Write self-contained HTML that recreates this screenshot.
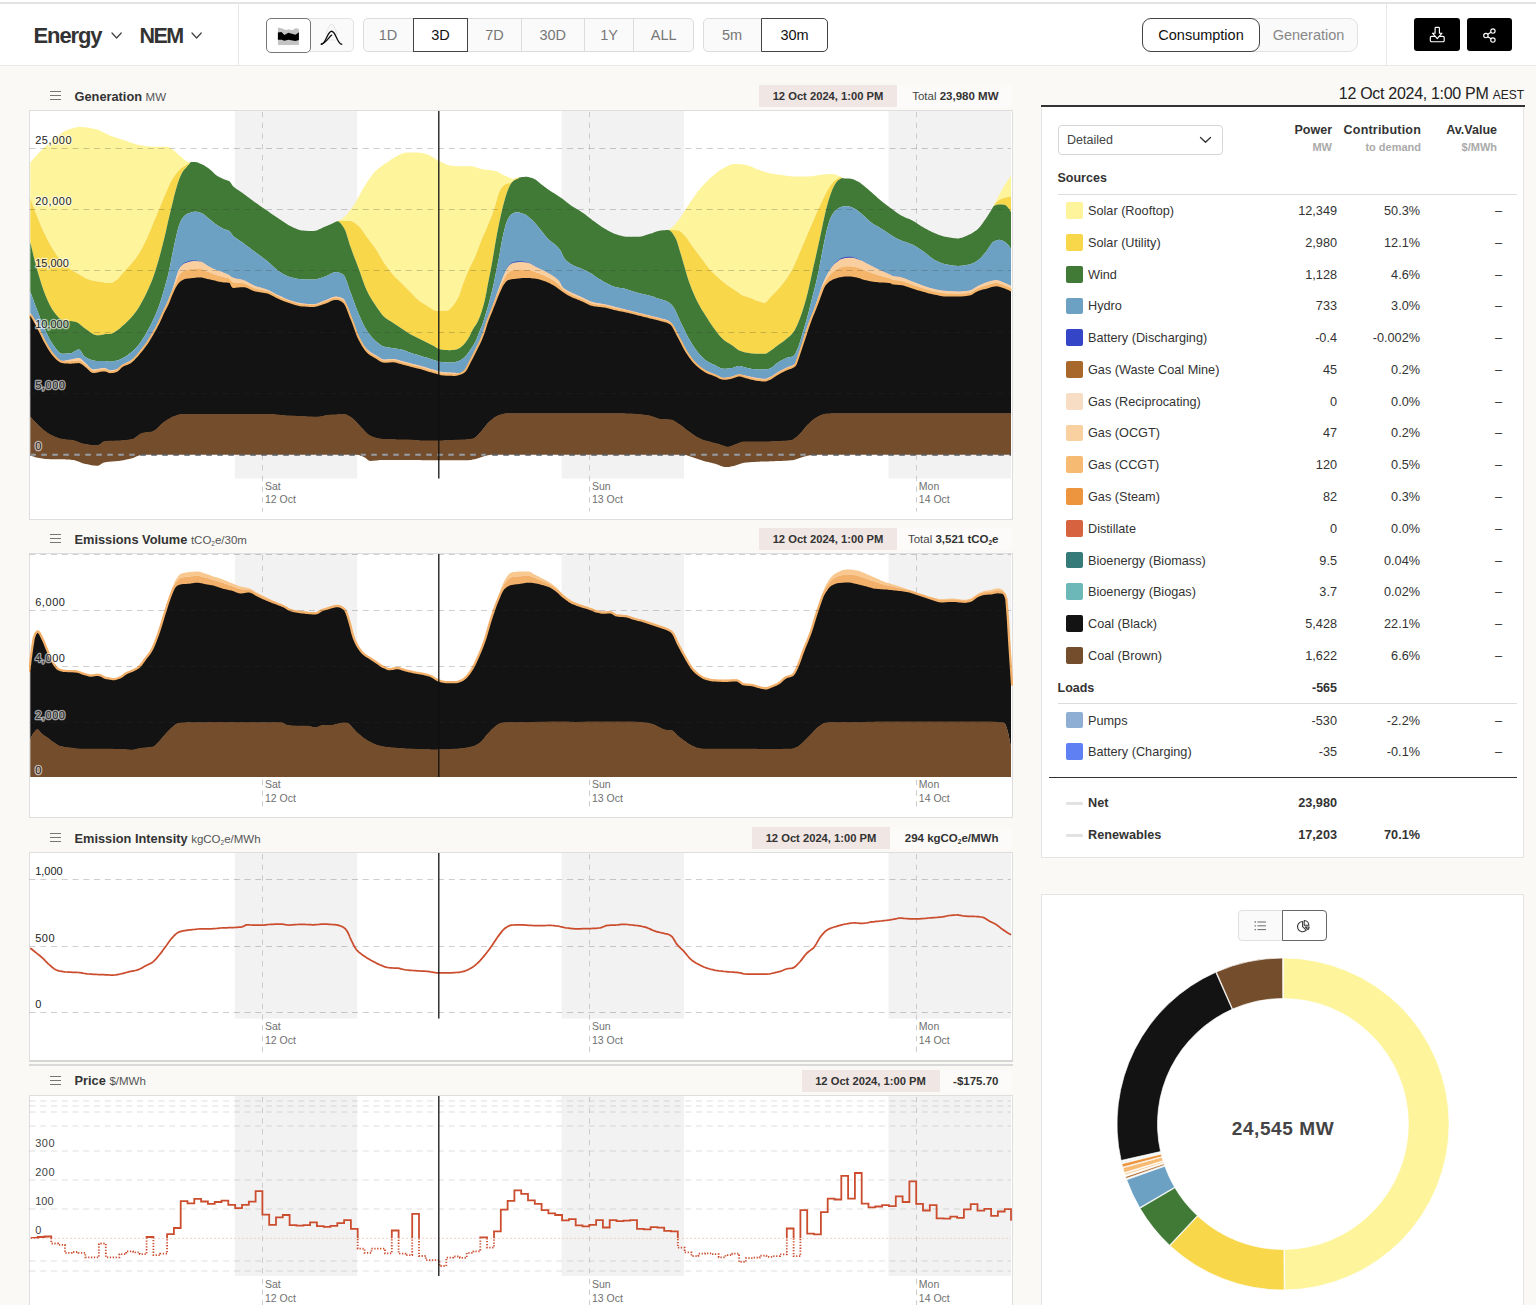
<!DOCTYPE html><html lang="en"><head><meta charset="utf-8"><title>Open Electricity: NEM</title><style>
*{box-sizing:border-box;margin:0;padding:0}
html,body{width:1536px;height:1305px;overflow:hidden;background:#faf9f6;font-family:"Liberation Sans",sans-serif;color:#333}
.abs{position:absolute}
#hdr{position:absolute;left:0;top:0;width:1536px;height:66px;background:#fff;border-bottom:1px solid #e8e8e8}
#hdr:before{content:'';position:absolute;left:0;top:1.5px;width:100%;height:2px;background:#e3e3e3}
.vdiv{position:absolute;top:3px;width:1px;height:62px;background:#e8e8e8}
.ttl{position:absolute;font-weight:bold;font-size:22px;color:#333;line-height:24px;letter-spacing:-0.9px;white-space:nowrap}
.grp{position:absolute;top:18px;height:34px;border:1px solid #dcdcdc;border-radius:5px;background:#fafafa}
.btn{position:absolute;top:18px;height:34px;font-size:14.5px;line-height:34px;text-align:center;color:#777;white-space:nowrap}
.btn.sel{background:#fff;border:1px solid #444;color:#111;line-height:32px}
.sep{position:absolute;top:19px;width:1px;height:32px;background:#dcdcdc}
.ct{position:absolute;font-size:12.8px;font-weight:bold;color:#333;white-space:nowrap;line-height:14px}
.ct span{font-weight:normal;font-size:11.5px;color:#555}
.ham{position:absolute;width:11px;height:1.1px;background:#777}
.tag{position:absolute;height:22px;background:#f0e6e3;font-size:11.2px;font-weight:bold;color:#333;text-align:center;line-height:22px;white-space:nowrap}
.tot{position:absolute;height:22px;background:#fcfbf9;font-size:11.5px;color:#444;line-height:22px;white-space:nowrap;text-align:right;padding-right:13px}
.tot b{color:#333}
.cbox{position:absolute;left:29px;width:984px;background:#fff;border:1px solid #dedede}
.row{position:absolute;left:1041px;width:483px;height:20px;font-size:12.7px;line-height:20px;color:#333;white-space:nowrap}
.row .sw{position:absolute;left:25.4px;top:1.3px;width:16.6px;height:16.6px;border-radius:2px}
.row .lb{position:absolute;left:47px;top:0}
.row .pw{position:absolute;right:187px;top:0;text-align:right}
.row .cn{position:absolute;right:104px;top:0;text-align:right}
.row .av{position:absolute;right:22px;top:0;text-align:right}
.hd{position:absolute;font-size:12.5px;font-weight:bold;color:#333;text-align:right;white-space:nowrap;line-height:14px}
.hd2{position:absolute;font-size:11px;font-weight:bold;color:#aaa;text-align:right;white-space:nowrap;line-height:14px}
sub.s{font-size:6.5px;vertical-align:baseline;position:relative;top:2px}
</style></head><body>
<div id="hdr"></div>
<div class="vdiv" style="left:238px"></div><div class="vdiv" style="left:1386px"></div>
<div class="ttl" style="left:33.5px;top:24px;letter-spacing:-1.1px">Energy</div>
<svg class="abs" style="left:110.6px;top:31.8px" width="11.2" height="7.0" viewBox="-1 -1 11.2 7.0"><path d="M0 0 L4.6 5.0 L9.2 0" fill="none" stroke="#444" stroke-width="1.3" stroke-linecap="round" stroke-linejoin="round"/></svg>
<div class="ttl" style="left:139.5px;top:24px;font-size:21.5px;letter-spacing:-1.6px">NEM</div>
<svg class="abs" style="left:191.3px;top:31.8px" width="11.2" height="7.0" viewBox="-1 -1 11.2 7.0"><path d="M0 0 L4.6 5.0 L9.2 0" fill="none" stroke="#444" stroke-width="1.3" stroke-linecap="round" stroke-linejoin="round"/></svg>
<div class="grp" style="left:266px;width:88px;top:17.7px;height:34.6px;border-color:#e2e2e2"></div>
<div class="btn sel" style="left:266px;width:44.5px;border-radius:5px;border-color:#777;top:17.5px;height:35px"></div>
<svg class="abs" style="left:277px;top:26px" width="23" height="20" viewBox="0 0 23 20"><path d="M0.9 1.5 L4.5 2.3 L9 3.9 L11.6 3.3 L15.5 4.2 L18.8 2 L21.9 3.1 L21.9 18.9 L0.9 18.9 Z" fill="#c4c4c4"/><path d="M0.9 6.5 L4.5 6 L7.4 8.9 L11.3 6.7 L18.5 8.8 L21.9 6.2 L21.9 14 L18.5 15 L11.3 13.7 L7.4 14.7 L4.5 13.7 L0.9 13.7 Z" fill="#000"/></svg>
<svg class="abs" style="left:320px;top:24px" width="24" height="22" viewBox="0 0 24 22"><path d="M5.8 10.5 C8 4.5 9.5 0.5 11.6 0.5 C13.7 0.5 15 4.5 17.2 10.5" fill="none" stroke="#dcdcdc" stroke-width="0.8"/><path d="M8.5 16.5 C10.5 15.6 12.8 15.6 14.8 16.5" fill="none" stroke="#e2e2e2" stroke-width="0.8"/><path d="M1.2 20.2 C6 20.2 7.2 7.2 11.6 7.2 C16 7.2 17.2 20.2 21.7 20.2" fill="none" stroke="#111" stroke-width="1.35" stroke-linecap="round"/><path d="M1.6 20 C5.8 19 8.5 13.8 11.6 11.1" fill="none" stroke="#111" stroke-width="1.35" stroke-linecap="round"/></svg>
<div class="grp" style="left:363px;width:331px"></div>
<div class="btn" style="left:363px;width:50px">1D</div>
<div class="btn sel" style="left:413px;width:55px">3D</div>
<div class="btn" style="left:468px;width:53px">7D</div>
<div class="btn" style="left:521px;width:63.5px">30D</div>
<div class="sep" style="left:520.5px"></div>
<div class="btn" style="left:584.5px;width:49.0px">1Y</div>
<div class="sep" style="left:584.0px"></div>
<div class="btn" style="left:633.5px;width:60.5px">ALL</div>
<div class="sep" style="left:633.0px"></div>
<div class="grp" style="left:703px;width:125px"></div>
<div class="btn" style="left:703px;width:58px">5m</div>
<div class="btn sel" style="left:761px;width:67px;border-radius:0 5px 5px 0">30m</div>
<div class="grp" style="left:1142px;width:216px;border-radius:9px;border-color:#e2e2e2"></div>
<div class="btn sel" style="left:1142px;width:118px;border-radius:9px;font-size:14.5px">Consumption</div>
<div class="btn" style="left:1260px;width:97px;font-size:14.5px;color:#888">Generation</div>
<div class="abs" style="left:1414.4px;top:18.4px;width:45.7px;height:33px;background:#000;border-radius:3px"></div>
<div class="abs" style="left:1466.8px;top:18.4px;width:45.6px;height:33px;background:#000;border-radius:3px"></div>
<svg class="abs" style="left:1429px;top:26px" width="17" height="17" viewBox="0 0 17 17" fill="none" stroke="#fff" stroke-width="1.15" stroke-linejoin="round" stroke-linecap="round"><rect x="1.3" y="10.3" width="13.9" height="5.4" rx="1.3"/><path d="M6.1 2.2 Q6.1 1.3 7 1.3 H9.5 Q10.4 1.3 10.4 2.2 V7.2 H13 L8.25 12.6 L3.5 7.2 H6.1 Z" fill="#000"/></svg>
<svg class="abs" style="left:1482px;top:27.6px" width="15" height="15" viewBox="0 0 15 15" fill="none" stroke="#fff" stroke-width="1.15"><circle cx="10.9" cy="3" r="2.2"/><circle cx="3.9" cy="7.5" r="2.2"/><circle cx="10.9" cy="12" r="2.2"/><path d="M5.8 6.3 L9 4.2 M5.8 8.7 L9 10.8"/></svg>
<div class="ham" style="left:50px;top:91.3px"></div>
<div class="ham" style="left:50px;top:95.3px"></div>
<div class="ham" style="left:50px;top:99.3px"></div>
<div class="ct" style="left:74.5px;top:89.5px">Generation <span>MW</span></div>
<div class="tag" style="left:759px;top:85px;width:138px">12 Oct 2024, 1:00 PM</div>
<div class="tot" style="left:897px;top:85px;width:114.5px">Total <b>23,980 MW</b></div>
<div class="cbox" style="top:110px;height:410px;"></div>
<svg class="abs" style="left:29px;top:110px" width="984" height="410" viewBox="0 0 984 410" font-family="Liberation Sans, sans-serif"><rect x="205.8" y="1" width="122.4" height="367.5" fill="#f2f2f2"/><rect x="532.6" y="1" width="122.5" height="367.5" fill="#f2f2f2"/><rect x="859.5" y="1" width="122.5" height="367.5" fill="#f2f2f2"/><path d="M233.5 2 V401.5" stroke="#cbcbcb" stroke-width="1" stroke-dasharray="5.3 5.4" fill="none"/><path d="M560.5 2 V401.5" stroke="#cbcbcb" stroke-width="1" stroke-dasharray="5.3 5.4" fill="none"/><path d="M887.5 2 V401.5" stroke="#cbcbcb" stroke-width="1" stroke-dasharray="5.3 5.4" fill="none"/><path d="M1.3 52.4 L2.8 50.7 L4.3 49.0 L5.8 47.3 L7.3 45.7 L8.8 44.1 L10.3 42.6 L11.8 41.0 L13.3 39.6 L14.8 38.1 L16.3 36.6 L17.8 35.2 L19.3 33.8 L20.8 32.4 L22.3 31.0 L23.8 29.7 L25.3 28.5 L26.8 27.3 L28.3 26.2 L29.8 25.1 L31.3 24.0 L32.8 23.0 L34.3 22.0 L35.8 21.1 L37.3 20.4 L38.8 19.8 L40.3 19.3 L41.8 18.8 L43.3 18.4 L44.8 18.0 L46.3 17.6 L47.8 17.3 L49.3 17.1 L50.8 17.0 L52.3 17.0 L53.8 17.1 L55.3 17.2 L56.8 17.4 L58.3 17.6 L59.8 17.8 L61.3 18.1 L62.8 18.4 L64.3 18.7 L65.8 19.0 L67.3 19.3 L68.8 19.8 L70.3 20.3 L71.8 21.0 L73.3 21.7 L74.8 22.5 L76.3 23.2 L77.8 24.0 L79.3 24.7 L80.8 25.4 L82.3 25.9 L83.8 26.5 L85.3 27.0 L86.8 27.5 L88.3 28.0 L89.8 28.5 L91.3 29.0 L92.8 29.5 L94.3 30.0 L95.8 30.4 L97.3 30.9 L98.8 31.4 L100.3 31.9 L101.8 32.4 L103.3 32.9 L104.8 33.4 L106.3 33.9 L107.8 34.4 L109.3 34.8 L110.8 35.1 L112.3 35.4 L113.8 35.6 L115.3 35.9 L116.8 36.1 L118.3 36.3 L119.8 36.4 L121.3 36.6 L122.8 36.7 L124.3 36.8 L125.8 36.8 L127.3 36.8 L128.8 36.8 L130.3 36.8 L131.8 36.8 L133.3 36.8 L134.8 36.8 L136.3 36.8 L137.8 36.8 L139.3 37.1 L140.8 37.8 L142.3 38.7 L143.8 39.7 L145.3 40.8 L146.8 42.0 L148.3 43.5 L149.8 44.9 L151.3 46.2 L152.8 47.5 L154.3 48.8 L155.8 50.1 L157.3 51.2 L158.8 51.8 L160.3 51.9 L161.8 51.9 L163.3 51.9 L164.8 51.9 L166.3 51.9 L167.8 52.3 L169.3 52.8 L170.8 53.4 L172.3 54.1 L173.8 54.8 L175.3 55.6 L176.8 56.5 L178.3 57.5 L179.8 58.6 L181.3 59.7 L182.8 61.0 L184.3 62.5 L185.8 63.9 L187.3 65.2 L188.8 66.2 L190.3 67.0 L191.8 67.8 L193.3 68.5 L194.8 69.2 L196.3 69.8 L197.8 70.3 L199.3 70.8 L200.8 71.5 L202.3 73.8 L203.8 75.9 L205.3 77.3 L206.8 78.5 L208.3 79.6 L209.8 80.6 L211.3 81.5 L212.8 82.5 L214.3 83.5 L215.8 84.7 L217.3 85.8 L218.8 86.9 L220.3 88.1 L221.8 89.2 L223.3 90.3 L224.8 91.4 L226.3 92.5 L227.8 93.6 L229.3 94.6 L230.8 95.7 L232.3 96.7 L233.8 97.7 L235.3 98.7 L236.8 99.8 L238.3 100.8 L239.8 101.8 L241.3 102.9 L242.8 104.0 L244.3 105.0 L245.8 106.1 L247.3 107.1 L248.8 108.1 L250.3 109.1 L251.8 110.1 L253.3 111.1 L254.8 112.1 L256.3 113.1 L257.8 114.1 L259.3 115.0 L260.8 115.8 L262.3 116.5 L263.8 117.2 L265.3 118.0 L266.8 118.6 L268.3 119.3 L269.8 119.8 L271.3 120.2 L272.8 120.4 L274.3 120.6 L275.8 120.7 L277.3 120.8 L278.8 120.9 L280.3 120.9 L281.8 121.0 L283.3 121.0 L284.8 121.0 L286.3 120.8 L287.8 120.4 L289.3 119.8 L290.8 119.1 L292.3 118.4 L293.8 117.6 L295.3 116.9 L296.8 116.3 L298.3 115.7 L299.8 115.0 L301.3 114.4 L302.8 113.7 L304.3 113.0 L305.8 112.3 L307.3 111.6 L308.8 111.0 L310.3 110.3 L311.8 109.6 L313.3 108.7 L314.8 107.5 L316.3 106.1 L317.8 104.5 L319.3 102.7 L320.8 100.7 L322.3 98.7 L323.8 96.7 L325.3 94.5 L326.8 92.0 L328.3 89.3 L329.8 86.5 L331.3 83.7 L332.8 80.9 L334.3 78.3 L335.8 75.9 L337.3 73.6 L338.8 71.2 L340.3 69.0 L341.8 66.9 L343.3 64.8 L344.8 63.0 L346.3 61.3 L347.8 59.9 L349.3 58.6 L350.8 57.4 L352.3 56.3 L353.8 55.3 L355.3 54.3 L356.8 53.3 L358.3 52.3 L359.8 51.2 L361.3 50.2 L362.8 49.1 L364.3 48.2 L365.8 47.2 L367.3 46.4 L368.8 45.6 L370.3 44.9 L371.8 44.3 L373.3 43.6 L374.8 43.1 L376.3 42.7 L377.8 42.5 L379.3 42.5 L380.8 42.5 L382.3 42.5 L383.8 42.5 L385.3 42.5 L386.8 42.5 L388.3 42.5 L389.8 42.5 L391.3 42.7 L392.8 42.9 L394.3 43.3 L395.8 43.7 L397.3 44.2 L398.8 44.7 L400.3 45.3 L401.8 45.9 L403.3 46.7 L404.8 47.7 L406.3 48.7 L407.8 49.7 L409.3 50.6 L410.8 51.4 L412.3 52.1 L413.8 52.9 L415.3 53.6 L416.8 54.2 L418.3 54.8 L419.8 55.2 L421.3 55.4 L422.8 55.7 L424.3 55.9 L425.8 56.0 L427.3 56.2 L428.8 56.3 L430.3 56.3 L431.8 56.3 L433.3 56.3 L434.8 56.3 L436.3 56.3 L437.8 56.3 L439.3 56.3 L440.8 56.3 L442.3 56.3 L443.8 56.5 L445.3 56.8 L446.8 57.3 L448.3 57.8 L449.8 58.3 L451.3 58.7 L452.8 59.1 L454.3 59.4 L455.8 59.6 L457.3 59.8 L458.8 59.9 L460.3 60.1 L461.8 60.3 L463.3 60.5 L464.8 60.7 L466.3 61.0 L467.8 61.5 L469.3 62.1 L470.8 62.9 L472.3 63.8 L473.8 64.7 L475.3 65.5 L476.8 66.1 L478.3 66.8 L479.8 67.5 L481.3 68.1 L482.8 68.5 L484.3 68.7 L485.8 68.6 L487.3 68.3 L488.8 67.8 L490.3 67.4 L491.8 67.2 L493.3 67.0 L494.8 66.9 L496.3 66.8 L497.8 66.8 L499.3 67.0 L500.8 67.4 L502.3 67.8 L503.8 68.3 L505.3 68.9 L506.8 69.8 L508.3 70.9 L509.8 72.2 L511.3 73.5 L512.8 74.7 L514.3 75.8 L515.8 77.0 L517.3 78.1 L518.8 79.2 L520.3 80.3 L521.8 81.3 L523.3 82.2 L524.8 83.1 L526.3 84.0 L527.8 84.9 L529.3 85.9 L530.8 86.9 L532.3 87.9 L533.8 89.1 L535.3 90.3 L536.8 91.5 L538.3 92.7 L539.8 93.8 L541.3 94.9 L542.8 95.9 L544.3 96.9 L545.8 97.8 L547.3 98.7 L548.8 99.6 L550.3 100.5 L551.8 101.4 L553.3 102.5 L554.8 103.5 L556.3 104.6 L557.8 105.8 L559.3 107.0 L560.8 108.1 L562.3 109.3 L563.8 110.4 L565.3 111.5 L566.8 112.6 L568.3 113.7 L569.8 114.8 L571.3 115.8 L572.8 116.9 L574.3 117.8 L575.8 118.7 L577.3 119.6 L578.8 120.5 L580.3 121.3 L581.8 122.1 L583.3 122.8 L584.8 123.5 L586.3 124.0 L587.8 124.5 L589.3 125.0 L590.8 125.4 L592.3 125.8 L593.8 126.2 L595.3 126.5 L596.8 126.7 L598.3 126.7 L599.8 126.7 L601.3 126.7 L602.8 126.7 L604.3 126.7 L605.8 126.7 L607.3 126.7 L608.8 126.7 L610.3 126.7 L611.8 126.5 L613.3 126.2 L614.8 125.7 L616.3 125.3 L617.8 124.8 L619.3 124.3 L620.8 123.8 L622.3 123.4 L623.8 122.9 L625.3 122.3 L626.8 121.8 L628.3 121.3 L629.8 120.9 L631.3 120.6 L632.8 120.4 L634.3 120.3 L635.8 120.2 L637.3 120.1 L638.8 119.9 L640.3 119.6 L641.8 118.6 L643.3 117.3 L644.8 115.7 L646.3 113.9 L647.8 112.1 L649.3 110.3 L650.8 108.4 L652.3 106.2 L653.8 103.9 L655.3 101.5 L656.8 99.1 L658.3 96.7 L659.8 94.4 L661.3 92.2 L662.8 90.1 L664.3 87.9 L665.8 85.7 L667.3 83.6 L668.8 81.6 L670.3 79.7 L671.8 77.9 L673.3 76.2 L674.8 74.5 L676.3 73.0 L677.8 71.5 L679.3 70.0 L680.8 68.6 L682.3 67.3 L683.8 66.0 L685.3 64.7 L686.8 63.4 L688.3 62.2 L689.8 61.0 L691.3 60.0 L692.8 59.0 L694.3 58.2 L695.8 57.4 L697.3 56.6 L698.8 55.9 L700.3 55.2 L701.8 54.6 L703.3 54.2 L704.8 53.9 L706.3 53.9 L707.8 53.9 L709.3 54.0 L710.8 54.2 L712.3 54.3 L713.8 54.6 L715.3 54.8 L716.8 55.1 L718.3 55.3 L719.8 55.7 L721.3 56.2 L722.8 56.8 L724.3 57.5 L725.8 58.2 L727.3 58.9 L728.8 59.5 L730.3 60.1 L731.8 60.6 L733.3 61.1 L734.8 61.6 L736.3 62.1 L737.8 62.6 L739.3 63.0 L740.8 63.3 L742.3 63.6 L743.8 63.8 L745.3 64.0 L746.8 64.2 L748.3 64.4 L749.8 64.6 L751.3 64.8 L752.8 64.9 L754.3 65.2 L755.8 65.4 L757.3 65.7 L758.8 66.0 L760.3 66.2 L761.8 66.3 L763.3 66.4 L764.8 66.4 L766.3 66.4 L767.8 66.4 L769.3 66.4 L770.8 66.4 L772.3 66.4 L773.8 66.4 L775.3 66.4 L776.8 66.4 L778.3 66.4 L779.8 66.4 L781.3 66.3 L782.8 66.2 L784.3 65.9 L785.8 65.7 L787.3 65.4 L788.8 65.2 L790.3 65.0 L791.8 64.8 L793.3 64.6 L794.8 64.5 L796.3 64.3 L797.8 64.2 L799.3 64.0 L800.8 64.0 L802.3 63.9 L803.8 64.1 L805.3 64.3 L806.8 64.7 L808.3 65.3 L809.8 65.8 L811.3 66.7 L812.8 67.8 L814.3 68.2 L815.8 68.4 L817.3 68.5 L818.8 68.5 L820.3 68.6 L821.8 68.8 L823.3 69.1 L824.8 69.6 L826.3 70.2 L827.8 71.0 L829.3 71.7 L830.8 72.6 L832.3 73.7 L833.8 74.9 L835.3 76.1 L836.8 77.4 L838.3 78.6 L839.8 79.9 L841.3 81.3 L842.8 82.6 L844.3 83.9 L845.8 85.3 L847.3 86.6 L848.8 87.9 L850.3 89.2 L851.8 90.5 L853.3 91.7 L854.8 92.9 L856.3 94.0 L857.8 95.2 L859.3 96.3 L860.8 97.4 L862.3 98.5 L863.8 99.7 L865.3 100.8 L866.8 101.9 L868.3 103.0 L869.8 104.1 L871.3 105.0 L872.8 105.8 L874.3 106.6 L875.8 107.2 L877.3 107.9 L878.8 108.5 L880.3 109.1 L881.8 109.8 L883.3 110.5 L884.8 111.3 L886.3 112.2 L887.8 113.2 L889.3 114.2 L890.8 115.2 L892.3 116.2 L893.8 117.1 L895.3 117.9 L896.8 118.8 L898.3 119.6 L899.8 120.4 L901.3 121.1 L902.8 121.9 L904.3 122.6 L905.8 123.2 L907.3 123.8 L908.8 124.4 L910.3 124.9 L911.8 125.5 L913.3 126.0 L914.8 126.4 L916.3 126.8 L917.8 127.1 L919.3 127.3 L920.8 127.6 L922.3 127.8 L923.8 128.0 L925.3 128.2 L926.8 128.3 L928.3 128.4 L929.8 128.4 L931.3 128.1 L932.8 127.7 L934.3 127.2 L935.8 126.6 L937.3 126.0 L938.8 125.3 L940.3 124.6 L941.8 123.9 L943.3 123.1 L944.8 122.1 L946.3 121.1 L947.8 119.9 L949.3 118.5 L950.8 116.9 L952.3 115.0 L953.8 112.9 L955.3 110.8 L956.8 108.7 L958.3 106.5 L959.8 104.1 L961.3 101.7 L962.8 99.2 L964.3 96.5 L965.8 93.7 L967.3 90.6 L968.8 87.5 L970.3 84.6 L971.8 81.8 L973.3 79.2 L974.8 76.6 L976.3 74.2 L977.8 71.8 L979.3 69.5 L982.0 65.8 L982.0 86.5 L979.3 86.9 L977.8 87.3 L976.3 87.7 L974.8 88.1 L973.3 88.6 L971.8 89.3 L970.3 90.0 L968.8 91.0 L967.3 92.4 L965.8 94.0 L964.3 96.5 L962.8 99.2 L961.3 101.7 L959.8 104.1 L958.3 106.5 L956.8 108.7 L955.3 110.8 L953.8 112.9 L952.3 115.0 L950.8 116.9 L949.3 118.5 L947.8 119.9 L946.3 121.1 L944.8 122.1 L943.3 123.1 L941.8 123.9 L940.3 124.6 L938.8 125.3 L937.3 126.0 L935.8 126.6 L934.3 127.2 L932.8 127.7 L931.3 128.1 L929.8 128.4 L928.3 128.4 L926.8 128.3 L925.3 128.2 L923.8 128.0 L922.3 127.8 L920.8 127.6 L919.3 127.3 L917.8 127.1 L916.3 126.8 L914.8 126.4 L913.3 126.0 L911.8 125.5 L910.3 124.9 L908.8 124.4 L907.3 123.8 L905.8 123.2 L904.3 122.6 L902.8 121.9 L901.3 121.1 L899.8 120.4 L898.3 119.6 L896.8 118.8 L895.3 117.9 L893.8 117.1 L892.3 116.2 L890.8 115.2 L889.3 114.2 L887.8 113.2 L886.3 112.2 L884.8 111.3 L883.3 110.5 L881.8 109.8 L880.3 109.1 L878.8 108.5 L877.3 107.9 L875.8 107.2 L874.3 106.6 L872.8 105.8 L871.3 105.0 L869.8 104.1 L868.3 103.0 L866.8 101.9 L865.3 100.8 L863.8 99.7 L862.3 98.5 L860.8 97.4 L859.3 96.3 L857.8 95.2 L856.3 94.0 L854.8 92.9 L853.3 91.7 L851.8 90.5 L850.3 89.2 L848.8 87.9 L847.3 86.6 L845.8 85.3 L844.3 83.9 L842.8 82.6 L841.3 81.3 L839.8 79.9 L838.3 78.6 L836.8 77.4 L835.3 76.1 L833.8 74.9 L832.3 73.7 L830.8 72.6 L829.3 71.7 L827.8 71.0 L826.3 70.2 L824.8 69.6 L823.3 69.1 L821.8 68.8 L820.3 68.6 L818.8 68.5 L817.3 68.5 L815.8 68.4 L814.3 68.2 L812.8 67.8 L811.3 66.7 L809.8 67.9 L808.3 68.7 L806.8 69.8 L805.3 71.1 L803.8 72.6 L802.3 74.5 L800.8 76.6 L799.3 78.9 L797.8 81.5 L796.3 84.4 L794.8 87.6 L793.3 90.8 L791.8 93.9 L790.3 97.2 L788.8 100.5 L787.3 103.8 L785.8 107.3 L784.3 110.8 L782.8 114.3 L781.3 117.8 L779.8 121.3 L778.3 124.8 L776.8 128.3 L775.3 131.8 L773.8 135.3 L772.3 138.8 L770.8 142.3 L769.3 145.9 L767.8 149.6 L766.3 153.1 L764.8 156.4 L763.3 159.3 L761.8 162.0 L760.3 164.5 L758.8 166.8 L757.3 169.0 L755.8 171.1 L754.3 173.1 L752.8 175.0 L751.3 176.8 L749.8 178.6 L748.3 180.2 L746.8 181.8 L745.3 183.3 L743.8 184.8 L742.3 186.2 L740.8 187.7 L739.3 189.7 L737.8 191.6 L736.3 192.7 L734.8 192.7 L733.3 192.4 L731.8 192.0 L730.3 191.5 L728.8 190.9 L727.3 190.4 L725.8 189.9 L724.3 189.2 L722.8 188.6 L721.3 188.0 L719.8 187.4 L718.3 186.9 L716.8 186.4 L715.3 186.0 L713.8 185.5 L712.3 184.7 L710.8 183.7 L709.3 182.6 L707.8 181.5 L706.3 180.4 L704.8 179.4 L703.3 178.4 L701.8 177.4 L700.3 176.4 L698.8 175.4 L697.3 174.4 L695.8 173.2 L694.3 172.0 L692.8 170.8 L691.3 169.5 L689.8 168.2 L688.3 166.8 L686.8 165.4 L685.3 164.0 L683.8 162.5 L682.3 161.0 L680.8 159.4 L679.3 157.6 L677.8 155.7 L676.3 153.7 L674.8 151.6 L673.3 149.5 L671.8 147.5 L670.3 145.5 L668.8 143.5 L667.3 141.5 L665.8 139.5 L664.3 137.5 L662.8 135.4 L661.3 133.2 L659.8 130.9 L658.3 128.8 L656.8 126.8 L655.3 125.2 L653.8 123.7 L652.3 122.2 L650.8 121.1 L649.3 120.5 L647.8 120.3 L646.3 120.2 L644.8 120.1 L643.3 120.0 L641.8 119.9 L640.3 119.9 L638.8 119.9 L637.3 120.1 L635.8 120.2 L634.3 120.3 L632.8 120.4 L631.3 120.6 L629.8 120.9 L628.3 121.3 L626.8 121.8 L625.3 122.3 L623.8 122.9 L622.3 123.4 L620.8 123.8 L619.3 124.3 L617.8 124.8 L616.3 125.3 L614.8 125.7 L613.3 126.2 L611.8 126.5 L610.3 126.7 L608.8 126.7 L607.3 126.7 L605.8 126.7 L604.3 126.7 L602.8 126.7 L601.3 126.7 L599.8 126.7 L598.3 126.7 L596.8 126.7 L595.3 126.5 L593.8 126.2 L592.3 125.8 L590.8 125.4 L589.3 125.0 L587.8 124.5 L586.3 124.0 L584.8 123.5 L583.3 122.8 L581.8 122.1 L580.3 121.3 L578.8 120.5 L577.3 119.6 L575.8 118.7 L574.3 117.8 L572.8 116.9 L571.3 115.8 L569.8 114.8 L568.3 113.7 L566.8 112.6 L565.3 111.5 L563.8 110.4 L562.3 109.3 L560.8 108.1 L559.3 107.0 L557.8 105.8 L556.3 104.6 L554.8 103.5 L553.3 102.5 L551.8 101.4 L550.3 100.5 L548.8 99.6 L547.3 98.7 L545.8 97.8 L544.3 96.9 L542.8 95.9 L541.3 94.9 L539.8 93.8 L538.3 92.7 L536.8 91.5 L535.3 90.3 L533.8 89.1 L532.3 87.9 L530.8 86.9 L529.3 85.9 L527.8 84.9 L526.3 84.0 L524.8 83.1 L523.3 82.2 L521.8 81.3 L520.3 80.3 L518.8 79.2 L517.3 78.1 L515.8 77.0 L514.3 75.8 L512.8 74.7 L511.3 73.5 L509.8 72.2 L508.3 70.9 L506.8 69.8 L505.3 68.9 L503.8 68.3 L502.3 67.8 L500.8 67.4 L499.3 67.0 L497.8 66.8 L496.3 66.8 L494.8 66.9 L493.3 67.0 L491.8 67.2 L490.3 67.4 L488.8 67.8 L487.3 68.3 L485.8 69.4 L484.3 70.8 L482.8 72.0 L481.3 72.8 L479.8 73.3 L478.3 73.7 L476.8 74.1 L475.3 74.9 L473.8 76.3 L472.3 78.3 L470.8 80.7 L469.3 84.4 L467.8 89.7 L466.3 95.3 L464.8 100.2 L463.3 104.3 L461.8 108.1 L460.3 111.8 L458.8 115.5 L457.3 119.0 L455.8 122.4 L454.3 125.8 L452.8 129.3 L451.3 133.0 L449.8 137.0 L448.3 141.0 L446.8 144.9 L445.3 148.5 L443.8 151.6 L442.3 154.6 L440.8 157.6 L439.3 160.8 L437.8 164.3 L436.3 168.0 L434.8 171.9 L433.3 176.0 L431.8 180.7 L430.3 184.9 L428.8 188.3 L427.3 191.0 L425.8 193.2 L424.3 195.2 L422.8 196.9 L421.3 198.7 L419.8 200.1 L418.3 200.6 L416.8 200.7 L415.3 200.7 L413.8 200.8 L412.3 200.8 L410.8 200.9 L409.3 201.2 L407.8 201.1 L406.3 200.7 L404.8 200.0 L403.3 199.2 L401.8 198.2 L400.3 197.2 L398.8 196.2 L397.3 195.3 L395.8 194.4 L394.3 193.5 L392.8 192.5 L391.3 191.5 L389.8 190.4 L388.3 189.1 L386.8 187.7 L385.3 186.2 L383.8 184.6 L382.3 183.0 L380.8 181.5 L379.3 180.0 L377.8 178.5 L376.3 177.0 L374.8 175.5 L373.3 174.0 L371.8 172.5 L370.3 171.0 L368.8 169.6 L367.3 168.2 L365.8 166.7 L364.3 165.1 L362.8 163.3 L361.3 161.5 L359.8 159.5 L358.3 157.5 L356.8 155.4 L355.3 153.2 L353.8 150.9 L352.3 148.3 L350.8 145.7 L349.3 143.1 L347.8 140.6 L346.3 138.3 L344.8 136.2 L343.3 134.2 L341.8 132.2 L340.3 130.3 L338.8 128.3 L337.3 126.3 L335.8 124.1 L334.3 121.9 L332.8 119.7 L331.3 117.8 L329.8 116.3 L328.3 115.0 L326.8 113.8 L325.3 112.7 L323.8 111.8 L322.3 111.2 L320.8 111.1 L319.3 111.1 L317.8 111.1 L316.3 111.1 L314.8 111.1 L313.3 111.1 L311.8 111.1 L310.3 111.1 L308.8 111.1 L307.3 111.6 L305.8 112.3 L304.3 113.0 L302.8 113.7 L301.3 114.4 L299.8 115.0 L298.3 115.7 L296.8 116.3 L295.3 116.9 L293.8 117.6 L292.3 118.4 L290.8 119.1 L289.3 119.8 L287.8 120.4 L286.3 120.8 L284.8 121.0 L283.3 121.0 L281.8 121.0 L280.3 120.9 L278.8 120.9 L277.3 120.8 L275.8 120.7 L274.3 120.6 L272.8 120.4 L271.3 120.2 L269.8 119.8 L268.3 119.3 L266.8 118.6 L265.3 118.0 L263.8 117.2 L262.3 116.5 L260.8 115.8 L259.3 115.0 L257.8 114.1 L256.3 113.1 L254.8 112.1 L253.3 111.1 L251.8 110.1 L250.3 109.1 L248.8 108.1 L247.3 107.1 L245.8 106.1 L244.3 105.0 L242.8 104.0 L241.3 102.9 L239.8 101.8 L238.3 100.8 L236.8 99.8 L235.3 98.7 L233.8 97.7 L232.3 96.7 L230.8 95.7 L229.3 94.6 L227.8 93.6 L226.3 92.5 L224.8 91.4 L223.3 90.3 L221.8 89.2 L220.3 88.1 L218.8 86.9 L217.3 85.8 L215.8 84.7 L214.3 83.5 L212.8 82.5 L211.3 81.5 L209.8 80.6 L208.3 79.6 L206.8 78.5 L205.3 77.3 L203.8 75.9 L202.3 73.8 L200.8 71.5 L199.3 70.8 L197.8 70.3 L196.3 69.8 L194.8 69.2 L193.3 68.5 L191.8 67.8 L190.3 67.0 L188.8 66.2 L187.3 65.2 L185.8 63.9 L184.3 62.5 L182.8 61.0 L181.3 59.7 L179.8 58.6 L178.3 57.5 L176.8 56.5 L175.3 55.6 L173.8 54.8 L172.3 54.1 L170.8 53.4 L169.3 52.8 L167.8 52.3 L166.3 51.9 L164.8 51.9 L163.3 51.9 L161.8 52.0 L160.3 53.1 L158.8 54.1 L157.3 54.9 L155.8 55.7 L154.3 56.7 L152.8 57.8 L151.3 59.1 L149.8 60.6 L148.3 62.3 L146.8 64.1 L145.3 66.2 L143.8 68.5 L142.3 71.0 L140.8 73.9 L139.3 77.2 L137.8 80.7 L136.3 84.2 L134.8 87.8 L133.3 91.4 L131.8 95.1 L130.3 98.7 L128.8 102.3 L127.3 105.9 L125.8 109.5 L124.3 113.1 L122.8 116.7 L121.3 120.3 L119.8 124.0 L118.3 127.5 L116.8 130.7 L115.3 133.8 L113.8 136.7 L112.3 139.4 L110.8 142.0 L109.3 144.5 L107.8 146.8 L106.3 148.9 L104.8 150.8 L103.3 152.6 L101.8 154.4 L100.3 156.1 L98.8 157.7 L97.3 159.3 L95.8 160.9 L94.3 162.5 L92.8 164.3 L91.3 166.1 L89.8 167.9 L88.3 169.4 L86.8 170.5 L85.3 171.5 L83.8 172.4 L82.3 173.0 L80.8 173.1 L79.3 173.1 L77.8 172.9 L76.3 172.7 L74.8 172.4 L73.3 172.1 L71.8 171.9 L70.3 171.7 L68.8 171.5 L67.3 171.3 L65.8 171.0 L64.3 170.7 L62.8 170.4 L61.3 170.1 L59.8 169.6 L58.3 169.0 L56.8 168.2 L55.3 167.4 L53.8 166.6 L52.3 165.7 L50.8 164.8 L49.3 164.0 L47.8 163.2 L46.3 162.3 L44.8 161.5 L43.3 160.6 L41.8 159.6 L40.3 158.5 L38.8 157.4 L37.3 156.1 L35.8 154.7 L34.3 153.2 L32.8 151.5 L31.3 149.7 L29.8 147.8 L28.3 145.9 L26.8 143.8 L25.3 141.6 L23.8 139.2 L22.3 136.6 L20.8 134.0 L19.3 131.2 L17.8 128.3 L16.3 125.3 L14.8 122.2 L13.3 118.9 L11.8 115.4 L10.3 111.8 L8.8 108.1 L7.3 104.4 L5.8 100.5 L4.3 96.4 L2.8 92.3 L1.3 88.0 Z" fill="#fdf49b"/><path d="M1.3 88.0 L2.8 92.3 L4.3 96.4 L5.8 100.5 L7.3 104.4 L8.8 108.1 L10.3 111.8 L11.8 115.4 L13.3 118.9 L14.8 122.2 L16.3 125.3 L17.8 128.3 L19.3 131.2 L20.8 134.0 L22.3 136.6 L23.8 139.2 L25.3 141.6 L26.8 143.8 L28.3 145.9 L29.8 147.8 L31.3 149.7 L32.8 151.5 L34.3 153.2 L35.8 154.7 L37.3 156.1 L38.8 157.4 L40.3 158.5 L41.8 159.6 L43.3 160.6 L44.8 161.5 L46.3 162.3 L47.8 163.2 L49.3 164.0 L50.8 164.8 L52.3 165.7 L53.8 166.6 L55.3 167.4 L56.8 168.2 L58.3 169.0 L59.8 169.6 L61.3 170.1 L62.8 170.4 L64.3 170.7 L65.8 171.0 L67.3 171.3 L68.8 171.5 L70.3 171.7 L71.8 171.9 L73.3 172.1 L74.8 172.4 L76.3 172.7 L77.8 172.9 L79.3 173.1 L80.8 173.1 L82.3 173.0 L83.8 172.4 L85.3 171.5 L86.8 170.5 L88.3 169.4 L89.8 167.9 L91.3 166.1 L92.8 164.3 L94.3 162.5 L95.8 160.9 L97.3 159.3 L98.8 157.7 L100.3 156.1 L101.8 154.4 L103.3 152.6 L104.8 150.8 L106.3 148.9 L107.8 146.8 L109.3 144.5 L110.8 142.0 L112.3 139.4 L113.8 136.7 L115.3 133.8 L116.8 130.7 L118.3 127.5 L119.8 124.0 L121.3 120.3 L122.8 116.7 L124.3 113.1 L125.8 109.5 L127.3 105.9 L128.8 102.3 L130.3 98.7 L131.8 95.1 L133.3 91.4 L134.8 87.8 L136.3 84.2 L137.8 80.7 L139.3 77.2 L140.8 73.9 L142.3 71.0 L143.8 68.5 L145.3 66.2 L146.8 64.1 L148.3 62.3 L149.8 60.6 L151.3 59.1 L152.8 57.8 L154.3 56.7 L155.8 55.7 L157.3 54.9 L158.8 54.1 L160.3 53.1 L161.8 52.0 L163.3 51.9 L164.8 51.9 L166.3 51.9 L167.8 52.3 L169.3 52.8 L170.8 53.4 L172.3 54.1 L173.8 54.8 L175.3 55.6 L176.8 56.5 L178.3 57.5 L179.8 58.6 L181.3 59.7 L182.8 61.0 L184.3 62.5 L185.8 63.9 L187.3 65.2 L188.8 66.2 L190.3 67.0 L191.8 67.8 L193.3 68.5 L194.8 69.2 L196.3 69.8 L197.8 70.3 L199.3 70.8 L200.8 71.5 L202.3 73.8 L203.8 75.9 L205.3 77.3 L206.8 78.5 L208.3 79.6 L209.8 80.6 L211.3 81.5 L212.8 82.5 L214.3 83.5 L215.8 84.7 L217.3 85.8 L218.8 86.9 L220.3 88.1 L221.8 89.2 L223.3 90.3 L224.8 91.4 L226.3 92.5 L227.8 93.6 L229.3 94.6 L230.8 95.7 L232.3 96.7 L233.8 97.7 L235.3 98.7 L236.8 99.8 L238.3 100.8 L239.8 101.8 L241.3 102.9 L242.8 104.0 L244.3 105.0 L245.8 106.1 L247.3 107.1 L248.8 108.1 L250.3 109.1 L251.8 110.1 L253.3 111.1 L254.8 112.1 L256.3 113.1 L257.8 114.1 L259.3 115.0 L260.8 115.8 L262.3 116.5 L263.8 117.2 L265.3 118.0 L266.8 118.6 L268.3 119.3 L269.8 119.8 L271.3 120.2 L272.8 120.4 L274.3 120.6 L275.8 120.7 L277.3 120.8 L278.8 120.9 L280.3 120.9 L281.8 121.0 L283.3 121.0 L284.8 121.0 L286.3 120.8 L287.8 120.4 L289.3 119.8 L290.8 119.1 L292.3 118.4 L293.8 117.6 L295.3 116.9 L296.8 116.3 L298.3 115.7 L299.8 115.0 L301.3 114.4 L302.8 113.7 L304.3 113.0 L305.8 112.3 L307.3 111.6 L308.8 111.1 L310.3 111.1 L311.8 111.1 L313.3 111.1 L314.8 111.1 L316.3 111.1 L317.8 111.1 L319.3 111.1 L320.8 111.1 L322.3 111.2 L323.8 111.8 L325.3 112.7 L326.8 113.8 L328.3 115.0 L329.8 116.3 L331.3 117.8 L332.8 119.7 L334.3 121.9 L335.8 124.1 L337.3 126.3 L338.8 128.3 L340.3 130.3 L341.8 132.2 L343.3 134.2 L344.8 136.2 L346.3 138.3 L347.8 140.6 L349.3 143.1 L350.8 145.7 L352.3 148.3 L353.8 150.9 L355.3 153.2 L356.8 155.4 L358.3 157.5 L359.8 159.5 L361.3 161.5 L362.8 163.3 L364.3 165.1 L365.8 166.7 L367.3 168.2 L368.8 169.6 L370.3 171.0 L371.8 172.5 L373.3 174.0 L374.8 175.5 L376.3 177.0 L377.8 178.5 L379.3 180.0 L380.8 181.5 L382.3 183.0 L383.8 184.6 L385.3 186.2 L386.8 187.7 L388.3 189.1 L389.8 190.4 L391.3 191.5 L392.8 192.5 L394.3 193.5 L395.8 194.4 L397.3 195.3 L398.8 196.2 L400.3 197.2 L401.8 198.2 L403.3 199.2 L404.8 200.0 L406.3 200.7 L407.8 201.1 L409.3 201.2 L410.8 200.9 L412.3 200.8 L413.8 200.8 L415.3 200.7 L416.8 200.7 L418.3 200.6 L419.8 200.1 L421.3 198.7 L422.8 196.9 L424.3 195.2 L425.8 193.2 L427.3 191.0 L428.8 188.3 L430.3 184.9 L431.8 180.7 L433.3 176.0 L434.8 171.9 L436.3 168.0 L437.8 164.3 L439.3 160.8 L440.8 157.6 L442.3 154.6 L443.8 151.6 L445.3 148.5 L446.8 144.9 L448.3 141.0 L449.8 137.0 L451.3 133.0 L452.8 129.3 L454.3 125.8 L455.8 122.4 L457.3 119.0 L458.8 115.5 L460.3 111.8 L461.8 108.1 L463.3 104.3 L464.8 100.2 L466.3 95.3 L467.8 89.7 L469.3 84.4 L470.8 80.7 L472.3 78.3 L473.8 76.3 L475.3 74.9 L476.8 74.1 L478.3 73.7 L479.8 73.3 L481.3 72.8 L482.8 72.0 L484.3 70.8 L485.8 69.4 L487.3 68.3 L488.8 67.8 L490.3 67.4 L491.8 67.2 L493.3 67.0 L494.8 66.9 L496.3 66.8 L497.8 66.8 L499.3 67.0 L500.8 67.4 L502.3 67.8 L503.8 68.3 L505.3 68.9 L506.8 69.8 L508.3 70.9 L509.8 72.2 L511.3 73.5 L512.8 74.7 L514.3 75.8 L515.8 77.0 L517.3 78.1 L518.8 79.2 L520.3 80.3 L521.8 81.3 L523.3 82.2 L524.8 83.1 L526.3 84.0 L527.8 84.9 L529.3 85.9 L530.8 86.9 L532.3 87.9 L533.8 89.1 L535.3 90.3 L536.8 91.5 L538.3 92.7 L539.8 93.8 L541.3 94.9 L542.8 95.9 L544.3 96.9 L545.8 97.8 L547.3 98.7 L548.8 99.6 L550.3 100.5 L551.8 101.4 L553.3 102.5 L554.8 103.5 L556.3 104.6 L557.8 105.8 L559.3 107.0 L560.8 108.1 L562.3 109.3 L563.8 110.4 L565.3 111.5 L566.8 112.6 L568.3 113.7 L569.8 114.8 L571.3 115.8 L572.8 116.9 L574.3 117.8 L575.8 118.7 L577.3 119.6 L578.8 120.5 L580.3 121.3 L581.8 122.1 L583.3 122.8 L584.8 123.5 L586.3 124.0 L587.8 124.5 L589.3 125.0 L590.8 125.4 L592.3 125.8 L593.8 126.2 L595.3 126.5 L596.8 126.7 L598.3 126.7 L599.8 126.7 L601.3 126.7 L602.8 126.7 L604.3 126.7 L605.8 126.7 L607.3 126.7 L608.8 126.7 L610.3 126.7 L611.8 126.5 L613.3 126.2 L614.8 125.7 L616.3 125.3 L617.8 124.8 L619.3 124.3 L620.8 123.8 L622.3 123.4 L623.8 122.9 L625.3 122.3 L626.8 121.8 L628.3 121.3 L629.8 120.9 L631.3 120.6 L632.8 120.4 L634.3 120.3 L635.8 120.2 L637.3 120.1 L638.8 119.9 L640.3 119.9 L641.8 119.9 L643.3 120.0 L644.8 120.1 L646.3 120.2 L647.8 120.3 L649.3 120.5 L650.8 121.1 L652.3 122.2 L653.8 123.7 L655.3 125.2 L656.8 126.8 L658.3 128.8 L659.8 130.9 L661.3 133.2 L662.8 135.4 L664.3 137.5 L665.8 139.5 L667.3 141.5 L668.8 143.5 L670.3 145.5 L671.8 147.5 L673.3 149.5 L674.8 151.6 L676.3 153.7 L677.8 155.7 L679.3 157.6 L680.8 159.4 L682.3 161.0 L683.8 162.5 L685.3 164.0 L686.8 165.4 L688.3 166.8 L689.8 168.2 L691.3 169.5 L692.8 170.8 L694.3 172.0 L695.8 173.2 L697.3 174.4 L698.8 175.4 L700.3 176.4 L701.8 177.4 L703.3 178.4 L704.8 179.4 L706.3 180.4 L707.8 181.5 L709.3 182.6 L710.8 183.7 L712.3 184.7 L713.8 185.5 L715.3 186.0 L716.8 186.4 L718.3 186.9 L719.8 187.4 L721.3 188.0 L722.8 188.6 L724.3 189.2 L725.8 189.9 L727.3 190.4 L728.8 190.9 L730.3 191.5 L731.8 192.0 L733.3 192.4 L734.8 192.7 L736.3 192.7 L737.8 191.6 L739.3 189.7 L740.8 187.7 L742.3 186.2 L743.8 184.8 L745.3 183.3 L746.8 181.8 L748.3 180.2 L749.8 178.6 L751.3 176.8 L752.8 175.0 L754.3 173.1 L755.8 171.1 L757.3 169.0 L758.8 166.8 L760.3 164.5 L761.8 162.0 L763.3 159.3 L764.8 156.4 L766.3 153.1 L767.8 149.6 L769.3 145.9 L770.8 142.3 L772.3 138.8 L773.8 135.3 L775.3 131.8 L776.8 128.3 L778.3 124.8 L779.8 121.3 L781.3 117.8 L782.8 114.3 L784.3 110.8 L785.8 107.3 L787.3 103.8 L788.8 100.5 L790.3 97.2 L791.8 93.9 L793.3 90.8 L794.8 87.6 L796.3 84.4 L797.8 81.5 L799.3 78.9 L800.8 76.6 L802.3 74.5 L803.8 72.6 L805.3 71.1 L806.8 69.8 L808.3 68.7 L809.8 67.9 L811.3 66.7 L812.8 67.8 L814.3 68.2 L815.8 68.4 L817.3 68.5 L818.8 68.5 L820.3 68.6 L821.8 68.8 L823.3 69.1 L824.8 69.6 L826.3 70.2 L827.8 71.0 L829.3 71.7 L830.8 72.6 L832.3 73.7 L833.8 74.9 L835.3 76.1 L836.8 77.4 L838.3 78.6 L839.8 79.9 L841.3 81.3 L842.8 82.6 L844.3 83.9 L845.8 85.3 L847.3 86.6 L848.8 87.9 L850.3 89.2 L851.8 90.5 L853.3 91.7 L854.8 92.9 L856.3 94.0 L857.8 95.2 L859.3 96.3 L860.8 97.4 L862.3 98.5 L863.8 99.7 L865.3 100.8 L866.8 101.9 L868.3 103.0 L869.8 104.1 L871.3 105.0 L872.8 105.8 L874.3 106.6 L875.8 107.2 L877.3 107.9 L878.8 108.5 L880.3 109.1 L881.8 109.8 L883.3 110.5 L884.8 111.3 L886.3 112.2 L887.8 113.2 L889.3 114.2 L890.8 115.2 L892.3 116.2 L893.8 117.1 L895.3 117.9 L896.8 118.8 L898.3 119.6 L899.8 120.4 L901.3 121.1 L902.8 121.9 L904.3 122.6 L905.8 123.2 L907.3 123.8 L908.8 124.4 L910.3 124.9 L911.8 125.5 L913.3 126.0 L914.8 126.4 L916.3 126.8 L917.8 127.1 L919.3 127.3 L920.8 127.6 L922.3 127.8 L923.8 128.0 L925.3 128.2 L926.8 128.3 L928.3 128.4 L929.8 128.4 L931.3 128.1 L932.8 127.7 L934.3 127.2 L935.8 126.6 L937.3 126.0 L938.8 125.3 L940.3 124.6 L941.8 123.9 L943.3 123.1 L944.8 122.1 L946.3 121.1 L947.8 119.9 L949.3 118.5 L950.8 116.9 L952.3 115.0 L953.8 112.9 L955.3 110.8 L956.8 108.7 L958.3 106.5 L959.8 104.1 L961.3 101.7 L962.8 99.2 L964.3 96.5 L965.8 94.0 L967.3 92.4 L968.8 91.0 L970.3 90.0 L971.8 89.3 L973.3 88.6 L974.8 88.1 L976.3 87.7 L977.8 87.3 L979.3 86.9 L982.0 86.5 L982.0 102.0 L979.3 97.9 L977.8 96.2 L976.3 95.1 L974.8 94.8 L973.3 94.6 L971.8 94.4 L970.3 94.4 L968.8 94.5 L967.3 94.9 L965.8 95.6 L964.3 96.5 L962.8 99.2 L961.3 101.7 L959.8 104.1 L958.3 106.5 L956.8 108.7 L955.3 110.8 L953.8 112.9 L952.3 115.0 L950.8 116.9 L949.3 118.5 L947.8 119.9 L946.3 121.1 L944.8 122.1 L943.3 123.1 L941.8 123.9 L940.3 124.6 L938.8 125.3 L937.3 126.0 L935.8 126.6 L934.3 127.2 L932.8 127.7 L931.3 128.1 L929.8 128.4 L928.3 128.4 L926.8 128.3 L925.3 128.2 L923.8 128.0 L922.3 127.8 L920.8 127.6 L919.3 127.3 L917.8 127.1 L916.3 126.8 L914.8 126.4 L913.3 126.0 L911.8 125.5 L910.3 124.9 L908.8 124.4 L907.3 123.8 L905.8 123.2 L904.3 122.6 L902.8 121.9 L901.3 121.1 L899.8 120.4 L898.3 119.6 L896.8 118.8 L895.3 117.9 L893.8 117.1 L892.3 116.2 L890.8 115.2 L889.3 114.2 L887.8 113.2 L886.3 112.2 L884.8 111.3 L883.3 110.5 L881.8 109.8 L880.3 109.1 L878.8 108.5 L877.3 107.9 L875.8 107.2 L874.3 106.6 L872.8 105.8 L871.3 105.0 L869.8 104.1 L868.3 103.0 L866.8 101.9 L865.3 100.8 L863.8 99.7 L862.3 98.5 L860.8 97.4 L859.3 96.3 L857.8 95.2 L856.3 94.0 L854.8 92.9 L853.3 91.7 L851.8 90.5 L850.3 89.2 L848.8 87.9 L847.3 86.6 L845.8 85.3 L844.3 83.9 L842.8 82.6 L841.3 81.3 L839.8 79.9 L838.3 78.6 L836.8 77.4 L835.3 76.1 L833.8 74.9 L832.3 73.7 L830.8 72.6 L829.3 71.7 L827.8 71.0 L826.3 70.2 L824.8 69.6 L823.3 69.1 L821.8 68.8 L820.3 68.6 L818.8 68.5 L817.3 68.5 L815.8 68.4 L814.3 68.2 L812.8 68.1 L811.3 68.9 L809.8 69.8 L808.3 71.0 L806.8 73.0 L805.3 75.5 L803.8 78.4 L802.3 82.2 L800.8 86.5 L799.3 91.3 L797.8 96.8 L796.3 102.8 L794.8 109.6 L793.3 116.5 L791.8 123.6 L790.3 130.7 L788.8 137.5 L787.3 144.2 L785.8 150.9 L784.3 157.6 L782.8 164.4 L781.3 171.3 L779.8 178.1 L778.3 184.3 L776.8 190.0 L775.3 195.3 L773.8 200.1 L772.3 204.6 L770.8 208.8 L769.3 212.6 L767.8 216.0 L766.3 219.1 L764.8 221.7 L763.3 223.6 L761.8 225.2 L760.3 226.5 L758.8 227.8 L757.3 229.1 L755.8 230.3 L754.3 231.4 L752.8 232.5 L751.3 233.5 L749.8 234.6 L748.3 235.7 L746.8 236.8 L745.3 238.0 L743.8 239.2 L742.3 240.3 L740.8 241.3 L739.3 242.3 L737.8 243.2 L736.3 243.7 L734.8 243.8 L733.3 243.8 L731.8 243.8 L730.3 243.8 L728.8 243.8 L727.3 243.8 L725.8 243.7 L724.3 243.6 L722.8 243.4 L721.3 243.2 L719.8 243.0 L718.3 242.8 L716.8 242.5 L715.3 242.2 L713.8 241.7 L712.3 241.2 L710.8 240.7 L709.3 239.9 L707.8 238.9 L706.3 237.7 L704.8 236.6 L703.3 235.5 L701.8 234.5 L700.3 233.6 L698.8 232.7 L697.3 231.7 L695.8 230.7 L694.3 229.5 L692.8 228.1 L691.3 226.5 L689.8 224.7 L688.3 222.8 L686.8 220.8 L685.3 218.8 L683.8 216.8 L682.3 214.5 L680.8 212.2 L679.3 209.9 L677.8 207.5 L676.3 205.2 L674.8 202.8 L673.3 200.4 L671.8 198.0 L670.3 195.3 L668.8 192.5 L667.3 189.5 L665.8 186.3 L664.3 182.8 L662.8 179.2 L661.3 175.3 L659.8 171.2 L658.3 166.5 L656.8 161.4 L655.3 156.1 L653.8 150.9 L652.3 145.8 L650.8 140.9 L649.3 135.7 L647.8 131.1 L646.3 127.7 L644.8 125.3 L643.3 123.1 L641.8 121.3 L640.3 120.2 L638.8 119.9 L637.3 120.1 L635.8 120.2 L634.3 120.3 L632.8 120.4 L631.3 120.6 L629.8 120.9 L628.3 121.3 L626.8 121.8 L625.3 122.3 L623.8 122.9 L622.3 123.4 L620.8 123.8 L619.3 124.3 L617.8 124.8 L616.3 125.3 L614.8 125.7 L613.3 126.2 L611.8 126.5 L610.3 126.7 L608.8 126.7 L607.3 126.7 L605.8 126.7 L604.3 126.7 L602.8 126.7 L601.3 126.7 L599.8 126.7 L598.3 126.7 L596.8 126.7 L595.3 126.5 L593.8 126.2 L592.3 125.8 L590.8 125.4 L589.3 125.0 L587.8 124.5 L586.3 124.0 L584.8 123.5 L583.3 122.8 L581.8 122.1 L580.3 121.3 L578.8 120.5 L577.3 119.6 L575.8 118.7 L574.3 117.8 L572.8 116.9 L571.3 115.8 L569.8 114.8 L568.3 113.7 L566.8 112.6 L565.3 111.5 L563.8 110.4 L562.3 109.3 L560.8 108.1 L559.3 107.0 L557.8 105.8 L556.3 104.6 L554.8 103.5 L553.3 102.5 L551.8 101.4 L550.3 100.5 L548.8 99.6 L547.3 98.7 L545.8 97.8 L544.3 96.9 L542.8 95.9 L541.3 94.9 L539.8 93.8 L538.3 92.7 L536.8 91.5 L535.3 90.3 L533.8 89.1 L532.3 87.9 L530.8 86.9 L529.3 85.9 L527.8 84.9 L526.3 84.0 L524.8 83.1 L523.3 82.2 L521.8 81.3 L520.3 80.3 L518.8 79.2 L517.3 78.1 L515.8 77.0 L514.3 75.8 L512.8 74.7 L511.3 73.5 L509.8 72.2 L508.3 70.9 L506.8 69.8 L505.3 68.9 L503.8 68.3 L502.3 67.8 L500.8 67.4 L499.3 67.0 L497.8 66.8 L496.3 66.8 L494.8 66.9 L493.3 67.0 L491.8 67.2 L490.3 67.4 L488.8 68.9 L487.3 69.2 L485.8 70.0 L484.3 71.0 L482.8 72.6 L481.3 74.8 L479.8 77.7 L478.3 81.5 L476.8 86.0 L475.3 91.3 L473.8 97.0 L472.3 103.2 L470.8 110.0 L469.3 117.3 L467.8 125.1 L466.3 133.4 L464.8 142.5 L463.3 151.3 L461.8 159.4 L460.3 167.1 L458.8 174.6 L457.3 183.0 L455.8 190.3 L454.3 196.1 L452.8 201.0 L451.3 205.4 L449.8 209.3 L448.3 212.5 L446.8 214.9 L445.3 216.9 L443.8 219.5 L442.3 222.6 L440.8 225.8 L439.3 228.4 L437.8 230.7 L436.3 232.8 L434.8 234.6 L433.3 236.0 L431.8 237.3 L430.3 238.3 L428.8 239.1 L427.3 239.4 L425.8 239.7 L424.3 239.9 L422.8 240.1 L421.3 240.2 L419.8 240.2 L418.3 240.1 L416.8 240.0 L415.3 239.9 L413.8 239.7 L412.3 239.4 L410.8 239.2 L409.3 238.7 L407.8 237.9 L406.3 237.0 L404.8 236.1 L403.3 235.2 L401.8 234.4 L400.3 233.7 L398.8 232.9 L397.3 232.2 L395.8 231.5 L394.3 230.7 L392.8 230.0 L391.3 229.2 L389.8 228.5 L388.3 227.8 L386.8 227.1 L385.3 226.3 L383.8 225.6 L382.3 224.8 L380.8 224.0 L379.3 223.1 L377.8 222.1 L376.3 221.1 L374.8 220.0 L373.3 219.0 L371.8 218.0 L370.3 217.0 L368.8 216.0 L367.3 215.0 L365.8 214.0 L364.3 213.0 L362.8 212.0 L361.3 211.1 L359.8 210.2 L358.3 209.3 L356.8 208.2 L355.3 207.0 L353.8 205.5 L352.3 203.7 L350.8 201.6 L349.3 199.5 L347.8 197.2 L346.3 195.0 L344.8 192.7 L343.3 190.4 L341.8 188.0 L340.3 185.4 L338.8 182.6 L337.3 179.4 L335.8 175.8 L334.3 171.7 L332.8 167.4 L331.3 163.1 L329.8 159.0 L328.3 155.0 L326.8 151.1 L325.3 147.2 L323.8 143.2 L322.3 139.1 L320.8 134.9 L319.3 129.9 L317.8 124.9 L316.3 120.6 L314.8 117.8 L313.3 115.5 L311.8 113.4 L310.3 111.9 L308.8 111.2 L307.3 111.6 L305.8 112.3 L304.3 113.0 L302.8 113.7 L301.3 114.4 L299.8 115.0 L298.3 115.7 L296.8 116.3 L295.3 116.9 L293.8 117.6 L292.3 118.4 L290.8 119.1 L289.3 119.8 L287.8 120.4 L286.3 120.8 L284.8 121.0 L283.3 121.0 L281.8 121.0 L280.3 120.9 L278.8 120.9 L277.3 120.8 L275.8 120.7 L274.3 120.6 L272.8 120.4 L271.3 120.2 L269.8 119.8 L268.3 119.3 L266.8 118.6 L265.3 118.0 L263.8 117.2 L262.3 116.5 L260.8 115.8 L259.3 115.0 L257.8 114.1 L256.3 113.1 L254.8 112.1 L253.3 111.1 L251.8 110.1 L250.3 109.1 L248.8 108.1 L247.3 107.1 L245.8 106.1 L244.3 105.0 L242.8 104.0 L241.3 102.9 L239.8 101.8 L238.3 100.8 L236.8 99.8 L235.3 98.7 L233.8 97.7 L232.3 96.7 L230.8 95.7 L229.3 94.6 L227.8 93.6 L226.3 92.5 L224.8 91.4 L223.3 90.3 L221.8 89.2 L220.3 88.1 L218.8 86.9 L217.3 85.8 L215.8 84.7 L214.3 83.5 L212.8 82.5 L211.3 81.5 L209.8 80.6 L208.3 79.6 L206.8 78.5 L205.3 77.3 L203.8 75.9 L202.3 73.8 L200.8 71.5 L199.3 70.8 L197.8 70.3 L196.3 69.8 L194.8 69.2 L193.3 68.5 L191.8 67.8 L190.3 67.0 L188.8 66.2 L187.3 65.2 L185.8 63.9 L184.3 62.5 L182.8 61.0 L181.3 59.7 L179.8 58.6 L178.3 57.5 L176.8 56.5 L175.3 55.6 L173.8 54.8 L172.3 54.1 L170.8 53.4 L169.3 52.8 L167.8 52.3 L166.3 51.9 L164.8 51.9 L163.3 51.9 L161.8 52.1 L160.3 53.9 L158.8 55.6 L157.3 57.4 L155.8 59.0 L154.3 60.8 L152.8 63.2 L151.3 66.4 L149.8 70.2 L148.3 74.7 L146.8 79.9 L145.3 85.6 L143.8 91.9 L142.3 98.1 L140.8 104.2 L139.3 110.6 L137.8 117.3 L136.3 124.0 L134.8 130.2 L133.3 136.1 L131.8 141.9 L130.3 147.5 L128.8 152.8 L127.3 157.8 L125.8 162.5 L124.3 166.9 L122.8 170.9 L121.3 174.6 L119.8 178.0 L118.3 181.3 L116.8 184.5 L115.3 187.5 L113.8 190.3 L112.3 193.0 L110.8 195.7 L109.3 198.2 L107.8 200.5 L106.3 202.6 L104.8 204.5 L103.3 206.3 L101.8 208.0 L100.3 209.6 L98.8 211.1 L97.3 212.6 L95.8 213.9 L94.3 215.2 L92.8 216.6 L91.3 217.9 L89.8 219.2 L88.3 220.3 L86.8 221.3 L85.3 222.2 L83.8 223.1 L82.3 223.7 L80.8 223.9 L79.3 223.9 L77.8 223.9 L76.3 224.1 L74.8 224.4 L73.3 224.7 L71.8 225.0 L70.3 225.2 L68.8 225.3 L67.3 225.2 L65.8 224.8 L64.3 224.2 L62.8 223.3 L61.3 222.3 L59.8 221.2 L58.3 220.1 L56.8 219.0 L55.3 218.0 L53.8 216.8 L52.3 215.5 L50.8 214.2 L49.3 213.1 L47.8 212.2 L46.3 211.8 L44.8 211.5 L43.3 211.3 L41.8 211.1 L40.3 210.9 L38.8 210.8 L37.3 210.6 L35.8 210.4 L34.3 210.1 L32.8 209.7 L31.3 208.9 L29.8 207.7 L28.3 206.1 L26.8 204.3 L25.3 202.3 L23.8 200.2 L22.3 197.8 L20.8 195.0 L19.3 191.9 L17.8 188.5 L16.3 185.0 L14.8 181.1 L13.3 176.8 L11.8 172.1 L10.3 167.1 L8.8 161.9 L7.3 156.6 L5.8 150.9 L4.3 144.9 L2.8 138.6 L1.3 131.9 Z" fill="#f8d74b"/><path d="M1.3 131.9 L2.8 138.6 L4.3 144.9 L5.8 150.9 L7.3 156.6 L8.8 161.9 L10.3 167.1 L11.8 172.1 L13.3 176.8 L14.8 181.1 L16.3 185.0 L17.8 188.5 L19.3 191.9 L20.8 195.0 L22.3 197.8 L23.8 200.2 L25.3 202.3 L26.8 204.3 L28.3 206.1 L29.8 207.7 L31.3 208.9 L32.8 209.7 L34.3 210.1 L35.8 210.4 L37.3 210.6 L38.8 210.8 L40.3 210.9 L41.8 211.1 L43.3 211.3 L44.8 211.5 L46.3 211.8 L47.8 212.2 L49.3 213.1 L50.8 214.2 L52.3 215.5 L53.8 216.8 L55.3 218.0 L56.8 219.0 L58.3 220.1 L59.8 221.2 L61.3 222.3 L62.8 223.3 L64.3 224.2 L65.8 224.8 L67.3 225.2 L68.8 225.3 L70.3 225.2 L71.8 225.0 L73.3 224.7 L74.8 224.4 L76.3 224.1 L77.8 223.9 L79.3 223.9 L80.8 223.9 L82.3 223.7 L83.8 223.1 L85.3 222.2 L86.8 221.3 L88.3 220.3 L89.8 219.2 L91.3 217.9 L92.8 216.6 L94.3 215.2 L95.8 213.9 L97.3 212.6 L98.8 211.1 L100.3 209.6 L101.8 208.0 L103.3 206.3 L104.8 204.5 L106.3 202.6 L107.8 200.5 L109.3 198.2 L110.8 195.7 L112.3 193.0 L113.8 190.3 L115.3 187.5 L116.8 184.5 L118.3 181.3 L119.8 178.0 L121.3 174.6 L122.8 170.9 L124.3 166.9 L125.8 162.5 L127.3 157.8 L128.8 152.8 L130.3 147.5 L131.8 141.9 L133.3 136.1 L134.8 130.2 L136.3 124.0 L137.8 117.3 L139.3 110.6 L140.8 104.2 L142.3 98.1 L143.8 91.9 L145.3 85.6 L146.8 79.9 L148.3 74.7 L149.8 70.2 L151.3 66.4 L152.8 63.2 L154.3 60.8 L155.8 59.0 L157.3 57.4 L158.8 55.6 L160.3 53.9 L161.8 52.1 L163.3 51.9 L164.8 51.9 L166.3 51.9 L167.8 52.3 L169.3 52.8 L170.8 53.4 L172.3 54.1 L173.8 54.8 L175.3 55.6 L176.8 56.5 L178.3 57.5 L179.8 58.6 L181.3 59.7 L182.8 61.0 L184.3 62.5 L185.8 63.9 L187.3 65.2 L188.8 66.2 L190.3 67.0 L191.8 67.8 L193.3 68.5 L194.8 69.2 L196.3 69.8 L197.8 70.3 L199.3 70.8 L200.8 71.5 L202.3 73.8 L203.8 75.9 L205.3 77.3 L206.8 78.5 L208.3 79.6 L209.8 80.6 L211.3 81.5 L212.8 82.5 L214.3 83.5 L215.8 84.7 L217.3 85.8 L218.8 86.9 L220.3 88.1 L221.8 89.2 L223.3 90.3 L224.8 91.4 L226.3 92.5 L227.8 93.6 L229.3 94.6 L230.8 95.7 L232.3 96.7 L233.8 97.7 L235.3 98.7 L236.8 99.8 L238.3 100.8 L239.8 101.8 L241.3 102.9 L242.8 104.0 L244.3 105.0 L245.8 106.1 L247.3 107.1 L248.8 108.1 L250.3 109.1 L251.8 110.1 L253.3 111.1 L254.8 112.1 L256.3 113.1 L257.8 114.1 L259.3 115.0 L260.8 115.8 L262.3 116.5 L263.8 117.2 L265.3 118.0 L266.8 118.6 L268.3 119.3 L269.8 119.8 L271.3 120.2 L272.8 120.4 L274.3 120.6 L275.8 120.7 L277.3 120.8 L278.8 120.9 L280.3 120.9 L281.8 121.0 L283.3 121.0 L284.8 121.0 L286.3 120.8 L287.8 120.4 L289.3 119.8 L290.8 119.1 L292.3 118.4 L293.8 117.6 L295.3 116.9 L296.8 116.3 L298.3 115.7 L299.8 115.0 L301.3 114.4 L302.8 113.7 L304.3 113.0 L305.8 112.3 L307.3 111.6 L308.8 111.2 L310.3 111.9 L311.8 113.4 L313.3 115.5 L314.8 117.8 L316.3 120.6 L317.8 124.9 L319.3 129.9 L320.8 134.9 L322.3 139.1 L323.8 143.2 L325.3 147.2 L326.8 151.1 L328.3 155.0 L329.8 159.0 L331.3 163.1 L332.8 167.4 L334.3 171.7 L335.8 175.8 L337.3 179.4 L338.8 182.6 L340.3 185.4 L341.8 188.0 L343.3 190.4 L344.8 192.7 L346.3 195.0 L347.8 197.2 L349.3 199.5 L350.8 201.6 L352.3 203.7 L353.8 205.5 L355.3 207.0 L356.8 208.2 L358.3 209.3 L359.8 210.2 L361.3 211.1 L362.8 212.0 L364.3 213.0 L365.8 214.0 L367.3 215.0 L368.8 216.0 L370.3 217.0 L371.8 218.0 L373.3 219.0 L374.8 220.0 L376.3 221.1 L377.8 222.1 L379.3 223.1 L380.8 224.0 L382.3 224.8 L383.8 225.6 L385.3 226.3 L386.8 227.1 L388.3 227.8 L389.8 228.5 L391.3 229.2 L392.8 230.0 L394.3 230.7 L395.8 231.5 L397.3 232.2 L398.8 232.9 L400.3 233.7 L401.8 234.4 L403.3 235.2 L404.8 236.1 L406.3 237.0 L407.8 237.9 L409.3 238.7 L410.8 239.2 L412.3 239.4 L413.8 239.7 L415.3 239.9 L416.8 240.0 L418.3 240.1 L419.8 240.2 L421.3 240.2 L422.8 240.1 L424.3 239.9 L425.8 239.7 L427.3 239.4 L428.8 239.1 L430.3 238.3 L431.8 237.3 L433.3 236.0 L434.8 234.6 L436.3 232.8 L437.8 230.7 L439.3 228.4 L440.8 225.8 L442.3 222.6 L443.8 219.5 L445.3 216.9 L446.8 214.9 L448.3 212.5 L449.8 209.3 L451.3 205.4 L452.8 201.0 L454.3 196.1 L455.8 190.3 L457.3 183.0 L458.8 174.6 L460.3 167.1 L461.8 159.4 L463.3 151.3 L464.8 142.5 L466.3 133.4 L467.8 125.1 L469.3 117.3 L470.8 110.0 L472.3 103.2 L473.8 97.0 L475.3 91.3 L476.8 86.0 L478.3 81.5 L479.8 77.7 L481.3 74.8 L482.8 72.6 L484.3 71.0 L485.8 70.0 L487.3 69.2 L488.8 68.9 L490.3 67.4 L491.8 67.2 L493.3 67.0 L494.8 66.9 L496.3 66.8 L497.8 66.8 L499.3 67.0 L500.8 67.4 L502.3 67.8 L503.8 68.3 L505.3 68.9 L506.8 69.8 L508.3 70.9 L509.8 72.2 L511.3 73.5 L512.8 74.7 L514.3 75.8 L515.8 77.0 L517.3 78.1 L518.8 79.2 L520.3 80.3 L521.8 81.3 L523.3 82.2 L524.8 83.1 L526.3 84.0 L527.8 84.9 L529.3 85.9 L530.8 86.9 L532.3 87.9 L533.8 89.1 L535.3 90.3 L536.8 91.5 L538.3 92.7 L539.8 93.8 L541.3 94.9 L542.8 95.9 L544.3 96.9 L545.8 97.8 L547.3 98.7 L548.8 99.6 L550.3 100.5 L551.8 101.4 L553.3 102.5 L554.8 103.5 L556.3 104.6 L557.8 105.8 L559.3 107.0 L560.8 108.1 L562.3 109.3 L563.8 110.4 L565.3 111.5 L566.8 112.6 L568.3 113.7 L569.8 114.8 L571.3 115.8 L572.8 116.9 L574.3 117.8 L575.8 118.7 L577.3 119.6 L578.8 120.5 L580.3 121.3 L581.8 122.1 L583.3 122.8 L584.8 123.5 L586.3 124.0 L587.8 124.5 L589.3 125.0 L590.8 125.4 L592.3 125.8 L593.8 126.2 L595.3 126.5 L596.8 126.7 L598.3 126.7 L599.8 126.7 L601.3 126.7 L602.8 126.7 L604.3 126.7 L605.8 126.7 L607.3 126.7 L608.8 126.7 L610.3 126.7 L611.8 126.5 L613.3 126.2 L614.8 125.7 L616.3 125.3 L617.8 124.8 L619.3 124.3 L620.8 123.8 L622.3 123.4 L623.8 122.9 L625.3 122.3 L626.8 121.8 L628.3 121.3 L629.8 120.9 L631.3 120.6 L632.8 120.4 L634.3 120.3 L635.8 120.2 L637.3 120.1 L638.8 119.9 L640.3 120.2 L641.8 121.3 L643.3 123.1 L644.8 125.3 L646.3 127.7 L647.8 131.1 L649.3 135.7 L650.8 140.9 L652.3 145.8 L653.8 150.9 L655.3 156.1 L656.8 161.4 L658.3 166.5 L659.8 171.2 L661.3 175.3 L662.8 179.2 L664.3 182.8 L665.8 186.3 L667.3 189.5 L668.8 192.5 L670.3 195.3 L671.8 198.0 L673.3 200.4 L674.8 202.8 L676.3 205.2 L677.8 207.5 L679.3 209.9 L680.8 212.2 L682.3 214.5 L683.8 216.8 L685.3 218.8 L686.8 220.8 L688.3 222.8 L689.8 224.7 L691.3 226.5 L692.8 228.1 L694.3 229.5 L695.8 230.7 L697.3 231.7 L698.8 232.7 L700.3 233.6 L701.8 234.5 L703.3 235.5 L704.8 236.6 L706.3 237.7 L707.8 238.9 L709.3 239.9 L710.8 240.7 L712.3 241.2 L713.8 241.7 L715.3 242.2 L716.8 242.5 L718.3 242.8 L719.8 243.0 L721.3 243.2 L722.8 243.4 L724.3 243.6 L725.8 243.7 L727.3 243.8 L728.8 243.8 L730.3 243.8 L731.8 243.8 L733.3 243.8 L734.8 243.8 L736.3 243.7 L737.8 243.2 L739.3 242.3 L740.8 241.3 L742.3 240.3 L743.8 239.2 L745.3 238.0 L746.8 236.8 L748.3 235.7 L749.8 234.6 L751.3 233.5 L752.8 232.5 L754.3 231.4 L755.8 230.3 L757.3 229.1 L758.8 227.8 L760.3 226.5 L761.8 225.2 L763.3 223.6 L764.8 221.7 L766.3 219.1 L767.8 216.0 L769.3 212.6 L770.8 208.8 L772.3 204.6 L773.8 200.1 L775.3 195.3 L776.8 190.0 L778.3 184.3 L779.8 178.1 L781.3 171.3 L782.8 164.4 L784.3 157.6 L785.8 150.9 L787.3 144.2 L788.8 137.5 L790.3 130.7 L791.8 123.6 L793.3 116.5 L794.8 109.6 L796.3 102.8 L797.8 96.8 L799.3 91.3 L800.8 86.5 L802.3 82.2 L803.8 78.4 L805.3 75.5 L806.8 73.0 L808.3 71.0 L809.8 69.8 L811.3 68.9 L812.8 68.1 L814.3 68.2 L815.8 68.4 L817.3 68.5 L818.8 68.5 L820.3 68.6 L821.8 68.8 L823.3 69.1 L824.8 69.6 L826.3 70.2 L827.8 71.0 L829.3 71.7 L830.8 72.6 L832.3 73.7 L833.8 74.9 L835.3 76.1 L836.8 77.4 L838.3 78.6 L839.8 79.9 L841.3 81.3 L842.8 82.6 L844.3 83.9 L845.8 85.3 L847.3 86.6 L848.8 87.9 L850.3 89.2 L851.8 90.5 L853.3 91.7 L854.8 92.9 L856.3 94.0 L857.8 95.2 L859.3 96.3 L860.8 97.4 L862.3 98.5 L863.8 99.7 L865.3 100.8 L866.8 101.9 L868.3 103.0 L869.8 104.1 L871.3 105.0 L872.8 105.8 L874.3 106.6 L875.8 107.2 L877.3 107.9 L878.8 108.5 L880.3 109.1 L881.8 109.8 L883.3 110.5 L884.8 111.3 L886.3 112.2 L887.8 113.2 L889.3 114.2 L890.8 115.2 L892.3 116.2 L893.8 117.1 L895.3 117.9 L896.8 118.8 L898.3 119.6 L899.8 120.4 L901.3 121.1 L902.8 121.9 L904.3 122.6 L905.8 123.2 L907.3 123.8 L908.8 124.4 L910.3 124.9 L911.8 125.5 L913.3 126.0 L914.8 126.4 L916.3 126.8 L917.8 127.1 L919.3 127.3 L920.8 127.6 L922.3 127.8 L923.8 128.0 L925.3 128.2 L926.8 128.3 L928.3 128.4 L929.8 128.4 L931.3 128.1 L932.8 127.7 L934.3 127.2 L935.8 126.6 L937.3 126.0 L938.8 125.3 L940.3 124.6 L941.8 123.9 L943.3 123.1 L944.8 122.1 L946.3 121.1 L947.8 119.9 L949.3 118.5 L950.8 116.9 L952.3 115.0 L953.8 112.9 L955.3 110.8 L956.8 108.7 L958.3 106.5 L959.8 104.1 L961.3 101.7 L962.8 99.2 L964.3 96.5 L965.8 95.6 L967.3 94.9 L968.8 94.5 L970.3 94.4 L971.8 94.4 L973.3 94.6 L974.8 94.8 L976.3 95.1 L977.8 96.2 L979.3 97.9 L982.0 102.0 L982.0 138.9 L979.3 135.1 L977.8 133.4 L976.3 132.2 L974.8 131.3 L973.3 130.6 L971.8 130.1 L970.3 129.8 L968.8 129.9 L967.3 130.4 L965.8 131.1 L964.3 131.8 L962.8 133.2 L961.3 135.2 L959.8 137.5 L958.3 139.9 L956.8 142.1 L955.3 143.8 L953.8 145.5 L952.3 147.2 L950.8 148.7 L949.3 150.0 L947.8 151.0 L946.3 151.9 L944.8 152.7 L943.3 153.4 L941.8 154.0 L940.3 154.4 L938.8 154.7 L937.3 155.0 L935.8 155.3 L934.3 155.5 L932.8 155.7 L931.3 155.8 L929.8 155.9 L928.3 155.9 L926.8 155.8 L925.3 155.7 L923.8 155.5 L922.3 155.3 L920.8 155.1 L919.3 154.8 L917.8 154.6 L916.3 154.2 L914.8 153.8 L913.3 153.4 L911.8 152.8 L910.3 152.2 L908.8 151.5 L907.3 150.8 L905.8 150.1 L904.3 149.2 L902.8 148.1 L901.3 147.0 L899.8 145.7 L898.3 144.5 L896.8 143.3 L895.3 142.1 L893.8 141.1 L892.3 140.1 L890.8 139.0 L889.3 138.0 L887.8 137.1 L886.3 136.2 L884.8 135.3 L883.3 134.6 L881.8 133.9 L880.3 133.4 L878.8 132.8 L877.3 132.3 L875.8 131.8 L874.3 131.3 L872.8 130.7 L871.3 130.1 L869.8 129.4 L868.3 128.7 L866.8 127.9 L865.3 127.1 L863.8 126.3 L862.3 125.3 L860.8 124.2 L859.3 123.2 L857.8 122.2 L856.3 121.2 L854.8 120.2 L853.3 119.3 L851.8 118.4 L850.3 117.5 L848.8 116.6 L847.3 115.8 L845.8 114.9 L844.3 114.0 L842.8 113.0 L841.3 111.8 L839.8 110.5 L838.3 109.1 L836.8 107.7 L835.3 106.3 L833.8 104.9 L832.3 103.6 L830.8 102.4 L829.3 101.1 L827.8 99.9 L826.3 98.9 L824.8 98.2 L823.3 97.5 L821.8 96.9 L820.3 96.4 L818.8 96.2 L817.3 96.2 L815.8 96.3 L814.3 96.5 L812.8 96.8 L811.3 97.2 L809.8 97.9 L808.3 99.0 L806.8 100.3 L805.3 101.8 L803.8 103.8 L802.3 106.3 L800.8 109.7 L799.3 114.4 L797.8 120.0 L796.3 126.8 L794.8 133.9 L793.3 141.5 L791.8 149.5 L790.3 157.5 L788.8 164.7 L787.3 171.4 L785.8 177.4 L784.3 183.3 L782.8 189.3 L781.3 195.3 L779.8 201.4 L778.3 207.1 L776.8 212.4 L775.3 217.6 L773.8 222.6 L772.3 227.5 L770.8 232.4 L769.3 237.0 L767.8 240.6 L766.3 243.8 L764.8 245.8 L763.3 246.5 L761.8 246.9 L760.3 247.2 L758.8 247.5 L757.3 248.0 L755.8 248.7 L754.3 249.4 L752.8 250.2 L751.3 251.0 L749.8 251.9 L748.3 252.9 L746.8 254.1 L745.3 255.4 L743.8 256.7 L742.3 257.8 L740.8 258.4 L739.3 258.9 L737.8 259.2 L736.3 259.3 L734.8 259.4 L733.3 259.4 L731.8 259.4 L730.3 259.4 L728.8 259.4 L727.3 259.4 L725.8 259.3 L724.3 259.1 L722.8 258.9 L721.3 258.6 L719.8 258.3 L718.3 258.0 L716.8 257.6 L715.3 257.2 L713.8 256.7 L712.3 256.3 L710.8 256.0 L709.3 256.0 L707.8 256.3 L706.3 256.9 L704.8 257.4 L703.3 257.9 L701.8 258.1 L700.3 258.3 L698.8 258.5 L697.3 258.7 L695.8 258.8 L694.3 258.8 L692.8 258.6 L691.3 258.0 L689.8 257.2 L688.3 256.4 L686.8 255.5 L685.3 254.8 L683.8 254.2 L682.3 253.5 L680.8 252.8 L679.3 252.0 L677.8 251.1 L676.3 250.0 L674.8 248.8 L673.3 247.3 L671.8 245.7 L670.3 244.0 L668.8 242.2 L667.3 240.3 L665.8 238.2 L664.3 236.0 L662.8 233.6 L661.3 231.1 L659.8 228.5 L658.3 225.7 L656.8 222.7 L655.3 219.6 L653.8 216.5 L652.3 213.4 L650.8 210.3 L649.3 206.9 L647.8 203.4 L646.3 200.2 L644.8 197.5 L643.3 195.5 L641.8 194.0 L640.3 192.8 L638.8 191.9 L637.3 191.1 L635.8 190.5 L634.3 190.0 L632.8 189.6 L631.3 189.1 L629.8 188.7 L628.3 188.2 L626.8 187.7 L625.3 187.1 L623.8 186.6 L622.3 186.1 L620.8 185.7 L619.3 185.3 L617.8 184.9 L616.3 184.6 L614.8 184.3 L613.3 183.9 L611.8 183.6 L610.3 183.2 L608.8 182.8 L607.3 182.4 L605.8 182.0 L604.3 181.6 L602.8 181.1 L601.3 180.6 L599.8 180.0 L598.3 179.5 L596.8 179.0 L595.3 178.6 L593.8 178.3 L592.3 178.1 L590.8 177.9 L589.3 177.6 L587.8 177.4 L586.3 177.0 L584.8 176.6 L583.3 176.0 L581.8 175.3 L580.3 174.5 L578.8 173.8 L577.3 173.0 L575.8 172.2 L574.3 171.4 L572.8 170.5 L571.3 169.6 L569.8 168.7 L568.3 167.7 L566.8 166.7 L565.3 165.7 L563.8 164.6 L562.3 163.6 L560.8 162.8 L559.3 161.9 L557.8 161.1 L556.3 160.4 L554.8 159.7 L553.3 159.0 L551.8 158.4 L550.3 157.8 L548.8 157.2 L547.3 156.7 L545.8 156.1 L544.3 155.4 L542.8 154.6 L541.3 153.7 L539.8 152.6 L538.3 151.4 L536.8 150.0 L535.3 148.3 L533.8 145.4 L532.3 142.1 L530.8 139.5 L529.3 137.7 L527.8 136.2 L526.3 134.8 L524.8 133.6 L523.3 132.5 L521.8 131.3 L520.3 130.1 L518.8 128.7 L517.3 127.0 L515.8 125.2 L514.3 123.3 L512.8 121.3 L511.3 119.4 L509.8 117.6 L508.3 115.8 L506.8 114.0 L505.3 112.3 L503.8 110.7 L502.3 109.3 L500.8 108.0 L499.3 106.7 L497.8 105.5 L496.3 104.6 L494.8 104.0 L493.3 103.4 L491.8 103.0 L490.3 102.6 L488.8 102.3 L487.3 102.3 L485.8 102.6 L484.3 103.2 L482.8 104.1 L481.3 105.3 L479.8 107.4 L478.3 110.3 L476.8 114.4 L475.3 120.0 L473.8 126.4 L472.3 134.0 L470.8 143.0 L469.3 150.9 L467.8 158.3 L466.3 165.8 L464.8 173.4 L463.3 179.8 L461.8 185.8 L460.3 191.6 L458.8 196.9 L457.3 201.8 L455.8 206.9 L454.3 211.8 L452.8 215.9 L451.3 219.5 L449.8 223.2 L448.3 227.2 L446.8 230.8 L445.3 233.7 L443.8 236.1 L442.3 238.3 L440.8 240.5 L439.3 242.7 L437.8 244.8 L436.3 246.5 L434.8 247.8 L433.3 249.0 L431.8 250.0 L430.3 250.7 L428.8 251.2 L427.3 251.7 L425.8 252.2 L424.3 252.5 L422.8 252.6 L421.3 252.6 L419.8 252.6 L418.3 252.5 L416.8 252.4 L415.3 252.2 L413.8 252.0 L412.3 251.9 L410.8 251.7 L409.3 251.3 L407.8 250.9 L406.3 250.4 L404.8 249.9 L403.3 249.4 L401.8 249.0 L400.3 248.5 L398.8 248.1 L397.3 247.6 L395.8 247.2 L394.3 246.7 L392.8 246.3 L391.3 245.8 L389.8 245.3 L388.3 244.8 L386.8 244.3 L385.3 243.9 L383.8 243.4 L382.3 242.9 L380.8 242.4 L379.3 241.9 L377.8 241.3 L376.3 240.8 L374.8 240.2 L373.3 239.8 L371.8 239.4 L370.3 239.1 L368.8 238.9 L367.3 238.6 L365.8 238.4 L364.3 238.2 L362.8 238.0 L361.3 237.7 L359.8 237.5 L358.3 237.3 L356.8 237.0 L355.3 236.7 L353.8 236.2 L352.3 235.4 L350.8 234.3 L349.3 233.2 L347.8 231.9 L346.3 230.7 L344.8 229.2 L343.3 227.7 L341.8 225.9 L340.3 224.0 L338.8 222.0 L337.3 219.7 L335.8 217.1 L334.3 214.2 L332.8 211.0 L331.3 207.7 L329.8 204.3 L328.3 200.7 L326.8 196.7 L325.3 192.6 L323.8 188.4 L322.3 184.3 L320.8 180.4 L319.3 176.0 L317.8 171.6 L316.3 167.7 L314.8 165.0 L313.3 164.0 L311.8 163.2 L310.3 162.7 L308.8 162.3 L307.3 162.1 L305.8 162.2 L304.3 162.6 L302.8 163.2 L301.3 164.0 L299.8 164.8 L298.3 165.6 L296.8 166.3 L295.3 166.8 L293.8 167.3 L292.3 167.8 L290.8 168.3 L289.3 168.7 L287.8 169.1 L286.3 169.4 L284.8 169.5 L283.3 169.5 L281.8 169.5 L280.3 169.5 L278.8 169.4 L277.3 169.4 L275.8 169.3 L274.3 169.3 L272.8 169.2 L271.3 169.1 L269.8 168.9 L268.3 168.7 L266.8 168.4 L265.3 168.1 L263.8 167.8 L262.3 167.4 L260.8 167.0 L259.3 166.5 L257.8 165.8 L256.3 165.1 L254.8 164.3 L253.3 163.4 L251.8 162.5 L250.3 161.5 L248.8 160.5 L247.3 159.3 L245.8 158.0 L244.3 156.6 L242.8 155.2 L241.3 153.8 L239.8 152.4 L238.3 151.1 L236.8 149.9 L235.3 148.8 L233.8 147.7 L232.3 146.5 L230.8 145.4 L229.3 144.3 L227.8 143.2 L226.3 142.1 L224.8 141.0 L223.3 139.9 L221.8 138.8 L220.3 137.6 L218.8 136.5 L217.3 135.4 L215.8 134.3 L214.3 133.1 L212.8 132.1 L211.3 131.1 L209.8 130.1 L208.3 129.1 L206.8 128.1 L205.3 126.9 L203.8 125.5 L202.3 123.5 L200.8 121.3 L199.3 120.5 L197.8 119.9 L196.3 119.4 L194.8 118.9 L193.3 118.2 L191.8 117.3 L190.3 116.4 L188.8 115.4 L187.3 114.4 L185.8 113.4 L184.3 112.2 L182.8 111.0 L181.3 109.8 L179.8 108.6 L178.3 107.4 L176.8 106.1 L175.3 104.8 L173.8 103.7 L172.3 103.0 L170.8 102.5 L169.3 102.1 L167.8 101.8 L166.3 101.7 L164.8 101.8 L163.3 102.0 L161.8 102.4 L160.3 102.9 L158.8 103.4 L157.3 104.2 L155.8 105.4 L154.3 107.0 L152.8 109.0 L151.3 112.1 L149.8 116.1 L148.3 121.5 L146.8 128.0 L145.3 134.7 L143.8 141.9 L142.3 149.5 L140.8 157.2 L139.3 164.2 L137.8 169.8 L136.3 175.2 L134.8 180.6 L133.3 185.8 L131.8 190.5 L130.3 194.9 L128.8 199.0 L127.3 202.7 L125.8 206.2 L124.3 209.5 L122.8 212.7 L121.3 215.7 L119.8 218.6 L118.3 221.3 L116.8 223.9 L115.3 226.4 L113.8 228.8 L112.3 231.0 L110.8 233.2 L109.3 235.2 L107.8 237.0 L106.3 238.6 L104.8 240.1 L103.3 241.4 L101.8 242.7 L100.3 243.8 L98.8 245.0 L97.3 246.0 L95.8 247.0 L94.3 247.8 L92.8 248.6 L91.3 249.3 L89.8 249.9 L88.3 250.4 L86.8 250.8 L85.3 251.1 L83.8 251.4 L82.3 251.6 L80.8 251.7 L79.3 251.5 L77.8 251.2 L76.3 250.9 L74.8 250.9 L73.3 250.9 L71.8 250.9 L70.3 250.9 L68.8 250.9 L67.3 250.9 L65.8 250.8 L64.3 250.5 L62.8 250.1 L61.3 249.6 L59.8 248.9 L58.3 248.1 L56.8 247.3 L55.3 246.3 L53.8 244.2 L52.3 241.7 L50.8 239.8 L49.3 239.6 L47.8 240.1 L46.3 240.9 L44.8 241.8 L43.3 242.7 L41.8 243.2 L40.3 243.3 L38.8 243.5 L37.3 243.6 L35.8 243.7 L34.3 243.7 L32.8 243.8 L31.3 243.2 L29.8 242.0 L28.3 240.3 L26.8 238.4 L25.3 236.3 L23.8 234.3 L22.3 232.0 L20.8 229.4 L19.3 226.5 L17.8 223.4 L16.3 220.3 L14.8 217.0 L13.3 213.5 L11.8 209.7 L10.3 205.8 L8.8 201.8 L7.3 197.9 L5.8 193.9 L4.3 189.8 L2.8 185.7 L1.3 181.5 Z" fill="#417a36"/><path d="M1.3 181.5 L2.8 185.7 L4.3 189.8 L5.8 193.9 L7.3 197.9 L8.8 201.8 L10.3 205.8 L11.8 209.7 L13.3 213.5 L14.8 217.0 L16.3 220.3 L17.8 223.4 L19.3 226.5 L20.8 229.4 L22.3 232.0 L23.8 234.3 L25.3 236.3 L26.8 238.4 L28.3 240.3 L29.8 242.0 L31.3 243.2 L32.8 243.8 L34.3 243.7 L35.8 243.7 L37.3 243.6 L38.8 243.5 L40.3 243.3 L41.8 243.2 L43.3 242.7 L44.8 241.8 L46.3 240.9 L47.8 240.1 L49.3 239.6 L50.8 239.8 L52.3 241.7 L53.8 244.2 L55.3 246.3 L56.8 247.3 L58.3 248.1 L59.8 248.9 L61.3 249.6 L62.8 250.1 L64.3 250.5 L65.8 250.8 L67.3 250.9 L68.8 250.9 L70.3 250.9 L71.8 250.9 L73.3 250.9 L74.8 250.9 L76.3 250.9 L77.8 251.2 L79.3 251.5 L80.8 251.7 L82.3 251.6 L83.8 251.4 L85.3 251.1 L86.8 250.8 L88.3 250.4 L89.8 249.9 L91.3 249.3 L92.8 248.6 L94.3 247.8 L95.8 247.0 L97.3 246.0 L98.8 245.0 L100.3 243.8 L101.8 242.7 L103.3 241.4 L104.8 240.1 L106.3 238.6 L107.8 237.0 L109.3 235.2 L110.8 233.2 L112.3 231.0 L113.8 228.8 L115.3 226.4 L116.8 223.9 L118.3 221.3 L119.8 218.6 L121.3 215.7 L122.8 212.7 L124.3 209.5 L125.8 206.2 L127.3 202.7 L128.8 199.0 L130.3 194.9 L131.8 190.5 L133.3 185.8 L134.8 180.6 L136.3 175.2 L137.8 169.8 L139.3 164.2 L140.8 157.2 L142.3 149.5 L143.8 141.9 L145.3 134.7 L146.8 128.0 L148.3 121.5 L149.8 116.1 L151.3 112.1 L152.8 109.0 L154.3 107.0 L155.8 105.4 L157.3 104.2 L158.8 103.4 L160.3 102.9 L161.8 102.4 L163.3 102.0 L164.8 101.8 L166.3 101.7 L167.8 101.8 L169.3 102.1 L170.8 102.5 L172.3 103.0 L173.8 103.7 L175.3 104.8 L176.8 106.1 L178.3 107.4 L179.8 108.6 L181.3 109.8 L182.8 111.0 L184.3 112.2 L185.8 113.4 L187.3 114.4 L188.8 115.4 L190.3 116.4 L191.8 117.3 L193.3 118.2 L194.8 118.9 L196.3 119.4 L197.8 119.9 L199.3 120.5 L200.8 121.3 L202.3 123.5 L203.8 125.5 L205.3 126.9 L206.8 128.1 L208.3 129.1 L209.8 130.1 L211.3 131.1 L212.8 132.1 L214.3 133.1 L215.8 134.3 L217.3 135.4 L218.8 136.5 L220.3 137.6 L221.8 138.8 L223.3 139.9 L224.8 141.0 L226.3 142.1 L227.8 143.2 L229.3 144.3 L230.8 145.4 L232.3 146.5 L233.8 147.7 L235.3 148.8 L236.8 149.9 L238.3 151.1 L239.8 152.4 L241.3 153.8 L242.8 155.2 L244.3 156.6 L245.8 158.0 L247.3 159.3 L248.8 160.5 L250.3 161.5 L251.8 162.5 L253.3 163.4 L254.8 164.3 L256.3 165.1 L257.8 165.8 L259.3 166.5 L260.8 167.0 L262.3 167.4 L263.8 167.8 L265.3 168.1 L266.8 168.4 L268.3 168.7 L269.8 168.9 L271.3 169.1 L272.8 169.2 L274.3 169.3 L275.8 169.3 L277.3 169.4 L278.8 169.4 L280.3 169.5 L281.8 169.5 L283.3 169.5 L284.8 169.5 L286.3 169.4 L287.8 169.1 L289.3 168.7 L290.8 168.3 L292.3 167.8 L293.8 167.3 L295.3 166.8 L296.8 166.3 L298.3 165.6 L299.8 164.8 L301.3 164.0 L302.8 163.2 L304.3 162.6 L305.8 162.2 L307.3 162.1 L308.8 162.3 L310.3 162.7 L311.8 163.2 L313.3 164.0 L314.8 165.0 L316.3 167.7 L317.8 171.6 L319.3 176.0 L320.8 180.4 L322.3 184.3 L323.8 188.4 L325.3 192.6 L326.8 196.7 L328.3 200.7 L329.8 204.3 L331.3 207.7 L332.8 211.0 L334.3 214.2 L335.8 217.1 L337.3 219.7 L338.8 222.0 L340.3 224.0 L341.8 225.9 L343.3 227.7 L344.8 229.2 L346.3 230.7 L347.8 231.9 L349.3 233.2 L350.8 234.3 L352.3 235.4 L353.8 236.2 L355.3 236.7 L356.8 237.0 L358.3 237.3 L359.8 237.5 L361.3 237.7 L362.8 238.0 L364.3 238.2 L365.8 238.4 L367.3 238.6 L368.8 238.9 L370.3 239.1 L371.8 239.4 L373.3 239.8 L374.8 240.2 L376.3 240.8 L377.8 241.3 L379.3 241.9 L380.8 242.4 L382.3 242.9 L383.8 243.4 L385.3 243.9 L386.8 244.3 L388.3 244.8 L389.8 245.3 L391.3 245.8 L392.8 246.3 L394.3 246.7 L395.8 247.2 L397.3 247.6 L398.8 248.1 L400.3 248.5 L401.8 249.0 L403.3 249.4 L404.8 249.9 L406.3 250.4 L407.8 250.9 L409.3 251.3 L410.8 251.7 L412.3 251.9 L413.8 252.0 L415.3 252.2 L416.8 252.4 L418.3 252.5 L419.8 252.6 L421.3 252.6 L422.8 252.6 L424.3 252.5 L425.8 252.2 L427.3 251.7 L428.8 251.2 L430.3 250.7 L431.8 250.0 L433.3 249.0 L434.8 247.8 L436.3 246.5 L437.8 244.8 L439.3 242.7 L440.8 240.5 L442.3 238.3 L443.8 236.1 L445.3 233.7 L446.8 230.8 L448.3 227.2 L449.8 223.2 L451.3 219.5 L452.8 215.9 L454.3 211.8 L455.8 206.9 L457.3 201.8 L458.8 196.9 L460.3 191.6 L461.8 185.8 L463.3 179.8 L464.8 173.4 L466.3 165.8 L467.8 158.3 L469.3 150.9 L470.8 143.0 L472.3 134.0 L473.8 126.4 L475.3 120.0 L476.8 114.4 L478.3 110.3 L479.8 107.4 L481.3 105.3 L482.8 104.1 L484.3 103.2 L485.8 102.6 L487.3 102.3 L488.8 102.3 L490.3 102.6 L491.8 103.0 L493.3 103.4 L494.8 104.0 L496.3 104.6 L497.8 105.5 L499.3 106.7 L500.8 108.0 L502.3 109.3 L503.8 110.7 L505.3 112.3 L506.8 114.0 L508.3 115.8 L509.8 117.6 L511.3 119.4 L512.8 121.3 L514.3 123.3 L515.8 125.2 L517.3 127.0 L518.8 128.7 L520.3 130.1 L521.8 131.3 L523.3 132.5 L524.8 133.6 L526.3 134.8 L527.8 136.2 L529.3 137.7 L530.8 139.5 L532.3 142.1 L533.8 145.4 L535.3 148.3 L536.8 150.0 L538.3 151.4 L539.8 152.6 L541.3 153.7 L542.8 154.6 L544.3 155.4 L545.8 156.1 L547.3 156.7 L548.8 157.2 L550.3 157.8 L551.8 158.4 L553.3 159.0 L554.8 159.7 L556.3 160.4 L557.8 161.1 L559.3 161.9 L560.8 162.8 L562.3 163.6 L563.8 164.6 L565.3 165.7 L566.8 166.7 L568.3 167.7 L569.8 168.7 L571.3 169.6 L572.8 170.5 L574.3 171.4 L575.8 172.2 L577.3 173.0 L578.8 173.8 L580.3 174.5 L581.8 175.3 L583.3 176.0 L584.8 176.6 L586.3 177.0 L587.8 177.4 L589.3 177.6 L590.8 177.9 L592.3 178.1 L593.8 178.3 L595.3 178.6 L596.8 179.0 L598.3 179.5 L599.8 180.0 L601.3 180.6 L602.8 181.1 L604.3 181.6 L605.8 182.0 L607.3 182.4 L608.8 182.8 L610.3 183.2 L611.8 183.6 L613.3 183.9 L614.8 184.3 L616.3 184.6 L617.8 184.9 L619.3 185.3 L620.8 185.7 L622.3 186.1 L623.8 186.6 L625.3 187.1 L626.8 187.7 L628.3 188.2 L629.8 188.7 L631.3 189.1 L632.8 189.6 L634.3 190.0 L635.8 190.5 L637.3 191.1 L638.8 191.9 L640.3 192.8 L641.8 194.0 L643.3 195.5 L644.8 197.5 L646.3 200.2 L647.8 203.4 L649.3 206.9 L650.8 210.3 L652.3 213.4 L653.8 216.5 L655.3 219.6 L656.8 222.7 L658.3 225.7 L659.8 228.5 L661.3 231.1 L662.8 233.6 L664.3 236.0 L665.8 238.2 L667.3 240.3 L668.8 242.2 L670.3 244.0 L671.8 245.7 L673.3 247.3 L674.8 248.8 L676.3 250.0 L677.8 251.1 L679.3 252.0 L680.8 252.8 L682.3 253.5 L683.8 254.2 L685.3 254.8 L686.8 255.5 L688.3 256.4 L689.8 257.2 L691.3 258.0 L692.8 258.6 L694.3 258.8 L695.8 258.8 L697.3 258.7 L698.8 258.5 L700.3 258.3 L701.8 258.1 L703.3 257.9 L704.8 257.4 L706.3 256.9 L707.8 256.3 L709.3 256.0 L710.8 256.0 L712.3 256.3 L713.8 256.7 L715.3 257.2 L716.8 257.6 L718.3 258.0 L719.8 258.3 L721.3 258.6 L722.8 258.9 L724.3 259.1 L725.8 259.3 L727.3 259.4 L728.8 259.4 L730.3 259.4 L731.8 259.4 L733.3 259.4 L734.8 259.4 L736.3 259.3 L737.8 259.2 L739.3 258.9 L740.8 258.4 L742.3 257.8 L743.8 256.7 L745.3 255.4 L746.8 254.1 L748.3 252.9 L749.8 251.9 L751.3 251.0 L752.8 250.2 L754.3 249.4 L755.8 248.7 L757.3 248.0 L758.8 247.5 L760.3 247.2 L761.8 246.9 L763.3 246.5 L764.8 245.8 L766.3 243.8 L767.8 240.6 L769.3 237.0 L770.8 232.4 L772.3 227.5 L773.8 222.6 L775.3 217.6 L776.8 212.4 L778.3 207.1 L779.8 201.4 L781.3 195.3 L782.8 189.3 L784.3 183.3 L785.8 177.4 L787.3 171.4 L788.8 164.7 L790.3 157.5 L791.8 149.5 L793.3 141.5 L794.8 133.9 L796.3 126.8 L797.8 120.0 L799.3 114.4 L800.8 109.7 L802.3 106.3 L803.8 103.8 L805.3 101.8 L806.8 100.3 L808.3 99.0 L809.8 97.9 L811.3 97.2 L812.8 96.8 L814.3 96.5 L815.8 96.3 L817.3 96.2 L818.8 96.2 L820.3 96.4 L821.8 96.9 L823.3 97.5 L824.8 98.2 L826.3 98.9 L827.8 99.9 L829.3 101.1 L830.8 102.4 L832.3 103.6 L833.8 104.9 L835.3 106.3 L836.8 107.7 L838.3 109.1 L839.8 110.5 L841.3 111.8 L842.8 113.0 L844.3 114.0 L845.8 114.9 L847.3 115.8 L848.8 116.6 L850.3 117.5 L851.8 118.4 L853.3 119.3 L854.8 120.2 L856.3 121.2 L857.8 122.2 L859.3 123.2 L860.8 124.2 L862.3 125.3 L863.8 126.3 L865.3 127.1 L866.8 127.9 L868.3 128.7 L869.8 129.4 L871.3 130.1 L872.8 130.7 L874.3 131.3 L875.8 131.8 L877.3 132.3 L878.8 132.8 L880.3 133.4 L881.8 133.9 L883.3 134.6 L884.8 135.3 L886.3 136.2 L887.8 137.1 L889.3 138.0 L890.8 139.0 L892.3 140.1 L893.8 141.1 L895.3 142.1 L896.8 143.3 L898.3 144.5 L899.8 145.7 L901.3 147.0 L902.8 148.1 L904.3 149.2 L905.8 150.1 L907.3 150.8 L908.8 151.5 L910.3 152.2 L911.8 152.8 L913.3 153.4 L914.8 153.8 L916.3 154.2 L917.8 154.6 L919.3 154.8 L920.8 155.1 L922.3 155.3 L923.8 155.5 L925.3 155.7 L926.8 155.8 L928.3 155.9 L929.8 155.9 L931.3 155.8 L932.8 155.7 L934.3 155.5 L935.8 155.3 L937.3 155.0 L938.8 154.7 L940.3 154.4 L941.8 154.0 L943.3 153.4 L944.8 152.7 L946.3 151.9 L947.8 151.0 L949.3 150.0 L950.8 148.7 L952.3 147.2 L953.8 145.5 L955.3 143.8 L956.8 142.1 L958.3 139.9 L959.8 137.5 L961.3 135.2 L962.8 133.2 L964.3 131.8 L965.8 131.1 L967.3 130.4 L968.8 129.9 L970.3 129.8 L971.8 130.1 L973.3 130.6 L974.8 131.3 L976.3 132.2 L977.8 133.4 L979.3 135.1 L982.0 138.9 L982.0 175.7 L979.3 174.4 L977.8 173.8 L976.3 173.1 L974.8 172.5 L973.3 171.9 L971.8 171.2 L970.3 170.6 L968.8 170.2 L967.3 170.1 L965.8 170.1 L964.3 170.4 L962.8 170.7 L961.3 171.1 L959.8 171.6 L958.3 172.1 L956.8 172.5 L955.3 173.1 L953.8 173.7 L952.3 174.4 L950.8 175.1 L949.3 175.8 L947.8 176.6 L946.3 177.5 L944.8 178.5 L943.3 179.4 L941.8 180.1 L940.3 180.5 L938.8 180.7 L937.3 180.9 L935.8 181.1 L934.3 181.2 L932.8 181.3 L931.3 181.4 L929.8 181.4 L928.3 181.4 L926.8 181.4 L925.3 181.3 L923.8 181.3 L922.3 181.2 L920.8 181.1 L919.3 181.0 L917.8 180.9 L916.3 180.7 L914.8 180.6 L913.3 180.4 L911.8 180.2 L910.3 179.9 L908.8 179.7 L907.3 179.4 L905.8 179.1 L904.3 178.7 L902.8 178.3 L901.3 177.9 L899.8 177.4 L898.3 176.9 L896.8 176.4 L895.3 175.9 L893.8 175.4 L892.3 174.9 L890.8 174.3 L889.3 173.8 L887.8 173.2 L886.3 172.6 L884.8 172.0 L883.3 171.4 L881.8 170.9 L880.3 170.2 L878.8 169.6 L877.3 169.0 L875.8 168.4 L874.3 167.9 L872.8 167.4 L871.3 167.1 L869.8 166.8 L868.3 166.6 L866.8 166.4 L865.3 166.2 L863.8 165.9 L862.3 165.3 L860.8 164.5 L859.3 163.8 L857.8 163.1 L856.3 162.4 L854.8 161.8 L853.3 161.1 L851.8 160.5 L850.3 159.8 L848.8 159.1 L847.3 158.3 L845.8 157.6 L844.3 156.8 L842.8 156.0 L841.3 155.3 L839.8 154.5 L838.3 153.7 L836.8 152.9 L835.3 152.1 L833.8 151.3 L832.3 150.6 L830.8 150.1 L829.3 149.5 L827.8 149.0 L826.3 148.5 L824.8 148.1 L823.3 147.8 L821.8 147.7 L820.3 147.7 L818.8 147.8 L817.3 148.0 L815.8 148.3 L814.3 148.6 L812.8 148.9 L811.3 149.6 L809.8 150.6 L808.3 151.7 L806.8 153.0 L805.3 154.3 L803.8 156.0 L802.3 157.9 L800.8 160.0 L799.3 162.4 L797.8 165.2 L796.3 168.1 L794.8 171.4 L793.3 175.1 L791.8 179.5 L790.3 184.1 L788.8 188.5 L787.3 192.9 L785.8 197.2 L784.3 201.3 L782.8 205.2 L781.3 208.9 L779.8 212.7 L778.3 216.7 L776.8 220.9 L775.3 225.9 L773.8 231.4 L772.3 236.3 L770.8 240.9 L769.3 245.2 L767.8 249.9 L766.3 253.4 L764.8 254.6 L763.3 255.4 L761.8 256.0 L760.3 256.4 L758.8 257.0 L757.3 257.7 L755.8 258.4 L754.3 259.2 L752.8 259.9 L751.3 260.8 L749.8 261.6 L748.3 262.4 L746.8 263.4 L745.3 264.4 L743.8 265.4 L742.3 266.4 L740.8 267.1 L739.3 267.8 L737.8 268.4 L736.3 268.7 L734.8 268.7 L733.3 268.6 L731.8 268.4 L730.3 268.2 L728.8 268.0 L727.3 267.8 L725.8 267.6 L724.3 267.3 L722.8 266.9 L721.3 266.6 L719.8 266.2 L718.3 265.9 L716.8 265.6 L715.3 265.3 L713.8 264.9 L712.3 264.6 L710.8 264.5 L709.3 264.5 L707.8 264.8 L706.3 265.3 L704.8 265.9 L703.3 266.4 L701.8 266.7 L700.3 267.0 L698.8 267.3 L697.3 267.6 L695.8 267.8 L694.3 267.9 L692.8 267.6 L691.3 267.0 L689.8 266.3 L688.3 265.4 L686.8 264.6 L685.3 263.9 L683.8 263.4 L682.3 262.8 L680.8 262.3 L679.3 261.7 L677.8 261.0 L676.3 260.2 L674.8 259.3 L673.3 258.3 L671.8 257.2 L670.3 256.0 L668.8 254.8 L667.3 253.4 L665.8 252.0 L664.3 250.4 L662.8 248.5 L661.3 246.5 L659.8 244.3 L658.3 242.0 L656.8 239.7 L655.3 237.1 L653.8 234.3 L652.3 231.4 L650.8 228.5 L649.3 225.7 L647.8 223.0 L646.3 220.0 L644.8 217.0 L643.3 214.3 L641.8 212.2 L640.3 211.0 L638.8 210.3 L637.3 209.8 L635.8 209.3 L634.3 208.9 L632.8 208.5 L631.3 208.1 L629.8 207.7 L628.3 207.3 L626.8 207.0 L625.3 206.6 L623.8 206.2 L622.3 205.9 L620.8 205.5 L619.3 205.1 L617.8 204.8 L616.3 204.4 L614.8 204.0 L613.3 203.6 L611.8 203.3 L610.3 202.9 L608.8 202.5 L607.3 202.1 L605.8 201.8 L604.3 201.4 L602.8 201.0 L601.3 200.6 L599.8 200.3 L598.3 199.9 L596.8 199.5 L595.3 199.1 L593.8 198.8 L592.3 198.4 L590.8 198.0 L589.3 197.6 L587.8 197.3 L586.3 196.9 L584.8 196.5 L583.3 196.1 L581.8 195.7 L580.3 195.3 L578.8 194.9 L577.3 194.6 L575.8 194.3 L574.3 194.0 L572.8 193.7 L571.3 193.5 L569.8 193.2 L568.3 193.0 L566.8 192.8 L565.3 192.5 L563.8 192.1 L562.3 191.6 L560.8 191.0 L559.3 190.4 L557.8 189.6 L556.3 188.9 L554.8 188.1 L553.3 187.4 L551.8 186.7 L550.3 186.0 L548.8 185.4 L547.3 184.8 L545.8 184.1 L544.3 183.4 L542.8 182.7 L541.3 181.9 L539.8 181.2 L538.3 180.4 L536.8 179.6 L535.3 178.6 L533.8 177.3 L532.3 175.3 L530.8 172.0 L529.3 170.3 L527.8 168.8 L526.3 167.6 L524.8 166.5 L523.3 165.5 L521.8 164.6 L520.3 163.8 L518.8 162.9 L517.3 162.0 L515.8 161.2 L514.3 160.4 L512.8 159.7 L511.3 159.0 L509.8 158.3 L508.3 157.6 L506.8 156.9 L505.3 156.0 L503.8 155.2 L502.3 154.3 L500.8 153.6 L499.3 153.1 L497.8 152.8 L496.3 152.5 L494.8 152.3 L493.3 152.1 L491.8 152.1 L490.3 152.1 L488.8 152.2 L487.3 152.4 L485.8 152.6 L484.3 152.9 L482.8 153.4 L481.3 154.5 L479.8 156.0 L478.3 157.9 L476.8 160.8 L475.3 164.2 L473.8 167.8 L472.3 171.6 L470.8 175.6 L469.3 179.7 L467.8 184.0 L466.3 188.4 L464.8 192.8 L463.3 197.0 L461.8 201.2 L460.3 205.2 L458.8 209.0 L457.3 213.2 L455.8 218.3 L454.3 223.1 L452.8 227.0 L451.3 230.6 L449.8 233.8 L448.3 236.7 L446.8 239.5 L445.3 242.5 L443.8 245.5 L442.3 248.5 L440.8 251.5 L439.3 254.7 L437.8 257.8 L436.3 259.9 L434.8 261.2 L433.3 262.2 L431.8 262.9 L430.3 263.2 L428.8 263.1 L427.3 262.9 L425.8 262.7 L424.3 262.6 L422.8 262.6 L421.3 262.5 L419.8 262.5 L418.3 262.4 L416.8 262.3 L415.3 262.2 L413.8 262.1 L412.3 261.8 L410.8 261.5 L409.3 261.1 L407.8 260.7 L406.3 260.2 L404.8 259.8 L403.3 259.3 L401.8 258.9 L400.3 258.5 L398.8 258.0 L397.3 257.5 L395.8 257.1 L394.3 256.6 L392.8 256.2 L391.3 255.7 L389.8 255.4 L388.3 255.0 L386.8 254.6 L385.3 254.3 L383.8 253.9 L382.3 253.5 L380.8 253.1 L379.3 252.7 L377.8 252.3 L376.3 251.9 L374.8 251.5 L373.3 251.1 L371.8 250.7 L370.3 250.3 L368.8 249.8 L367.3 249.4 L365.8 249.1 L364.3 248.9 L362.8 248.9 L361.3 249.0 L359.8 249.1 L358.3 249.3 L356.8 249.4 L355.3 249.4 L353.8 249.2 L352.3 248.7 L350.8 247.8 L349.3 246.8 L347.8 245.8 L346.3 244.9 L344.8 244.1 L343.3 243.2 L341.8 242.3 L340.3 241.3 L338.8 240.0 L337.3 238.6 L335.8 236.8 L334.3 234.7 L332.8 232.3 L331.3 229.7 L329.8 226.9 L328.3 223.7 L326.8 219.8 L325.3 215.5 L323.8 211.1 L322.3 206.9 L320.8 203.1 L319.3 199.1 L317.8 195.0 L316.3 191.4 L314.8 189.0 L313.3 188.1 L311.8 187.5 L310.3 187.0 L308.8 186.7 L307.3 186.5 L305.8 186.6 L304.3 186.9 L302.8 187.4 L301.3 188.0 L299.8 188.7 L298.3 189.4 L296.8 190.1 L295.3 190.6 L293.8 191.2 L292.3 191.8 L290.8 192.5 L289.3 193.1 L287.8 193.6 L286.3 194.0 L284.8 194.1 L283.3 194.2 L281.8 194.1 L280.3 194.0 L278.8 193.9 L277.3 193.8 L275.8 193.6 L274.3 193.5 L272.8 193.3 L271.3 193.1 L269.8 192.8 L268.3 192.4 L266.8 192.0 L265.3 191.6 L263.8 191.1 L262.3 190.7 L260.8 190.2 L259.3 189.6 L257.8 189.0 L256.3 188.4 L254.8 187.7 L253.3 187.0 L251.8 186.3 L250.3 185.6 L248.8 184.9 L247.3 184.2 L245.8 183.4 L244.3 182.6 L242.8 181.8 L241.3 181.0 L239.8 180.3 L238.3 179.7 L236.8 179.1 L235.3 178.6 L233.8 178.2 L232.3 177.8 L230.8 177.3 L229.3 176.9 L227.8 176.5 L226.3 175.9 L224.8 175.3 L223.3 174.6 L221.8 173.8 L220.3 173.0 L218.8 172.1 L217.3 171.3 L215.8 170.6 L214.3 170.0 L212.8 169.6 L211.3 169.3 L209.8 169.0 L208.3 168.7 L206.8 168.4 L205.3 168.0 L203.8 167.5 L202.3 166.7 L200.8 165.4 L199.3 164.6 L197.8 163.9 L196.3 163.3 L194.8 162.7 L193.3 162.1 L191.8 161.5 L190.3 161.0 L188.8 160.4 L187.3 159.9 L185.8 159.3 L184.3 158.7 L182.8 158.0 L181.3 157.1 L179.8 156.3 L178.3 155.4 L176.8 154.5 L175.3 153.5 L173.8 152.5 L172.3 151.8 L170.8 151.4 L169.3 151.3 L167.8 151.2 L166.3 151.1 L164.8 151.1 L163.3 151.2 L161.8 151.4 L160.3 151.8 L158.8 152.2 L157.3 152.7 L155.8 153.3 L154.3 154.2 L152.8 155.5 L151.3 157.2 L149.8 159.9 L148.3 163.6 L146.8 168.8 L145.3 173.7 L143.8 178.2 L142.3 182.4 L140.8 186.3 L139.3 190.0 L137.8 193.4 L136.3 196.6 L134.8 199.8 L133.3 203.2 L131.8 206.7 L130.3 210.1 L128.8 213.2 L127.3 216.2 L125.8 219.1 L124.3 221.8 L122.8 224.4 L121.3 227.0 L119.8 229.4 L118.3 231.6 L116.8 233.7 L115.3 235.6 L113.8 237.6 L112.3 239.5 L110.8 241.4 L109.3 243.3 L107.8 245.0 L106.3 246.6 L104.8 248.0 L103.3 249.3 L101.8 250.4 L100.3 251.3 L98.8 252.0 L97.3 252.7 L95.8 253.4 L94.3 254.1 L92.8 255.2 L91.3 256.5 L89.8 257.8 L88.3 258.9 L86.8 259.4 L85.3 259.8 L83.8 260.1 L82.3 260.3 L80.8 260.3 L79.3 259.8 L77.8 258.8 L76.3 258.1 L74.8 258.0 L73.3 258.1 L71.8 258.3 L70.3 258.6 L68.8 258.8 L67.3 259.1 L65.8 259.3 L64.3 259.4 L62.8 259.0 L61.3 258.0 L59.8 256.5 L58.3 254.8 L56.8 253.3 L55.3 251.9 L53.8 250.5 L52.3 249.1 L50.8 248.2 L49.3 248.0 L47.8 248.2 L46.3 248.4 L44.8 248.8 L43.3 249.1 L41.8 249.4 L40.3 249.7 L38.8 250.0 L37.3 250.3 L35.8 250.6 L34.3 250.8 L32.8 250.8 L31.3 250.4 L29.8 249.4 L28.3 248.0 L26.8 246.3 L25.3 244.6 L23.8 243.0 L22.3 241.1 L20.8 238.9 L19.3 236.5 L17.8 234.1 L16.3 231.5 L14.8 228.8 L13.3 225.9 L11.8 222.8 L10.3 219.6 L8.8 216.6 L7.3 213.6 L5.8 210.8 L4.3 208.1 L2.8 205.4 L1.3 202.7 Z" fill="#6ca1c3"/><path d="M1.3 202.7 L2.8 205.4 L4.3 208.1 L5.8 210.8 L7.3 213.6 L8.8 216.6 L10.3 219.6 L11.8 222.8 L13.3 225.9 L14.8 228.8 L16.3 231.5 L17.8 234.1 L19.3 236.5 L20.8 238.9 L22.3 241.1 L23.8 243.0 L25.3 244.6 L26.8 246.3 L28.3 248.0 L29.8 249.4 L31.3 250.4 L32.8 250.8 L34.3 250.8 L35.8 250.6 L37.3 250.3 L38.8 250.0 L40.3 249.7 L41.8 249.4 L43.3 249.1 L44.8 248.8 L46.3 248.4 L47.8 248.2 L49.3 248.0 L50.8 248.2 L52.3 249.1 L53.8 250.5 L55.3 251.9 L56.8 253.3 L58.3 254.8 L59.8 256.5 L61.3 258.0 L62.8 259.0 L64.3 259.4 L65.8 259.3 L67.3 259.1 L68.8 258.8 L70.3 258.6 L71.8 258.3 L73.3 258.1 L74.8 258.0 L76.3 258.1 L77.8 258.8 L79.3 259.8 L80.8 260.3 L82.3 260.3 L83.8 260.1 L85.3 259.8 L86.8 259.4 L88.3 258.9 L89.8 257.8 L91.3 256.5 L92.8 255.2 L94.3 254.1 L95.8 253.4 L97.3 252.7 L98.8 252.0 L100.3 251.3 L101.8 250.4 L103.3 249.3 L104.8 248.0 L106.3 246.6 L107.8 245.0 L109.3 243.3 L110.8 241.4 L112.3 239.5 L113.8 237.6 L115.3 235.6 L116.8 233.7 L118.3 231.6 L119.8 229.4 L121.3 227.0 L122.8 224.4 L124.3 221.8 L125.8 219.1 L127.3 216.2 L128.8 213.2 L130.3 210.1 L131.8 206.7 L133.3 203.2 L134.8 199.8 L136.3 196.6 L137.8 193.4 L139.3 190.0 L140.8 186.3 L142.3 182.4 L143.8 178.2 L145.3 173.7 L146.8 168.8 L148.3 163.6 L149.8 159.9 L151.3 156.9 L152.8 155.1 L154.3 153.7 L155.8 152.6 L157.3 152.0 L158.8 151.4 L160.3 151.0 L161.8 150.6 L163.3 150.4 L164.8 150.4 L166.3 150.5 L167.8 150.7 L169.3 150.9 L170.8 151.1 L172.3 151.8 L173.8 152.5 L175.3 153.5 L176.8 154.5 L178.3 155.4 L179.8 156.3 L181.3 157.1 L182.8 158.0 L184.3 158.7 L185.8 159.3 L187.3 159.9 L188.8 160.4 L190.3 161.0 L191.8 161.5 L193.3 162.1 L194.8 162.7 L196.3 163.3 L197.8 163.9 L199.3 164.6 L200.8 165.4 L202.3 166.7 L203.8 167.5 L205.3 168.0 L206.8 168.4 L208.3 168.7 L209.8 169.0 L211.3 169.3 L212.8 169.6 L214.3 170.0 L215.8 170.6 L217.3 171.3 L218.8 172.1 L220.3 173.0 L221.8 173.8 L223.3 174.6 L224.8 175.3 L226.3 175.9 L227.8 176.5 L229.3 176.9 L230.8 177.3 L232.3 177.8 L233.8 178.2 L235.3 178.6 L236.8 179.1 L238.3 179.7 L239.8 180.3 L241.3 181.0 L242.8 181.8 L244.3 182.6 L245.8 183.4 L247.3 184.2 L248.8 184.9 L250.3 185.6 L251.8 186.3 L253.3 187.0 L254.8 187.7 L256.3 188.4 L257.8 189.0 L259.3 189.6 L260.8 190.2 L262.3 190.7 L263.8 191.1 L265.3 191.6 L266.8 192.0 L268.3 192.4 L269.8 192.8 L271.3 193.1 L272.8 193.3 L274.3 193.5 L275.8 193.6 L277.3 193.8 L278.8 193.9 L280.3 194.0 L281.8 194.1 L283.3 194.2 L284.8 194.1 L286.3 194.0 L287.8 193.6 L289.3 193.1 L290.8 192.5 L292.3 191.8 L293.8 191.2 L295.3 190.6 L296.8 190.1 L298.3 189.4 L299.8 188.7 L301.3 188.0 L302.8 187.4 L304.3 186.9 L305.8 186.6 L307.3 186.5 L308.8 186.7 L310.3 187.0 L311.8 187.5 L313.3 188.1 L314.8 189.0 L316.3 191.4 L317.8 195.0 L319.3 199.1 L320.8 203.1 L322.3 206.9 L323.8 211.1 L325.3 215.5 L326.8 219.8 L328.3 223.7 L329.8 226.9 L331.3 229.7 L332.8 232.3 L334.3 234.7 L335.8 236.8 L337.3 238.6 L338.8 240.0 L340.3 241.3 L341.8 242.3 L343.3 243.2 L344.8 244.1 L346.3 244.9 L347.8 245.8 L349.3 246.8 L350.8 247.8 L352.3 248.7 L353.8 249.2 L355.3 249.4 L356.8 249.4 L358.3 249.3 L359.8 249.1 L361.3 249.0 L362.8 248.9 L364.3 248.9 L365.8 249.1 L367.3 249.4 L368.8 249.8 L370.3 250.3 L371.8 250.7 L373.3 251.1 L374.8 251.5 L376.3 251.9 L377.8 252.3 L379.3 252.7 L380.8 253.1 L382.3 253.5 L383.8 253.9 L385.3 254.3 L386.8 254.6 L388.3 255.0 L389.8 255.4 L391.3 255.7 L392.8 256.2 L394.3 256.6 L395.8 257.1 L397.3 257.5 L398.8 258.0 L400.3 258.5 L401.8 258.9 L403.3 259.3 L404.8 259.8 L406.3 260.2 L407.8 260.7 L409.3 261.1 L410.8 261.5 L412.3 261.8 L413.8 262.1 L415.3 262.2 L416.8 262.3 L418.3 262.4 L419.8 262.5 L421.3 262.5 L422.8 262.6 L424.3 262.6 L425.8 262.7 L427.3 262.9 L428.8 263.1 L430.3 263.2 L431.8 262.9 L433.3 262.2 L434.8 261.2 L436.3 259.9 L437.8 257.8 L439.3 254.7 L440.8 251.5 L442.3 248.5 L443.8 245.5 L445.3 242.5 L446.8 239.5 L448.3 236.7 L449.8 233.8 L451.3 230.6 L452.8 227.0 L454.3 223.1 L455.8 218.3 L457.3 213.2 L458.8 209.0 L460.3 205.2 L461.8 201.2 L463.3 197.0 L464.8 192.8 L466.3 188.4 L467.8 184.0 L469.3 179.7 L470.8 175.6 L472.3 171.6 L473.8 167.8 L475.3 164.2 L476.8 160.8 L478.3 157.6 L479.8 155.6 L481.3 154.0 L482.8 152.8 L484.3 152.2 L485.8 151.8 L487.3 151.5 L488.8 151.3 L490.3 151.2 L491.8 151.2 L493.3 151.4 L494.8 151.6 L496.3 152.0 L497.8 152.4 L499.3 152.8 L500.8 153.6 L502.3 154.3 L503.8 155.2 L505.3 156.0 L506.8 156.9 L508.3 157.6 L509.8 158.3 L511.3 159.0 L512.8 159.7 L514.3 160.4 L515.8 161.2 L517.3 162.0 L518.8 162.9 L520.3 163.8 L521.8 164.6 L523.3 165.5 L524.8 166.5 L526.3 167.6 L527.8 168.8 L529.3 170.3 L530.8 172.0 L532.3 175.3 L533.8 177.3 L535.3 178.6 L536.8 179.6 L538.3 180.4 L539.8 181.2 L541.3 181.9 L542.8 182.7 L544.3 183.4 L545.8 184.1 L547.3 184.8 L548.8 185.4 L550.3 186.0 L551.8 186.7 L553.3 187.4 L554.8 188.1 L556.3 188.9 L557.8 189.6 L559.3 190.4 L560.8 191.0 L562.3 191.6 L563.8 192.1 L565.3 192.5 L566.8 192.8 L568.3 193.0 L569.8 193.2 L571.3 193.5 L572.8 193.7 L574.3 194.0 L575.8 194.3 L577.3 194.6 L578.8 194.9 L580.3 195.3 L581.8 195.7 L583.3 196.1 L584.8 196.5 L586.3 196.9 L587.8 197.3 L589.3 197.6 L590.8 198.0 L592.3 198.4 L593.8 198.8 L595.3 199.1 L596.8 199.5 L598.3 199.9 L599.8 200.3 L601.3 200.6 L602.8 201.0 L604.3 201.4 L605.8 201.8 L607.3 202.1 L608.8 202.5 L610.3 202.9 L611.8 203.3 L613.3 203.6 L614.8 204.0 L616.3 204.4 L617.8 204.8 L619.3 205.1 L620.8 205.5 L622.3 205.9 L623.8 206.2 L625.3 206.6 L626.8 207.0 L628.3 207.3 L629.8 207.7 L631.3 208.1 L632.8 208.5 L634.3 208.9 L635.8 209.3 L637.3 209.8 L638.8 210.3 L640.3 211.0 L641.8 212.2 L643.3 214.3 L644.8 217.0 L646.3 220.0 L647.8 223.0 L649.3 225.7 L650.8 228.5 L652.3 231.4 L653.8 234.3 L655.3 237.1 L656.8 239.7 L658.3 242.0 L659.8 244.3 L661.3 246.5 L662.8 248.5 L664.3 250.4 L665.8 252.0 L667.3 253.4 L668.8 254.8 L670.3 256.0 L671.8 257.2 L673.3 258.3 L674.8 259.3 L676.3 260.2 L677.8 261.0 L679.3 261.7 L680.8 262.3 L682.3 262.8 L683.8 263.4 L685.3 263.9 L686.8 264.6 L688.3 265.4 L689.8 266.3 L691.3 267.0 L692.8 267.6 L694.3 267.9 L695.8 267.8 L697.3 267.6 L698.8 267.3 L700.3 267.0 L701.8 266.7 L703.3 266.4 L704.8 265.9 L706.3 265.3 L707.8 264.8 L709.3 264.5 L710.8 264.5 L712.3 264.6 L713.8 264.9 L715.3 265.3 L716.8 265.6 L718.3 265.9 L719.8 266.2 L721.3 266.6 L722.8 266.9 L724.3 267.3 L725.8 267.6 L727.3 267.8 L728.8 268.0 L730.3 268.2 L731.8 268.4 L733.3 268.6 L734.8 268.7 L736.3 268.7 L737.8 268.4 L739.3 267.8 L740.8 267.1 L742.3 266.4 L743.8 265.4 L745.3 264.4 L746.8 263.4 L748.3 262.4 L749.8 261.6 L751.3 260.8 L752.8 259.9 L754.3 259.2 L755.8 258.4 L757.3 257.7 L758.8 257.0 L760.3 256.4 L761.8 256.0 L763.3 255.4 L764.8 254.6 L766.3 253.4 L767.8 249.9 L769.3 245.2 L770.8 240.9 L772.3 236.3 L773.8 231.4 L775.3 225.9 L776.8 220.9 L778.3 216.7 L779.8 212.7 L781.3 208.9 L782.8 205.2 L784.3 201.3 L785.8 197.2 L787.3 192.9 L788.8 188.5 L790.3 184.1 L791.8 179.5 L793.3 175.1 L794.8 171.4 L796.3 168.1 L797.8 165.2 L799.3 162.4 L800.8 160.0 L802.3 157.9 L803.8 155.7 L805.3 154.0 L806.8 152.5 L808.3 151.1 L809.8 149.9 L811.3 148.8 L812.8 148.1 L814.3 147.6 L815.8 147.3 L817.3 147.0 L818.8 146.8 L820.3 146.8 L821.8 146.8 L823.3 147.0 L824.8 147.4 L826.3 148.0 L827.8 148.6 L829.3 149.2 L830.8 149.8 L832.3 150.6 L833.8 151.3 L835.3 152.1 L836.8 152.9 L838.3 153.7 L839.8 154.5 L841.3 155.3 L842.8 156.0 L844.3 156.8 L845.8 157.6 L847.3 158.3 L848.8 159.1 L850.3 159.8 L851.8 160.5 L853.3 161.1 L854.8 161.8 L856.3 162.4 L857.8 163.1 L859.3 163.8 L860.8 164.5 L862.3 165.3 L863.8 165.9 L865.3 166.2 L866.8 166.4 L868.3 166.6 L869.8 166.8 L871.3 167.1 L872.8 167.4 L874.3 167.9 L875.8 168.4 L877.3 169.0 L878.8 169.6 L880.3 170.2 L881.8 170.9 L883.3 171.4 L884.8 172.0 L886.3 172.6 L887.8 173.2 L889.3 173.8 L890.8 174.3 L892.3 174.9 L893.8 175.4 L895.3 175.9 L896.8 176.4 L898.3 176.9 L899.8 177.4 L901.3 177.9 L902.8 178.3 L904.3 178.7 L905.8 179.1 L907.3 179.4 L908.8 179.7 L910.3 179.9 L911.8 180.2 L913.3 180.4 L914.8 180.6 L916.3 180.7 L917.8 180.9 L919.3 181.0 L920.8 181.1 L922.3 181.2 L923.8 181.3 L925.3 181.3 L926.8 181.4 L928.3 181.4 L929.8 181.4 L931.3 181.4 L932.8 181.3 L934.3 181.2 L935.8 181.1 L937.3 180.9 L938.8 180.7 L940.3 180.5 L941.8 180.1 L943.3 179.4 L944.8 178.5 L946.3 177.5 L947.8 176.6 L949.3 175.8 L950.8 175.1 L952.3 174.4 L953.8 173.7 L955.3 173.1 L956.8 172.5 L958.3 172.1 L959.8 171.6 L961.3 171.1 L962.8 170.7 L964.3 170.4 L965.8 170.1 L967.3 170.1 L968.8 170.2 L970.3 170.6 L971.8 171.2 L973.3 171.9 L974.8 172.5 L976.3 173.1 L977.8 173.8 L979.3 174.4 L982.0 175.7 L982.0 176.0 L979.3 174.7 L977.8 174.1 L976.3 173.4 L974.8 172.8 L973.3 172.2 L971.8 171.5 L970.3 170.9 L968.8 170.5 L967.3 170.4 L965.8 170.4 L964.3 170.7 L962.8 171.0 L961.3 171.4 L959.8 171.9 L958.3 172.4 L956.8 172.8 L955.3 173.4 L953.8 174.0 L952.3 174.7 L950.8 175.4 L949.3 176.1 L947.8 176.9 L946.3 177.8 L944.8 178.8 L943.3 179.7 L941.8 180.4 L940.3 180.8 L938.8 181.0 L937.3 181.2 L935.8 181.4 L934.3 181.5 L932.8 181.6 L931.3 181.7 L929.8 181.7 L928.3 181.7 L926.8 181.7 L925.3 181.6 L923.8 181.6 L922.3 181.5 L920.8 181.4 L919.3 181.3 L917.8 181.2 L916.3 181.0 L914.8 180.9 L913.3 180.7 L911.8 180.5 L910.3 180.2 L908.8 180.0 L907.3 179.7 L905.8 179.4 L904.3 179.0 L902.8 178.6 L901.3 178.2 L899.8 177.7 L898.3 177.2 L896.8 176.7 L895.3 176.2 L893.8 175.7 L892.3 175.2 L890.8 174.6 L889.3 174.1 L887.8 173.5 L886.3 172.9 L884.8 172.3 L883.3 171.7 L881.8 171.2 L880.3 170.5 L878.8 169.9 L877.3 169.3 L875.8 168.7 L874.3 168.2 L872.8 167.7 L871.3 167.4 L869.8 167.1 L868.3 166.9 L866.8 166.7 L865.3 166.5 L863.8 166.2 L862.3 165.6 L860.8 164.8 L859.3 164.1 L857.8 163.4 L856.3 162.7 L854.8 162.1 L853.3 161.4 L851.8 160.8 L850.3 160.1 L848.8 159.4 L847.3 158.6 L845.8 157.9 L844.3 157.1 L842.8 156.3 L841.3 155.6 L839.8 154.8 L838.3 154.0 L836.8 153.2 L835.3 152.4 L833.8 151.6 L832.3 150.9 L830.8 150.4 L829.3 149.8 L827.8 149.3 L826.3 148.8 L824.8 148.4 L823.3 148.1 L821.8 148.0 L820.3 148.0 L818.8 148.1 L817.3 148.3 L815.8 148.6 L814.3 148.9 L812.8 149.2 L811.3 149.9 L809.8 150.9 L808.3 152.0 L806.8 153.3 L805.3 154.6 L803.8 156.3 L802.3 158.2 L800.8 160.3 L799.3 162.7 L797.8 165.5 L796.3 168.4 L794.8 171.7 L793.3 175.4 L791.8 179.8 L790.3 184.4 L788.8 188.8 L787.3 193.2 L785.8 197.5 L784.3 201.6 L782.8 205.5 L781.3 209.2 L779.8 213.0 L778.3 217.0 L776.8 221.2 L775.3 226.2 L773.8 231.7 L772.3 236.6 L770.8 241.2 L769.3 245.5 L767.8 250.2 L766.3 253.7 L764.8 254.9 L763.3 255.7 L761.8 256.3 L760.3 256.7 L758.8 257.3 L757.3 258.0 L755.8 258.7 L754.3 259.5 L752.8 260.2 L751.3 261.1 L749.8 261.9 L748.3 262.7 L746.8 263.7 L745.3 264.7 L743.8 265.7 L742.3 266.7 L740.8 267.4 L739.3 268.1 L737.8 268.7 L736.3 269.0 L734.8 269.0 L733.3 268.9 L731.8 268.7 L730.3 268.5 L728.8 268.3 L727.3 268.1 L725.8 267.9 L724.3 267.6 L722.8 267.2 L721.3 266.9 L719.8 266.5 L718.3 266.2 L716.8 265.9 L715.3 265.6 L713.8 265.2 L712.3 264.9 L710.8 264.8 L709.3 264.8 L707.8 265.1 L706.3 265.6 L704.8 266.2 L703.3 266.7 L701.8 267.0 L700.3 267.3 L698.8 267.6 L697.3 267.9 L695.8 268.1 L694.3 268.2 L692.8 267.9 L691.3 267.3 L689.8 266.6 L688.3 265.7 L686.8 264.9 L685.3 264.2 L683.8 263.7 L682.3 263.1 L680.8 262.6 L679.3 262.0 L677.8 261.3 L676.3 260.5 L674.8 259.6 L673.3 258.6 L671.8 257.5 L670.3 256.3 L668.8 255.1 L667.3 253.7 L665.8 252.3 L664.3 250.7 L662.8 248.8 L661.3 246.8 L659.8 244.6 L658.3 242.3 L656.8 240.0 L655.3 237.4 L653.8 234.6 L652.3 231.7 L650.8 228.8 L649.3 226.0 L647.8 223.3 L646.3 220.3 L644.8 217.3 L643.3 214.6 L641.8 212.5 L640.3 211.3 L638.8 210.6 L637.3 210.1 L635.8 209.6 L634.3 209.2 L632.8 208.8 L631.3 208.4 L629.8 208.0 L628.3 207.6 L626.8 207.3 L625.3 206.9 L623.8 206.5 L622.3 206.2 L620.8 205.8 L619.3 205.4 L617.8 205.1 L616.3 204.7 L614.8 204.3 L613.3 203.9 L611.8 203.6 L610.3 203.2 L608.8 202.8 L607.3 202.4 L605.8 202.1 L604.3 201.7 L602.8 201.3 L601.3 200.9 L599.8 200.6 L598.3 200.2 L596.8 199.8 L595.3 199.4 L593.8 199.1 L592.3 198.7 L590.8 198.3 L589.3 197.9 L587.8 197.6 L586.3 197.2 L584.8 196.8 L583.3 196.4 L581.8 196.0 L580.3 195.6 L578.8 195.2 L577.3 194.9 L575.8 194.6 L574.3 194.3 L572.8 194.0 L571.3 193.8 L569.8 193.5 L568.3 193.3 L566.8 193.1 L565.3 192.8 L563.8 192.4 L562.3 191.9 L560.8 191.3 L559.3 190.7 L557.8 189.9 L556.3 189.2 L554.8 188.4 L553.3 187.7 L551.8 187.0 L550.3 186.3 L548.8 185.7 L547.3 185.1 L545.8 184.4 L544.3 183.7 L542.8 183.0 L541.3 182.2 L539.8 181.5 L538.3 180.7 L536.8 179.9 L535.3 178.9 L533.8 177.6 L532.3 175.6 L530.8 172.3 L529.3 170.6 L527.8 169.1 L526.3 167.9 L524.8 166.8 L523.3 165.8 L521.8 164.9 L520.3 164.1 L518.8 163.2 L517.3 162.3 L515.8 161.5 L514.3 160.7 L512.8 160.0 L511.3 159.3 L509.8 158.6 L508.3 157.9 L506.8 157.2 L505.3 156.3 L503.8 155.5 L502.3 154.6 L500.8 153.9 L499.3 153.4 L497.8 153.1 L496.3 152.8 L494.8 152.6 L493.3 152.4 L491.8 152.4 L490.3 152.4 L488.8 152.5 L487.3 152.7 L485.8 152.9 L484.3 153.2 L482.8 153.7 L481.3 154.8 L479.8 156.3 L478.3 158.2 L476.8 161.1 L475.3 164.5 L473.8 168.1 L472.3 171.9 L470.8 175.9 L469.3 180.0 L467.8 184.3 L466.3 188.7 L464.8 193.1 L463.3 197.3 L461.8 201.5 L460.3 205.5 L458.8 209.3 L457.3 213.5 L455.8 218.6 L454.3 223.4 L452.8 227.3 L451.3 230.9 L449.8 234.1 L448.3 237.0 L446.8 239.8 L445.3 242.8 L443.8 245.8 L442.3 248.8 L440.8 251.8 L439.3 255.0 L437.8 258.1 L436.3 260.2 L434.8 261.5 L433.3 262.5 L431.8 263.2 L430.3 263.5 L428.8 263.4 L427.3 263.2 L425.8 263.0 L424.3 262.9 L422.8 262.9 L421.3 262.8 L419.8 262.8 L418.3 262.7 L416.8 262.6 L415.3 262.5 L413.8 262.4 L412.3 262.1 L410.8 261.8 L409.3 261.4 L407.8 261.0 L406.3 260.5 L404.8 260.1 L403.3 259.6 L401.8 259.2 L400.3 258.8 L398.8 258.3 L397.3 257.8 L395.8 257.4 L394.3 256.9 L392.8 256.5 L391.3 256.0 L389.8 255.7 L388.3 255.3 L386.8 254.9 L385.3 254.6 L383.8 254.2 L382.3 253.8 L380.8 253.4 L379.3 253.0 L377.8 252.6 L376.3 252.2 L374.8 251.8 L373.3 251.4 L371.8 251.0 L370.3 250.6 L368.8 250.1 L367.3 249.7 L365.8 249.4 L364.3 249.2 L362.8 249.2 L361.3 249.3 L359.8 249.4 L358.3 249.6 L356.8 249.7 L355.3 249.7 L353.8 249.5 L352.3 249.0 L350.8 248.1 L349.3 247.1 L347.8 246.1 L346.3 245.2 L344.8 244.4 L343.3 243.5 L341.8 242.6 L340.3 241.6 L338.8 240.3 L337.3 238.9 L335.8 237.1 L334.3 235.0 L332.8 232.6 L331.3 230.0 L329.8 227.2 L328.3 224.0 L326.8 220.1 L325.3 215.8 L323.8 211.4 L322.3 207.2 L320.8 203.4 L319.3 199.4 L317.8 195.3 L316.3 191.7 L314.8 189.3 L313.3 188.4 L311.8 187.8 L310.3 187.3 L308.8 187.0 L307.3 186.8 L305.8 186.9 L304.3 187.2 L302.8 187.7 L301.3 188.3 L299.8 189.0 L298.3 189.7 L296.8 190.4 L295.3 190.9 L293.8 191.5 L292.3 192.1 L290.8 192.8 L289.3 193.4 L287.8 193.9 L286.3 194.3 L284.8 194.4 L283.3 194.5 L281.8 194.4 L280.3 194.3 L278.8 194.2 L277.3 194.1 L275.8 193.9 L274.3 193.8 L272.8 193.6 L271.3 193.4 L269.8 193.1 L268.3 192.7 L266.8 192.3 L265.3 191.9 L263.8 191.4 L262.3 191.0 L260.8 190.5 L259.3 189.9 L257.8 189.3 L256.3 188.7 L254.8 188.0 L253.3 187.3 L251.8 186.6 L250.3 185.9 L248.8 185.2 L247.3 184.5 L245.8 183.7 L244.3 182.9 L242.8 182.1 L241.3 181.3 L239.8 180.6 L238.3 180.0 L236.8 179.4 L235.3 178.9 L233.8 178.5 L232.3 178.1 L230.8 177.6 L229.3 177.2 L227.8 176.8 L226.3 176.2 L224.8 175.6 L223.3 174.9 L221.8 174.1 L220.3 173.3 L218.8 172.4 L217.3 171.6 L215.8 170.9 L214.3 170.3 L212.8 169.9 L211.3 169.6 L209.8 169.3 L208.3 169.0 L206.8 168.7 L205.3 168.3 L203.8 167.8 L202.3 167.0 L200.8 165.7 L199.3 164.9 L197.8 164.2 L196.3 163.6 L194.8 163.0 L193.3 162.4 L191.8 161.8 L190.3 161.3 L188.8 160.7 L187.3 160.2 L185.8 159.6 L184.3 159.0 L182.8 158.3 L181.3 157.4 L179.8 156.6 L178.3 155.7 L176.8 154.8 L175.3 153.8 L173.8 152.8 L172.3 152.1 L170.8 151.7 L169.3 151.6 L167.8 151.5 L166.3 151.4 L164.8 151.4 L163.3 151.5 L161.8 151.7 L160.3 152.1 L158.8 152.5 L157.3 153.0 L155.8 153.6 L154.3 154.5 L152.8 155.8 L151.3 157.5 L149.8 160.2 L148.3 163.9 L146.8 169.1 L145.3 174.0 L143.8 178.5 L142.3 182.7 L140.8 186.6 L139.3 190.3 L137.8 193.7 L136.3 196.9 L134.8 200.1 L133.3 203.5 L131.8 207.0 L130.3 210.4 L128.8 213.5 L127.3 216.5 L125.8 219.4 L124.3 222.1 L122.8 224.7 L121.3 227.3 L119.8 229.7 L118.3 231.9 L116.8 234.0 L115.3 235.9 L113.8 237.9 L112.3 239.8 L110.8 241.7 L109.3 243.6 L107.8 245.3 L106.3 246.9 L104.8 248.3 L103.3 249.6 L101.8 250.7 L100.3 251.6 L98.8 252.3 L97.3 253.0 L95.8 253.7 L94.3 254.4 L92.8 255.5 L91.3 256.8 L89.8 258.1 L88.3 259.2 L86.8 259.7 L85.3 260.1 L83.8 260.4 L82.3 260.6 L80.8 260.6 L79.3 260.1 L77.8 259.1 L76.3 258.4 L74.8 258.3 L73.3 258.4 L71.8 258.6 L70.3 258.9 L68.8 259.1 L67.3 259.4 L65.8 259.6 L64.3 259.7 L62.8 259.3 L61.3 258.3 L59.8 256.8 L58.3 255.1 L56.8 253.6 L55.3 252.2 L53.8 250.8 L52.3 249.4 L50.8 248.5 L49.3 248.3 L47.8 248.5 L46.3 248.7 L44.8 249.1 L43.3 249.4 L41.8 249.7 L40.3 250.0 L38.8 250.3 L37.3 250.6 L35.8 250.9 L34.3 251.1 L32.8 251.1 L31.3 250.7 L29.8 249.7 L28.3 248.3 L26.8 246.6 L25.3 244.9 L23.8 243.3 L22.3 241.4 L20.8 239.2 L19.3 236.8 L17.8 234.4 L16.3 231.8 L14.8 229.1 L13.3 226.2 L11.8 223.1 L10.3 219.9 L8.8 216.9 L7.3 213.9 L5.8 211.1 L4.3 208.4 L2.8 205.7 L1.3 203.0 Z" fill="#3445c8"/><path d="M1.3 202.7 L2.8 205.4 L4.3 208.1 L5.8 210.8 L7.3 213.6 L8.8 216.6 L10.3 219.6 L11.8 222.8 L13.3 225.9 L14.8 228.8 L16.3 231.5 L17.8 234.1 L19.3 236.5 L20.8 238.9 L22.3 241.1 L23.8 243.0 L25.3 244.6 L26.8 246.3 L28.3 248.0 L29.8 249.4 L31.3 250.4 L32.8 250.8 L34.3 250.8 L35.8 250.6 L37.3 250.3 L38.8 250.0 L40.3 249.7 L41.8 249.4 L43.3 249.1 L44.8 248.8 L46.3 248.4 L47.8 248.2 L49.3 248.0 L50.8 248.2 L52.3 249.1 L53.8 250.5 L55.3 251.9 L56.8 253.3 L58.3 254.8 L59.8 256.5 L61.3 258.0 L62.8 259.0 L64.3 259.4 L65.8 259.3 L67.3 259.1 L68.8 258.8 L70.3 258.6 L71.8 258.3 L73.3 258.1 L74.8 258.0 L76.3 258.1 L77.8 258.8 L79.3 259.8 L80.8 260.3 L82.3 260.3 L83.8 260.1 L85.3 259.8 L86.8 259.4 L88.3 258.9 L89.8 257.8 L91.3 256.5 L92.8 255.2 L94.3 254.1 L95.8 253.4 L97.3 252.7 L98.8 252.0 L100.3 251.3 L101.8 250.4 L103.3 249.3 L104.8 248.0 L106.3 246.6 L107.8 245.0 L109.3 243.3 L110.8 241.4 L112.3 239.5 L113.8 237.6 L115.3 235.6 L116.8 233.7 L118.3 231.6 L119.8 229.4 L121.3 227.0 L122.8 224.4 L124.3 221.8 L125.8 219.1 L127.3 216.2 L128.8 213.2 L130.3 210.1 L131.8 206.7 L133.3 203.2 L134.8 199.8 L136.3 196.6 L137.8 193.4 L139.3 190.0 L140.8 186.3 L142.3 182.4 L143.8 178.2 L145.3 173.7 L146.8 168.8 L148.3 163.6 L149.8 159.9 L151.3 157.2 L152.8 155.5 L154.3 154.2 L155.8 153.3 L157.3 152.7 L158.8 152.2 L160.3 151.8 L161.8 151.4 L163.3 151.2 L164.8 151.1 L166.3 151.1 L167.8 151.2 L169.3 151.3 L170.8 151.4 L172.3 151.8 L173.8 152.5 L175.3 153.5 L176.8 154.5 L178.3 155.4 L179.8 156.3 L181.3 157.1 L182.8 158.0 L184.3 158.7 L185.8 159.3 L187.3 159.9 L188.8 160.4 L190.3 161.0 L191.8 161.5 L193.3 162.1 L194.8 162.7 L196.3 163.3 L197.8 163.9 L199.3 164.6 L200.8 165.4 L202.3 166.7 L203.8 167.5 L205.3 168.0 L206.8 168.4 L208.3 168.7 L209.8 169.0 L211.3 169.3 L212.8 169.6 L214.3 170.0 L215.8 170.6 L217.3 171.3 L218.8 172.1 L220.3 173.0 L221.8 173.8 L223.3 174.6 L224.8 175.3 L226.3 175.9 L227.8 176.5 L229.3 176.9 L230.8 177.3 L232.3 177.8 L233.8 178.2 L235.3 178.6 L236.8 179.1 L238.3 179.7 L239.8 180.3 L241.3 181.0 L242.8 181.8 L244.3 182.6 L245.8 183.4 L247.3 184.2 L248.8 184.9 L250.3 185.6 L251.8 186.3 L253.3 187.0 L254.8 187.7 L256.3 188.4 L257.8 189.0 L259.3 189.6 L260.8 190.2 L262.3 190.7 L263.8 191.1 L265.3 191.6 L266.8 192.0 L268.3 192.4 L269.8 192.8 L271.3 193.1 L272.8 193.3 L274.3 193.5 L275.8 193.6 L277.3 193.8 L278.8 193.9 L280.3 194.0 L281.8 194.1 L283.3 194.2 L284.8 194.1 L286.3 194.0 L287.8 193.6 L289.3 193.1 L290.8 192.5 L292.3 191.8 L293.8 191.2 L295.3 190.6 L296.8 190.1 L298.3 189.4 L299.8 188.7 L301.3 188.0 L302.8 187.4 L304.3 186.9 L305.8 186.6 L307.3 186.5 L308.8 186.7 L310.3 187.0 L311.8 187.5 L313.3 188.1 L314.8 189.0 L316.3 191.4 L317.8 195.0 L319.3 199.1 L320.8 203.1 L322.3 206.9 L323.8 211.1 L325.3 215.5 L326.8 219.8 L328.3 223.7 L329.8 226.9 L331.3 229.7 L332.8 232.3 L334.3 234.7 L335.8 236.8 L337.3 238.6 L338.8 240.0 L340.3 241.3 L341.8 242.3 L343.3 243.2 L344.8 244.1 L346.3 244.9 L347.8 245.8 L349.3 246.8 L350.8 247.8 L352.3 248.7 L353.8 249.2 L355.3 249.4 L356.8 249.4 L358.3 249.3 L359.8 249.1 L361.3 249.0 L362.8 248.9 L364.3 248.9 L365.8 249.1 L367.3 249.4 L368.8 249.8 L370.3 250.3 L371.8 250.7 L373.3 251.1 L374.8 251.5 L376.3 251.9 L377.8 252.3 L379.3 252.7 L380.8 253.1 L382.3 253.5 L383.8 253.9 L385.3 254.3 L386.8 254.6 L388.3 255.0 L389.8 255.4 L391.3 255.7 L392.8 256.2 L394.3 256.6 L395.8 257.1 L397.3 257.5 L398.8 258.0 L400.3 258.5 L401.8 258.9 L403.3 259.3 L404.8 259.8 L406.3 260.2 L407.8 260.7 L409.3 261.1 L410.8 261.5 L412.3 261.8 L413.8 262.1 L415.3 262.2 L416.8 262.3 L418.3 262.4 L419.8 262.5 L421.3 262.5 L422.8 262.6 L424.3 262.6 L425.8 262.7 L427.3 262.9 L428.8 263.1 L430.3 263.2 L431.8 262.9 L433.3 262.2 L434.8 261.2 L436.3 259.9 L437.8 257.8 L439.3 254.7 L440.8 251.5 L442.3 248.5 L443.8 245.5 L445.3 242.5 L446.8 239.5 L448.3 236.7 L449.8 233.8 L451.3 230.6 L452.8 227.0 L454.3 223.1 L455.8 218.3 L457.3 213.2 L458.8 209.0 L460.3 205.2 L461.8 201.2 L463.3 197.0 L464.8 192.8 L466.3 188.4 L467.8 184.0 L469.3 179.7 L470.8 175.6 L472.3 171.6 L473.8 167.8 L475.3 164.2 L476.8 160.8 L478.3 157.9 L479.8 156.0 L481.3 154.5 L482.8 153.4 L484.3 152.9 L485.8 152.6 L487.3 152.4 L488.8 152.2 L490.3 152.1 L491.8 152.1 L493.3 152.1 L494.8 152.3 L496.3 152.5 L497.8 152.8 L499.3 153.1 L500.8 153.6 L502.3 154.3 L503.8 155.2 L505.3 156.0 L506.8 156.9 L508.3 157.6 L509.8 158.3 L511.3 159.0 L512.8 159.7 L514.3 160.4 L515.8 161.2 L517.3 162.0 L518.8 162.9 L520.3 163.8 L521.8 164.6 L523.3 165.5 L524.8 166.5 L526.3 167.6 L527.8 168.8 L529.3 170.3 L530.8 172.0 L532.3 175.3 L533.8 177.3 L535.3 178.6 L536.8 179.6 L538.3 180.4 L539.8 181.2 L541.3 181.9 L542.8 182.7 L544.3 183.4 L545.8 184.1 L547.3 184.8 L548.8 185.4 L550.3 186.0 L551.8 186.7 L553.3 187.4 L554.8 188.1 L556.3 188.9 L557.8 189.6 L559.3 190.4 L560.8 191.0 L562.3 191.6 L563.8 192.1 L565.3 192.5 L566.8 192.8 L568.3 193.0 L569.8 193.2 L571.3 193.5 L572.8 193.7 L574.3 194.0 L575.8 194.3 L577.3 194.6 L578.8 194.9 L580.3 195.3 L581.8 195.7 L583.3 196.1 L584.8 196.5 L586.3 196.9 L587.8 197.3 L589.3 197.6 L590.8 198.0 L592.3 198.4 L593.8 198.8 L595.3 199.1 L596.8 199.5 L598.3 199.9 L599.8 200.3 L601.3 200.6 L602.8 201.0 L604.3 201.4 L605.8 201.8 L607.3 202.1 L608.8 202.5 L610.3 202.9 L611.8 203.3 L613.3 203.6 L614.8 204.0 L616.3 204.4 L617.8 204.8 L619.3 205.1 L620.8 205.5 L622.3 205.9 L623.8 206.2 L625.3 206.6 L626.8 207.0 L628.3 207.3 L629.8 207.7 L631.3 208.1 L632.8 208.5 L634.3 208.9 L635.8 209.3 L637.3 209.8 L638.8 210.3 L640.3 211.0 L641.8 212.2 L643.3 214.3 L644.8 217.0 L646.3 220.0 L647.8 223.0 L649.3 225.7 L650.8 228.5 L652.3 231.4 L653.8 234.3 L655.3 237.1 L656.8 239.7 L658.3 242.0 L659.8 244.3 L661.3 246.5 L662.8 248.5 L664.3 250.4 L665.8 252.0 L667.3 253.4 L668.8 254.8 L670.3 256.0 L671.8 257.2 L673.3 258.3 L674.8 259.3 L676.3 260.2 L677.8 261.0 L679.3 261.7 L680.8 262.3 L682.3 262.8 L683.8 263.4 L685.3 263.9 L686.8 264.6 L688.3 265.4 L689.8 266.3 L691.3 267.0 L692.8 267.6 L694.3 267.9 L695.8 267.8 L697.3 267.6 L698.8 267.3 L700.3 267.0 L701.8 266.7 L703.3 266.4 L704.8 265.9 L706.3 265.3 L707.8 264.8 L709.3 264.5 L710.8 264.5 L712.3 264.6 L713.8 264.9 L715.3 265.3 L716.8 265.6 L718.3 265.9 L719.8 266.2 L721.3 266.6 L722.8 266.9 L724.3 267.3 L725.8 267.6 L727.3 267.8 L728.8 268.0 L730.3 268.2 L731.8 268.4 L733.3 268.6 L734.8 268.7 L736.3 268.7 L737.8 268.4 L739.3 267.8 L740.8 267.1 L742.3 266.4 L743.8 265.4 L745.3 264.4 L746.8 263.4 L748.3 262.4 L749.8 261.6 L751.3 260.8 L752.8 259.9 L754.3 259.2 L755.8 258.4 L757.3 257.7 L758.8 257.0 L760.3 256.4 L761.8 256.0 L763.3 255.4 L764.8 254.6 L766.3 253.4 L767.8 249.9 L769.3 245.2 L770.8 240.9 L772.3 236.3 L773.8 231.4 L775.3 225.9 L776.8 220.9 L778.3 216.7 L779.8 212.7 L781.3 208.9 L782.8 205.2 L784.3 201.3 L785.8 197.2 L787.3 192.9 L788.8 188.5 L790.3 184.1 L791.8 179.5 L793.3 175.1 L794.8 171.4 L796.3 168.1 L797.8 165.2 L799.3 162.4 L800.8 160.0 L802.3 157.9 L803.8 156.0 L805.3 154.3 L806.8 153.0 L808.3 151.7 L809.8 150.6 L811.3 149.6 L812.8 148.9 L814.3 148.6 L815.8 148.3 L817.3 148.0 L818.8 147.8 L820.3 147.7 L821.8 147.7 L823.3 147.8 L824.8 148.1 L826.3 148.5 L827.8 149.0 L829.3 149.5 L830.8 150.1 L832.3 150.6 L833.8 151.3 L835.3 152.1 L836.8 152.9 L838.3 153.7 L839.8 154.5 L841.3 155.3 L842.8 156.0 L844.3 156.8 L845.8 157.6 L847.3 158.3 L848.8 159.1 L850.3 159.8 L851.8 160.5 L853.3 161.1 L854.8 161.8 L856.3 162.4 L857.8 163.1 L859.3 163.8 L860.8 164.5 L862.3 165.3 L863.8 165.9 L865.3 166.2 L866.8 166.4 L868.3 166.6 L869.8 166.8 L871.3 167.1 L872.8 167.4 L874.3 167.9 L875.8 168.4 L877.3 169.0 L878.8 169.6 L880.3 170.2 L881.8 170.9 L883.3 171.4 L884.8 172.0 L886.3 172.6 L887.8 173.2 L889.3 173.8 L890.8 174.3 L892.3 174.9 L893.8 175.4 L895.3 175.9 L896.8 176.4 L898.3 176.9 L899.8 177.4 L901.3 177.9 L902.8 178.3 L904.3 178.7 L905.8 179.1 L907.3 179.4 L908.8 179.7 L910.3 179.9 L911.8 180.2 L913.3 180.4 L914.8 180.6 L916.3 180.7 L917.8 180.9 L919.3 181.0 L920.8 181.1 L922.3 181.2 L923.8 181.3 L925.3 181.3 L926.8 181.4 L928.3 181.4 L929.8 181.4 L931.3 181.4 L932.8 181.3 L934.3 181.2 L935.8 181.1 L937.3 180.9 L938.8 180.7 L940.3 180.5 L941.8 180.1 L943.3 179.4 L944.8 178.5 L946.3 177.5 L947.8 176.6 L949.3 175.8 L950.8 175.1 L952.3 174.4 L953.8 173.7 L955.3 173.1 L956.8 172.5 L958.3 172.1 L959.8 171.6 L961.3 171.1 L962.8 170.7 L964.3 170.4 L965.8 170.1 L967.3 170.1 L968.8 170.2 L970.3 170.6 L971.8 171.2 L973.3 171.9 L974.8 172.5 L976.3 173.1 L977.8 173.8 L979.3 174.4 L982.0 175.7 L982.0 178.3 L979.3 177.0 L977.8 176.3 L976.3 175.7 L974.8 175.1 L973.3 174.5 L971.8 173.9 L970.3 173.4 L968.8 173.0 L967.3 172.9 L965.8 173.0 L964.3 173.2 L962.8 173.6 L961.3 174.0 L959.8 174.5 L958.3 174.9 L956.8 175.4 L955.3 175.9 L953.8 176.4 L952.3 176.9 L950.8 177.5 L949.3 178.1 L947.8 178.9 L946.3 179.8 L944.8 180.8 L943.3 181.7 L941.8 182.4 L940.3 182.8 L938.8 183.0 L937.3 183.2 L935.8 183.3 L934.3 183.5 L932.8 183.6 L931.3 183.7 L929.8 183.7 L928.3 183.7 L926.8 183.7 L925.3 183.7 L923.8 183.6 L922.3 183.6 L920.8 183.5 L919.3 183.5 L917.8 183.4 L916.3 183.3 L914.8 183.2 L913.3 183.0 L911.8 182.8 L910.3 182.5 L908.8 182.2 L907.3 181.9 L905.8 181.6 L904.3 181.3 L902.8 180.9 L901.3 180.5 L899.8 180.1 L898.3 179.6 L896.8 179.2 L895.3 178.7 L893.8 178.3 L892.3 177.8 L890.8 177.3 L889.3 176.7 L887.8 176.2 L886.3 175.7 L884.8 175.2 L883.3 174.6 L881.8 174.1 L880.3 173.5 L878.8 172.9 L877.3 172.4 L875.8 171.8 L874.3 171.4 L872.8 171.0 L871.3 170.7 L869.8 170.5 L868.3 170.3 L866.8 170.2 L865.3 170.0 L863.8 169.7 L862.3 169.1 L860.8 168.4 L859.3 167.9 L857.8 167.5 L856.3 167.1 L854.8 166.7 L853.3 166.3 L851.8 165.9 L850.3 165.4 L848.8 165.0 L847.3 164.5 L845.8 164.0 L844.3 163.5 L842.8 163.0 L841.3 162.4 L839.8 161.9 L838.3 161.3 L836.8 160.7 L835.3 160.1 L833.8 159.5 L832.3 158.8 L830.8 158.3 L829.3 157.8 L827.8 157.3 L826.3 156.9 L824.8 156.6 L823.3 156.4 L821.8 156.2 L820.3 156.2 L818.8 156.2 L817.3 156.3 L815.8 156.5 L814.3 156.8 L812.8 157.1 L811.3 157.6 L809.8 158.2 L808.3 159.0 L806.8 159.9 L805.3 160.9 L803.8 162.1 L802.3 163.5 L800.8 165.1 L799.3 166.9 L797.8 169.1 L796.3 171.6 L794.8 174.7 L793.3 178.5 L791.8 182.8 L790.3 187.2 L788.8 191.4 L787.3 195.5 L785.8 199.5 L784.3 203.5 L782.8 207.3 L781.3 211.1 L779.8 215.2 L778.3 219.5 L776.8 223.9 L775.3 228.6 L773.8 233.7 L772.3 238.5 L770.8 243.0 L769.3 247.3 L767.8 251.8 L766.3 254.8 L764.8 255.9 L763.3 256.7 L761.8 257.3 L760.3 257.8 L758.8 258.3 L757.3 258.9 L755.8 259.7 L754.3 260.5 L752.8 261.2 L751.3 262.0 L749.8 262.9 L748.3 263.7 L746.8 264.7 L745.3 265.7 L743.8 266.7 L742.3 267.7 L740.8 268.4 L739.3 269.1 L737.8 269.7 L736.3 270.0 L734.8 270.0 L733.3 269.9 L731.8 269.7 L730.3 269.5 L728.8 269.3 L727.3 269.1 L725.8 268.9 L724.3 268.6 L722.8 268.2 L721.3 267.8 L719.8 267.5 L718.3 267.1 L716.8 266.8 L715.3 266.4 L713.8 265.9 L712.3 265.6 L710.8 265.4 L709.3 265.4 L707.8 265.7 L706.3 266.3 L704.8 266.9 L703.3 267.4 L701.8 267.7 L700.3 268.0 L698.8 268.3 L697.3 268.5 L695.8 268.7 L694.3 268.7 L692.8 268.5 L691.3 268.0 L689.8 267.2 L688.3 266.4 L686.8 265.6 L685.3 264.9 L683.8 264.4 L682.3 263.8 L680.8 263.3 L679.3 262.7 L677.8 262.0 L676.3 261.2 L674.8 260.3 L673.3 259.3 L671.8 258.2 L670.3 257.0 L668.8 255.8 L667.3 254.4 L665.8 253.0 L664.3 251.4 L662.8 249.6 L661.3 247.6 L659.8 245.5 L658.3 243.3 L656.8 241.0 L655.3 238.4 L653.8 235.6 L652.3 232.7 L650.8 229.8 L649.3 227.0 L647.8 224.3 L646.3 221.2 L644.8 218.2 L643.3 215.6 L641.8 213.5 L640.3 212.3 L638.8 211.6 L637.3 211.0 L635.8 210.6 L634.3 210.2 L632.8 209.8 L631.3 209.4 L629.8 209.0 L628.3 208.6 L626.8 208.2 L625.3 207.9 L623.8 207.5 L622.3 207.2 L620.8 206.8 L619.3 206.4 L617.8 206.0 L616.3 205.7 L614.8 205.3 L613.3 204.9 L611.8 204.5 L610.3 204.2 L608.8 203.8 L607.3 203.4 L605.8 203.0 L604.3 202.7 L602.8 202.3 L601.3 201.9 L599.8 201.5 L598.3 201.2 L596.8 200.8 L595.3 200.5 L593.8 200.1 L592.3 199.8 L590.8 199.5 L589.3 199.1 L587.8 198.8 L586.3 198.4 L584.8 198.0 L583.3 197.7 L581.8 197.2 L580.3 196.8 L578.8 196.5 L577.3 196.1 L575.8 195.8 L574.3 195.5 L572.8 195.3 L571.3 195.1 L569.8 194.9 L568.3 194.7 L566.8 194.5 L565.3 194.2 L563.8 193.9 L562.3 193.5 L560.8 192.9 L559.3 192.2 L557.8 191.5 L556.3 190.7 L554.8 190.0 L553.3 189.3 L551.8 188.6 L550.3 188.0 L548.8 187.4 L547.3 186.7 L545.8 186.1 L544.3 185.4 L542.8 184.7 L541.3 184.0 L539.8 183.2 L538.3 182.4 L536.8 181.6 L535.3 180.6 L533.8 179.4 L532.3 177.9 L530.8 175.5 L529.3 174.1 L527.8 172.8 L526.3 171.6 L524.8 170.6 L523.3 169.7 L521.8 168.8 L520.3 168.0 L518.8 167.2 L517.3 166.4 L515.8 165.7 L514.3 165.0 L512.8 164.4 L511.3 163.8 L509.8 163.3 L508.3 162.7 L506.8 162.2 L505.3 161.7 L503.8 161.1 L502.3 160.6 L500.8 160.1 L499.3 159.8 L497.8 159.6 L496.3 159.5 L494.8 159.4 L493.3 159.3 L491.8 159.4 L490.3 159.4 L488.8 159.6 L487.3 159.8 L485.8 160.0 L484.3 160.2 L482.8 160.6 L481.3 161.3 L479.8 162.3 L478.3 163.6 L476.8 165.9 L475.3 168.6 L473.8 171.6 L472.3 175.1 L470.8 178.8 L469.3 182.6 L467.8 186.7 L466.3 190.9 L464.8 195.0 L463.3 199.0 L461.8 202.9 L460.3 206.7 L458.8 210.6 L457.3 215.2 L455.8 220.3 L454.3 224.7 L452.8 228.4 L451.3 231.9 L449.8 235.0 L448.3 237.9 L446.8 240.8 L445.3 243.8 L443.8 246.8 L442.3 249.8 L440.8 252.8 L439.3 255.9 L437.8 258.7 L436.3 260.8 L434.8 262.0 L433.3 262.9 L431.8 263.6 L430.3 264.0 L428.8 264.2 L427.3 264.2 L425.8 264.1 L424.3 264.1 L422.8 264.0 L421.3 264.0 L419.8 264.0 L418.3 263.9 L416.8 263.8 L415.3 263.8 L413.8 263.6 L412.3 263.4 L410.8 263.1 L409.3 262.7 L407.8 262.2 L406.3 261.7 L404.8 261.3 L403.3 260.9 L401.8 260.4 L400.3 260.0 L398.8 259.5 L397.3 259.0 L395.8 258.6 L394.3 258.1 L392.8 257.7 L391.3 257.3 L389.8 256.9 L388.3 256.5 L386.8 256.1 L385.3 255.8 L383.8 255.4 L382.3 255.0 L380.8 254.7 L379.3 254.3 L377.8 253.9 L376.3 253.5 L374.8 253.1 L373.3 252.7 L371.8 252.3 L370.3 251.8 L368.8 251.4 L367.3 250.9 L365.8 250.6 L364.3 250.4 L362.8 250.4 L361.3 250.5 L359.8 250.6 L358.3 250.8 L356.8 250.9 L355.3 251.0 L353.8 250.8 L352.3 250.2 L350.8 249.3 L349.3 248.4 L347.8 247.4 L346.3 246.5 L344.8 245.6 L343.3 244.8 L341.8 243.8 L340.3 242.8 L338.8 241.6 L337.3 240.1 L335.8 238.3 L334.3 236.2 L332.8 233.9 L331.3 231.3 L329.8 228.5 L328.3 225.3 L326.8 221.4 L325.3 217.2 L323.8 212.9 L322.3 208.8 L320.8 205.0 L319.3 201.0 L317.8 197.0 L316.3 193.4 L314.8 191.0 L313.3 190.0 L311.8 189.2 L310.3 188.6 L308.8 188.2 L307.3 188.0 L305.8 188.1 L304.3 188.5 L302.8 189.0 L301.3 189.6 L299.8 190.3 L298.3 191.0 L296.8 191.6 L295.3 192.1 L293.8 192.7 L292.3 193.3 L290.8 193.9 L289.3 194.4 L287.8 194.9 L286.3 195.3 L284.8 195.4 L283.3 195.4 L281.8 195.4 L280.3 195.3 L278.8 195.2 L277.3 195.1 L275.8 195.0 L274.3 194.8 L272.8 194.7 L271.3 194.5 L269.8 194.2 L268.3 193.8 L266.8 193.4 L265.3 193.0 L263.8 192.5 L262.3 192.1 L260.8 191.6 L259.3 191.1 L257.8 190.5 L256.3 189.9 L254.8 189.3 L253.3 188.6 L251.8 188.0 L250.3 187.3 L248.8 186.6 L247.3 185.8 L245.8 185.0 L244.3 184.2 L242.8 183.4 L241.3 182.7 L239.8 182.0 L238.3 181.4 L236.8 181.0 L235.3 180.6 L233.8 180.2 L232.3 179.9 L230.8 179.6 L229.3 179.2 L227.8 178.9 L226.3 178.5 L224.8 177.9 L223.3 177.3 L221.8 176.5 L220.3 175.7 L218.8 174.9 L217.3 174.2 L215.8 173.6 L214.3 173.2 L212.8 173.0 L211.3 172.9 L209.8 172.8 L208.3 172.7 L206.8 172.6 L205.3 172.5 L203.8 172.2 L202.3 171.1 L200.8 168.9 L199.3 168.3 L197.8 167.8 L196.3 167.4 L194.8 167.1 L193.3 166.7 L191.8 166.3 L190.3 165.9 L188.8 165.4 L187.3 164.9 L185.8 164.4 L184.3 163.9 L182.8 163.3 L181.3 162.7 L179.8 162.1 L178.3 161.5 L176.8 160.9 L175.3 160.1 L173.8 159.4 L172.3 158.8 L170.8 158.6 L169.3 158.6 L167.8 158.6 L166.3 158.6 L164.8 158.7 L163.3 158.8 L161.8 159.0 L160.3 159.2 L158.8 159.5 L157.3 159.9 L155.8 160.4 L154.3 161.2 L152.8 162.2 L151.3 163.6 L149.8 165.8 L148.3 168.8 L146.8 172.7 L145.3 176.8 L143.8 180.8 L142.3 184.8 L140.8 188.6 L139.3 192.2 L137.8 195.4 L136.3 198.5 L134.8 201.6 L133.3 205.0 L131.8 208.4 L130.3 211.7 L128.8 214.7 L127.3 217.6 L125.8 220.4 L124.3 223.1 L122.8 225.7 L121.3 228.3 L119.8 230.7 L118.3 232.9 L116.8 235.0 L115.3 236.9 L113.8 238.9 L112.3 240.8 L110.8 242.7 L109.3 244.5 L107.8 246.2 L106.3 247.7 L104.8 249.2 L103.3 250.6 L101.8 251.7 L100.3 252.6 L98.8 253.2 L97.3 253.8 L95.8 254.4 L94.3 255.2 L92.8 256.3 L91.3 257.6 L89.8 259.0 L88.3 260.2 L86.8 260.7 L85.3 261.1 L83.8 261.4 L82.3 261.5 L80.8 261.6 L79.3 261.1 L77.8 260.3 L76.3 259.6 L74.8 259.5 L73.3 259.6 L71.8 259.9 L70.3 260.2 L68.8 260.5 L67.3 260.7 L65.8 260.9 L64.3 261.0 L62.8 260.7 L61.3 259.7 L59.8 258.2 L58.3 256.6 L56.8 255.1 L55.3 253.9 L53.8 252.6 L52.3 251.3 L50.8 250.4 L49.3 250.3 L47.8 250.4 L46.3 250.6 L44.8 250.9 L43.3 251.1 L41.8 251.3 L40.3 251.5 L38.8 251.6 L37.3 251.8 L35.8 251.9 L34.3 251.9 L32.8 251.9 L31.3 251.4 L29.8 250.4 L28.3 249.1 L26.8 247.5 L25.3 245.9 L23.8 244.3 L22.3 242.4 L20.8 240.2 L19.3 237.8 L17.8 235.3 L16.3 232.8 L14.8 230.1 L13.3 227.2 L11.8 224.1 L10.3 220.9 L8.8 217.8 L7.3 214.9 L5.8 212.1 L4.3 209.3 L2.8 206.6 L1.3 204.0 Z" fill="#f9cfa0"/><path d="M1.3 204.0 L2.8 206.6 L4.3 209.3 L5.8 212.1 L7.3 214.9 L8.8 217.8 L10.3 220.9 L11.8 224.1 L13.3 227.2 L14.8 230.1 L16.3 232.8 L17.8 235.3 L19.3 237.8 L20.8 240.2 L22.3 242.4 L23.8 244.3 L25.3 245.9 L26.8 247.5 L28.3 249.1 L29.8 250.4 L31.3 251.4 L32.8 251.9 L34.3 251.9 L35.8 251.9 L37.3 251.8 L38.8 251.6 L40.3 251.5 L41.8 251.3 L43.3 251.1 L44.8 250.9 L46.3 250.6 L47.8 250.4 L49.3 250.3 L50.8 250.4 L52.3 251.3 L53.8 252.6 L55.3 253.9 L56.8 255.1 L58.3 256.6 L59.8 258.2 L61.3 259.7 L62.8 260.7 L64.3 261.0 L65.8 260.9 L67.3 260.7 L68.8 260.5 L70.3 260.2 L71.8 259.9 L73.3 259.6 L74.8 259.5 L76.3 259.6 L77.8 260.3 L79.3 261.1 L80.8 261.6 L82.3 261.5 L83.8 261.4 L85.3 261.1 L86.8 260.7 L88.3 260.2 L89.8 259.0 L91.3 257.6 L92.8 256.3 L94.3 255.2 L95.8 254.4 L97.3 253.8 L98.8 253.2 L100.3 252.6 L101.8 251.7 L103.3 250.6 L104.8 249.2 L106.3 247.7 L107.8 246.2 L109.3 244.5 L110.8 242.7 L112.3 240.8 L113.8 238.9 L115.3 236.9 L116.8 235.0 L118.3 232.9 L119.8 230.7 L121.3 228.3 L122.8 225.7 L124.3 223.1 L125.8 220.4 L127.3 217.6 L128.8 214.7 L130.3 211.7 L131.8 208.4 L133.3 205.0 L134.8 201.6 L136.3 198.5 L137.8 195.4 L139.3 192.2 L140.8 188.6 L142.3 184.8 L143.8 180.8 L145.3 176.8 L146.8 172.7 L148.3 168.8 L149.8 165.8 L151.3 163.6 L152.8 162.2 L154.3 161.2 L155.8 160.4 L157.3 159.9 L158.8 159.5 L160.3 159.2 L161.8 159.0 L163.3 158.8 L164.8 158.7 L166.3 158.6 L167.8 158.6 L169.3 158.6 L170.8 158.6 L172.3 158.8 L173.8 159.4 L175.3 160.1 L176.8 160.9 L178.3 161.5 L179.8 162.1 L181.3 162.7 L182.8 163.3 L184.3 163.9 L185.8 164.4 L187.3 164.9 L188.8 165.4 L190.3 165.9 L191.8 166.3 L193.3 166.7 L194.8 167.1 L196.3 167.4 L197.8 167.8 L199.3 168.3 L200.8 168.9 L202.3 171.1 L203.8 172.2 L205.3 172.5 L206.8 172.6 L208.3 172.7 L209.8 172.8 L211.3 172.9 L212.8 173.0 L214.3 173.2 L215.8 173.6 L217.3 174.2 L218.8 174.9 L220.3 175.7 L221.8 176.5 L223.3 177.3 L224.8 177.9 L226.3 178.5 L227.8 178.9 L229.3 179.2 L230.8 179.6 L232.3 179.9 L233.8 180.2 L235.3 180.6 L236.8 181.0 L238.3 181.4 L239.8 182.0 L241.3 182.7 L242.8 183.4 L244.3 184.2 L245.8 185.0 L247.3 185.8 L248.8 186.6 L250.3 187.3 L251.8 188.0 L253.3 188.6 L254.8 189.3 L256.3 189.9 L257.8 190.5 L259.3 191.1 L260.8 191.6 L262.3 192.1 L263.8 192.5 L265.3 193.0 L266.8 193.4 L268.3 193.8 L269.8 194.2 L271.3 194.5 L272.8 194.7 L274.3 194.8 L275.8 195.0 L277.3 195.1 L278.8 195.2 L280.3 195.3 L281.8 195.4 L283.3 195.4 L284.8 195.4 L286.3 195.3 L287.8 194.9 L289.3 194.4 L290.8 193.9 L292.3 193.3 L293.8 192.7 L295.3 192.1 L296.8 191.6 L298.3 191.0 L299.8 190.3 L301.3 189.6 L302.8 189.0 L304.3 188.5 L305.8 188.1 L307.3 188.0 L308.8 188.2 L310.3 188.6 L311.8 189.2 L313.3 190.0 L314.8 191.0 L316.3 193.4 L317.8 197.0 L319.3 201.0 L320.8 205.0 L322.3 208.8 L323.8 212.9 L325.3 217.2 L326.8 221.4 L328.3 225.3 L329.8 228.5 L331.3 231.3 L332.8 233.9 L334.3 236.2 L335.8 238.3 L337.3 240.1 L338.8 241.6 L340.3 242.8 L341.8 243.8 L343.3 244.8 L344.8 245.6 L346.3 246.5 L347.8 247.4 L349.3 248.4 L350.8 249.3 L352.3 250.2 L353.8 250.8 L355.3 251.0 L356.8 250.9 L358.3 250.8 L359.8 250.6 L361.3 250.5 L362.8 250.4 L364.3 250.4 L365.8 250.6 L367.3 250.9 L368.8 251.4 L370.3 251.8 L371.8 252.3 L373.3 252.7 L374.8 253.1 L376.3 253.5 L377.8 253.9 L379.3 254.3 L380.8 254.7 L382.3 255.0 L383.8 255.4 L385.3 255.8 L386.8 256.1 L388.3 256.5 L389.8 256.9 L391.3 257.3 L392.8 257.7 L394.3 258.1 L395.8 258.6 L397.3 259.0 L398.8 259.5 L400.3 260.0 L401.8 260.4 L403.3 260.9 L404.8 261.3 L406.3 261.7 L407.8 262.2 L409.3 262.7 L410.8 263.1 L412.3 263.4 L413.8 263.6 L415.3 263.8 L416.8 263.8 L418.3 263.9 L419.8 264.0 L421.3 264.0 L422.8 264.0 L424.3 264.1 L425.8 264.1 L427.3 264.2 L428.8 264.2 L430.3 264.0 L431.8 263.6 L433.3 262.9 L434.8 262.0 L436.3 260.8 L437.8 258.7 L439.3 255.9 L440.8 252.8 L442.3 249.8 L443.8 246.8 L445.3 243.8 L446.8 240.8 L448.3 237.9 L449.8 235.0 L451.3 231.9 L452.8 228.4 L454.3 224.7 L455.8 220.3 L457.3 215.2 L458.8 210.6 L460.3 206.7 L461.8 202.9 L463.3 199.0 L464.8 195.0 L466.3 190.9 L467.8 186.7 L469.3 182.6 L470.8 178.8 L472.3 175.1 L473.8 171.6 L475.3 168.6 L476.8 165.9 L478.3 163.6 L479.8 162.3 L481.3 161.3 L482.8 160.6 L484.3 160.2 L485.8 160.0 L487.3 159.8 L488.8 159.6 L490.3 159.4 L491.8 159.4 L493.3 159.3 L494.8 159.4 L496.3 159.5 L497.8 159.6 L499.3 159.8 L500.8 160.1 L502.3 160.6 L503.8 161.1 L505.3 161.7 L506.8 162.2 L508.3 162.7 L509.8 163.3 L511.3 163.8 L512.8 164.4 L514.3 165.0 L515.8 165.7 L517.3 166.4 L518.8 167.2 L520.3 168.0 L521.8 168.8 L523.3 169.7 L524.8 170.6 L526.3 171.6 L527.8 172.8 L529.3 174.1 L530.8 175.5 L532.3 177.9 L533.8 179.4 L535.3 180.6 L536.8 181.6 L538.3 182.4 L539.8 183.2 L541.3 184.0 L542.8 184.7 L544.3 185.4 L545.8 186.1 L547.3 186.7 L548.8 187.4 L550.3 188.0 L551.8 188.6 L553.3 189.3 L554.8 190.0 L556.3 190.7 L557.8 191.5 L559.3 192.2 L560.8 192.9 L562.3 193.5 L563.8 193.9 L565.3 194.2 L566.8 194.5 L568.3 194.7 L569.8 194.9 L571.3 195.1 L572.8 195.3 L574.3 195.5 L575.8 195.8 L577.3 196.1 L578.8 196.5 L580.3 196.8 L581.8 197.2 L583.3 197.7 L584.8 198.0 L586.3 198.4 L587.8 198.8 L589.3 199.1 L590.8 199.5 L592.3 199.8 L593.8 200.1 L595.3 200.5 L596.8 200.8 L598.3 201.2 L599.8 201.5 L601.3 201.9 L602.8 202.3 L604.3 202.7 L605.8 203.0 L607.3 203.4 L608.8 203.8 L610.3 204.2 L611.8 204.5 L613.3 204.9 L614.8 205.3 L616.3 205.7 L617.8 206.0 L619.3 206.4 L620.8 206.8 L622.3 207.2 L623.8 207.5 L625.3 207.9 L626.8 208.2 L628.3 208.6 L629.8 209.0 L631.3 209.4 L632.8 209.8 L634.3 210.2 L635.8 210.6 L637.3 211.0 L638.8 211.6 L640.3 212.3 L641.8 213.5 L643.3 215.6 L644.8 218.2 L646.3 221.2 L647.8 224.3 L649.3 227.0 L650.8 229.8 L652.3 232.7 L653.8 235.6 L655.3 238.4 L656.8 241.0 L658.3 243.3 L659.8 245.5 L661.3 247.6 L662.8 249.6 L664.3 251.4 L665.8 253.0 L667.3 254.4 L668.8 255.8 L670.3 257.0 L671.8 258.2 L673.3 259.3 L674.8 260.3 L676.3 261.2 L677.8 262.0 L679.3 262.7 L680.8 263.3 L682.3 263.8 L683.8 264.4 L685.3 264.9 L686.8 265.6 L688.3 266.4 L689.8 267.2 L691.3 268.0 L692.8 268.5 L694.3 268.7 L695.8 268.7 L697.3 268.5 L698.8 268.3 L700.3 268.0 L701.8 267.7 L703.3 267.4 L704.8 266.9 L706.3 266.3 L707.8 265.7 L709.3 265.4 L710.8 265.4 L712.3 265.6 L713.8 265.9 L715.3 266.4 L716.8 266.8 L718.3 267.1 L719.8 267.5 L721.3 267.8 L722.8 268.2 L724.3 268.6 L725.8 268.9 L727.3 269.1 L728.8 269.3 L730.3 269.5 L731.8 269.7 L733.3 269.9 L734.8 270.0 L736.3 270.0 L737.8 269.7 L739.3 269.1 L740.8 268.4 L742.3 267.7 L743.8 266.7 L745.3 265.7 L746.8 264.7 L748.3 263.7 L749.8 262.9 L751.3 262.0 L752.8 261.2 L754.3 260.5 L755.8 259.7 L757.3 258.9 L758.8 258.3 L760.3 257.8 L761.8 257.3 L763.3 256.7 L764.8 255.9 L766.3 254.8 L767.8 251.8 L769.3 247.3 L770.8 243.0 L772.3 238.5 L773.8 233.7 L775.3 228.6 L776.8 223.9 L778.3 219.5 L779.8 215.2 L781.3 211.1 L782.8 207.3 L784.3 203.5 L785.8 199.5 L787.3 195.5 L788.8 191.4 L790.3 187.2 L791.8 182.8 L793.3 178.5 L794.8 174.7 L796.3 171.6 L797.8 169.1 L799.3 166.9 L800.8 165.1 L802.3 163.5 L803.8 162.1 L805.3 160.9 L806.8 159.9 L808.3 159.0 L809.8 158.2 L811.3 157.6 L812.8 157.1 L814.3 156.8 L815.8 156.5 L817.3 156.3 L818.8 156.2 L820.3 156.2 L821.8 156.2 L823.3 156.4 L824.8 156.6 L826.3 156.9 L827.8 157.3 L829.3 157.8 L830.8 158.3 L832.3 158.8 L833.8 159.5 L835.3 160.1 L836.8 160.7 L838.3 161.3 L839.8 161.9 L841.3 162.4 L842.8 163.0 L844.3 163.5 L845.8 164.0 L847.3 164.5 L848.8 165.0 L850.3 165.4 L851.8 165.9 L853.3 166.3 L854.8 166.7 L856.3 167.1 L857.8 167.5 L859.3 167.9 L860.8 168.4 L862.3 169.1 L863.8 169.7 L865.3 170.0 L866.8 170.2 L868.3 170.3 L869.8 170.5 L871.3 170.7 L872.8 171.0 L874.3 171.4 L875.8 171.8 L877.3 172.4 L878.8 172.9 L880.3 173.5 L881.8 174.1 L883.3 174.6 L884.8 175.2 L886.3 175.7 L887.8 176.2 L889.3 176.7 L890.8 177.3 L892.3 177.8 L893.8 178.3 L895.3 178.7 L896.8 179.2 L898.3 179.6 L899.8 180.1 L901.3 180.5 L902.8 180.9 L904.3 181.3 L905.8 181.6 L907.3 181.9 L908.8 182.2 L910.3 182.5 L911.8 182.8 L913.3 183.0 L914.8 183.2 L916.3 183.3 L917.8 183.4 L919.3 183.5 L920.8 183.5 L922.3 183.6 L923.8 183.6 L925.3 183.7 L926.8 183.7 L928.3 183.7 L929.8 183.7 L931.3 183.7 L932.8 183.6 L934.3 183.5 L935.8 183.3 L937.3 183.2 L938.8 183.0 L940.3 182.8 L941.8 182.4 L943.3 181.7 L944.8 180.8 L946.3 179.8 L947.8 178.9 L949.3 178.1 L950.8 177.5 L952.3 176.9 L953.8 176.4 L955.3 175.9 L956.8 175.4 L958.3 174.9 L959.8 174.5 L961.3 174.0 L962.8 173.6 L964.3 173.2 L965.8 173.0 L967.3 172.9 L968.8 173.0 L970.3 173.4 L971.8 173.9 L973.3 174.5 L974.8 175.1 L976.3 175.7 L977.8 176.3 L979.3 177.0 L982.0 178.3 L982.0 181.9 L979.3 180.6 L977.8 179.9 L976.3 179.3 L974.8 178.7 L973.3 178.2 L971.8 177.7 L970.3 177.2 L968.8 176.9 L967.3 176.8 L965.8 176.9 L964.3 177.2 L962.8 177.6 L961.3 178.0 L959.8 178.5 L958.3 179.0 L956.8 179.4 L955.3 179.7 L953.8 180.1 L952.3 180.5 L950.8 181.0 L949.3 181.5 L947.8 182.2 L946.3 183.1 L944.8 184.0 L943.3 184.9 L941.8 185.7 L940.3 186.1 L938.8 186.3 L937.3 186.5 L935.8 186.7 L934.3 186.8 L932.8 186.9 L931.3 187.0 L929.8 187.0 L928.3 187.0 L926.8 187.0 L925.3 187.0 L923.8 187.0 L922.3 187.0 L920.8 187.0 L919.3 187.0 L917.8 187.0 L916.3 187.0 L914.8 186.9 L913.3 186.7 L911.8 186.4 L910.3 186.2 L908.8 185.8 L907.3 185.5 L905.8 185.3 L904.3 184.9 L902.8 184.6 L901.3 184.2 L899.8 183.9 L898.3 183.4 L896.8 183.0 L895.3 182.6 L893.8 182.2 L892.3 181.8 L890.8 181.3 L889.3 180.9 L887.8 180.4 L886.3 180.0 L884.8 179.5 L883.3 179.0 L881.8 178.6 L880.3 178.0 L878.8 177.5 L877.3 177.0 L875.8 176.5 L874.3 176.1 L872.8 175.8 L871.3 175.6 L869.8 175.4 L868.3 175.3 L866.8 175.2 L865.3 175.1 L863.8 174.9 L862.3 174.3 L860.8 173.6 L859.3 173.4 L857.8 173.3 L856.3 173.2 L854.8 173.1 L853.3 173.0 L851.8 172.9 L850.3 172.9 L848.8 172.7 L847.3 172.6 L845.8 172.4 L844.3 172.2 L842.8 171.9 L841.3 171.7 L839.8 171.4 L838.3 171.1 L836.8 170.8 L835.3 170.4 L833.8 169.9 L832.3 169.4 L830.8 168.8 L829.3 168.4 L827.8 168.0 L826.3 167.8 L824.8 167.5 L823.3 167.3 L821.8 167.1 L820.3 167.0 L818.8 166.9 L817.3 167.0 L815.8 167.1 L814.3 167.2 L812.8 167.5 L811.3 167.8 L809.8 168.1 L808.3 168.5 L806.8 168.9 L805.3 169.5 L803.8 170.1 L802.3 170.9 L800.8 171.8 L799.3 173.0 L797.8 174.5 L796.3 176.3 L794.8 179.3 L793.3 183.2 L791.8 187.2 L790.3 191.5 L788.8 195.5 L787.3 199.3 L785.8 203.0 L784.3 206.6 L782.8 210.3 L781.3 214.4 L779.8 218.8 L778.3 223.4 L776.8 228.0 L775.3 232.5 L773.8 237.0 L772.3 241.6 L770.8 246.1 L769.3 250.4 L767.8 254.7 L766.3 257.1 L764.8 258.1 L763.3 258.8 L761.8 259.4 L760.3 259.8 L758.8 260.4 L757.3 261.0 L755.8 261.8 L754.3 262.5 L752.8 263.3 L751.3 264.1 L749.8 265.0 L748.3 265.8 L746.8 266.8 L745.3 267.8 L743.8 268.8 L742.3 269.7 L740.8 270.5 L739.3 271.1 L737.8 271.7 L736.3 272.0 L734.8 272.0 L733.3 271.9 L731.8 271.8 L730.3 271.6 L728.8 271.4 L727.3 271.2 L725.8 270.9 L724.3 270.6 L722.8 270.3 L721.3 269.9 L719.8 269.5 L718.3 269.1 L716.8 268.7 L715.3 268.2 L713.8 267.7 L712.3 267.2 L710.8 267.0 L709.3 267.0 L707.8 267.4 L706.3 268.0 L704.8 268.6 L703.3 269.1 L701.8 269.4 L700.3 269.7 L698.8 270.0 L697.3 270.2 L695.8 270.3 L694.3 270.3 L692.8 270.1 L691.3 269.6 L689.8 268.9 L688.3 268.1 L686.8 267.3 L685.3 266.7 L683.8 266.1 L682.3 265.6 L680.8 265.0 L679.3 264.4 L677.8 263.7 L676.3 262.9 L674.8 262.0 L673.3 261.0 L671.8 260.0 L670.3 258.8 L668.8 257.5 L667.3 256.2 L665.8 254.8 L664.3 253.2 L662.8 251.5 L661.3 249.5 L659.8 247.5 L658.3 245.3 L656.8 243.1 L655.3 240.5 L653.8 237.7 L652.3 234.7 L650.8 231.8 L649.3 229.1 L647.8 226.3 L646.3 223.3 L644.8 220.3 L643.3 217.6 L641.8 215.5 L640.3 214.4 L638.8 213.7 L637.3 213.1 L635.8 212.7 L634.3 212.3 L632.8 211.9 L631.3 211.5 L629.8 211.0 L628.3 210.7 L626.8 210.3 L625.3 209.9 L623.8 209.6 L622.3 209.2 L620.8 208.9 L619.3 208.5 L617.8 208.1 L616.3 207.7 L614.8 207.4 L613.3 207.0 L611.8 206.6 L610.3 206.2 L608.8 205.9 L607.3 205.5 L605.8 205.1 L604.3 204.7 L602.8 204.3 L601.3 203.9 L599.8 203.6 L598.3 203.2 L596.8 202.9 L595.3 202.6 L593.8 202.3 L592.3 202.0 L590.8 201.7 L589.3 201.4 L587.8 201.1 L586.3 200.8 L584.8 200.4 L583.3 200.0 L581.8 199.6 L580.3 199.2 L578.8 198.8 L577.3 198.4 L575.8 198.1 L574.3 197.9 L572.8 197.7 L571.3 197.5 L569.8 197.4 L568.3 197.2 L566.8 197.1 L565.3 196.9 L563.8 196.6 L562.3 196.2 L560.8 195.7 L559.3 195.0 L557.8 194.3 L556.3 193.5 L554.8 192.8 L553.3 192.1 L551.8 191.5 L550.3 190.8 L548.8 190.2 L547.3 189.6 L545.8 189.0 L544.3 188.4 L542.8 187.7 L541.3 187.0 L539.8 186.2 L538.3 185.4 L536.8 184.5 L535.3 183.6 L533.8 182.6 L532.3 181.5 L530.8 180.3 L529.3 179.2 L527.8 178.1 L526.3 177.1 L524.8 176.1 L523.3 175.2 L521.8 174.4 L520.3 173.6 L518.8 172.9 L517.3 172.3 L515.8 171.7 L514.3 171.2 L512.8 170.7 L511.3 170.2 L509.8 169.8 L508.3 169.5 L506.8 169.2 L505.3 169.1 L503.8 168.9 L502.3 168.7 L500.8 168.6 L499.3 168.5 L497.8 168.5 L496.3 168.5 L494.8 168.5 L493.3 168.6 L491.8 168.8 L490.3 168.9 L488.8 169.1 L487.3 169.3 L485.8 169.4 L484.3 169.6 L482.8 169.8 L481.3 170.1 L479.8 170.5 L478.3 171.1 L476.8 172.5 L475.3 174.4 L473.8 176.8 L472.3 179.9 L470.8 183.3 L469.3 186.7 L467.8 190.6 L466.3 194.4 L464.8 198.1 L463.3 201.9 L461.8 205.6 L460.3 209.2 L458.8 213.2 L457.3 218.3 L455.8 223.1 L454.3 227.1 L452.8 230.7 L451.3 234.0 L449.8 237.0 L448.3 239.9 L446.8 242.9 L445.3 245.9 L443.8 248.9 L442.3 251.8 L440.8 254.8 L439.3 257.8 L437.8 260.5 L436.3 262.4 L434.8 263.5 L433.3 264.4 L431.8 265.1 L430.3 265.6 L428.8 266.0 L427.3 266.3 L425.8 266.4 L424.3 266.4 L422.8 266.3 L421.3 266.3 L419.8 266.3 L418.3 266.2 L416.8 266.2 L415.3 266.1 L413.8 266.0 L412.3 265.8 L410.8 265.5 L409.3 265.1 L407.8 264.6 L406.3 264.1 L404.8 263.7 L403.3 263.2 L401.8 262.8 L400.3 262.4 L398.8 261.9 L397.3 261.4 L395.8 261.0 L394.3 260.5 L392.8 260.1 L391.3 259.6 L389.8 259.3 L388.3 258.9 L386.8 258.5 L385.3 258.2 L383.8 257.8 L382.3 257.4 L380.8 257.0 L379.3 256.6 L377.8 256.2 L376.3 255.8 L374.8 255.4 L373.3 255.0 L371.8 254.6 L370.3 254.2 L368.8 253.7 L367.3 253.3 L365.8 253.0 L364.3 252.8 L362.8 252.8 L361.3 252.9 L359.8 253.0 L358.3 253.2 L356.8 253.3 L355.3 253.3 L353.8 253.1 L352.3 252.6 L350.8 251.7 L349.3 250.7 L347.8 249.7 L346.3 248.8 L344.8 248.0 L343.3 247.1 L341.8 246.2 L340.3 245.2 L338.8 243.9 L337.3 242.5 L335.8 240.7 L334.3 238.6 L332.8 236.2 L331.3 233.6 L329.8 230.8 L328.3 227.7 L326.8 223.9 L325.3 219.8 L323.8 215.6 L322.3 211.6 L320.8 207.9 L319.3 203.9 L317.8 199.9 L316.3 196.4 L314.8 193.9 L313.3 192.7 L311.8 191.8 L310.3 191.1 L308.8 190.6 L307.3 190.4 L305.8 190.5 L304.3 190.8 L302.8 191.3 L301.3 192.0 L299.8 192.7 L298.3 193.4 L296.8 194.0 L295.3 194.5 L293.8 195.0 L292.3 195.6 L290.8 196.1 L289.3 196.6 L287.8 197.0 L286.3 197.3 L284.8 197.5 L283.3 197.5 L281.8 197.5 L280.3 197.4 L278.8 197.3 L277.3 197.2 L275.8 197.1 L274.3 197.0 L272.8 196.9 L271.3 196.7 L269.8 196.4 L268.3 196.1 L266.8 195.7 L265.3 195.2 L263.8 194.7 L262.3 194.3 L260.8 193.8 L259.3 193.3 L257.8 192.8 L256.3 192.2 L254.8 191.7 L253.3 191.1 L251.8 190.5 L250.3 189.8 L248.8 189.1 L247.3 188.4 L245.8 187.6 L244.3 186.7 L242.8 185.9 L241.3 185.2 L239.8 184.6 L238.3 184.1 L236.8 183.7 L235.3 183.5 L233.8 183.2 L232.3 183.0 L230.8 182.8 L229.3 182.6 L227.8 182.3 L226.3 182.0 L224.8 181.6 L223.3 181.0 L221.8 180.3 L220.3 179.5 L218.8 178.8 L217.3 178.2 L215.8 177.8 L214.3 177.7 L212.8 177.7 L211.3 177.8 L209.8 178.0 L208.3 178.1 L206.8 178.3 L205.3 178.4 L203.8 178.5 L202.3 177.1 L200.8 173.6 L199.3 173.3 L197.8 173.1 L196.3 173.0 L194.8 173.0 L193.3 172.8 L191.8 172.6 L190.3 172.3 L188.8 171.9 L187.3 171.5 L185.8 171.1 L184.3 170.7 L182.8 170.4 L181.3 170.1 L179.8 169.7 L178.3 169.4 L176.8 169.1 L175.3 168.7 L173.8 168.3 L172.3 168.0 L170.8 167.9 L169.3 168.0 L167.8 168.1 L166.3 168.3 L164.8 168.5 L163.3 168.6 L161.8 168.7 L160.3 168.9 L158.8 169.0 L157.3 169.2 L155.8 169.6 L154.3 170.2 L152.8 171.0 L151.3 171.9 L149.8 173.5 L148.3 175.6 L146.8 178.1 L145.3 181.1 L143.8 184.4 L142.3 188.1 L140.8 192.0 L139.3 195.4 L137.8 198.4 L136.3 201.2 L134.8 204.3 L133.3 207.7 L131.8 211.1 L130.3 214.2 L128.8 217.1 L127.3 219.9 L125.8 222.5 L124.3 225.2 L122.8 227.8 L121.3 230.3 L119.8 232.7 L118.3 235.0 L116.8 237.1 L115.3 239.0 L113.8 240.9 L112.3 242.8 L110.8 244.6 L109.3 246.4 L107.8 248.0 L106.3 249.6 L104.8 251.2 L103.3 252.6 L101.8 253.8 L100.3 254.6 L98.8 255.2 L97.3 255.7 L95.8 256.3 L94.3 256.9 L92.8 258.0 L91.3 259.5 L89.8 261.0 L88.3 262.2 L86.8 262.8 L85.3 263.2 L83.8 263.4 L82.3 263.6 L80.8 263.7 L79.3 263.3 L77.8 262.5 L76.3 261.9 L74.8 261.9 L73.3 262.0 L71.8 262.3 L70.3 262.6 L68.8 262.9 L67.3 263.2 L65.8 263.4 L64.3 263.5 L62.8 263.2 L61.3 262.2 L59.8 260.8 L58.3 259.3 L56.8 257.9 L55.3 256.7 L53.8 255.6 L52.3 254.5 L50.8 253.7 L49.3 253.6 L47.8 253.7 L46.3 253.8 L44.8 254.0 L43.3 254.1 L41.8 254.2 L40.3 254.2 L38.8 254.1 L37.3 254.0 L35.8 253.9 L34.3 253.8 L32.8 253.6 L31.3 253.1 L29.8 252.1 L28.3 250.9 L26.8 249.4 L25.3 247.9 L23.8 246.3 L22.3 244.5 L20.8 242.3 L19.3 239.9 L17.8 237.4 L16.3 234.8 L14.8 232.2 L13.3 229.2 L11.8 226.1 L10.3 223.0 L8.8 219.9 L7.3 217.0 L5.8 214.1 L4.3 211.4 L2.8 208.7 L1.3 206.1 Z" fill="#f4b46a"/><path d="M1.3 205.6 L2.8 208.2 L4.3 210.9 L5.8 213.6 L7.3 216.5 L8.8 219.4 L10.3 222.5 L11.8 225.6 L13.3 228.7 L14.8 231.7 L16.3 234.3 L17.8 236.9 L19.3 239.4 L20.8 241.8 L22.3 244.0 L23.8 245.8 L25.3 247.4 L26.8 248.9 L28.3 250.4 L29.8 251.6 L31.3 252.6 L32.8 253.1 L34.3 253.3 L35.8 253.4 L37.3 253.5 L38.8 253.6 L40.3 253.7 L41.8 253.7 L43.3 253.6 L44.8 253.5 L46.3 253.3 L47.8 253.2 L49.3 253.1 L50.8 253.2 L52.3 254.0 L53.8 255.1 L55.3 256.2 L56.8 257.4 L58.3 258.8 L59.8 260.3 L61.3 261.7 L62.8 262.7 L64.3 263.0 L65.8 262.9 L67.3 262.7 L68.8 262.4 L70.3 262.1 L71.8 261.8 L73.3 261.5 L74.8 261.4 L76.3 261.4 L77.8 262.0 L79.3 262.8 L80.8 263.2 L82.3 263.1 L83.8 262.9 L85.3 262.7 L86.8 262.3 L88.3 261.7 L89.8 260.5 L91.3 259.0 L92.8 257.5 L94.3 256.4 L95.8 255.8 L97.3 255.2 L98.8 254.7 L100.3 254.1 L101.8 253.3 L103.3 252.1 L104.8 250.7 L106.3 249.1 L107.8 247.5 L109.3 245.9 L110.8 244.1 L112.3 242.3 L113.8 240.4 L115.3 238.5 L116.8 236.6 L118.3 234.5 L119.8 232.2 L121.3 229.8 L122.8 227.3 L124.3 224.7 L125.8 222.0 L127.3 219.4 L128.8 216.6 L130.3 213.7 L131.8 210.6 L133.3 207.2 L134.8 203.8 L136.3 200.7 L137.8 197.9 L139.3 194.9 L140.8 191.5 L142.3 187.6 L143.8 183.9 L145.3 180.6 L146.8 177.6 L148.3 175.1 L149.8 173.0 L151.3 171.4 L152.8 170.5 L154.3 169.7 L155.8 169.1 L157.3 168.7 L158.8 168.5 L160.3 168.4 L161.8 168.2 L163.3 168.1 L164.8 168.0 L166.3 167.8 L167.8 167.6 L169.3 167.5 L170.8 167.4 L172.3 167.5 L173.8 167.8 L175.3 168.2 L176.8 168.6 L178.3 168.9 L179.8 169.2 L181.3 169.6 L182.8 169.9 L184.3 170.2 L185.8 170.6 L187.3 171.0 L188.8 171.4 L190.3 171.8 L191.8 172.1 L193.3 172.3 L194.8 172.5 L196.3 172.5 L197.8 172.6 L199.3 172.8 L200.8 173.1 L202.3 176.6 L203.8 178.0 L205.3 177.9 L206.8 177.8 L208.3 177.6 L209.8 177.5 L211.3 177.3 L212.8 177.2 L214.3 177.2 L215.8 177.3 L217.3 177.7 L218.8 178.3 L220.3 179.0 L221.8 179.8 L223.3 180.5 L224.8 181.1 L226.3 181.5 L227.8 181.8 L229.3 182.1 L230.8 182.3 L232.3 182.5 L233.8 182.7 L235.3 183.0 L236.8 183.2 L238.3 183.6 L239.8 184.1 L241.3 184.7 L242.8 185.4 L244.3 186.2 L245.8 187.1 L247.3 187.9 L248.8 188.6 L250.3 189.3 L251.8 190.0 L253.3 190.6 L254.8 191.2 L256.3 191.7 L257.8 192.3 L259.3 192.8 L260.8 193.3 L262.3 193.8 L263.8 194.2 L265.3 194.7 L266.8 195.2 L268.3 195.6 L269.8 195.9 L271.3 196.2 L272.8 196.4 L274.3 196.5 L275.8 196.6 L277.3 196.7 L278.8 196.8 L280.3 196.9 L281.8 197.0 L283.3 197.0 L284.8 197.0 L286.3 196.8 L287.8 196.5 L289.3 196.1 L290.8 195.6 L292.3 195.1 L293.8 194.5 L295.3 194.0 L296.8 193.5 L298.3 192.9 L299.8 192.2 L301.3 191.5 L302.8 190.8 L304.3 190.3 L305.8 190.0 L307.3 189.9 L308.8 190.1 L310.3 190.6 L311.8 191.3 L313.3 192.2 L314.8 193.4 L316.3 195.9 L317.8 199.4 L319.3 203.4 L320.8 207.4 L322.3 211.1 L323.8 215.1 L325.3 219.3 L326.8 223.4 L328.3 227.2 L329.8 230.3 L331.3 233.1 L332.8 235.7 L334.3 238.1 L335.8 240.2 L337.3 242.0 L338.8 243.4 L340.3 244.7 L341.8 245.7 L343.3 246.6 L344.8 247.5 L346.3 248.3 L347.8 249.2 L349.3 250.2 L350.8 251.2 L352.3 252.1 L353.8 252.6 L355.3 252.8 L356.8 252.8 L358.3 252.7 L359.8 252.5 L361.3 252.4 L362.8 252.3 L364.3 252.3 L365.8 252.5 L367.3 252.8 L368.8 253.2 L370.3 253.7 L371.8 254.1 L373.3 254.5 L374.8 254.9 L376.3 255.3 L377.8 255.7 L379.3 256.1 L380.8 256.5 L382.3 256.9 L383.8 257.3 L385.3 257.7 L386.8 258.0 L388.3 258.4 L389.8 258.8 L391.3 259.1 L392.8 259.6 L394.3 260.0 L395.8 260.5 L397.3 260.9 L398.8 261.4 L400.3 261.9 L401.8 262.3 L403.3 262.7 L404.8 263.2 L406.3 263.6 L407.8 264.1 L409.3 264.6 L410.8 265.0 L412.3 265.3 L413.8 265.5 L415.3 265.6 L416.8 265.7 L418.3 265.7 L419.8 265.8 L421.3 265.8 L422.8 265.8 L424.3 265.9 L425.8 265.9 L427.3 265.8 L428.8 265.5 L430.3 265.1 L431.8 264.6 L433.3 263.9 L434.8 263.0 L436.3 261.9 L437.8 260.0 L439.3 257.3 L440.8 254.3 L442.3 251.3 L443.8 248.4 L445.3 245.4 L446.8 242.4 L448.3 239.4 L449.8 236.5 L451.3 233.5 L452.8 230.2 L454.3 226.6 L455.8 222.6 L457.3 217.8 L458.8 212.7 L460.3 208.7 L461.8 205.1 L463.3 201.4 L464.8 197.6 L466.3 193.9 L467.8 190.1 L469.3 186.2 L470.8 182.8 L472.3 179.4 L473.8 176.3 L475.3 173.9 L476.8 172.0 L478.3 170.6 L479.8 170.0 L481.3 169.6 L482.8 169.3 L484.3 169.1 L485.8 168.9 L487.3 168.8 L488.8 168.6 L490.3 168.4 L491.8 168.3 L493.3 168.1 L494.8 168.0 L496.3 168.0 L497.8 168.0 L499.3 168.0 L500.8 168.1 L502.3 168.2 L503.8 168.4 L505.3 168.6 L506.8 168.7 L508.3 169.0 L509.8 169.3 L511.3 169.7 L512.8 170.2 L514.3 170.7 L515.8 171.2 L517.3 171.8 L518.8 172.4 L520.3 173.1 L521.8 173.9 L523.3 174.7 L524.8 175.6 L526.3 176.6 L527.8 177.6 L529.3 178.7 L530.8 179.8 L532.3 181.0 L533.8 182.1 L535.3 183.1 L536.8 184.0 L538.3 184.9 L539.8 185.7 L541.3 186.5 L542.8 187.2 L544.3 187.9 L545.8 188.5 L547.3 189.1 L548.8 189.7 L550.3 190.3 L551.8 191.0 L553.3 191.6 L554.8 192.3 L556.3 193.0 L557.8 193.8 L559.3 194.5 L560.8 195.2 L562.3 195.7 L563.8 196.1 L565.3 196.4 L566.8 196.6 L568.3 196.7 L569.8 196.9 L571.3 197.0 L572.8 197.2 L574.3 197.4 L575.8 197.6 L577.3 197.9 L578.8 198.3 L580.3 198.7 L581.8 199.1 L583.3 199.5 L584.8 199.9 L586.3 200.3 L587.8 200.6 L589.3 200.9 L590.8 201.2 L592.3 201.5 L593.8 201.8 L595.3 202.1 L596.8 202.4 L598.3 202.7 L599.8 203.1 L601.3 203.4 L602.8 203.8 L604.3 204.2 L605.8 204.6 L607.3 205.0 L608.8 205.4 L610.3 205.7 L611.8 206.1 L613.3 206.5 L614.8 206.9 L616.3 207.2 L617.8 207.6 L619.3 208.0 L620.8 208.4 L622.3 208.7 L623.8 209.1 L625.3 209.4 L626.8 209.8 L628.3 210.2 L629.8 210.5 L631.3 211.0 L632.8 211.4 L634.3 211.8 L635.8 212.2 L637.3 212.6 L638.8 213.2 L640.3 213.9 L641.8 215.0 L643.3 217.1 L644.8 219.8 L646.3 222.8 L647.8 225.8 L649.3 228.6 L650.8 231.3 L652.3 234.2 L653.8 237.2 L655.3 240.0 L656.8 242.6 L658.3 244.8 L659.8 247.0 L661.3 249.0 L662.8 251.0 L664.3 252.7 L665.8 254.3 L667.3 255.7 L668.8 257.0 L670.3 258.3 L671.8 259.5 L673.3 260.5 L674.8 261.5 L676.3 262.4 L677.8 263.2 L679.3 263.9 L680.8 264.5 L682.3 265.1 L683.8 265.6 L685.3 266.2 L686.8 266.8 L688.3 267.6 L689.8 268.4 L691.3 269.1 L692.8 269.6 L694.3 269.8 L695.8 269.8 L697.3 269.7 L698.8 269.5 L700.3 269.2 L701.8 268.9 L703.3 268.6 L704.8 268.1 L706.3 267.5 L707.8 266.9 L709.3 266.5 L710.8 266.5 L712.3 266.7 L713.8 267.2 L715.3 267.7 L716.8 268.2 L718.3 268.6 L719.8 269.0 L721.3 269.4 L722.8 269.8 L724.3 270.1 L725.8 270.4 L727.3 270.7 L728.8 270.9 L730.3 271.1 L731.8 271.3 L733.3 271.4 L734.8 271.5 L736.3 271.5 L737.8 271.2 L739.3 270.6 L740.8 270.0 L742.3 269.2 L743.8 268.3 L745.3 267.3 L746.8 266.3 L748.3 265.3 L749.8 264.5 L751.3 263.6 L752.8 262.8 L754.3 262.0 L755.8 261.3 L757.3 260.5 L758.8 259.9 L760.3 259.3 L761.8 258.9 L763.3 258.3 L764.8 257.6 L766.3 256.6 L767.8 254.2 L769.3 249.9 L770.8 245.6 L772.3 241.1 L773.8 236.5 L775.3 232.0 L776.8 227.5 L778.3 222.9 L779.8 218.3 L781.3 213.9 L782.8 209.8 L784.3 206.1 L785.8 202.5 L787.3 198.8 L788.8 195.0 L790.3 191.0 L791.8 186.7 L793.3 182.7 L794.8 178.8 L796.3 175.8 L797.8 174.0 L799.3 172.5 L800.8 171.3 L802.3 170.4 L803.8 169.6 L805.3 169.0 L806.8 168.4 L808.3 168.0 L809.8 167.6 L811.3 167.3 L812.8 167.0 L814.3 166.7 L815.8 166.6 L817.3 166.5 L818.8 166.4 L820.3 166.5 L821.8 166.6 L823.3 166.8 L824.8 167.0 L826.3 167.3 L827.8 167.5 L829.3 167.9 L830.8 168.3 L832.3 168.9 L833.8 169.4 L835.3 169.9 L836.8 170.3 L838.3 170.6 L839.8 170.9 L841.3 171.2 L842.8 171.4 L844.3 171.7 L845.8 171.9 L847.3 172.1 L848.8 172.2 L850.3 172.4 L851.8 172.4 L853.3 172.5 L854.8 172.6 L856.3 172.7 L857.8 172.8 L859.3 172.9 L860.8 173.1 L862.3 173.8 L863.8 174.4 L865.3 174.6 L866.8 174.7 L868.3 174.8 L869.8 174.9 L871.3 175.1 L872.8 175.3 L874.3 175.6 L875.8 176.0 L877.3 176.5 L878.8 177.0 L880.3 177.5 L881.8 178.1 L883.3 178.5 L884.8 179.0 L886.3 179.5 L887.8 179.9 L889.3 180.4 L890.8 180.8 L892.3 181.3 L893.8 181.7 L895.3 182.1 L896.8 182.5 L898.3 182.9 L899.8 183.4 L901.3 183.7 L902.8 184.1 L904.3 184.4 L905.8 184.8 L907.3 185.0 L908.8 185.3 L910.3 185.7 L911.8 185.9 L913.3 186.2 L914.8 186.4 L916.3 186.5 L917.8 186.5 L919.3 186.5 L920.8 186.5 L922.3 186.5 L923.8 186.5 L925.3 186.5 L926.8 186.5 L928.3 186.5 L929.8 186.5 L931.3 186.5 L932.8 186.4 L934.3 186.3 L935.8 186.2 L937.3 186.0 L938.8 185.8 L940.3 185.6 L941.8 185.2 L943.3 184.4 L944.8 183.5 L946.3 182.6 L947.8 181.7 L949.3 181.0 L950.8 180.5 L952.3 180.0 L953.8 179.6 L955.3 179.2 L956.8 178.9 L958.3 178.5 L959.8 178.0 L961.3 177.5 L962.8 177.1 L964.3 176.7 L965.8 176.4 L967.3 176.3 L968.8 176.4 L970.3 176.7 L971.8 177.2 L973.3 177.7 L974.8 178.2 L976.3 178.8 L977.8 179.4 L979.3 180.1 L982.0 181.4" fill="none" stroke="#f4b46a" stroke-width="4" stroke-linejoin="round"/><path d="M1.3 205.6 L2.8 208.2 L4.3 210.9 L5.8 213.6 L7.3 216.5 L8.8 219.4 L10.3 222.5 L11.8 225.6 L13.3 228.7 L14.8 231.7 L16.3 234.3 L17.8 236.9 L19.3 239.4 L20.8 241.8 L22.3 244.0 L23.8 245.8 L25.3 247.4 L26.8 248.9 L28.3 250.4 L29.8 251.6 L31.3 252.6 L32.8 253.1 L34.3 253.3 L35.8 253.4 L37.3 253.5 L38.8 253.6 L40.3 253.7 L41.8 253.7 L43.3 253.6 L44.8 253.5 L46.3 253.3 L47.8 253.2 L49.3 253.1 L50.8 253.2 L52.3 254.0 L53.8 255.1 L55.3 256.2 L56.8 257.4 L58.3 258.8 L59.8 260.3 L61.3 261.7 L62.8 262.7 L64.3 263.0 L65.8 262.9 L67.3 262.7 L68.8 262.4 L70.3 262.1 L71.8 261.8 L73.3 261.5 L74.8 261.4 L76.3 261.4 L77.8 262.0 L79.3 262.8 L80.8 263.2 L82.3 263.1 L83.8 262.9 L85.3 262.7 L86.8 262.3 L88.3 261.7 L89.8 260.5 L91.3 259.0 L92.8 257.5 L94.3 256.4 L95.8 255.8 L97.3 255.2 L98.8 254.7 L100.3 254.1 L101.8 253.3 L103.3 252.1 L104.8 250.7 L106.3 249.1 L107.8 247.5 L109.3 245.9 L110.8 244.1 L112.3 242.3 L113.8 240.4 L115.3 238.5 L116.8 236.6 L118.3 234.5 L119.8 232.2 L121.3 229.8 L122.8 227.3 L124.3 224.7 L125.8 222.0 L127.3 219.4 L128.8 216.6 L130.3 213.7 L131.8 210.6 L133.3 207.2 L134.8 203.8 L136.3 200.7 L137.8 197.9 L139.3 194.9 L140.8 191.5 L142.3 187.6 L143.8 183.9 L145.3 180.6 L146.8 177.6 L148.3 175.1 L149.8 173.0 L151.3 171.4 L152.8 170.5 L154.3 169.7 L155.8 169.1 L157.3 168.7 L158.8 168.5 L160.3 168.4 L161.8 168.2 L163.3 168.1 L164.8 168.0 L166.3 167.8 L167.8 167.6 L169.3 167.5 L170.8 167.4 L172.3 167.5 L173.8 167.8 L175.3 168.2 L176.8 168.6 L178.3 168.9 L179.8 169.2 L181.3 169.6 L182.8 169.9 L184.3 170.2 L185.8 170.6 L187.3 171.0 L188.8 171.4 L190.3 171.8 L191.8 172.1 L193.3 172.3 L194.8 172.5 L196.3 172.5 L197.8 172.6 L199.3 172.8 L200.8 173.1 L202.3 176.6 L203.8 178.0 L205.3 177.9 L206.8 177.8 L208.3 177.6 L209.8 177.5 L211.3 177.3 L212.8 177.2 L214.3 177.2 L215.8 177.3 L217.3 177.7 L218.8 178.3 L220.3 179.0 L221.8 179.8 L223.3 180.5 L224.8 181.1 L226.3 181.5 L227.8 181.8 L229.3 182.1 L230.8 182.3 L232.3 182.5 L233.8 182.7 L235.3 183.0 L236.8 183.2 L238.3 183.6 L239.8 184.1 L241.3 184.7 L242.8 185.4 L244.3 186.2 L245.8 187.1 L247.3 187.9 L248.8 188.6 L250.3 189.3 L251.8 190.0 L253.3 190.6 L254.8 191.2 L256.3 191.7 L257.8 192.3 L259.3 192.8 L260.8 193.3 L262.3 193.8 L263.8 194.2 L265.3 194.7 L266.8 195.2 L268.3 195.6 L269.8 195.9 L271.3 196.2 L272.8 196.4 L274.3 196.5 L275.8 196.6 L277.3 196.7 L278.8 196.8 L280.3 196.9 L281.8 197.0 L283.3 197.0 L284.8 197.0 L286.3 196.8 L287.8 196.5 L289.3 196.1 L290.8 195.6 L292.3 195.1 L293.8 194.5 L295.3 194.0 L296.8 193.5 L298.3 192.9 L299.8 192.2 L301.3 191.5 L302.8 190.8 L304.3 190.3 L305.8 190.0 L307.3 189.9 L308.8 190.1 L310.3 190.6 L311.8 191.3 L313.3 192.2 L314.8 193.4 L316.3 195.9 L317.8 199.4 L319.3 203.4 L320.8 207.4 L322.3 211.1 L323.8 215.1 L325.3 219.3 L326.8 223.4 L328.3 227.2 L329.8 230.3 L331.3 233.1 L332.8 235.7 L334.3 238.1 L335.8 240.2 L337.3 242.0 L338.8 243.4 L340.3 244.7 L341.8 245.7 L343.3 246.6 L344.8 247.5 L346.3 248.3 L347.8 249.2 L349.3 250.2 L350.8 251.2 L352.3 252.1 L353.8 252.6 L355.3 252.8 L356.8 252.8 L358.3 252.7 L359.8 252.5 L361.3 252.4 L362.8 252.3 L364.3 252.3 L365.8 252.5 L367.3 252.8 L368.8 253.2 L370.3 253.7 L371.8 254.1 L373.3 254.5 L374.8 254.9 L376.3 255.3 L377.8 255.7 L379.3 256.1 L380.8 256.5 L382.3 256.9 L383.8 257.3 L385.3 257.7 L386.8 258.0 L388.3 258.4 L389.8 258.8 L391.3 259.1 L392.8 259.6 L394.3 260.0 L395.8 260.5 L397.3 260.9 L398.8 261.4 L400.3 261.9 L401.8 262.3 L403.3 262.7 L404.8 263.2 L406.3 263.6 L407.8 264.1 L409.3 264.6 L410.8 265.0 L412.3 265.3 L413.8 265.5 L415.3 265.6 L416.8 265.7 L418.3 265.7 L419.8 265.8 L421.3 265.8 L422.8 265.8 L424.3 265.9 L425.8 265.9 L427.3 265.8 L428.8 265.5 L430.3 265.1 L431.8 264.6 L433.3 263.9 L434.8 263.0 L436.3 261.9 L437.8 260.0 L439.3 257.3 L440.8 254.3 L442.3 251.3 L443.8 248.4 L445.3 245.4 L446.8 242.4 L448.3 239.4 L449.8 236.5 L451.3 233.5 L452.8 230.2 L454.3 226.6 L455.8 222.6 L457.3 217.8 L458.8 212.7 L460.3 208.7 L461.8 205.1 L463.3 201.4 L464.8 197.6 L466.3 193.9 L467.8 190.1 L469.3 186.2 L470.8 182.8 L472.3 179.4 L473.8 176.3 L475.3 173.9 L476.8 172.0 L478.3 170.6 L479.8 170.0 L481.3 169.6 L482.8 169.3 L484.3 169.1 L485.8 168.9 L487.3 168.8 L488.8 168.6 L490.3 168.4 L491.8 168.3 L493.3 168.1 L494.8 168.0 L496.3 168.0 L497.8 168.0 L499.3 168.0 L500.8 168.1 L502.3 168.2 L503.8 168.4 L505.3 168.6 L506.8 168.7 L508.3 169.0 L509.8 169.3 L511.3 169.7 L512.8 170.2 L514.3 170.7 L515.8 171.2 L517.3 171.8 L518.8 172.4 L520.3 173.1 L521.8 173.9 L523.3 174.7 L524.8 175.6 L526.3 176.6 L527.8 177.6 L529.3 178.7 L530.8 179.8 L532.3 181.0 L533.8 182.1 L535.3 183.1 L536.8 184.0 L538.3 184.9 L539.8 185.7 L541.3 186.5 L542.8 187.2 L544.3 187.9 L545.8 188.5 L547.3 189.1 L548.8 189.7 L550.3 190.3 L551.8 191.0 L553.3 191.6 L554.8 192.3 L556.3 193.0 L557.8 193.8 L559.3 194.5 L560.8 195.2 L562.3 195.7 L563.8 196.1 L565.3 196.4 L566.8 196.6 L568.3 196.7 L569.8 196.9 L571.3 197.0 L572.8 197.2 L574.3 197.4 L575.8 197.6 L577.3 197.9 L578.8 198.3 L580.3 198.7 L581.8 199.1 L583.3 199.5 L584.8 199.9 L586.3 200.3 L587.8 200.6 L589.3 200.9 L590.8 201.2 L592.3 201.5 L593.8 201.8 L595.3 202.1 L596.8 202.4 L598.3 202.7 L599.8 203.1 L601.3 203.4 L602.8 203.8 L604.3 204.2 L605.8 204.6 L607.3 205.0 L608.8 205.4 L610.3 205.7 L611.8 206.1 L613.3 206.5 L614.8 206.9 L616.3 207.2 L617.8 207.6 L619.3 208.0 L620.8 208.4 L622.3 208.7 L623.8 209.1 L625.3 209.4 L626.8 209.8 L628.3 210.2 L629.8 210.5 L631.3 211.0 L632.8 211.4 L634.3 211.8 L635.8 212.2 L637.3 212.6 L638.8 213.2 L640.3 213.9 L641.8 215.0 L643.3 217.1 L644.8 219.8 L646.3 222.8 L647.8 225.8 L649.3 228.6 L650.8 231.3 L652.3 234.2 L653.8 237.2 L655.3 240.0 L656.8 242.6 L658.3 244.8 L659.8 247.0 L661.3 249.0 L662.8 251.0 L664.3 252.7 L665.8 254.3 L667.3 255.7 L668.8 257.0 L670.3 258.3 L671.8 259.5 L673.3 260.5 L674.8 261.5 L676.3 262.4 L677.8 263.2 L679.3 263.9 L680.8 264.5 L682.3 265.1 L683.8 265.6 L685.3 266.2 L686.8 266.8 L688.3 267.6 L689.8 268.4 L691.3 269.1 L692.8 269.6 L694.3 269.8 L695.8 269.8 L697.3 269.7 L698.8 269.5 L700.3 269.2 L701.8 268.9 L703.3 268.6 L704.8 268.1 L706.3 267.5 L707.8 266.9 L709.3 266.5 L710.8 266.5 L712.3 266.7 L713.8 267.2 L715.3 267.7 L716.8 268.2 L718.3 268.6 L719.8 269.0 L721.3 269.4 L722.8 269.8 L724.3 270.1 L725.8 270.4 L727.3 270.7 L728.8 270.9 L730.3 271.1 L731.8 271.3 L733.3 271.4 L734.8 271.5 L736.3 271.5 L737.8 271.2 L739.3 270.6 L740.8 270.0 L742.3 269.2 L743.8 268.3 L745.3 267.3 L746.8 266.3 L748.3 265.3 L749.8 264.5 L751.3 263.6 L752.8 262.8 L754.3 262.0 L755.8 261.3 L757.3 260.5 L758.8 259.9 L760.3 259.3 L761.8 258.9 L763.3 258.3 L764.8 257.6 L766.3 256.6 L767.8 254.2 L769.3 249.9 L770.8 245.6 L772.3 241.1 L773.8 236.5 L775.3 232.0 L776.8 227.5 L778.3 222.9 L779.8 218.3 L781.3 213.9 L782.8 209.8 L784.3 206.1 L785.8 202.5 L787.3 198.8 L788.8 195.0 L790.3 191.0 L791.8 186.7 L793.3 182.7 L794.8 178.8 L796.3 175.8 L797.8 174.0 L799.3 172.5 L800.8 171.3 L802.3 170.4 L803.8 169.6 L805.3 169.0 L806.8 168.4 L808.3 168.0 L809.8 167.6 L811.3 167.3 L812.8 167.0 L814.3 166.7 L815.8 166.6 L817.3 166.5 L818.8 166.4 L820.3 166.5 L821.8 166.6 L823.3 166.8 L824.8 167.0 L826.3 167.3 L827.8 167.5 L829.3 167.9 L830.8 168.3 L832.3 168.9 L833.8 169.4 L835.3 169.9 L836.8 170.3 L838.3 170.6 L839.8 170.9 L841.3 171.2 L842.8 171.4 L844.3 171.7 L845.8 171.9 L847.3 172.1 L848.8 172.2 L850.3 172.4 L851.8 172.4 L853.3 172.5 L854.8 172.6 L856.3 172.7 L857.8 172.8 L859.3 172.9 L860.8 173.1 L862.3 173.8 L863.8 174.4 L865.3 174.6 L866.8 174.7 L868.3 174.8 L869.8 174.9 L871.3 175.1 L872.8 175.3 L874.3 175.6 L875.8 176.0 L877.3 176.5 L878.8 177.0 L880.3 177.5 L881.8 178.1 L883.3 178.5 L884.8 179.0 L886.3 179.5 L887.8 179.9 L889.3 180.4 L890.8 180.8 L892.3 181.3 L893.8 181.7 L895.3 182.1 L896.8 182.5 L898.3 182.9 L899.8 183.4 L901.3 183.7 L902.8 184.1 L904.3 184.4 L905.8 184.8 L907.3 185.0 L908.8 185.3 L910.3 185.7 L911.8 185.9 L913.3 186.2 L914.8 186.4 L916.3 186.5 L917.8 186.5 L919.3 186.5 L920.8 186.5 L922.3 186.5 L923.8 186.5 L925.3 186.5 L926.8 186.5 L928.3 186.5 L929.8 186.5 L931.3 186.5 L932.8 186.4 L934.3 186.3 L935.8 186.2 L937.3 186.0 L938.8 185.8 L940.3 185.6 L941.8 185.2 L943.3 184.4 L944.8 183.5 L946.3 182.6 L947.8 181.7 L949.3 181.0 L950.8 180.5 L952.3 180.0 L953.8 179.6 L955.3 179.2 L956.8 178.9 L958.3 178.5 L959.8 178.0 L961.3 177.5 L962.8 177.1 L964.3 176.7 L965.8 176.4 L967.3 176.3 L968.8 176.4 L970.3 176.7 L971.8 177.2 L973.3 177.7 L974.8 178.2 L976.3 178.8 L977.8 179.4 L979.3 180.1 L982.0 181.4 L982.0 303.8 L979.3 303.8 L977.8 303.8 L976.3 303.8 L974.8 303.8 L973.3 303.8 L971.8 303.8 L970.3 303.8 L968.8 303.8 L967.3 303.8 L965.8 303.8 L964.3 303.8 L962.8 303.8 L961.3 303.8 L959.8 303.8 L958.3 303.8 L956.8 303.8 L955.3 303.8 L953.8 303.8 L952.3 303.8 L950.8 303.8 L949.3 303.8 L947.8 303.8 L946.3 303.8 L944.8 303.8 L943.3 303.8 L941.8 303.8 L940.3 303.8 L938.8 303.8 L937.3 303.8 L935.8 303.8 L934.3 303.8 L932.8 303.8 L931.3 303.8 L929.8 303.8 L928.3 303.8 L926.8 303.8 L925.3 303.8 L923.8 303.8 L922.3 303.8 L920.8 303.8 L919.3 303.8 L917.8 303.8 L916.3 303.8 L914.8 303.8 L913.3 303.8 L911.8 303.8 L910.3 303.8 L908.8 303.8 L907.3 303.8 L905.8 303.8 L904.3 303.8 L902.8 303.8 L901.3 303.8 L899.8 303.8 L898.3 303.8 L896.8 303.8 L895.3 303.8 L893.8 303.8 L892.3 303.8 L890.8 303.8 L889.3 303.8 L887.8 303.8 L886.3 303.8 L884.8 303.8 L883.3 303.8 L881.8 303.8 L880.3 303.8 L878.8 303.8 L877.3 303.8 L875.8 303.8 L874.3 303.8 L872.8 303.8 L871.3 303.8 L869.8 303.8 L868.3 303.8 L866.8 303.8 L865.3 303.8 L863.8 303.8 L862.3 303.8 L860.8 303.8 L859.3 303.8 L857.8 303.8 L856.3 303.8 L854.8 303.8 L853.3 303.8 L851.8 303.8 L850.3 303.8 L848.8 303.8 L847.3 303.8 L845.8 303.8 L844.3 303.8 L842.8 303.8 L841.3 303.8 L839.8 303.8 L838.3 303.8 L836.8 303.8 L835.3 303.8 L833.8 303.8 L832.3 303.8 L830.8 303.8 L829.3 303.8 L827.8 303.8 L826.3 303.8 L824.8 303.8 L823.3 303.8 L821.8 303.8 L820.3 303.8 L818.8 303.8 L817.3 303.8 L815.8 303.8 L814.3 303.8 L812.8 303.8 L811.3 303.8 L809.8 303.8 L808.3 303.8 L806.8 303.8 L805.3 303.8 L803.8 303.8 L802.3 303.8 L800.8 303.9 L799.3 304.0 L797.8 304.1 L796.3 304.3 L794.8 304.5 L793.3 304.9 L791.8 305.5 L790.3 306.2 L788.8 307.0 L787.3 307.9 L785.8 308.8 L784.3 309.9 L782.8 311.1 L781.3 312.5 L779.8 313.9 L778.3 315.3 L776.8 317.0 L775.3 318.9 L773.8 320.8 L772.3 322.7 L770.8 324.3 L769.3 325.7 L767.8 327.0 L766.3 328.2 L764.8 329.3 L763.3 330.2 L761.8 330.7 L760.3 330.8 L758.8 331.0 L757.3 331.1 L755.8 331.2 L754.3 331.3 L752.8 331.3 L751.3 331.4 L749.8 331.5 L748.3 331.5 L746.8 331.6 L745.3 331.7 L743.8 331.8 L742.3 331.8 L740.8 331.9 L739.3 332.0 L737.8 332.0 L736.3 332.1 L734.8 332.1 L733.3 332.1 L731.8 332.1 L730.3 332.1 L728.8 332.1 L727.3 332.1 L725.8 332.1 L724.3 332.1 L722.8 332.1 L721.3 332.1 L719.8 332.1 L718.3 332.1 L716.8 332.1 L715.3 332.1 L713.8 332.1 L712.3 332.4 L710.8 332.9 L709.3 333.5 L707.8 334.2 L706.3 334.8 L704.8 335.3 L703.3 335.9 L701.8 336.6 L700.3 337.0 L698.8 337.2 L697.3 337.1 L695.8 336.6 L694.3 336.0 L692.8 335.4 L691.3 334.9 L689.8 334.5 L688.3 334.1 L686.8 333.7 L685.3 333.3 L683.8 332.9 L682.3 332.5 L680.8 332.1 L679.3 331.7 L677.8 331.3 L676.3 330.9 L674.8 330.4 L673.3 329.9 L671.8 329.3 L670.3 328.6 L668.8 327.8 L667.3 326.9 L665.8 326.0 L664.3 324.9 L662.8 323.9 L661.3 322.8 L659.8 321.8 L658.3 320.7 L656.8 319.5 L655.3 318.3 L653.8 317.1 L652.3 315.9 L650.8 314.8 L649.3 313.9 L647.8 312.9 L646.3 311.9 L644.8 311.0 L643.3 310.3 L641.8 310.0 L640.3 309.9 L638.8 309.8 L637.3 309.7 L635.8 309.7 L634.3 309.6 L632.8 309.5 L631.3 309.4 L629.8 309.0 L628.3 308.6 L626.8 308.0 L625.3 307.5 L623.8 306.9 L622.3 306.4 L620.8 306.1 L619.3 305.8 L617.8 305.6 L616.3 305.4 L614.8 305.1 L613.3 305.0 L611.8 304.8 L610.3 304.6 L608.8 304.5 L607.3 304.4 L605.8 304.3 L604.3 304.2 L602.8 304.1 L601.3 304.1 L599.8 304.0 L598.3 303.9 L596.8 303.9 L595.3 303.8 L593.8 303.8 L592.3 303.8 L590.8 303.8 L589.3 303.8 L587.8 303.8 L586.3 303.8 L584.8 303.8 L583.3 303.8 L581.8 303.8 L580.3 303.8 L578.8 303.8 L577.3 303.8 L575.8 303.8 L574.3 303.8 L572.8 303.8 L571.3 303.8 L569.8 303.8 L568.3 303.8 L566.8 303.8 L565.3 303.8 L563.8 303.8 L562.3 303.8 L560.8 303.8 L559.3 303.8 L557.8 303.8 L556.3 303.8 L554.8 303.8 L553.3 303.8 L551.8 303.8 L550.3 303.8 L548.8 303.8 L547.3 303.8 L545.8 303.8 L544.3 303.8 L542.8 303.8 L541.3 303.8 L539.8 303.8 L538.3 303.8 L536.8 303.8 L535.3 303.8 L533.8 303.8 L532.3 303.8 L530.8 303.8 L529.3 303.8 L527.8 303.8 L526.3 303.8 L524.8 303.8 L523.3 303.8 L521.8 303.8 L520.3 303.8 L518.8 303.8 L517.3 303.8 L515.8 303.8 L514.3 303.8 L512.8 303.8 L511.3 303.8 L509.8 303.8 L508.3 303.8 L506.8 303.8 L505.3 303.8 L503.8 303.8 L502.3 303.8 L500.8 303.8 L499.3 303.8 L497.8 303.8 L496.3 303.8 L494.8 303.8 L493.3 303.8 L491.8 303.8 L490.3 303.8 L488.8 303.8 L487.3 303.8 L485.8 303.8 L484.3 303.8 L482.8 303.8 L481.3 303.8 L479.8 303.8 L478.3 303.8 L476.8 303.8 L475.3 304.0 L473.8 304.4 L472.3 304.8 L470.8 305.3 L469.3 305.8 L467.8 306.4 L466.3 307.2 L464.8 308.3 L463.3 309.4 L461.8 310.8 L460.3 312.1 L458.8 313.6 L457.3 315.3 L455.8 317.2 L454.3 319.1 L452.8 320.9 L451.3 322.5 L449.8 324.2 L448.3 325.9 L446.8 327.3 L445.3 328.4 L443.8 328.9 L442.3 329.2 L440.8 329.5 L439.3 329.7 L437.8 329.8 L436.3 329.9 L434.8 330.0 L433.3 330.1 L431.8 330.1 L430.3 330.2 L428.8 330.2 L427.3 330.3 L425.8 330.3 L424.3 330.4 L422.8 330.5 L421.3 330.5 L419.8 330.6 L418.3 330.7 L416.8 330.8 L415.3 330.8 L413.8 330.9 L412.3 330.9 L410.8 331.0 L409.3 331.0 L407.8 331.0 L406.3 331.0 L404.8 331.0 L403.3 331.0 L401.8 331.0 L400.3 331.0 L398.8 331.0 L397.3 331.0 L395.8 331.0 L394.3 331.0 L392.8 331.0 L391.3 330.9 L389.8 330.8 L388.3 330.7 L386.8 330.5 L385.3 330.4 L383.8 330.3 L382.3 330.2 L380.8 330.2 L379.3 330.1 L377.8 330.1 L376.3 330.0 L374.8 330.0 L373.3 330.0 L371.8 330.0 L370.3 329.9 L368.8 329.9 L367.3 329.9 L365.8 329.8 L364.3 329.8 L362.8 329.8 L361.3 329.7 L359.8 329.7 L358.3 329.6 L356.8 329.6 L355.3 329.5 L353.8 329.4 L352.3 329.3 L350.8 329.1 L349.3 328.8 L347.8 328.5 L346.3 328.0 L344.8 327.5 L343.3 326.9 L341.8 326.2 L340.3 325.5 L338.8 324.4 L337.3 323.0 L335.8 321.4 L334.3 319.8 L332.8 318.2 L331.3 316.7 L329.8 315.1 L328.3 313.4 L326.8 311.7 L325.3 310.2 L323.8 308.9 L322.3 307.8 L320.8 306.8 L319.3 305.9 L317.8 305.1 L316.3 304.7 L314.8 304.6 L313.3 304.7 L311.8 304.7 L310.3 304.7 L308.8 304.8 L307.3 304.9 L305.8 304.9 L304.3 305.0 L302.8 305.1 L301.3 305.2 L299.8 305.3 L298.3 305.6 L296.8 305.8 L295.3 306.1 L293.8 306.4 L292.3 306.7 L290.8 306.9 L289.3 307.1 L287.8 307.2 L286.3 307.2 L284.8 307.2 L283.3 307.1 L281.8 307.1 L280.3 307.0 L278.8 306.9 L277.3 306.8 L275.8 306.8 L274.3 306.7 L272.8 306.6 L271.3 306.5 L269.8 306.5 L268.3 306.4 L266.8 306.3 L265.3 306.3 L263.8 306.2 L262.3 306.1 L260.8 306.0 L259.3 306.0 L257.8 305.9 L256.3 305.8 L254.8 305.7 L253.3 305.6 L251.8 305.4 L250.3 305.2 L248.8 305.1 L247.3 304.9 L245.8 304.8 L244.3 304.6 L242.8 304.5 L241.3 304.4 L239.8 304.4 L238.3 304.4 L236.8 304.4 L235.3 304.4 L233.8 304.5 L232.3 304.5 L230.8 304.5 L229.3 304.6 L227.8 304.6 L226.3 304.6 L224.8 304.6 L223.3 304.6 L221.8 304.6 L220.3 304.6 L218.8 304.6 L217.3 304.6 L215.8 304.6 L214.3 304.5 L212.8 304.5 L211.3 304.5 L209.8 304.5 L208.3 304.4 L206.8 304.4 L205.3 304.4 L203.8 304.4 L202.3 304.4 L200.8 304.4 L199.3 304.4 L197.8 304.4 L196.3 304.4 L194.8 304.4 L193.3 304.4 L191.8 304.4 L190.3 304.4 L188.8 304.4 L187.3 304.4 L185.8 304.4 L184.3 304.4 L182.8 304.4 L181.3 304.4 L179.8 304.4 L178.3 304.4 L176.8 304.4 L175.3 304.4 L173.8 304.4 L172.3 304.4 L170.8 304.4 L169.3 304.4 L167.8 304.4 L166.3 304.4 L164.8 304.4 L163.3 304.4 L161.8 304.4 L160.3 304.4 L158.8 304.4 L157.3 304.4 L155.8 304.4 L154.3 304.4 L152.8 304.4 L151.3 304.6 L149.8 305.0 L148.3 305.4 L146.8 305.9 L145.3 306.4 L143.8 307.1 L142.3 307.8 L140.8 308.7 L139.3 309.5 L137.8 310.5 L136.3 311.5 L134.8 312.5 L133.3 313.7 L131.8 315.1 L130.3 316.6 L128.8 318.1 L127.3 319.5 L125.8 320.6 L124.3 321.4 L122.8 321.9 L121.3 322.2 L119.8 322.4 L118.3 322.6 L116.8 322.8 L115.3 323.0 L113.8 323.3 L112.3 323.7 L110.8 324.4 L109.3 325.5 L107.8 326.8 L106.3 328.1 L104.8 329.0 L103.3 329.4 L101.8 329.7 L100.3 330.0 L98.8 330.2 L97.3 330.4 L95.8 330.5 L94.3 330.7 L92.8 330.8 L91.3 330.9 L89.8 331.0 L88.3 331.1 L86.8 331.1 L85.3 331.2 L83.8 331.2 L82.3 331.2 L80.8 331.3 L79.3 331.3 L77.8 331.4 L76.3 331.5 L74.8 331.7 L73.3 332.7 L71.8 333.9 L70.3 335.1 L68.8 335.8 L67.3 335.8 L65.8 335.7 L64.3 335.6 L62.8 335.5 L61.3 335.3 L59.8 335.1 L58.3 334.8 L56.8 334.6 L55.3 334.3 L53.8 334.0 L52.3 333.5 L50.8 332.9 L49.3 332.3 L47.8 331.7 L46.3 331.2 L44.8 330.8 L43.3 330.5 L41.8 330.3 L40.3 330.2 L38.8 330.0 L37.3 329.9 L35.8 329.7 L34.3 329.5 L32.8 329.3 L31.3 328.9 L29.8 328.5 L28.3 328.0 L26.8 327.4 L25.3 326.8 L23.8 326.1 L22.3 325.4 L20.8 324.6 L19.3 323.7 L17.8 322.7 L16.3 321.6 L14.8 320.4 L13.3 319.1 L11.8 317.8 L10.3 316.5 L8.8 315.1 L7.3 313.6 L5.8 312.0 L4.3 310.3 L2.8 308.5 L1.3 306.7 Z" fill="#131313"/><path d="M1.3 306.2 L2.8 308.0 L4.3 309.8 L5.8 311.5 L7.3 313.1 L8.8 314.6 L10.3 316.0 L11.8 317.3 L13.3 318.6 L14.8 319.9 L16.3 321.1 L17.8 322.2 L19.3 323.2 L20.8 324.1 L22.3 324.9 L23.8 325.6 L25.3 326.3 L26.8 326.9 L28.3 327.5 L29.8 328.0 L31.3 328.4 L32.8 328.8 L34.3 329.0 L35.8 329.2 L37.3 329.4 L38.8 329.5 L40.3 329.7 L41.8 329.8 L43.3 330.0 L44.8 330.3 L46.3 330.7 L47.8 331.2 L49.3 331.8 L50.8 332.4 L52.3 333.0 L53.8 333.5 L55.3 333.8 L56.8 334.1 L58.3 334.3 L59.8 334.6 L61.3 334.8 L62.8 335.0 L64.3 335.1 L65.8 335.2 L67.3 335.3 L68.8 335.3 L70.3 334.6 L71.8 333.4 L73.3 332.2 L74.8 331.2 L76.3 331.0 L77.8 330.9 L79.3 330.8 L80.8 330.8 L82.3 330.7 L83.8 330.7 L85.3 330.7 L86.8 330.6 L88.3 330.6 L89.8 330.5 L91.3 330.4 L92.8 330.3 L94.3 330.2 L95.8 330.0 L97.3 329.9 L98.8 329.7 L100.3 329.5 L101.8 329.2 L103.3 328.9 L104.8 328.5 L106.3 327.6 L107.8 326.3 L109.3 325.0 L110.8 323.9 L112.3 323.2 L113.8 322.8 L115.3 322.5 L116.8 322.3 L118.3 322.1 L119.8 321.9 L121.3 321.7 L122.8 321.4 L124.3 320.9 L125.8 320.1 L127.3 319.0 L128.8 317.6 L130.3 316.1 L131.8 314.6 L133.3 313.2 L134.8 312.0 L136.3 311.0 L137.8 310.0 L139.3 309.0 L140.8 308.2 L142.3 307.3 L143.8 306.6 L145.3 305.9 L146.8 305.4 L148.3 304.9 L149.8 304.5 L151.3 304.1 L152.8 303.9 L154.3 303.9 L155.8 303.9 L157.3 303.9 L158.8 303.9 L160.3 303.9 L161.8 303.9 L163.3 303.9 L164.8 303.9 L166.3 303.9 L167.8 303.9 L169.3 303.9 L170.8 303.9 L172.3 303.9 L173.8 303.9 L175.3 303.9 L176.8 303.9 L178.3 303.9 L179.8 303.9 L181.3 303.9 L182.8 303.9 L184.3 303.9 L185.8 303.9 L187.3 303.9 L188.8 303.9 L190.3 303.9 L191.8 303.9 L193.3 303.9 L194.8 303.9 L196.3 303.9 L197.8 303.9 L199.3 303.9 L200.8 303.9 L202.3 303.9 L203.8 303.9 L205.3 303.9 L206.8 303.9 L208.3 303.9 L209.8 304.0 L211.3 304.0 L212.8 304.0 L214.3 304.0 L215.8 304.1 L217.3 304.1 L218.8 304.1 L220.3 304.1 L221.8 304.1 L223.3 304.1 L224.8 304.1 L226.3 304.1 L227.8 304.1 L229.3 304.1 L230.8 304.0 L232.3 304.0 L233.8 304.0 L235.3 303.9 L236.8 303.9 L238.3 303.9 L239.8 303.9 L241.3 303.9 L242.8 304.0 L244.3 304.1 L245.8 304.3 L247.3 304.4 L248.8 304.6 L250.3 304.7 L251.8 304.9 L253.3 305.1 L254.8 305.2 L256.3 305.3 L257.8 305.4 L259.3 305.5 L260.8 305.5 L262.3 305.6 L263.8 305.7 L265.3 305.8 L266.8 305.8 L268.3 305.9 L269.8 306.0 L271.3 306.0 L272.8 306.1 L274.3 306.2 L275.8 306.3 L277.3 306.3 L278.8 306.4 L280.3 306.5 L281.8 306.6 L283.3 306.6 L284.8 306.7 L286.3 306.7 L287.8 306.7 L289.3 306.6 L290.8 306.4 L292.3 306.2 L293.8 305.9 L295.3 305.6 L296.8 305.3 L298.3 305.1 L299.8 304.8 L301.3 304.7 L302.8 304.6 L304.3 304.5 L305.8 304.4 L307.3 304.4 L308.8 304.3 L310.3 304.2 L311.8 304.2 L313.3 304.2 L314.8 304.1 L316.3 304.2 L317.8 304.6 L319.3 305.4 L320.8 306.3 L322.3 307.3 L323.8 308.4 L325.3 309.7 L326.8 311.2 L328.3 312.9 L329.8 314.6 L331.3 316.2 L332.8 317.7 L334.3 319.3 L335.8 320.9 L337.3 322.5 L338.8 323.9 L340.3 325.0 L341.8 325.7 L343.3 326.4 L344.8 327.0 L346.3 327.5 L347.8 328.0 L349.3 328.3 L350.8 328.6 L352.3 328.8 L353.8 328.9 L355.3 329.0 L356.8 329.1 L358.3 329.1 L359.8 329.2 L361.3 329.2 L362.8 329.3 L364.3 329.3 L365.8 329.3 L367.3 329.4 L368.8 329.4 L370.3 329.4 L371.8 329.5 L373.3 329.5 L374.8 329.5 L376.3 329.5 L377.8 329.6 L379.3 329.6 L380.8 329.7 L382.3 329.7 L383.8 329.8 L385.3 329.9 L386.8 330.0 L388.3 330.2 L389.8 330.3 L391.3 330.4 L392.8 330.5 L394.3 330.5 L395.8 330.5 L397.3 330.5 L398.8 330.5 L400.3 330.5 L401.8 330.5 L403.3 330.5 L404.8 330.5 L406.3 330.5 L407.8 330.5 L409.3 330.5 L410.8 330.5 L412.3 330.4 L413.8 330.4 L415.3 330.3 L416.8 330.3 L418.3 330.2 L419.8 330.1 L421.3 330.0 L422.8 330.0 L424.3 329.9 L425.8 329.8 L427.3 329.8 L428.8 329.7 L430.3 329.7 L431.8 329.6 L433.3 329.6 L434.8 329.5 L436.3 329.4 L437.8 329.3 L439.3 329.2 L440.8 329.0 L442.3 328.7 L443.8 328.4 L445.3 327.9 L446.8 326.8 L448.3 325.4 L449.8 323.7 L451.3 322.0 L452.8 320.4 L454.3 318.6 L455.8 316.7 L457.3 314.8 L458.8 313.1 L460.3 311.6 L461.8 310.3 L463.3 308.9 L464.8 307.8 L466.3 306.7 L467.8 305.9 L469.3 305.3 L470.8 304.8 L472.3 304.3 L473.8 303.9 L475.3 303.5 L476.8 303.3 L478.3 303.3 L479.8 303.3 L481.3 303.3 L482.8 303.3 L484.3 303.3 L485.8 303.3 L487.3 303.3 L488.8 303.3 L490.3 303.3 L491.8 303.3 L493.3 303.3 L494.8 303.3 L496.3 303.3 L497.8 303.3 L499.3 303.3 L500.8 303.3 L502.3 303.3 L503.8 303.3 L505.3 303.3 L506.8 303.3 L508.3 303.3 L509.8 303.3 L511.3 303.3 L512.8 303.3 L514.3 303.3 L515.8 303.3 L517.3 303.3 L518.8 303.3 L520.3 303.3 L521.8 303.3 L523.3 303.3 L524.8 303.3 L526.3 303.3 L527.8 303.3 L529.3 303.3 L530.8 303.3 L532.3 303.3 L533.8 303.3 L535.3 303.3 L536.8 303.3 L538.3 303.3 L539.8 303.3 L541.3 303.3 L542.8 303.3 L544.3 303.3 L545.8 303.3 L547.3 303.3 L548.8 303.3 L550.3 303.3 L551.8 303.3 L553.3 303.3 L554.8 303.3 L556.3 303.3 L557.8 303.3 L559.3 303.3 L560.8 303.3 L562.3 303.3 L563.8 303.3 L565.3 303.3 L566.8 303.3 L568.3 303.3 L569.8 303.3 L571.3 303.3 L572.8 303.3 L574.3 303.3 L575.8 303.3 L577.3 303.3 L578.8 303.3 L580.3 303.3 L581.8 303.3 L583.3 303.3 L584.8 303.3 L586.3 303.3 L587.8 303.3 L589.3 303.3 L590.8 303.3 L592.3 303.3 L593.8 303.3 L595.3 303.3 L596.8 303.4 L598.3 303.4 L599.8 303.5 L601.3 303.6 L602.8 303.6 L604.3 303.7 L605.8 303.8 L607.3 303.9 L608.8 304.0 L610.3 304.1 L611.8 304.3 L613.3 304.5 L614.8 304.6 L616.3 304.9 L617.8 305.1 L619.3 305.3 L620.8 305.6 L622.3 305.9 L623.8 306.4 L625.3 307.0 L626.8 307.5 L628.3 308.1 L629.8 308.5 L631.3 308.9 L632.8 309.0 L634.3 309.1 L635.8 309.2 L637.3 309.2 L638.8 309.3 L640.3 309.4 L641.8 309.5 L643.3 309.8 L644.8 310.5 L646.3 311.4 L647.8 312.4 L649.3 313.4 L650.8 314.3 L652.3 315.4 L653.8 316.6 L655.3 317.8 L656.8 319.0 L658.3 320.2 L659.8 321.3 L661.3 322.3 L662.8 323.4 L664.3 324.4 L665.8 325.5 L667.3 326.4 L668.8 327.3 L670.3 328.1 L671.8 328.8 L673.3 329.4 L674.8 329.9 L676.3 330.4 L677.8 330.8 L679.3 331.2 L680.8 331.6 L682.3 332.0 L683.8 332.4 L685.3 332.8 L686.8 333.2 L688.3 333.6 L689.8 334.0 L691.3 334.4 L692.8 334.9 L694.3 335.5 L695.8 336.1 L697.3 336.6 L698.8 336.7 L700.3 336.5 L701.8 336.1 L703.3 335.4 L704.8 334.8 L706.3 334.3 L707.8 333.7 L709.3 333.0 L710.8 332.4 L712.3 331.9 L713.8 331.6 L715.3 331.6 L716.8 331.6 L718.3 331.6 L719.8 331.6 L721.3 331.6 L722.8 331.6 L724.3 331.6 L725.8 331.6 L727.3 331.6 L728.8 331.6 L730.3 331.6 L731.8 331.6 L733.3 331.6 L734.8 331.6 L736.3 331.6 L737.8 331.5 L739.3 331.5 L740.8 331.4 L742.3 331.3 L743.8 331.3 L745.3 331.2 L746.8 331.1 L748.3 331.0 L749.8 331.0 L751.3 330.9 L752.8 330.8 L754.3 330.8 L755.8 330.7 L757.3 330.6 L758.8 330.5 L760.3 330.3 L761.8 330.2 L763.3 329.7 L764.8 328.8 L766.3 327.7 L767.8 326.5 L769.3 325.2 L770.8 323.8 L772.3 322.2 L773.8 320.3 L775.3 318.4 L776.8 316.5 L778.3 314.8 L779.8 313.4 L781.3 312.0 L782.8 310.6 L784.3 309.4 L785.8 308.3 L787.3 307.4 L788.8 306.5 L790.3 305.7 L791.8 305.0 L793.3 304.4 L794.8 304.0 L796.3 303.8 L797.8 303.6 L799.3 303.5 L800.8 303.4 L802.3 303.3 L803.8 303.3 L805.3 303.3 L806.8 303.3 L808.3 303.3 L809.8 303.3 L811.3 303.3 L812.8 303.3 L814.3 303.3 L815.8 303.3 L817.3 303.3 L818.8 303.3 L820.3 303.3 L821.8 303.3 L823.3 303.3 L824.8 303.3 L826.3 303.3 L827.8 303.3 L829.3 303.3 L830.8 303.3 L832.3 303.3 L833.8 303.3 L835.3 303.3 L836.8 303.3 L838.3 303.3 L839.8 303.3 L841.3 303.3 L842.8 303.3 L844.3 303.3 L845.8 303.3 L847.3 303.3 L848.8 303.3 L850.3 303.3 L851.8 303.3 L853.3 303.3 L854.8 303.3 L856.3 303.3 L857.8 303.3 L859.3 303.3 L860.8 303.3 L862.3 303.3 L863.8 303.3 L865.3 303.3 L866.8 303.3 L868.3 303.3 L869.8 303.3 L871.3 303.3 L872.8 303.3 L874.3 303.3 L875.8 303.3 L877.3 303.3 L878.8 303.3 L880.3 303.3 L881.8 303.3 L883.3 303.3 L884.8 303.3 L886.3 303.3 L887.8 303.3 L889.3 303.3 L890.8 303.3 L892.3 303.3 L893.8 303.3 L895.3 303.3 L896.8 303.3 L898.3 303.3 L899.8 303.3 L901.3 303.3 L902.8 303.3 L904.3 303.3 L905.8 303.3 L907.3 303.3 L908.8 303.3 L910.3 303.3 L911.8 303.3 L913.3 303.3 L914.8 303.3 L916.3 303.3 L917.8 303.3 L919.3 303.3 L920.8 303.3 L922.3 303.3 L923.8 303.3 L925.3 303.3 L926.8 303.3 L928.3 303.3 L929.8 303.3 L931.3 303.3 L932.8 303.3 L934.3 303.3 L935.8 303.3 L937.3 303.3 L938.8 303.3 L940.3 303.3 L941.8 303.3 L943.3 303.3 L944.8 303.3 L946.3 303.3 L947.8 303.3 L949.3 303.3 L950.8 303.3 L952.3 303.3 L953.8 303.3 L955.3 303.3 L956.8 303.3 L958.3 303.3 L959.8 303.3 L961.3 303.3 L962.8 303.3 L964.3 303.3 L965.8 303.3 L967.3 303.3 L968.8 303.3 L970.3 303.3 L971.8 303.3 L973.3 303.3 L974.8 303.3 L976.3 303.3 L977.8 303.3 L979.3 303.3 L982.0 303.3 L982.0 344.7 L979.3 344.7 L977.8 344.7 L976.3 344.7 L974.8 344.7 L973.3 344.7 L971.8 344.7 L970.3 344.7 L968.8 344.7 L967.3 344.7 L965.8 344.7 L964.3 344.7 L962.8 344.7 L961.3 344.7 L959.8 344.7 L958.3 344.7 L956.8 344.7 L955.3 344.7 L953.8 344.7 L952.3 344.7 L950.8 344.7 L949.3 344.7 L947.8 344.7 L946.3 344.7 L944.8 344.7 L943.3 344.7 L941.8 344.7 L940.3 344.7 L938.8 344.7 L937.3 344.7 L935.8 344.7 L934.3 344.7 L932.8 344.7 L931.3 344.7 L929.8 344.7 L928.3 344.7 L926.8 344.7 L925.3 344.7 L923.8 344.7 L922.3 344.7 L920.8 344.7 L919.3 344.7 L917.8 344.7 L916.3 344.7 L914.8 344.7 L913.3 344.7 L911.8 344.7 L910.3 344.7 L908.8 344.7 L907.3 344.7 L905.8 344.7 L904.3 344.7 L902.8 344.7 L901.3 344.7 L899.8 344.7 L898.3 344.7 L896.8 344.7 L895.3 344.7 L893.8 344.7 L892.3 344.7 L890.8 344.7 L889.3 344.7 L887.8 344.7 L886.3 344.7 L884.8 344.7 L883.3 344.7 L881.8 344.7 L880.3 344.7 L878.8 344.7 L877.3 344.7 L875.8 344.7 L874.3 344.7 L872.8 344.7 L871.3 344.7 L869.8 344.7 L868.3 344.7 L866.8 344.7 L865.3 344.7 L863.8 344.7 L862.3 344.7 L860.8 344.7 L859.3 344.7 L857.8 344.7 L856.3 344.7 L854.8 344.7 L853.3 344.7 L851.8 344.7 L850.3 344.7 L848.8 344.7 L847.3 344.7 L845.8 344.7 L844.3 344.7 L842.8 344.7 L841.3 344.7 L839.8 344.7 L838.3 344.7 L836.8 344.7 L835.3 344.7 L833.8 344.7 L832.3 344.7 L830.8 344.7 L829.3 344.7 L827.8 344.7 L826.3 344.7 L824.8 344.7 L823.3 344.7 L821.8 344.7 L820.3 344.7 L818.8 344.7 L817.3 344.7 L815.8 344.7 L814.3 344.7 L812.8 344.7 L811.3 344.7 L809.8 344.7 L808.3 344.7 L806.8 344.7 L805.3 344.7 L803.8 344.7 L802.3 344.7 L800.8 344.7 L799.3 344.7 L797.8 344.7 L796.3 344.7 L794.8 344.7 L793.3 344.8 L791.8 344.8 L790.3 344.8 L788.8 344.8 L787.3 344.9 L785.8 344.9 L784.3 345.0 L782.8 345.0 L781.3 345.2 L779.8 345.5 L778.3 345.8 L776.8 346.2 L775.3 346.6 L773.8 347.0 L772.3 347.4 L770.8 347.9 L769.3 348.5 L767.8 349.1 L766.3 349.6 L764.8 350.0 L763.3 350.2 L761.8 350.3 L760.3 350.5 L758.8 350.6 L757.3 350.7 L755.8 350.8 L754.3 350.8 L752.8 350.9 L751.3 351.0 L749.8 351.0 L748.3 351.1 L746.8 351.1 L745.3 351.2 L743.8 351.2 L742.3 351.3 L740.8 351.3 L739.3 351.4 L737.8 351.4 L736.3 351.5 L734.8 351.5 L733.3 351.6 L731.8 351.6 L730.3 351.7 L728.8 351.8 L727.3 351.8 L725.8 351.9 L724.3 352.0 L722.8 352.1 L721.3 352.2 L719.8 352.3 L718.3 352.4 L716.8 352.5 L715.3 352.7 L713.8 353.0 L712.3 353.4 L710.8 353.9 L709.3 354.5 L707.8 355.1 L706.3 355.6 L704.8 355.9 L703.3 356.3 L701.8 356.6 L700.3 356.9 L698.8 357.1 L697.3 357.1 L695.8 357.0 L694.3 356.7 L692.8 356.3 L691.3 355.7 L689.8 355.1 L688.3 354.5 L686.8 354.0 L685.3 353.6 L683.8 353.2 L682.3 352.8 L680.8 352.5 L679.3 352.1 L677.8 351.8 L676.3 351.4 L674.8 351.0 L673.3 350.5 L671.8 350.1 L670.3 349.6 L668.8 349.1 L667.3 348.6 L665.8 348.1 L664.3 347.6 L662.8 347.1 L661.3 346.5 L659.8 345.9 L658.3 345.4 L656.8 344.9 L655.3 344.7 L653.8 344.7 L652.3 344.7 L650.8 344.7 L649.3 344.7 L647.8 344.7 L646.3 344.7 L644.8 344.7 L643.3 344.7 L641.8 344.7 L640.3 344.7 L638.8 344.7 L637.3 344.7 L635.8 344.7 L634.3 344.7 L632.8 344.7 L631.3 344.7 L629.8 344.7 L628.3 344.7 L626.8 344.7 L625.3 344.7 L623.8 344.7 L622.3 344.7 L620.8 344.7 L619.3 344.7 L617.8 344.7 L616.3 344.7 L614.8 344.7 L613.3 344.7 L611.8 344.7 L610.3 344.7 L608.8 344.7 L607.3 344.7 L605.8 344.7 L604.3 344.7 L602.8 344.7 L601.3 344.7 L599.8 344.7 L598.3 344.7 L596.8 344.7 L595.3 344.7 L593.8 344.7 L592.3 344.7 L590.8 344.7 L589.3 344.7 L587.8 344.7 L586.3 344.7 L584.8 344.7 L583.3 344.7 L581.8 344.7 L580.3 344.7 L578.8 344.7 L577.3 344.7 L575.8 344.7 L574.3 344.7 L572.8 344.7 L571.3 344.7 L569.8 344.7 L568.3 344.7 L566.8 344.7 L565.3 344.7 L563.8 344.7 L562.3 344.7 L560.8 344.7 L559.3 344.7 L557.8 344.7 L556.3 344.7 L554.8 344.7 L553.3 344.7 L551.8 344.7 L550.3 344.7 L548.8 344.7 L547.3 344.7 L545.8 344.7 L544.3 344.7 L542.8 344.7 L541.3 344.7 L539.8 344.7 L538.3 344.7 L536.8 344.7 L535.3 344.7 L533.8 344.7 L532.3 344.7 L530.8 344.7 L529.3 344.7 L527.8 344.7 L526.3 344.7 L524.8 344.7 L523.3 344.7 L521.8 344.7 L520.3 344.7 L518.8 344.7 L517.3 344.7 L515.8 344.7 L514.3 344.7 L512.8 344.7 L511.3 344.7 L509.8 344.7 L508.3 344.7 L506.8 344.7 L505.3 344.7 L503.8 344.7 L502.3 344.7 L500.8 344.7 L499.3 344.7 L497.8 344.7 L496.3 344.7 L494.8 344.7 L493.3 344.7 L491.8 344.7 L490.3 344.7 L488.8 344.7 L487.3 344.7 L485.8 344.7 L484.3 344.7 L482.8 344.7 L481.3 344.7 L479.8 344.7 L478.3 344.7 L476.8 344.7 L475.3 344.7 L473.8 344.7 L472.3 344.7 L470.8 344.7 L469.3 344.7 L467.8 344.7 L466.3 344.7 L464.8 344.7 L463.3 344.7 L461.8 344.7 L460.3 344.9 L458.8 345.2 L457.3 345.6 L455.8 346.0 L454.3 346.4 L452.8 346.9 L451.3 347.4 L449.8 348.0 L448.3 348.5 L446.8 349.0 L445.3 349.3 L443.8 349.6 L442.3 349.9 L440.8 350.1 L439.3 350.3 L437.8 350.3 L436.3 350.3 L434.8 350.3 L433.3 350.3 L431.8 350.3 L430.3 350.3 L428.8 350.3 L427.3 350.3 L425.8 350.3 L424.3 350.3 L422.8 350.3 L421.3 350.3 L419.8 350.3 L418.3 350.3 L416.8 350.3 L415.3 350.3 L413.8 350.3 L412.3 350.3 L410.8 350.3 L409.3 350.3 L407.8 350.3 L406.3 350.3 L404.8 350.3 L403.3 350.3 L401.8 350.3 L400.3 350.3 L398.8 350.3 L397.3 350.2 L395.8 350.2 L394.3 350.2 L392.8 350.2 L391.3 350.1 L389.8 350.1 L388.3 350.1 L386.8 350.1 L385.3 350.1 L383.8 350.1 L382.3 350.1 L380.8 350.1 L379.3 350.1 L377.8 350.1 L376.3 350.1 L374.8 350.1 L373.3 350.1 L371.8 350.1 L370.3 350.1 L368.8 350.1 L367.3 350.1 L365.8 350.1 L364.3 350.1 L362.8 350.1 L361.3 350.1 L359.8 350.1 L358.3 350.1 L356.8 350.1 L355.3 350.1 L353.8 350.1 L352.3 350.1 L350.8 350.1 L349.3 350.2 L347.8 350.4 L346.3 350.5 L344.8 350.7 L343.3 350.8 L341.8 350.9 L340.3 350.8 L338.8 349.9 L337.3 348.6 L335.8 347.4 L334.3 346.8 L332.8 346.1 L331.3 345.6 L329.8 345.1 L328.3 344.8 L326.8 344.7 L325.3 344.7 L323.8 344.7 L322.3 344.7 L320.8 344.7 L319.3 344.7 L317.8 344.7 L316.3 344.7 L314.8 344.7 L313.3 344.7 L311.8 344.7 L310.3 344.7 L308.8 344.7 L307.3 344.7 L305.8 344.7 L304.3 344.7 L302.8 344.7 L301.3 344.7 L299.8 344.7 L298.3 344.7 L296.8 344.7 L295.3 344.7 L293.8 344.7 L292.3 344.7 L290.8 344.7 L289.3 344.7 L287.8 344.7 L286.3 344.7 L284.8 344.7 L283.3 344.7 L281.8 344.7 L280.3 344.7 L278.8 344.7 L277.3 344.7 L275.8 344.7 L274.3 344.7 L272.8 344.7 L271.3 344.7 L269.8 344.7 L268.3 344.7 L266.8 344.7 L265.3 344.7 L263.8 344.7 L262.3 344.7 L260.8 344.7 L259.3 344.7 L257.8 344.7 L256.3 344.7 L254.8 344.7 L253.3 344.7 L251.8 344.7 L250.3 344.7 L248.8 344.7 L247.3 344.7 L245.8 344.7 L244.3 344.7 L242.8 344.7 L241.3 344.7 L239.8 344.7 L238.3 344.7 L236.8 344.7 L235.3 344.7 L233.8 344.7 L232.3 344.7 L230.8 344.7 L229.3 344.7 L227.8 344.7 L226.3 344.7 L224.8 344.7 L223.3 344.7 L221.8 344.7 L220.3 344.7 L218.8 344.7 L217.3 344.7 L215.8 344.7 L214.3 344.7 L212.8 344.7 L211.3 344.7 L209.8 344.7 L208.3 344.7 L206.8 344.7 L205.3 344.7 L203.8 344.7 L202.3 344.7 L200.8 344.7 L199.3 344.7 L197.8 344.7 L196.3 344.7 L194.8 344.7 L193.3 344.7 L191.8 344.7 L190.3 344.7 L188.8 344.7 L187.3 344.7 L185.8 344.7 L184.3 344.7 L182.8 344.7 L181.3 344.7 L179.8 344.7 L178.3 344.7 L176.8 344.7 L175.3 344.7 L173.8 344.7 L172.3 344.7 L170.8 344.7 L169.3 344.7 L167.8 344.7 L166.3 344.7 L164.8 344.7 L163.3 344.7 L161.8 344.7 L160.3 344.7 L158.8 344.7 L157.3 344.7 L155.8 344.7 L154.3 344.7 L152.8 344.7 L151.3 344.7 L149.8 344.7 L148.3 344.7 L146.8 344.7 L145.3 344.7 L143.8 344.7 L142.3 344.7 L140.8 344.7 L139.3 344.7 L137.8 344.7 L136.3 344.7 L134.8 344.7 L133.3 344.7 L131.8 344.7 L130.3 344.7 L128.8 344.7 L127.3 344.7 L125.8 344.7 L124.3 344.7 L122.8 344.7 L121.3 344.7 L119.8 344.7 L118.3 344.7 L116.8 344.7 L115.3 344.8 L113.8 344.9 L112.3 345.1 L110.8 345.3 L109.3 345.7 L107.8 346.3 L106.3 347.1 L104.8 347.8 L103.3 348.2 L101.8 348.6 L100.3 349.0 L98.8 349.3 L97.3 349.6 L95.8 349.9 L94.3 350.2 L92.8 350.5 L91.3 350.7 L89.8 350.9 L88.3 351.1 L86.8 351.2 L85.3 351.3 L83.8 351.5 L82.3 351.6 L80.8 351.7 L79.3 351.8 L77.8 352.0 L76.3 352.2 L74.8 352.5 L73.3 353.3 L71.8 354.3 L70.3 355.2 L68.8 355.7 L67.3 355.7 L65.8 355.6 L64.3 355.4 L62.8 355.2 L61.3 354.9 L59.8 354.6 L58.3 354.3 L56.8 354.0 L55.3 353.7 L53.8 353.2 L52.3 352.7 L50.8 352.1 L49.3 351.5 L47.8 350.9 L46.3 350.4 L44.8 350.1 L43.3 349.9 L41.8 349.8 L40.3 349.6 L38.8 349.5 L37.3 349.4 L35.8 349.3 L34.3 349.2 L32.8 349.2 L31.3 349.2 L29.8 349.2 L28.3 349.2 L26.8 349.2 L25.3 349.2 L23.8 349.2 L22.3 349.2 L20.8 349.2 L19.3 349.1 L17.8 349.0 L16.3 348.9 L14.8 348.7 L13.3 348.5 L11.8 348.3 L10.3 348.1 L8.8 347.8 L7.3 347.4 L5.8 346.9 L4.3 346.4 L2.8 345.9 L1.3 345.3 Z" fill="#744e2c"/><path d="M0.5 38.5 H982" stroke="#333" stroke-opacity="0.24" stroke-width="1" stroke-dasharray="6 4.75" fill="none"/><path d="M0.5 99.5 H982" stroke="#333" stroke-opacity="0.24" stroke-width="1" stroke-dasharray="6 4.75" fill="none"/><path d="M0.5 160.5 H982" stroke="#333" stroke-opacity="0.24" stroke-width="1" stroke-dasharray="6 4.75" fill="none"/><path d="M0.5 222.5 H982" stroke="#333" stroke-opacity="0.24" stroke-width="1" stroke-dasharray="6 4.75" fill="none"/><path d="M0.5 283.5 H982" stroke="#333" stroke-opacity="0.24" stroke-width="1" stroke-dasharray="6 4.75" fill="none"/><path d="M1.3 344.8 H982" stroke="#5c5c5c" stroke-width="2" stroke-dasharray="5.5 5.5" fill="none"/><clipPath id="cpNeg"><rect x="1.8" y="0" width="107.0" height="400"/><rect x="331.8" y="0" width="125.0" height="400"/><rect x="658.8" y="0" width="120.5" height="400"/></clipPath><path d="M1.3 344.8 H982" stroke="#9b9b9b" stroke-width="2" stroke-dasharray="5.5 5.5" fill="none" clip-path="url(#cpNeg)"/><text x="6.200000000000003" y="34.1" font-size="11" fill="#222" letter-spacing="0.55" stroke="#fff" stroke-width="2.5" stroke-opacity="0.62" paint-order="stroke" stroke-linejoin="round">25,000</text><text x="6.200000000000003" y="95.4" font-size="11" fill="#222" letter-spacing="0.55" stroke="#fff" stroke-width="2.5" stroke-opacity="0.62" paint-order="stroke" stroke-linejoin="round">20,000</text><text x="6.200000000000003" y="156.6" font-size="11" fill="#222" stroke="#fff" stroke-width="2.5" stroke-opacity="0.62" paint-order="stroke" stroke-linejoin="round">15,000</text><text x="6.200000000000003" y="217.9" font-size="11" fill="#222" stroke="#fff" stroke-width="2.5" stroke-opacity="0.62" paint-order="stroke" stroke-linejoin="round">10,000</text><text x="6.200000000000003" y="279.1" font-size="11" fill="#222" letter-spacing="0.55" stroke="#fff" stroke-width="2.5" stroke-opacity="0.62" paint-order="stroke" stroke-linejoin="round">5,000</text><text x="6.200000000000003" y="340.3" font-size="11" fill="#222" letter-spacing="0.55" stroke="#fff" stroke-width="2.5" stroke-opacity="0.62" paint-order="stroke" stroke-linejoin="round">0</text><path d="M409.8 1 V368.5" stroke="#111" stroke-width="1.3" fill="none"/><text x="236.0" y="379.5" font-size="10.5" fill="#707070">Sat</text><text x="236.0" y="393.0" font-size="10.5" fill="#707070">12 Oct</text><text x="562.9" y="379.5" font-size="10.5" fill="#707070">Sun</text><text x="562.9" y="393.0" font-size="10.5" fill="#707070">13 Oct</text><text x="889.8" y="379.5" font-size="10.5" fill="#707070">Mon</text><text x="889.8" y="393.0" font-size="10.5" fill="#707070">14 Oct</text></svg>
<div class="ham" style="left:50px;top:534.3px"></div>
<div class="ham" style="left:50px;top:538.3px"></div>
<div class="ham" style="left:50px;top:542.3px"></div>
<div class="ct" style="left:74.5px;top:532.5px">Emissions Volume <span>tCO<sub class="s">2</sub>e/30m</span></div>
<div class="tag" style="left:759px;top:528px;width:138px">12 Oct 2024, 1:00 PM</div>
<div class="tot" style="left:897px;top:528px;width:114.5px">Total <b>3,521 tCO<sub class="s">2</sub>e</b></div>
<div class="cbox" style="top:553px;height:265px;"></div>
<svg class="abs" style="left:29px;top:553px" width="984" height="265" viewBox="0 0 984 265" font-family="Liberation Sans, sans-serif"><rect x="205.8" y="1" width="122.4" height="223.0" fill="#f2f2f2"/><rect x="532.6" y="1" width="122.5" height="223.0" fill="#f2f2f2"/><rect x="859.5" y="1" width="122.5" height="223.0" fill="#f2f2f2"/><path d="M233.5 2 V257.0" stroke="#cbcbcb" stroke-width="1" stroke-dasharray="5.3 5.4" fill="none"/><path d="M560.5 2 V257.0" stroke="#cbcbcb" stroke-width="1" stroke-dasharray="5.3 5.4" fill="none"/><path d="M887.5 2 V257.0" stroke="#cbcbcb" stroke-width="1" stroke-dasharray="5.3 5.4" fill="none"/><path d="M1.3 117.9 L2.8 104.0 L4.3 92.8 L5.8 83.5 L7.3 78.8 L8.8 76.9 L10.3 79.2 L11.8 82.7 L13.3 86.0 L14.8 89.6 L16.3 93.3 L17.8 96.8 L19.3 100.1 L20.8 103.5 L22.3 106.6 L23.8 109.4 L25.3 111.5 L26.8 113.3 L28.3 114.7 L29.8 115.5 L31.3 116.0 L32.8 116.4 L34.3 116.7 L35.8 116.9 L37.3 117.0 L38.8 117.0 L40.3 117.1 L41.8 117.1 L43.3 117.2 L44.8 117.2 L46.3 117.3 L47.8 117.5 L49.3 118.0 L50.8 118.5 L52.3 119.1 L53.8 119.6 L55.3 120.0 L56.8 120.5 L58.3 120.9 L59.8 121.3 L61.3 121.5 L62.8 121.6 L64.3 121.5 L65.8 121.4 L67.3 121.2 L68.8 121.2 L70.3 121.4 L71.8 122.1 L73.3 122.9 L74.8 123.6 L76.3 124.2 L77.8 124.5 L79.3 124.8 L80.8 125.1 L82.3 125.3 L83.8 125.4 L85.3 125.5 L86.8 125.3 L88.3 124.9 L89.8 124.4 L91.3 123.8 L92.8 123.0 L94.3 121.9 L95.8 120.8 L97.3 119.8 L98.8 119.0 L100.3 118.4 L101.8 117.9 L103.3 117.3 L104.8 116.6 L106.3 115.9 L107.8 115.1 L109.3 114.1 L110.8 112.9 L112.3 111.4 L113.8 109.4 L115.3 107.2 L116.8 104.9 L118.3 102.9 L119.8 100.8 L121.3 98.6 L122.8 96.2 L124.3 93.4 L125.8 90.1 L127.3 86.3 L128.8 82.2 L130.3 77.9 L131.8 73.3 L133.3 68.2 L134.8 63.0 L136.3 57.8 L137.8 52.7 L139.3 47.4 L140.8 42.2 L142.3 37.5 L143.8 33.4 L145.3 29.8 L146.8 26.7 L148.3 24.4 L149.8 22.5 L151.3 21.2 L152.8 20.6 L154.3 20.1 L155.8 19.8 L157.3 19.5 L158.8 19.3 L160.3 19.1 L161.8 18.9 L163.3 18.8 L164.8 18.7 L166.3 18.6 L167.8 18.5 L169.3 18.5 L170.8 18.8 L172.3 19.2 L173.8 19.7 L175.3 20.2 L176.8 20.7 L178.3 21.2 L179.8 21.8 L181.3 22.3 L182.8 22.9 L184.3 23.4 L185.8 23.9 L187.3 24.3 L188.8 24.8 L190.3 25.3 L191.8 25.8 L193.3 26.3 L194.8 26.9 L196.3 27.5 L197.8 28.1 L199.3 28.8 L200.8 29.4 L202.3 30.0 L203.8 30.6 L205.3 31.2 L206.8 31.8 L208.3 32.4 L209.8 32.9 L211.3 33.4 L212.8 33.8 L214.3 34.1 L215.8 34.3 L217.3 34.6 L218.8 34.9 L220.3 35.2 L221.8 35.9 L223.3 36.7 L224.8 37.7 L226.3 38.7 L227.8 39.5 L229.3 40.2 L230.8 41.0 L232.3 41.7 L233.8 42.4 L235.3 43.2 L236.8 43.9 L238.3 44.7 L239.8 45.4 L241.3 46.2 L242.8 46.9 L244.3 47.7 L245.8 48.4 L247.3 49.2 L248.8 49.9 L250.3 50.7 L251.8 51.4 L253.3 52.2 L254.8 52.9 L256.3 53.7 L257.8 54.6 L259.3 55.4 L260.8 56.0 L262.3 56.4 L263.8 56.8 L265.3 57.1 L266.8 57.3 L268.3 57.6 L269.8 57.8 L271.3 58.0 L272.8 58.3 L274.3 58.5 L275.8 58.6 L277.3 58.8 L278.8 58.9 L280.3 59.0 L281.8 59.1 L283.3 59.2 L284.8 59.3 L286.3 59.3 L287.8 59.2 L289.3 58.5 L290.8 57.6 L292.3 56.6 L293.8 55.9 L295.3 55.3 L296.8 54.8 L298.3 54.4 L299.8 53.9 L301.3 53.5 L302.8 53.0 L304.3 52.5 L305.8 52.1 L307.3 51.8 L308.8 51.8 L310.3 52.1 L311.8 52.8 L313.3 53.8 L314.8 55.0 L316.3 57.6 L317.8 62.0 L319.3 66.7 L320.8 72.5 L322.3 78.6 L323.8 83.2 L325.3 87.0 L326.8 90.1 L328.3 92.7 L329.8 95.0 L331.3 97.1 L332.8 98.9 L334.3 100.4 L335.8 101.5 L337.3 102.5 L338.8 103.4 L340.3 104.3 L341.8 105.3 L343.3 106.3 L344.8 107.3 L346.3 108.3 L347.8 109.3 L349.3 110.4 L350.8 111.5 L352.3 112.5 L353.8 113.2 L355.3 113.8 L356.8 114.4 L358.3 114.8 L359.8 115.1 L361.3 115.2 L362.8 115.0 L364.3 114.7 L365.8 114.4 L367.3 114.2 L368.8 114.1 L370.3 114.3 L371.8 114.8 L373.3 115.5 L374.8 116.1 L376.3 116.7 L377.8 117.1 L379.3 117.5 L380.8 117.8 L382.3 118.1 L383.8 118.5 L385.3 118.8 L386.8 119.0 L388.3 119.3 L389.8 119.5 L391.3 119.8 L392.8 120.0 L394.3 120.3 L395.8 120.7 L397.3 121.1 L398.8 121.6 L400.3 122.1 L401.8 122.8 L403.3 123.7 L404.8 124.7 L406.3 125.6 L407.8 126.4 L409.3 127.0 L410.8 127.4 L412.3 127.8 L413.8 128.1 L415.3 128.3 L416.8 128.5 L418.3 128.5 L419.8 128.5 L421.3 128.5 L422.8 128.5 L424.3 128.5 L425.8 128.5 L427.3 128.4 L428.8 128.2 L430.3 127.9 L431.8 127.4 L433.3 126.8 L434.8 125.8 L436.3 124.6 L437.8 123.1 L439.3 121.4 L440.8 119.4 L442.3 117.2 L443.8 114.9 L445.3 112.2 L446.8 109.3 L448.3 106.2 L449.8 102.9 L451.3 99.3 L452.8 95.5 L454.3 91.4 L455.8 87.1 L457.3 82.6 L458.8 77.7 L460.3 72.6 L461.8 67.4 L463.3 62.5 L464.8 57.5 L466.3 52.6 L467.8 47.9 L469.3 43.5 L470.8 39.2 L472.3 35.0 L473.8 31.2 L475.3 28.0 L476.8 25.5 L478.3 23.3 L479.8 21.3 L481.3 20.0 L482.8 19.4 L484.3 19.1 L485.8 18.9 L487.3 18.7 L488.8 18.6 L490.3 18.5 L491.8 18.5 L493.3 18.5 L494.8 18.5 L496.3 18.5 L497.8 18.5 L499.3 18.5 L500.8 18.7 L502.3 19.5 L503.8 20.4 L505.3 21.4 L506.8 22.1 L508.3 22.9 L509.8 23.6 L511.3 24.4 L512.8 25.2 L514.3 25.9 L515.8 26.7 L517.3 27.5 L518.8 28.3 L520.3 29.2 L521.8 30.2 L523.3 31.3 L524.8 32.4 L526.3 33.7 L527.8 35.0 L529.3 36.4 L530.8 38.0 L532.3 39.6 L533.8 41.0 L535.3 42.3 L536.8 43.5 L538.3 44.7 L539.8 45.8 L541.3 46.8 L542.8 47.7 L544.3 48.4 L545.8 49.1 L547.3 49.7 L548.8 50.3 L550.3 50.9 L551.8 51.4 L553.3 51.9 L554.8 52.4 L556.3 52.9 L557.8 53.3 L559.3 53.8 L560.8 54.4 L562.3 55.0 L563.8 55.6 L565.3 56.2 L566.8 56.7 L568.3 57.2 L569.8 57.6 L571.3 58.1 L572.8 58.5 L574.3 58.7 L575.8 58.6 L577.3 58.5 L578.8 58.4 L580.3 58.2 L581.8 58.3 L583.3 59.0 L584.8 60.1 L586.3 61.0 L587.8 61.5 L589.3 61.6 L590.8 61.7 L592.3 61.8 L593.8 61.9 L595.3 62.0 L596.8 62.2 L598.3 62.5 L599.8 63.0 L601.3 63.5 L602.8 64.1 L604.3 64.5 L605.8 65.0 L607.3 65.4 L608.8 65.7 L610.3 66.1 L611.8 66.5 L613.3 66.9 L614.8 67.3 L616.3 67.7 L617.8 68.2 L619.3 68.8 L620.8 69.3 L622.3 69.9 L623.8 70.4 L625.3 70.9 L626.8 71.4 L628.3 71.8 L629.8 72.3 L631.3 72.8 L632.8 73.3 L634.3 73.8 L635.8 74.3 L637.3 74.9 L638.8 75.5 L640.3 76.3 L641.8 77.3 L643.3 79.0 L644.8 81.9 L646.3 85.3 L647.8 88.7 L649.3 91.5 L650.8 94.3 L652.3 97.1 L653.8 99.8 L655.3 102.4 L656.8 105.1 L658.3 107.8 L659.8 110.3 L661.3 112.6 L662.8 114.4 L664.3 116.1 L665.8 117.6 L667.3 119.0 L668.8 120.2 L670.3 121.3 L671.8 122.3 L673.3 123.2 L674.8 123.9 L676.3 124.4 L677.8 125.0 L679.3 125.4 L680.8 125.8 L682.3 126.1 L683.8 126.4 L685.3 126.5 L686.8 126.6 L688.3 126.7 L689.8 126.7 L691.3 126.8 L692.8 126.8 L694.3 126.9 L695.8 126.9 L697.3 126.9 L698.8 126.8 L700.3 126.7 L701.8 126.6 L703.3 126.6 L704.8 126.5 L706.3 126.4 L707.8 126.5 L709.3 127.1 L710.8 128.2 L712.3 129.4 L713.8 130.2 L715.3 130.5 L716.8 130.7 L718.3 130.9 L719.8 131.0 L721.3 131.1 L722.8 131.4 L724.3 131.7 L725.8 132.2 L727.3 132.8 L728.8 133.3 L730.3 133.8 L731.8 134.1 L733.3 134.4 L734.8 134.7 L736.3 134.8 L737.8 134.8 L739.3 134.5 L740.8 133.9 L742.3 133.2 L743.8 132.6 L745.3 132.0 L746.8 131.3 L748.3 130.5 L749.8 129.7 L751.3 128.7 L752.8 127.4 L754.3 126.0 L755.8 124.6 L757.3 123.6 L758.8 123.0 L760.3 122.6 L761.8 122.2 L763.3 121.7 L764.8 120.8 L766.3 118.6 L767.8 115.5 L769.3 112.3 L770.8 108.7 L772.3 104.6 L773.8 100.3 L775.3 96.1 L776.8 92.1 L778.3 88.3 L779.8 84.4 L781.3 80.3 L782.8 76.0 L784.3 71.2 L785.8 66.1 L787.3 60.9 L788.8 55.9 L790.3 51.0 L791.8 46.0 L793.3 41.2 L794.8 36.8 L796.3 33.3 L797.8 30.5 L799.3 27.9 L800.8 25.8 L802.3 24.0 L803.8 22.5 L805.3 21.3 L806.8 20.2 L808.3 19.4 L809.8 18.7 L811.3 18.1 L812.8 17.6 L814.3 17.1 L815.8 16.7 L817.3 16.5 L818.8 16.4 L820.3 16.4 L821.8 16.5 L823.3 16.7 L824.8 16.9 L826.3 17.2 L827.8 17.4 L829.3 17.8 L830.8 18.2 L832.3 18.8 L833.8 19.5 L835.3 20.1 L836.8 20.7 L838.3 21.4 L839.8 22.0 L841.3 22.6 L842.8 23.2 L844.3 23.9 L845.8 24.6 L847.3 25.2 L848.8 25.9 L850.3 26.6 L851.8 27.4 L853.3 28.0 L854.8 28.6 L856.3 29.2 L857.8 29.7 L859.3 30.1 L860.8 30.6 L862.3 31.0 L863.8 31.4 L865.3 31.8 L866.8 32.3 L868.3 32.8 L869.8 33.3 L871.3 33.8 L872.8 34.3 L874.3 34.8 L875.8 35.3 L877.3 35.9 L878.8 36.4 L880.3 36.9 L881.8 37.5 L883.3 38.0 L884.8 38.6 L886.3 39.1 L887.8 39.7 L889.3 40.2 L890.8 40.7 L892.3 41.2 L893.8 41.6 L895.3 42.1 L896.8 42.6 L898.3 43.0 L899.8 43.4 L901.3 43.8 L902.8 44.2 L904.3 44.6 L905.8 45.0 L907.3 45.3 L908.8 45.6 L910.3 45.9 L911.8 46.0 L913.3 46.0 L914.8 45.9 L916.3 45.9 L917.8 45.8 L919.3 45.7 L920.8 45.6 L922.3 45.6 L923.8 45.5 L925.3 45.6 L926.8 45.7 L928.3 45.9 L929.8 46.1 L931.3 46.4 L932.8 46.5 L934.3 46.7 L935.8 46.7 L937.3 46.5 L938.8 46.2 L940.3 45.8 L941.8 45.4 L943.3 44.7 L944.8 43.7 L946.3 42.5 L947.8 41.4 L949.3 40.5 L950.8 39.8 L952.3 39.2 L953.8 38.6 L955.3 38.1 L956.8 37.8 L958.3 37.5 L959.8 37.3 L961.3 37.1 L962.8 36.8 L964.3 36.3 L965.8 35.8 L967.3 35.4 L968.8 35.3 L970.3 35.5 L971.8 35.9 L973.3 36.5 L974.8 38.0 L976.3 42.9 L977.8 63.9 L979.3 90.1 L982.0 131.4 L982.0 131.9 L979.3 90.8 L977.8 64.9 L976.3 44.2 L974.8 39.5 L973.3 38.2 L971.8 37.7 L970.3 37.3 L968.8 37.2 L967.3 37.3 L965.8 37.7 L964.3 38.2 L962.8 38.6 L961.3 38.8 L959.8 39.0 L958.3 39.1 L956.8 39.3 L955.3 39.6 L953.8 40.0 L952.3 40.5 L950.8 41.2 L949.3 41.9 L947.8 42.7 L946.3 43.8 L944.8 45.0 L943.3 46.1 L941.8 46.7 L940.3 47.1 L938.8 47.5 L937.3 47.7 L935.8 47.9 L934.3 47.9 L932.8 47.8 L931.3 47.6 L929.8 47.4 L928.3 47.2 L926.8 47.0 L925.3 46.9 L923.8 46.8 L922.3 46.9 L920.8 46.9 L919.3 47.0 L917.8 47.1 L916.3 47.2 L914.8 47.2 L913.3 47.3 L911.8 47.3 L910.3 47.1 L908.8 46.9 L907.3 46.5 L905.8 46.1 L904.3 45.7 L902.8 45.2 L901.3 44.8 L899.8 44.4 L898.3 44.0 L896.8 43.5 L895.3 43.0 L893.8 42.5 L892.3 42.0 L890.8 41.5 L889.3 41.0 L887.8 40.5 L886.3 40.0 L884.8 39.5 L883.3 39.0 L881.8 38.4 L880.3 37.9 L878.8 37.5 L877.3 37.0 L875.8 36.6 L874.3 36.2 L872.8 35.8 L871.3 35.4 L869.8 35.0 L868.3 34.7 L866.8 34.3 L865.3 33.9 L863.8 33.6 L862.3 33.3 L860.8 33.0 L859.3 32.7 L857.8 32.3 L856.3 32.0 L854.8 31.6 L853.3 31.2 L851.8 30.7 L850.3 30.2 L848.8 29.7 L847.3 29.3 L845.8 28.8 L844.3 28.3 L842.8 27.7 L841.3 27.2 L839.8 26.6 L838.3 26.1 L836.8 25.5 L835.3 25.0 L833.8 24.4 L832.3 23.9 L830.8 23.4 L829.3 23.0 L827.8 22.6 L826.3 22.3 L824.8 22.0 L823.3 21.8 L821.8 21.6 L820.3 21.4 L818.8 21.4 L817.3 21.5 L815.8 21.6 L814.3 21.9 L812.8 22.2 L811.3 22.6 L809.8 23.0 L808.3 23.5 L806.8 24.2 L805.3 25.1 L803.8 26.1 L802.3 27.3 L800.8 28.9 L799.3 30.9 L797.8 33.3 L796.3 35.9 L794.8 39.2 L793.3 43.4 L791.8 48.0 L790.3 52.8 L788.8 57.5 L787.3 62.5 L785.8 67.6 L784.3 72.6 L782.8 77.3 L781.3 81.6 L779.8 85.5 L778.3 89.3 L776.8 93.0 L775.3 97.0 L773.8 101.2 L772.3 105.5 L770.8 109.6 L769.3 113.2 L767.8 116.4 L766.3 119.4 L764.8 121.5 L763.3 122.4 L761.8 122.9 L760.3 123.3 L758.8 123.6 L757.3 124.3 L755.8 125.3 L754.3 126.7 L752.8 128.1 L751.3 129.4 L749.8 130.4 L748.3 131.2 L746.8 131.9 L745.3 132.6 L743.8 133.2 L742.3 133.8 L740.8 134.5 L739.3 135.1 L737.8 135.4 L736.3 135.4 L734.8 135.3 L733.3 135.0 L731.8 134.7 L730.3 134.4 L728.8 133.9 L727.3 133.4 L725.8 132.8 L724.3 132.4 L722.8 132.0 L721.3 131.9 L719.8 131.7 L718.3 131.6 L716.8 131.5 L715.3 131.3 L713.8 131.0 L712.3 130.2 L710.8 129.0 L709.3 127.9 L707.8 127.2 L706.3 127.2 L704.8 127.3 L703.3 127.3 L701.8 127.4 L700.3 127.5 L698.8 127.6 L697.3 127.6 L695.8 127.7 L694.3 127.6 L692.8 127.6 L691.3 127.6 L689.8 127.5 L688.3 127.4 L686.8 127.4 L685.3 127.3 L683.8 127.1 L682.3 126.9 L680.8 126.6 L679.3 126.2 L677.8 125.8 L676.3 125.3 L674.8 124.8 L673.3 124.0 L671.8 123.2 L670.3 122.1 L668.8 121.0 L667.3 119.9 L665.8 118.5 L664.3 117.0 L662.8 115.3 L661.3 113.4 L659.8 111.2 L658.3 108.7 L656.8 106.0 L655.3 103.3 L653.8 100.7 L652.3 98.0 L650.8 95.2 L649.3 92.4 L647.8 89.5 L646.3 86.2 L644.8 82.7 L643.3 79.9 L641.8 78.2 L640.3 77.2 L638.8 76.4 L637.3 75.7 L635.8 75.2 L634.3 74.6 L632.8 74.1 L631.3 73.6 L629.8 73.1 L628.3 72.7 L626.8 72.2 L625.3 71.7 L623.8 71.2 L622.3 70.7 L620.8 70.1 L619.3 69.6 L617.8 69.0 L616.3 68.5 L614.8 68.1 L613.3 67.7 L611.8 67.3 L610.3 66.9 L608.8 66.5 L607.3 66.2 L605.8 65.8 L604.3 65.4 L602.8 64.9 L601.3 64.3 L599.8 63.8 L598.3 63.4 L596.8 63.0 L595.3 62.8 L593.8 62.7 L592.3 62.6 L590.8 62.6 L589.3 62.5 L587.8 62.3 L586.3 61.8 L584.8 60.9 L583.3 59.8 L581.8 59.1 L580.3 59.1 L578.8 59.2 L577.3 59.3 L575.8 59.4 L574.3 59.5 L572.8 59.3 L571.3 59.0 L569.8 58.6 L568.3 58.2 L566.8 57.7 L565.3 57.2 L563.8 56.6 L562.3 56.0 L560.8 55.4 L559.3 54.9 L557.8 54.4 L556.3 53.9 L554.8 53.5 L553.3 53.0 L551.8 52.5 L550.3 51.9 L548.8 51.4 L547.3 50.8 L545.8 50.3 L544.3 49.6 L542.8 48.9 L541.3 48.1 L539.8 47.1 L538.3 46.0 L536.8 44.9 L535.3 43.6 L533.8 42.4 L532.3 41.0 L530.8 39.5 L529.3 38.0 L527.8 36.6 L526.3 35.3 L524.8 34.1 L523.3 33.0 L521.8 32.0 L520.3 31.2 L518.8 30.4 L517.3 29.7 L515.8 29.0 L514.3 28.4 L512.8 27.7 L511.3 27.1 L509.8 26.5 L508.3 25.9 L506.8 25.3 L505.3 24.7 L503.8 24.1 L502.3 23.4 L500.8 22.9 L499.3 22.7 L497.8 22.8 L496.3 22.8 L494.8 22.9 L493.3 23.1 L491.8 23.2 L490.3 23.3 L488.8 23.4 L487.3 23.5 L485.8 23.7 L484.3 23.9 L482.8 24.2 L481.3 24.7 L479.8 25.7 L478.3 27.3 L476.8 29.1 L475.3 31.1 L473.8 34.0 L472.3 37.5 L470.8 41.5 L469.3 45.5 L467.8 49.7 L466.3 54.2 L464.8 58.9 L463.3 63.7 L461.8 68.6 L460.3 73.8 L458.8 79.0 L457.3 83.9 L455.8 88.3 L454.3 92.5 L452.8 96.5 L451.3 100.2 L449.8 103.7 L448.3 107.0 L446.8 110.2 L445.3 113.1 L443.8 115.7 L442.3 118.0 L440.8 120.2 L439.3 122.1 L437.8 123.8 L436.3 125.2 L434.8 126.4 L433.3 127.4 L431.8 128.0 L430.3 128.5 L428.8 128.9 L427.3 129.1 L425.8 129.1 L424.3 129.1 L422.8 129.1 L421.3 129.1 L419.8 129.1 L418.3 129.1 L416.8 129.1 L415.3 129.0 L413.8 128.7 L412.3 128.4 L410.8 128.0 L409.3 127.6 L407.8 127.0 L406.3 126.2 L404.8 125.2 L403.3 124.2 L401.8 123.3 L400.3 122.7 L398.8 122.2 L397.3 121.7 L395.8 121.3 L394.3 121.0 L392.8 120.7 L391.3 120.4 L389.8 120.2 L388.3 119.9 L386.8 119.7 L385.3 119.4 L383.8 119.1 L382.3 118.8 L380.8 118.5 L379.3 118.1 L377.8 117.7 L376.3 117.3 L374.8 116.8 L373.3 116.2 L371.8 115.6 L370.3 115.1 L368.8 114.9 L367.3 115.0 L365.8 115.2 L364.3 115.5 L362.8 115.8 L361.3 116.0 L359.8 115.9 L358.3 115.6 L356.8 115.1 L355.3 114.5 L353.8 113.9 L352.3 113.1 L350.8 112.2 L349.3 111.1 L347.8 110.0 L346.3 109.0 L344.8 108.0 L343.3 107.0 L341.8 106.0 L340.3 105.0 L338.8 104.0 L337.3 103.1 L335.8 102.2 L334.3 101.0 L332.8 99.6 L331.3 97.8 L329.8 95.8 L328.3 93.5 L326.8 90.9 L325.3 87.8 L323.8 84.1 L322.3 79.4 L320.8 73.3 L319.3 67.5 L317.8 62.8 L316.3 58.4 L314.8 55.8 L313.3 54.6 L311.8 53.7 L310.3 53.0 L308.8 52.7 L307.3 52.7 L305.8 53.0 L304.3 53.4 L302.8 53.9 L301.3 54.4 L299.8 54.8 L298.3 55.3 L296.8 55.7 L295.3 56.2 L293.8 56.7 L292.3 57.4 L290.8 58.4 L289.3 59.3 L287.8 60.0 L286.3 60.1 L284.8 60.1 L283.3 60.0 L281.8 59.9 L280.3 59.8 L278.8 59.7 L277.3 59.6 L275.8 59.5 L274.3 59.3 L272.8 59.1 L271.3 58.9 L269.8 58.6 L268.3 58.4 L266.8 58.2 L265.3 57.9 L263.8 57.6 L262.3 57.2 L260.8 56.8 L259.3 56.1 L257.8 55.3 L256.3 54.4 L254.8 53.6 L253.3 52.9 L251.8 52.2 L250.3 51.5 L248.8 50.8 L247.3 50.1 L245.8 49.4 L244.3 48.7 L242.8 48.0 L241.3 47.4 L239.8 46.7 L238.3 46.0 L236.8 45.3 L235.3 44.6 L233.8 43.9 L232.3 43.1 L230.8 42.4 L229.3 41.7 L227.8 40.9 L226.3 40.1 L224.8 39.2 L223.3 38.2 L221.8 37.4 L220.3 36.9 L218.8 36.7 L217.3 36.5 L215.8 36.5 L214.3 36.4 L212.8 36.3 L211.3 36.1 L209.8 35.7 L208.3 35.2 L206.8 34.6 L205.3 34.0 L203.8 33.4 L202.3 32.9 L200.8 32.4 L199.3 31.9 L197.8 31.3 L196.3 30.8 L194.8 30.3 L193.3 29.8 L191.8 29.3 L190.3 28.8 L188.8 28.3 L187.3 27.8 L185.8 27.3 L184.3 26.9 L182.8 26.4 L181.3 26.0 L179.8 25.6 L178.3 25.1 L176.8 24.7 L175.3 24.3 L173.8 23.9 L172.3 23.4 L170.8 23.0 L169.3 22.8 L167.8 22.7 L166.3 22.8 L164.8 23.0 L163.3 23.2 L161.8 23.3 L160.3 23.5 L158.8 23.7 L157.3 23.8 L155.8 24.0 L154.3 24.3 L152.8 24.6 L151.3 25.1 L149.8 26.0 L148.3 27.6 L146.8 29.5 L145.3 32.3 L143.8 35.9 L142.3 39.8 L140.8 44.4 L139.3 49.3 L137.8 54.5 L136.3 59.4 L134.8 64.5 L133.3 69.6 L131.8 74.6 L130.3 79.2 L128.8 83.4 L127.3 87.4 L125.8 91.2 L124.3 94.5 L122.8 97.2 L121.3 99.6 L119.8 101.7 L118.3 103.7 L116.8 105.8 L115.3 107.9 L113.8 110.1 L112.3 112.1 L110.8 113.6 L109.3 114.7 L107.8 115.7 L106.3 116.5 L104.8 117.3 L103.3 118.0 L101.8 118.5 L100.3 119.1 L98.8 119.7 L97.3 120.4 L95.8 121.4 L94.3 122.6 L92.8 123.7 L91.3 124.4 L89.8 125.0 L88.3 125.5 L86.8 125.9 L85.3 126.1 L83.8 126.1 L82.3 126.0 L80.8 125.7 L79.3 125.5 L77.8 125.2 L76.3 124.8 L74.8 124.3 L73.3 123.5 L71.8 122.7 L70.3 122.1 L68.8 121.8 L67.3 121.9 L65.8 122.1 L64.3 122.3 L62.8 122.4 L61.3 122.4 L59.8 122.1 L58.3 121.7 L56.8 121.3 L55.3 120.8 L53.8 120.4 L52.3 119.9 L50.8 119.3 L49.3 118.8 L47.8 118.4 L46.3 118.1 L44.8 118.0 L43.3 118.0 L41.8 117.9 L40.3 117.9 L38.8 117.9 L37.3 117.8 L35.8 117.7 L34.3 117.6 L32.8 117.3 L31.3 116.8 L29.8 116.3 L28.3 115.5 L26.8 114.2 L25.3 112.4 L23.8 110.2 L22.3 107.5 L20.8 104.3 L19.3 100.9 L17.8 97.6 L16.3 94.1 L14.8 90.4 L13.3 86.8 L11.8 83.6 L10.3 80.1 L8.8 78.0 L7.3 79.7 L5.8 84.3 L4.3 93.6 L2.8 104.8 L1.3 118.4 Z" fill="#f8c88f"/><path d="M1.3 118.4 L2.8 104.8 L4.3 93.6 L5.8 84.3 L7.3 79.7 L8.8 78.0 L10.3 80.1 L11.8 83.6 L13.3 86.8 L14.8 90.4 L16.3 94.1 L17.8 97.6 L19.3 100.9 L20.8 104.3 L22.3 107.5 L23.8 110.2 L25.3 112.4 L26.8 114.2 L28.3 115.5 L29.8 116.3 L31.3 116.8 L32.8 117.3 L34.3 117.6 L35.8 117.7 L37.3 117.8 L38.8 117.9 L40.3 117.9 L41.8 117.9 L43.3 118.0 L44.8 118.0 L46.3 118.1 L47.8 118.4 L49.3 118.8 L50.8 119.3 L52.3 119.9 L53.8 120.4 L55.3 120.8 L56.8 121.3 L58.3 121.7 L59.8 122.1 L61.3 122.4 L62.8 122.4 L64.3 122.3 L65.8 122.1 L67.3 121.9 L68.8 121.8 L70.3 122.1 L71.8 122.7 L73.3 123.5 L74.8 124.3 L76.3 124.8 L77.8 125.2 L79.3 125.5 L80.8 125.7 L82.3 126.0 L83.8 126.1 L85.3 126.1 L86.8 125.9 L88.3 125.5 L89.8 125.0 L91.3 124.4 L92.8 123.7 L94.3 122.6 L95.8 121.4 L97.3 120.4 L98.8 119.7 L100.3 119.1 L101.8 118.5 L103.3 118.0 L104.8 117.3 L106.3 116.5 L107.8 115.7 L109.3 114.7 L110.8 113.6 L112.3 112.1 L113.8 110.1 L115.3 107.9 L116.8 105.8 L118.3 103.7 L119.8 101.7 L121.3 99.6 L122.8 97.2 L124.3 94.5 L125.8 91.2 L127.3 87.4 L128.8 83.4 L130.3 79.2 L131.8 74.6 L133.3 69.6 L134.8 64.5 L136.3 59.4 L137.8 54.5 L139.3 49.3 L140.8 44.4 L142.3 39.8 L143.8 35.9 L145.3 32.3 L146.8 29.5 L148.3 27.6 L149.8 26.0 L151.3 25.1 L152.8 24.6 L154.3 24.3 L155.8 24.0 L157.3 23.8 L158.8 23.7 L160.3 23.5 L161.8 23.3 L163.3 23.2 L164.8 23.0 L166.3 22.8 L167.8 22.7 L169.3 22.8 L170.8 23.0 L172.3 23.4 L173.8 23.9 L175.3 24.3 L176.8 24.7 L178.3 25.1 L179.8 25.6 L181.3 26.0 L182.8 26.4 L184.3 26.9 L185.8 27.3 L187.3 27.8 L188.8 28.3 L190.3 28.8 L191.8 29.3 L193.3 29.8 L194.8 30.3 L196.3 30.8 L197.8 31.3 L199.3 31.9 L200.8 32.4 L202.3 32.9 L203.8 33.4 L205.3 34.0 L206.8 34.6 L208.3 35.2 L209.8 35.7 L211.3 36.1 L212.8 36.3 L214.3 36.4 L215.8 36.5 L217.3 36.5 L218.8 36.7 L220.3 36.9 L221.8 37.4 L223.3 38.2 L224.8 39.2 L226.3 40.1 L227.8 40.9 L229.3 41.7 L230.8 42.4 L232.3 43.1 L233.8 43.9 L235.3 44.6 L236.8 45.3 L238.3 46.0 L239.8 46.7 L241.3 47.4 L242.8 48.0 L244.3 48.7 L245.8 49.4 L247.3 50.1 L248.8 50.8 L250.3 51.5 L251.8 52.2 L253.3 52.9 L254.8 53.6 L256.3 54.4 L257.8 55.3 L259.3 56.1 L260.8 56.8 L262.3 57.2 L263.8 57.6 L265.3 57.9 L266.8 58.2 L268.3 58.4 L269.8 58.6 L271.3 58.9 L272.8 59.1 L274.3 59.3 L275.8 59.5 L277.3 59.6 L278.8 59.7 L280.3 59.8 L281.8 59.9 L283.3 60.0 L284.8 60.1 L286.3 60.1 L287.8 60.0 L289.3 59.3 L290.8 58.4 L292.3 57.4 L293.8 56.7 L295.3 56.2 L296.8 55.7 L298.3 55.3 L299.8 54.8 L301.3 54.4 L302.8 53.9 L304.3 53.4 L305.8 53.0 L307.3 52.7 L308.8 52.7 L310.3 53.0 L311.8 53.7 L313.3 54.6 L314.8 55.8 L316.3 58.4 L317.8 62.8 L319.3 67.5 L320.8 73.3 L322.3 79.4 L323.8 84.1 L325.3 87.8 L326.8 90.9 L328.3 93.5 L329.8 95.8 L331.3 97.8 L332.8 99.6 L334.3 101.0 L335.8 102.2 L337.3 103.1 L338.8 104.0 L340.3 105.0 L341.8 106.0 L343.3 107.0 L344.8 108.0 L346.3 109.0 L347.8 110.0 L349.3 111.1 L350.8 112.2 L352.3 113.1 L353.8 113.9 L355.3 114.5 L356.8 115.1 L358.3 115.6 L359.8 115.9 L361.3 116.0 L362.8 115.8 L364.3 115.5 L365.8 115.2 L367.3 115.0 L368.8 114.9 L370.3 115.1 L371.8 115.6 L373.3 116.2 L374.8 116.8 L376.3 117.3 L377.8 117.7 L379.3 118.1 L380.8 118.5 L382.3 118.8 L383.8 119.1 L385.3 119.4 L386.8 119.7 L388.3 119.9 L389.8 120.2 L391.3 120.4 L392.8 120.7 L394.3 121.0 L395.8 121.3 L397.3 121.7 L398.8 122.2 L400.3 122.7 L401.8 123.3 L403.3 124.2 L404.8 125.2 L406.3 126.2 L407.8 127.0 L409.3 127.6 L410.8 128.0 L412.3 128.4 L413.8 128.7 L415.3 129.0 L416.8 129.1 L418.3 129.1 L419.8 129.1 L421.3 129.1 L422.8 129.1 L424.3 129.1 L425.8 129.1 L427.3 129.1 L428.8 128.9 L430.3 128.5 L431.8 128.0 L433.3 127.4 L434.8 126.4 L436.3 125.2 L437.8 123.8 L439.3 122.1 L440.8 120.2 L442.3 118.0 L443.8 115.7 L445.3 113.1 L446.8 110.2 L448.3 107.0 L449.8 103.7 L451.3 100.2 L452.8 96.5 L454.3 92.5 L455.8 88.3 L457.3 83.9 L458.8 79.0 L460.3 73.8 L461.8 68.6 L463.3 63.7 L464.8 58.9 L466.3 54.2 L467.8 49.7 L469.3 45.5 L470.8 41.5 L472.3 37.5 L473.8 34.0 L475.3 31.1 L476.8 29.1 L478.3 27.3 L479.8 25.7 L481.3 24.7 L482.8 24.2 L484.3 23.9 L485.8 23.7 L487.3 23.5 L488.8 23.4 L490.3 23.3 L491.8 23.2 L493.3 23.1 L494.8 22.9 L496.3 22.8 L497.8 22.8 L499.3 22.7 L500.8 22.9 L502.3 23.4 L503.8 24.1 L505.3 24.7 L506.8 25.3 L508.3 25.9 L509.8 26.5 L511.3 27.1 L512.8 27.7 L514.3 28.4 L515.8 29.0 L517.3 29.7 L518.8 30.4 L520.3 31.2 L521.8 32.0 L523.3 33.0 L524.8 34.1 L526.3 35.3 L527.8 36.6 L529.3 38.0 L530.8 39.5 L532.3 41.0 L533.8 42.4 L535.3 43.6 L536.8 44.9 L538.3 46.0 L539.8 47.1 L541.3 48.1 L542.8 48.9 L544.3 49.6 L545.8 50.3 L547.3 50.8 L548.8 51.4 L550.3 51.9 L551.8 52.5 L553.3 53.0 L554.8 53.5 L556.3 53.9 L557.8 54.4 L559.3 54.9 L560.8 55.4 L562.3 56.0 L563.8 56.6 L565.3 57.2 L566.8 57.7 L568.3 58.2 L569.8 58.6 L571.3 59.0 L572.8 59.3 L574.3 59.5 L575.8 59.4 L577.3 59.3 L578.8 59.2 L580.3 59.1 L581.8 59.1 L583.3 59.8 L584.8 60.9 L586.3 61.8 L587.8 62.3 L589.3 62.5 L590.8 62.6 L592.3 62.6 L593.8 62.7 L595.3 62.8 L596.8 63.0 L598.3 63.4 L599.8 63.8 L601.3 64.3 L602.8 64.9 L604.3 65.4 L605.8 65.8 L607.3 66.2 L608.8 66.5 L610.3 66.9 L611.8 67.3 L613.3 67.7 L614.8 68.1 L616.3 68.5 L617.8 69.0 L619.3 69.6 L620.8 70.1 L622.3 70.7 L623.8 71.2 L625.3 71.7 L626.8 72.2 L628.3 72.7 L629.8 73.1 L631.3 73.6 L632.8 74.1 L634.3 74.6 L635.8 75.2 L637.3 75.7 L638.8 76.4 L640.3 77.2 L641.8 78.2 L643.3 79.9 L644.8 82.7 L646.3 86.2 L647.8 89.5 L649.3 92.4 L650.8 95.2 L652.3 98.0 L653.8 100.7 L655.3 103.3 L656.8 106.0 L658.3 108.7 L659.8 111.2 L661.3 113.4 L662.8 115.3 L664.3 117.0 L665.8 118.5 L667.3 119.9 L668.8 121.0 L670.3 122.1 L671.8 123.2 L673.3 124.0 L674.8 124.8 L676.3 125.3 L677.8 125.8 L679.3 126.2 L680.8 126.6 L682.3 126.9 L683.8 127.1 L685.3 127.3 L686.8 127.4 L688.3 127.4 L689.8 127.5 L691.3 127.6 L692.8 127.6 L694.3 127.6 L695.8 127.7 L697.3 127.6 L698.8 127.6 L700.3 127.5 L701.8 127.4 L703.3 127.3 L704.8 127.3 L706.3 127.2 L707.8 127.2 L709.3 127.9 L710.8 129.0 L712.3 130.2 L713.8 131.0 L715.3 131.3 L716.8 131.5 L718.3 131.6 L719.8 131.7 L721.3 131.9 L722.8 132.0 L724.3 132.4 L725.8 132.8 L727.3 133.4 L728.8 133.9 L730.3 134.4 L731.8 134.7 L733.3 135.0 L734.8 135.3 L736.3 135.4 L737.8 135.4 L739.3 135.1 L740.8 134.5 L742.3 133.8 L743.8 133.2 L745.3 132.6 L746.8 131.9 L748.3 131.2 L749.8 130.4 L751.3 129.4 L752.8 128.1 L754.3 126.7 L755.8 125.3 L757.3 124.3 L758.8 123.6 L760.3 123.3 L761.8 122.9 L763.3 122.4 L764.8 121.5 L766.3 119.4 L767.8 116.4 L769.3 113.2 L770.8 109.6 L772.3 105.5 L773.8 101.2 L775.3 97.0 L776.8 93.0 L778.3 89.3 L779.8 85.5 L781.3 81.6 L782.8 77.3 L784.3 72.6 L785.8 67.6 L787.3 62.5 L788.8 57.5 L790.3 52.8 L791.8 48.0 L793.3 43.4 L794.8 39.2 L796.3 35.9 L797.8 33.3 L799.3 30.9 L800.8 28.9 L802.3 27.3 L803.8 26.1 L805.3 25.1 L806.8 24.2 L808.3 23.5 L809.8 23.0 L811.3 22.6 L812.8 22.2 L814.3 21.9 L815.8 21.6 L817.3 21.5 L818.8 21.4 L820.3 21.4 L821.8 21.6 L823.3 21.8 L824.8 22.0 L826.3 22.3 L827.8 22.6 L829.3 23.0 L830.8 23.4 L832.3 23.9 L833.8 24.4 L835.3 25.0 L836.8 25.5 L838.3 26.1 L839.8 26.6 L841.3 27.2 L842.8 27.7 L844.3 28.3 L845.8 28.8 L847.3 29.3 L848.8 29.7 L850.3 30.2 L851.8 30.7 L853.3 31.2 L854.8 31.6 L856.3 32.0 L857.8 32.3 L859.3 32.7 L860.8 33.0 L862.3 33.3 L863.8 33.6 L865.3 33.9 L866.8 34.3 L868.3 34.7 L869.8 35.0 L871.3 35.4 L872.8 35.8 L874.3 36.2 L875.8 36.6 L877.3 37.0 L878.8 37.5 L880.3 37.9 L881.8 38.4 L883.3 39.0 L884.8 39.5 L886.3 40.0 L887.8 40.5 L889.3 41.0 L890.8 41.5 L892.3 42.0 L893.8 42.5 L895.3 43.0 L896.8 43.5 L898.3 44.0 L899.8 44.4 L901.3 44.8 L902.8 45.2 L904.3 45.7 L905.8 46.1 L907.3 46.5 L908.8 46.9 L910.3 47.1 L911.8 47.3 L913.3 47.3 L914.8 47.2 L916.3 47.2 L917.8 47.1 L919.3 47.0 L920.8 46.9 L922.3 46.9 L923.8 46.8 L925.3 46.9 L926.8 47.0 L928.3 47.2 L929.8 47.4 L931.3 47.6 L932.8 47.8 L934.3 47.9 L935.8 47.9 L937.3 47.7 L938.8 47.5 L940.3 47.1 L941.8 46.7 L943.3 46.1 L944.8 45.0 L946.3 43.8 L947.8 42.7 L949.3 41.9 L950.8 41.2 L952.3 40.5 L953.8 40.0 L955.3 39.6 L956.8 39.3 L958.3 39.1 L959.8 39.0 L961.3 38.8 L962.8 38.6 L964.3 38.2 L965.8 37.7 L967.3 37.3 L968.8 37.2 L970.3 37.3 L971.8 37.7 L973.3 38.2 L974.8 39.5 L976.3 44.2 L977.8 64.9 L979.3 90.8 L982.0 131.9 L982.0 133.1 L979.3 92.5 L977.8 67.0 L976.3 46.8 L974.8 42.4 L973.3 41.3 L971.8 41.0 L970.3 40.9 L968.8 40.8 L967.3 40.9 L965.8 41.2 L964.3 41.6 L962.8 41.9 L961.3 42.0 L959.8 42.1 L958.3 42.2 L956.8 42.3 L955.3 42.4 L953.8 42.8 L952.3 43.2 L950.8 43.8 L949.3 44.5 L947.8 45.3 L946.3 46.4 L944.8 47.6 L943.3 48.7 L941.8 49.3 L940.3 49.7 L938.8 50.0 L937.3 50.2 L935.8 50.4 L934.3 50.3 L932.8 50.3 L931.3 50.1 L929.8 49.9 L928.3 49.8 L926.8 49.6 L925.3 49.5 L923.8 49.5 L922.3 49.5 L920.8 49.5 L919.3 49.6 L917.8 49.7 L916.3 49.8 L914.8 49.9 L913.3 49.9 L911.8 49.9 L910.3 49.7 L908.8 49.4 L907.3 49.0 L905.8 48.5 L904.3 48.0 L902.8 47.5 L901.3 47.0 L899.8 46.6 L898.3 46.1 L896.8 45.6 L895.3 45.0 L893.8 44.5 L892.3 44.0 L890.8 43.4 L889.3 43.0 L887.8 42.5 L886.3 42.0 L884.8 41.5 L883.3 41.0 L881.8 40.5 L880.3 40.1 L878.8 39.8 L877.3 39.5 L875.8 39.2 L874.3 39.0 L872.8 38.8 L871.3 38.6 L869.8 38.4 L868.3 38.2 L866.8 38.1 L865.3 37.9 L863.8 37.7 L862.3 37.6 L860.8 37.4 L859.3 37.3 L857.8 37.1 L856.3 37.0 L854.8 36.9 L853.3 36.8 L851.8 36.7 L850.3 36.6 L848.8 36.5 L847.3 36.3 L845.8 36.2 L844.3 35.9 L842.8 35.5 L841.3 35.1 L839.8 34.7 L838.3 34.2 L836.8 33.8 L835.3 33.5 L833.8 33.1 L832.3 32.7 L830.8 32.3 L829.3 31.9 L827.8 31.6 L826.3 31.3 L824.8 30.9 L823.3 30.6 L821.8 30.3 L820.3 30.1 L818.8 30.1 L817.3 30.1 L815.8 30.1 L814.3 30.2 L812.8 30.3 L811.3 30.4 L809.8 30.5 L808.3 30.8 L806.8 31.2 L805.3 31.8 L803.8 32.4 L802.3 33.3 L800.8 34.6 L799.3 36.3 L797.8 38.4 L796.3 40.7 L794.8 43.6 L793.3 47.4 L791.8 51.8 L790.3 56.3 L788.8 60.8 L787.3 65.5 L785.8 70.5 L784.3 75.4 L782.8 80.0 L781.3 84.0 L779.8 87.8 L778.3 91.4 L776.8 95.0 L775.3 98.9 L773.8 103.0 L772.3 107.4 L770.8 111.5 L769.3 115.1 L767.8 118.2 L766.3 121.1 L764.8 123.1 L763.3 124.0 L761.8 124.5 L760.3 124.9 L758.8 125.3 L757.3 125.9 L755.8 126.9 L754.3 128.3 L752.8 129.8 L751.3 131.0 L749.8 132.0 L748.3 132.8 L746.8 133.5 L745.3 134.1 L743.8 134.7 L742.3 135.3 L740.8 136.0 L739.3 136.5 L737.8 136.9 L736.3 136.9 L734.8 136.8 L733.3 136.5 L731.8 136.2 L730.3 135.8 L728.8 135.5 L727.3 134.9 L725.8 134.4 L724.3 134.0 L722.8 133.7 L721.3 133.5 L719.8 133.4 L718.3 133.3 L716.8 133.2 L715.3 133.0 L713.8 132.8 L712.3 131.9 L710.8 130.8 L709.3 129.7 L707.8 129.0 L706.3 129.0 L704.8 129.0 L703.3 129.1 L701.8 129.2 L700.3 129.3 L698.8 129.4 L697.3 129.4 L695.8 129.4 L694.3 129.4 L692.8 129.4 L691.3 129.3 L689.8 129.3 L688.3 129.2 L686.8 129.1 L685.3 129.0 L683.8 128.9 L682.3 128.7 L680.8 128.4 L679.3 128.1 L677.8 127.7 L676.3 127.2 L674.8 126.7 L673.3 126.0 L671.8 125.1 L670.3 124.1 L668.8 123.0 L667.3 121.8 L665.8 120.4 L664.3 118.9 L662.8 117.2 L661.3 115.4 L659.8 113.1 L658.3 110.6 L656.8 107.9 L655.3 105.2 L653.8 102.6 L652.3 99.9 L650.8 97.1 L649.3 94.3 L647.8 91.4 L646.3 88.1 L644.8 84.6 L643.3 81.8 L641.8 80.1 L640.3 79.1 L638.8 78.3 L637.3 77.6 L635.8 77.0 L634.3 76.5 L632.8 76.0 L631.3 75.4 L629.8 75.0 L628.3 74.5 L626.8 74.0 L625.3 73.5 L623.8 73.0 L622.3 72.5 L620.8 72.0 L619.3 71.4 L617.8 70.9 L616.3 70.4 L614.8 69.9 L613.3 69.5 L611.8 69.1 L610.3 68.7 L608.8 68.4 L607.3 68.0 L605.8 67.6 L604.3 67.2 L602.8 66.7 L601.3 66.2 L599.8 65.6 L598.3 65.2 L596.8 64.8 L595.3 64.7 L593.8 64.5 L592.3 64.5 L590.8 64.4 L589.3 64.3 L587.8 64.1 L586.3 63.7 L584.8 62.7 L583.3 61.7 L581.8 61.0 L580.3 60.9 L578.8 61.0 L577.3 61.2 L575.8 61.3 L574.3 61.3 L572.8 61.2 L571.3 60.9 L569.8 60.6 L568.3 60.3 L566.8 59.9 L565.3 59.4 L563.8 58.8 L562.3 58.2 L560.8 57.6 L559.3 57.1 L557.8 56.6 L556.3 56.1 L554.8 55.7 L553.3 55.2 L551.8 54.7 L550.3 54.2 L548.8 53.7 L547.3 53.2 L545.8 52.6 L544.3 52.0 L542.8 51.4 L541.3 50.6 L539.8 49.7 L538.3 48.6 L536.8 47.5 L535.3 46.3 L533.8 45.2 L532.3 43.9 L530.8 42.4 L529.3 41.0 L527.8 39.7 L526.3 38.6 L524.8 37.4 L523.3 36.4 L521.8 35.5 L520.3 34.8 L518.8 34.2 L517.3 33.7 L515.8 33.3 L514.3 32.8 L512.8 32.4 L511.3 32.0 L509.8 31.6 L508.3 31.2 L506.8 30.9 L505.3 30.7 L503.8 30.5 L502.3 30.3 L500.8 30.2 L499.3 30.2 L497.8 30.2 L496.3 30.5 L494.8 30.7 L493.3 31.0 L491.8 31.3 L490.3 31.5 L488.8 31.7 L487.3 31.8 L485.8 32.0 L484.3 32.2 L482.8 32.4 L481.3 32.8 L479.8 33.4 L478.3 34.3 L476.8 35.4 L475.3 36.7 L473.8 39.0 L472.3 42.1 L470.8 45.7 L469.3 49.3 L467.8 53.1 L466.3 57.2 L464.8 61.7 L463.3 66.2 L461.8 71.0 L460.3 76.2 L458.8 81.5 L457.3 86.4 L455.8 90.8 L454.3 94.8 L452.8 98.6 L451.3 102.1 L449.8 105.5 L448.3 108.8 L446.8 112.0 L445.3 114.9 L443.8 117.5 L442.3 119.8 L440.8 121.9 L439.3 123.8 L437.8 125.4 L436.3 126.7 L434.8 127.9 L433.3 128.8 L431.8 129.4 L430.3 130.0 L428.8 130.4 L427.3 130.7 L425.8 130.7 L424.3 130.7 L422.8 130.7 L421.3 130.7 L419.8 130.7 L418.3 130.7 L416.8 130.7 L415.3 130.5 L413.8 130.2 L412.3 129.9 L410.8 129.4 L409.3 129.0 L407.8 128.4 L406.3 127.6 L404.8 126.6 L403.3 125.6 L401.8 124.8 L400.3 124.1 L398.8 123.7 L397.3 123.3 L395.8 122.9 L394.3 122.6 L392.8 122.3 L391.3 122.0 L389.8 121.8 L388.3 121.5 L386.8 121.3 L385.3 121.0 L383.8 120.7 L382.3 120.3 L380.8 120.0 L379.3 119.7 L377.8 119.3 L376.3 118.9 L374.8 118.4 L373.3 117.9 L371.8 117.4 L370.3 117.0 L368.8 116.7 L367.3 116.8 L365.8 117.0 L364.3 117.4 L362.8 117.6 L361.3 117.8 L359.8 117.7 L358.3 117.4 L356.8 116.8 L355.3 116.1 L353.8 115.4 L352.3 114.7 L350.8 113.7 L349.3 112.6 L347.8 111.5 L346.3 110.5 L344.8 109.5 L343.3 108.5 L341.8 107.5 L340.3 106.5 L338.8 105.6 L337.3 104.7 L335.8 103.7 L334.3 102.6 L332.8 101.2 L331.3 99.5 L329.8 97.5 L328.3 95.3 L326.8 92.8 L325.3 89.6 L323.8 85.9 L322.3 81.2 L320.8 75.1 L319.3 69.4 L317.8 64.6 L316.3 60.2 L314.8 57.6 L313.3 56.5 L311.8 55.6 L310.3 55.0 L308.8 54.7 L307.3 54.7 L305.8 55.0 L304.3 55.4 L302.8 55.8 L301.3 56.3 L299.8 56.8 L298.3 57.2 L296.8 57.6 L295.3 58.1 L293.8 58.6 L292.3 59.2 L290.8 60.2 L289.3 61.2 L287.8 61.8 L286.3 62.0 L284.8 61.9 L283.3 61.9 L281.8 61.8 L280.3 61.7 L278.8 61.6 L277.3 61.4 L275.8 61.3 L274.3 61.1 L272.8 60.9 L271.3 60.7 L269.8 60.5 L268.3 60.2 L266.8 60.0 L265.3 59.7 L263.8 59.4 L262.3 59.1 L260.8 58.6 L259.3 57.9 L257.8 57.0 L256.3 56.0 L254.8 55.1 L253.3 54.5 L251.8 53.8 L250.3 53.3 L248.8 52.7 L247.3 52.1 L245.8 51.5 L244.3 50.9 L242.8 50.4 L241.3 49.8 L239.8 49.2 L238.3 48.6 L236.8 48.0 L235.3 47.3 L233.8 46.7 L232.3 46.0 L230.8 45.2 L229.3 44.5 L227.8 43.8 L226.3 43.0 L224.8 42.1 L223.3 41.1 L221.8 40.4 L220.3 40.0 L218.8 40.1 L217.3 40.3 L215.8 40.5 L214.3 40.7 L212.8 40.9 L211.3 40.9 L209.8 40.7 L208.3 40.2 L206.8 39.7 L205.3 39.1 L203.8 38.5 L202.3 38.1 L200.8 37.7 L199.3 37.4 L197.8 37.1 L196.3 36.7 L194.8 36.4 L193.3 36.0 L191.8 35.6 L190.3 35.1 L188.8 34.6 L187.3 34.0 L185.8 33.5 L184.3 33.1 L182.8 32.7 L181.3 32.5 L179.8 32.2 L178.3 32.0 L176.8 31.7 L175.3 31.5 L173.8 31.1 L172.3 30.7 L170.8 30.4 L169.3 30.2 L167.8 30.2 L166.3 30.3 L164.8 30.5 L163.3 30.8 L161.8 31.0 L160.3 31.2 L158.8 31.3 L157.3 31.4 L155.8 31.5 L154.3 31.6 L152.8 31.7 L151.3 31.9 L149.8 32.4 L148.3 33.2 L146.8 34.5 L145.3 37.0 L143.8 40.5 L142.3 44.2 L140.8 48.4 L139.3 53.1 L137.8 57.9 L136.3 62.6 L134.8 67.4 L133.3 72.4 L131.8 77.2 L130.3 81.7 L128.8 85.8 L127.3 89.8 L125.8 93.5 L124.3 96.8 L122.8 99.4 L121.3 101.7 L119.8 103.7 L118.3 105.6 L116.8 107.6 L115.3 109.7 L113.8 111.8 L112.3 113.7 L110.8 115.2 L109.3 116.3 L107.8 117.3 L106.3 118.1 L104.8 118.8 L103.3 119.5 L101.8 120.1 L100.3 120.6 L98.8 121.2 L97.3 122.0 L95.8 123.0 L94.3 124.2 L92.8 125.2 L91.3 126.0 L89.8 126.6 L88.3 127.1 L86.8 127.5 L85.3 127.7 L83.8 127.7 L82.3 127.5 L80.8 127.3 L79.3 127.0 L77.8 126.7 L76.3 126.4 L74.8 125.9 L73.3 125.1 L71.8 124.3 L70.3 123.7 L68.8 123.4 L67.3 123.5 L65.8 123.8 L64.3 124.1 L62.8 124.2 L61.3 124.2 L59.8 123.9 L58.3 123.6 L56.8 123.1 L55.3 122.7 L53.8 122.2 L52.3 121.7 L50.8 121.1 L49.3 120.6 L47.8 120.2 L46.3 120.0 L44.8 119.9 L43.3 119.8 L41.8 119.8 L40.3 119.7 L38.8 119.7 L37.3 119.6 L35.8 119.6 L34.3 119.4 L32.8 119.1 L31.3 118.7 L29.8 118.1 L28.3 117.4 L26.8 116.0 L25.3 114.2 L23.8 112.1 L22.3 109.3 L20.8 106.1 L19.3 102.7 L17.8 99.4 L16.3 95.9 L14.8 92.1 L13.3 88.6 L11.8 85.4 L10.3 82.2 L8.8 80.2 L7.3 81.7 L5.8 86.0 L4.3 95.4 L2.8 106.5 L1.3 119.6 Z" fill="#f3b06a"/><path d="M1.3 119.1 L2.8 106.0 L4.3 94.9 L5.8 85.5 L7.3 81.2 L8.8 79.7 L10.3 81.7 L11.8 84.9 L13.3 88.1 L14.8 91.6 L16.3 95.4 L17.8 98.9 L19.3 102.2 L20.8 105.6 L22.3 108.8 L23.8 111.6 L25.3 113.7 L26.8 115.5 L28.3 116.9 L29.8 117.6 L31.3 118.2 L32.8 118.6 L34.3 118.9 L35.8 119.1 L37.3 119.1 L38.8 119.2 L40.3 119.2 L41.8 119.3 L43.3 119.3 L44.8 119.4 L46.3 119.5 L47.8 119.7 L49.3 120.1 L50.8 120.6 L52.3 121.2 L53.8 121.7 L55.3 122.2 L56.8 122.6 L58.3 123.1 L59.8 123.4 L61.3 123.7 L62.8 123.7 L64.3 123.6 L65.8 123.3 L67.3 123.0 L68.8 122.9 L70.3 123.2 L71.8 123.8 L73.3 124.6 L74.8 125.4 L76.3 125.9 L77.8 126.2 L79.3 126.5 L80.8 126.8 L82.3 127.0 L83.8 127.2 L85.3 127.2 L86.8 127.0 L88.3 126.6 L89.8 126.1 L91.3 125.5 L92.8 124.7 L94.3 123.7 L95.8 122.5 L97.3 121.5 L98.8 120.7 L100.3 120.1 L101.8 119.6 L103.3 119.0 L104.8 118.3 L106.3 117.6 L107.8 116.8 L109.3 115.8 L110.8 114.7 L112.3 113.2 L113.8 111.3 L115.3 109.2 L116.8 107.1 L118.3 105.1 L119.8 103.2 L121.3 101.2 L122.8 98.9 L124.3 96.3 L125.8 93.0 L127.3 89.3 L128.8 85.3 L130.3 81.2 L131.8 76.7 L133.3 71.9 L134.8 66.9 L136.3 62.1 L137.8 57.4 L139.3 52.6 L140.8 47.9 L142.3 43.7 L143.8 40.0 L145.3 36.5 L146.8 34.0 L148.3 32.7 L149.8 31.9 L151.3 31.4 L152.8 31.2 L154.3 31.1 L155.8 31.0 L157.3 30.9 L158.8 30.8 L160.3 30.7 L161.8 30.5 L163.3 30.3 L164.8 30.0 L166.3 29.8 L167.8 29.7 L169.3 29.7 L170.8 29.9 L172.3 30.2 L173.8 30.6 L175.3 31.0 L176.8 31.2 L178.3 31.5 L179.8 31.7 L181.3 32.0 L182.8 32.2 L184.3 32.6 L185.8 33.0 L187.3 33.5 L188.8 34.1 L190.3 34.6 L191.8 35.1 L193.3 35.5 L194.8 35.9 L196.3 36.2 L197.8 36.6 L199.3 36.9 L200.8 37.2 L202.3 37.6 L203.8 38.0 L205.3 38.6 L206.8 39.2 L208.3 39.7 L209.8 40.2 L211.3 40.4 L212.8 40.4 L214.3 40.2 L215.8 40.0 L217.3 39.8 L218.8 39.6 L220.3 39.5 L221.8 39.9 L223.3 40.6 L224.8 41.6 L226.3 42.5 L227.8 43.3 L229.3 44.0 L230.8 44.7 L232.3 45.5 L233.8 46.2 L235.3 46.8 L236.8 47.5 L238.3 48.1 L239.8 48.7 L241.3 49.3 L242.8 49.9 L244.3 50.4 L245.8 51.0 L247.3 51.6 L248.8 52.2 L250.3 52.8 L251.8 53.3 L253.3 54.0 L254.8 54.6 L256.3 55.5 L257.8 56.5 L259.3 57.4 L260.8 58.1 L262.3 58.6 L263.8 58.9 L265.3 59.2 L266.8 59.5 L268.3 59.7 L269.8 60.0 L271.3 60.2 L272.8 60.4 L274.3 60.6 L275.8 60.8 L277.3 60.9 L278.8 61.1 L280.3 61.2 L281.8 61.3 L283.3 61.4 L284.8 61.4 L286.3 61.5 L287.8 61.3 L289.3 60.7 L290.8 59.7 L292.3 58.7 L293.8 58.1 L295.3 57.6 L296.8 57.1 L298.3 56.7 L299.8 56.3 L301.3 55.8 L302.8 55.3 L304.3 54.9 L305.8 54.5 L307.3 54.2 L308.8 54.2 L310.3 54.5 L311.8 55.1 L313.3 56.0 L314.8 57.1 L316.3 59.7 L317.8 64.1 L319.3 68.9 L320.8 74.6 L322.3 80.7 L323.8 85.4 L325.3 89.1 L326.8 92.3 L328.3 94.8 L329.8 97.0 L331.3 99.0 L332.8 100.7 L334.3 102.1 L335.8 103.2 L337.3 104.2 L338.8 105.1 L340.3 106.0 L341.8 107.0 L343.3 108.0 L344.8 109.0 L346.3 110.0 L347.8 111.0 L349.3 112.1 L350.8 113.2 L352.3 114.2 L353.8 114.9 L355.3 115.6 L356.8 116.3 L358.3 116.9 L359.8 117.2 L361.3 117.3 L362.8 117.1 L364.3 116.9 L365.8 116.5 L367.3 116.3 L368.8 116.2 L370.3 116.5 L371.8 116.9 L373.3 117.4 L374.8 117.9 L376.3 118.4 L377.8 118.8 L379.3 119.2 L380.8 119.5 L382.3 119.8 L383.8 120.2 L385.3 120.5 L386.8 120.8 L388.3 121.0 L389.8 121.3 L391.3 121.5 L392.8 121.8 L394.3 122.1 L395.8 122.4 L397.3 122.8 L398.8 123.2 L400.3 123.6 L401.8 124.3 L403.3 125.1 L404.8 126.1 L406.3 127.1 L407.8 127.9 L409.3 128.5 L410.8 128.9 L412.3 129.4 L413.8 129.7 L415.3 130.0 L416.8 130.2 L418.3 130.2 L419.8 130.2 L421.3 130.2 L422.8 130.2 L424.3 130.2 L425.8 130.2 L427.3 130.2 L428.8 129.9 L430.3 129.5 L431.8 128.9 L433.3 128.3 L434.8 127.4 L436.3 126.2 L437.8 124.9 L439.3 123.3 L440.8 121.4 L442.3 119.3 L443.8 117.0 L445.3 114.4 L446.8 111.5 L448.3 108.3 L449.8 105.0 L451.3 101.6 L452.8 98.1 L454.3 94.3 L455.8 90.3 L457.3 85.9 L458.8 81.0 L460.3 75.7 L461.8 70.5 L463.3 65.7 L464.8 61.2 L466.3 56.7 L467.8 52.6 L469.3 48.8 L470.8 45.2 L472.3 41.6 L473.8 38.5 L475.3 36.2 L476.8 34.9 L478.3 33.8 L479.8 32.9 L481.3 32.3 L482.8 31.9 L484.3 31.7 L485.8 31.5 L487.3 31.3 L488.8 31.2 L490.3 31.0 L491.8 30.8 L493.3 30.5 L494.8 30.2 L496.3 30.0 L497.8 29.7 L499.3 29.7 L500.8 29.7 L502.3 29.8 L503.8 30.0 L505.3 30.2 L506.8 30.4 L508.3 30.7 L509.8 31.1 L511.3 31.5 L512.8 31.9 L514.3 32.3 L515.8 32.8 L517.3 33.2 L518.8 33.7 L520.3 34.3 L521.8 35.0 L523.3 35.9 L524.8 36.9 L526.3 38.1 L527.8 39.2 L529.3 40.5 L530.8 41.9 L532.3 43.4 L533.8 44.7 L535.3 45.8 L536.8 47.0 L538.3 48.1 L539.8 49.2 L541.3 50.1 L542.8 50.9 L544.3 51.5 L545.8 52.1 L547.3 52.7 L548.8 53.2 L550.3 53.7 L551.8 54.2 L553.3 54.7 L554.8 55.2 L556.3 55.6 L557.8 56.1 L559.3 56.6 L560.8 57.1 L562.3 57.7 L563.8 58.3 L565.3 58.9 L566.8 59.4 L568.3 59.8 L569.8 60.1 L571.3 60.4 L572.8 60.7 L574.3 60.8 L575.8 60.8 L577.3 60.7 L578.8 60.5 L580.3 60.4 L581.8 60.5 L583.3 61.2 L584.8 62.2 L586.3 63.2 L587.8 63.6 L589.3 63.8 L590.8 63.9 L592.3 64.0 L593.8 64.0 L595.3 64.2 L596.8 64.3 L598.3 64.7 L599.8 65.1 L601.3 65.7 L602.8 66.2 L604.3 66.7 L605.8 67.1 L607.3 67.5 L608.8 67.9 L610.3 68.2 L611.8 68.6 L613.3 69.0 L614.8 69.4 L616.3 69.9 L617.8 70.4 L619.3 70.9 L620.8 71.5 L622.3 72.0 L623.8 72.5 L625.3 73.0 L626.8 73.5 L628.3 74.0 L629.8 74.5 L631.3 74.9 L632.8 75.5 L634.3 76.0 L635.8 76.5 L637.3 77.1 L638.8 77.8 L640.3 78.6 L641.8 79.6 L643.3 81.3 L644.8 84.1 L646.3 87.6 L647.8 90.9 L649.3 93.8 L650.8 96.6 L652.3 99.4 L653.8 102.1 L655.3 104.7 L656.8 107.4 L658.3 110.1 L659.8 112.6 L661.3 114.9 L662.8 116.7 L664.3 118.4 L665.8 119.9 L667.3 121.3 L668.8 122.5 L670.3 123.6 L671.8 124.6 L673.3 125.5 L674.8 126.2 L676.3 126.7 L677.8 127.2 L679.3 127.6 L680.8 127.9 L682.3 128.2 L683.8 128.4 L685.3 128.5 L686.8 128.6 L688.3 128.7 L689.8 128.8 L691.3 128.8 L692.8 128.9 L694.3 128.9 L695.8 128.9 L697.3 128.9 L698.8 128.9 L700.3 128.8 L701.8 128.7 L703.3 128.6 L704.8 128.5 L706.3 128.5 L707.8 128.5 L709.3 129.2 L710.8 130.3 L712.3 131.4 L713.8 132.3 L715.3 132.5 L716.8 132.7 L718.3 132.8 L719.8 132.9 L721.3 133.0 L722.8 133.2 L724.3 133.5 L725.8 133.9 L727.3 134.4 L728.8 135.0 L730.3 135.3 L731.8 135.7 L733.3 136.0 L734.8 136.3 L736.3 136.4 L737.8 136.4 L739.3 136.0 L740.8 135.5 L742.3 134.8 L743.8 134.2 L745.3 133.6 L746.8 133.0 L748.3 132.3 L749.8 131.5 L751.3 130.5 L752.8 129.3 L754.3 127.8 L755.8 126.4 L757.3 125.4 L758.8 124.8 L760.3 124.4 L761.8 124.0 L763.3 123.5 L764.8 122.6 L766.3 120.6 L767.8 117.7 L769.3 114.6 L770.8 111.0 L772.3 106.9 L773.8 102.5 L775.3 98.4 L776.8 94.5 L778.3 90.9 L779.8 87.3 L781.3 83.5 L782.8 79.5 L784.3 74.9 L785.8 70.0 L787.3 65.0 L788.8 60.3 L790.3 55.8 L791.8 51.3 L793.3 46.9 L794.8 43.1 L796.3 40.2 L797.8 37.9 L799.3 35.8 L800.8 34.1 L802.3 32.8 L803.8 31.9 L805.3 31.3 L806.8 30.7 L808.3 30.3 L809.8 30.0 L811.3 29.9 L812.8 29.8 L814.3 29.7 L815.8 29.6 L817.3 29.6 L818.8 29.6 L820.3 29.6 L821.8 29.8 L823.3 30.1 L824.8 30.4 L826.3 30.8 L827.8 31.1 L829.3 31.4 L830.8 31.8 L832.3 32.2 L833.8 32.6 L835.3 33.0 L836.8 33.3 L838.3 33.7 L839.8 34.2 L841.3 34.6 L842.8 35.0 L844.3 35.4 L845.8 35.7 L847.3 35.8 L848.8 36.0 L850.3 36.1 L851.8 36.2 L853.3 36.3 L854.8 36.4 L856.3 36.5 L857.8 36.6 L859.3 36.8 L860.8 36.9 L862.3 37.1 L863.8 37.2 L865.3 37.4 L866.8 37.6 L868.3 37.7 L869.8 37.9 L871.3 38.1 L872.8 38.3 L874.3 38.5 L875.8 38.7 L877.3 39.0 L878.8 39.3 L880.3 39.6 L881.8 40.0 L883.3 40.5 L884.8 41.0 L886.3 41.5 L887.8 42.0 L889.3 42.5 L890.8 42.9 L892.3 43.5 L893.8 44.0 L895.3 44.5 L896.8 45.1 L898.3 45.6 L899.8 46.1 L901.3 46.5 L902.8 47.0 L904.3 47.5 L905.8 48.0 L907.3 48.5 L908.8 48.9 L910.3 49.2 L911.8 49.4 L913.3 49.4 L914.8 49.4 L916.3 49.3 L917.8 49.2 L919.3 49.1 L920.8 49.0 L922.3 49.0 L923.8 49.0 L925.3 49.0 L926.8 49.1 L928.3 49.3 L929.8 49.4 L931.3 49.6 L932.8 49.8 L934.3 49.8 L935.8 49.9 L937.3 49.7 L938.8 49.5 L940.3 49.2 L941.8 48.8 L943.3 48.2 L944.8 47.1 L946.3 45.9 L947.8 44.8 L949.3 44.0 L950.8 43.3 L952.3 42.7 L953.8 42.3 L955.3 41.9 L956.8 41.8 L958.3 41.7 L959.8 41.6 L961.3 41.5 L962.8 41.4 L964.3 41.1 L965.8 40.7 L967.3 40.4 L968.8 40.3 L970.3 40.4 L971.8 40.5 L973.3 40.8 L974.8 41.9 L976.3 46.3 L977.8 66.5 L979.3 92.0 L982.0 132.6" fill="none" stroke="#f3b06a" stroke-width="4.6" stroke-linejoin="round"/><path d="M1.3 119.1 L2.8 106.0 L4.3 94.9 L5.8 85.5 L7.3 81.2 L8.8 79.7 L10.3 81.7 L11.8 84.9 L13.3 88.1 L14.8 91.6 L16.3 95.4 L17.8 98.9 L19.3 102.2 L20.8 105.6 L22.3 108.8 L23.8 111.6 L25.3 113.7 L26.8 115.5 L28.3 116.9 L29.8 117.6 L31.3 118.2 L32.8 118.6 L34.3 118.9 L35.8 119.1 L37.3 119.1 L38.8 119.2 L40.3 119.2 L41.8 119.3 L43.3 119.3 L44.8 119.4 L46.3 119.5 L47.8 119.7 L49.3 120.1 L50.8 120.6 L52.3 121.2 L53.8 121.7 L55.3 122.2 L56.8 122.6 L58.3 123.1 L59.8 123.4 L61.3 123.7 L62.8 123.7 L64.3 123.6 L65.8 123.3 L67.3 123.0 L68.8 122.9 L70.3 123.2 L71.8 123.8 L73.3 124.6 L74.8 125.4 L76.3 125.9 L77.8 126.2 L79.3 126.5 L80.8 126.8 L82.3 127.0 L83.8 127.2 L85.3 127.2 L86.8 127.0 L88.3 126.6 L89.8 126.1 L91.3 125.5 L92.8 124.7 L94.3 123.7 L95.8 122.5 L97.3 121.5 L98.8 120.7 L100.3 120.1 L101.8 119.6 L103.3 119.0 L104.8 118.3 L106.3 117.6 L107.8 116.8 L109.3 115.8 L110.8 114.7 L112.3 113.2 L113.8 111.3 L115.3 109.2 L116.8 107.1 L118.3 105.1 L119.8 103.2 L121.3 101.2 L122.8 98.9 L124.3 96.3 L125.8 93.0 L127.3 89.3 L128.8 85.3 L130.3 81.2 L131.8 76.7 L133.3 71.9 L134.8 66.9 L136.3 62.1 L137.8 57.4 L139.3 52.6 L140.8 47.9 L142.3 43.7 L143.8 40.0 L145.3 36.5 L146.8 34.0 L148.3 32.7 L149.8 31.9 L151.3 31.4 L152.8 31.2 L154.3 31.1 L155.8 31.0 L157.3 30.9 L158.8 30.8 L160.3 30.7 L161.8 30.5 L163.3 30.3 L164.8 30.0 L166.3 29.8 L167.8 29.7 L169.3 29.7 L170.8 29.9 L172.3 30.2 L173.8 30.6 L175.3 31.0 L176.8 31.2 L178.3 31.5 L179.8 31.7 L181.3 32.0 L182.8 32.2 L184.3 32.6 L185.8 33.0 L187.3 33.5 L188.8 34.1 L190.3 34.6 L191.8 35.1 L193.3 35.5 L194.8 35.9 L196.3 36.2 L197.8 36.6 L199.3 36.9 L200.8 37.2 L202.3 37.6 L203.8 38.0 L205.3 38.6 L206.8 39.2 L208.3 39.7 L209.8 40.2 L211.3 40.4 L212.8 40.4 L214.3 40.2 L215.8 40.0 L217.3 39.8 L218.8 39.6 L220.3 39.5 L221.8 39.9 L223.3 40.6 L224.8 41.6 L226.3 42.5 L227.8 43.3 L229.3 44.0 L230.8 44.7 L232.3 45.5 L233.8 46.2 L235.3 46.8 L236.8 47.5 L238.3 48.1 L239.8 48.7 L241.3 49.3 L242.8 49.9 L244.3 50.4 L245.8 51.0 L247.3 51.6 L248.8 52.2 L250.3 52.8 L251.8 53.3 L253.3 54.0 L254.8 54.6 L256.3 55.5 L257.8 56.5 L259.3 57.4 L260.8 58.1 L262.3 58.6 L263.8 58.9 L265.3 59.2 L266.8 59.5 L268.3 59.7 L269.8 60.0 L271.3 60.2 L272.8 60.4 L274.3 60.6 L275.8 60.8 L277.3 60.9 L278.8 61.1 L280.3 61.2 L281.8 61.3 L283.3 61.4 L284.8 61.4 L286.3 61.5 L287.8 61.3 L289.3 60.7 L290.8 59.7 L292.3 58.7 L293.8 58.1 L295.3 57.6 L296.8 57.1 L298.3 56.7 L299.8 56.3 L301.3 55.8 L302.8 55.3 L304.3 54.9 L305.8 54.5 L307.3 54.2 L308.8 54.2 L310.3 54.5 L311.8 55.1 L313.3 56.0 L314.8 57.1 L316.3 59.7 L317.8 64.1 L319.3 68.9 L320.8 74.6 L322.3 80.7 L323.8 85.4 L325.3 89.1 L326.8 92.3 L328.3 94.8 L329.8 97.0 L331.3 99.0 L332.8 100.7 L334.3 102.1 L335.8 103.2 L337.3 104.2 L338.8 105.1 L340.3 106.0 L341.8 107.0 L343.3 108.0 L344.8 109.0 L346.3 110.0 L347.8 111.0 L349.3 112.1 L350.8 113.2 L352.3 114.2 L353.8 114.9 L355.3 115.6 L356.8 116.3 L358.3 116.9 L359.8 117.2 L361.3 117.3 L362.8 117.1 L364.3 116.9 L365.8 116.5 L367.3 116.3 L368.8 116.2 L370.3 116.5 L371.8 116.9 L373.3 117.4 L374.8 117.9 L376.3 118.4 L377.8 118.8 L379.3 119.2 L380.8 119.5 L382.3 119.8 L383.8 120.2 L385.3 120.5 L386.8 120.8 L388.3 121.0 L389.8 121.3 L391.3 121.5 L392.8 121.8 L394.3 122.1 L395.8 122.4 L397.3 122.8 L398.8 123.2 L400.3 123.6 L401.8 124.3 L403.3 125.1 L404.8 126.1 L406.3 127.1 L407.8 127.9 L409.3 128.5 L410.8 128.9 L412.3 129.4 L413.8 129.7 L415.3 130.0 L416.8 130.2 L418.3 130.2 L419.8 130.2 L421.3 130.2 L422.8 130.2 L424.3 130.2 L425.8 130.2 L427.3 130.2 L428.8 129.9 L430.3 129.5 L431.8 128.9 L433.3 128.3 L434.8 127.4 L436.3 126.2 L437.8 124.9 L439.3 123.3 L440.8 121.4 L442.3 119.3 L443.8 117.0 L445.3 114.4 L446.8 111.5 L448.3 108.3 L449.8 105.0 L451.3 101.6 L452.8 98.1 L454.3 94.3 L455.8 90.3 L457.3 85.9 L458.8 81.0 L460.3 75.7 L461.8 70.5 L463.3 65.7 L464.8 61.2 L466.3 56.7 L467.8 52.6 L469.3 48.8 L470.8 45.2 L472.3 41.6 L473.8 38.5 L475.3 36.2 L476.8 34.9 L478.3 33.8 L479.8 32.9 L481.3 32.3 L482.8 31.9 L484.3 31.7 L485.8 31.5 L487.3 31.3 L488.8 31.2 L490.3 31.0 L491.8 30.8 L493.3 30.5 L494.8 30.2 L496.3 30.0 L497.8 29.7 L499.3 29.7 L500.8 29.7 L502.3 29.8 L503.8 30.0 L505.3 30.2 L506.8 30.4 L508.3 30.7 L509.8 31.1 L511.3 31.5 L512.8 31.9 L514.3 32.3 L515.8 32.8 L517.3 33.2 L518.8 33.7 L520.3 34.3 L521.8 35.0 L523.3 35.9 L524.8 36.9 L526.3 38.1 L527.8 39.2 L529.3 40.5 L530.8 41.9 L532.3 43.4 L533.8 44.7 L535.3 45.8 L536.8 47.0 L538.3 48.1 L539.8 49.2 L541.3 50.1 L542.8 50.9 L544.3 51.5 L545.8 52.1 L547.3 52.7 L548.8 53.2 L550.3 53.7 L551.8 54.2 L553.3 54.7 L554.8 55.2 L556.3 55.6 L557.8 56.1 L559.3 56.6 L560.8 57.1 L562.3 57.7 L563.8 58.3 L565.3 58.9 L566.8 59.4 L568.3 59.8 L569.8 60.1 L571.3 60.4 L572.8 60.7 L574.3 60.8 L575.8 60.8 L577.3 60.7 L578.8 60.5 L580.3 60.4 L581.8 60.5 L583.3 61.2 L584.8 62.2 L586.3 63.2 L587.8 63.6 L589.3 63.8 L590.8 63.9 L592.3 64.0 L593.8 64.0 L595.3 64.2 L596.8 64.3 L598.3 64.7 L599.8 65.1 L601.3 65.7 L602.8 66.2 L604.3 66.7 L605.8 67.1 L607.3 67.5 L608.8 67.9 L610.3 68.2 L611.8 68.6 L613.3 69.0 L614.8 69.4 L616.3 69.9 L617.8 70.4 L619.3 70.9 L620.8 71.5 L622.3 72.0 L623.8 72.5 L625.3 73.0 L626.8 73.5 L628.3 74.0 L629.8 74.5 L631.3 74.9 L632.8 75.5 L634.3 76.0 L635.8 76.5 L637.3 77.1 L638.8 77.8 L640.3 78.6 L641.8 79.6 L643.3 81.3 L644.8 84.1 L646.3 87.6 L647.8 90.9 L649.3 93.8 L650.8 96.6 L652.3 99.4 L653.8 102.1 L655.3 104.7 L656.8 107.4 L658.3 110.1 L659.8 112.6 L661.3 114.9 L662.8 116.7 L664.3 118.4 L665.8 119.9 L667.3 121.3 L668.8 122.5 L670.3 123.6 L671.8 124.6 L673.3 125.5 L674.8 126.2 L676.3 126.7 L677.8 127.2 L679.3 127.6 L680.8 127.9 L682.3 128.2 L683.8 128.4 L685.3 128.5 L686.8 128.6 L688.3 128.7 L689.8 128.8 L691.3 128.8 L692.8 128.9 L694.3 128.9 L695.8 128.9 L697.3 128.9 L698.8 128.9 L700.3 128.8 L701.8 128.7 L703.3 128.6 L704.8 128.5 L706.3 128.5 L707.8 128.5 L709.3 129.2 L710.8 130.3 L712.3 131.4 L713.8 132.3 L715.3 132.5 L716.8 132.7 L718.3 132.8 L719.8 132.9 L721.3 133.0 L722.8 133.2 L724.3 133.5 L725.8 133.9 L727.3 134.4 L728.8 135.0 L730.3 135.3 L731.8 135.7 L733.3 136.0 L734.8 136.3 L736.3 136.4 L737.8 136.4 L739.3 136.0 L740.8 135.5 L742.3 134.8 L743.8 134.2 L745.3 133.6 L746.8 133.0 L748.3 132.3 L749.8 131.5 L751.3 130.5 L752.8 129.3 L754.3 127.8 L755.8 126.4 L757.3 125.4 L758.8 124.8 L760.3 124.4 L761.8 124.0 L763.3 123.5 L764.8 122.6 L766.3 120.6 L767.8 117.7 L769.3 114.6 L770.8 111.0 L772.3 106.9 L773.8 102.5 L775.3 98.4 L776.8 94.5 L778.3 90.9 L779.8 87.3 L781.3 83.5 L782.8 79.5 L784.3 74.9 L785.8 70.0 L787.3 65.0 L788.8 60.3 L790.3 55.8 L791.8 51.3 L793.3 46.9 L794.8 43.1 L796.3 40.2 L797.8 37.9 L799.3 35.8 L800.8 34.1 L802.3 32.8 L803.8 31.9 L805.3 31.3 L806.8 30.7 L808.3 30.3 L809.8 30.0 L811.3 29.9 L812.8 29.8 L814.3 29.7 L815.8 29.6 L817.3 29.6 L818.8 29.6 L820.3 29.6 L821.8 29.8 L823.3 30.1 L824.8 30.4 L826.3 30.8 L827.8 31.1 L829.3 31.4 L830.8 31.8 L832.3 32.2 L833.8 32.6 L835.3 33.0 L836.8 33.3 L838.3 33.7 L839.8 34.2 L841.3 34.6 L842.8 35.0 L844.3 35.4 L845.8 35.7 L847.3 35.8 L848.8 36.0 L850.3 36.1 L851.8 36.2 L853.3 36.3 L854.8 36.4 L856.3 36.5 L857.8 36.6 L859.3 36.8 L860.8 36.9 L862.3 37.1 L863.8 37.2 L865.3 37.4 L866.8 37.6 L868.3 37.7 L869.8 37.9 L871.3 38.1 L872.8 38.3 L874.3 38.5 L875.8 38.7 L877.3 39.0 L878.8 39.3 L880.3 39.6 L881.8 40.0 L883.3 40.5 L884.8 41.0 L886.3 41.5 L887.8 42.0 L889.3 42.5 L890.8 42.9 L892.3 43.5 L893.8 44.0 L895.3 44.5 L896.8 45.1 L898.3 45.6 L899.8 46.1 L901.3 46.5 L902.8 47.0 L904.3 47.5 L905.8 48.0 L907.3 48.5 L908.8 48.9 L910.3 49.2 L911.8 49.4 L913.3 49.4 L914.8 49.4 L916.3 49.3 L917.8 49.2 L919.3 49.1 L920.8 49.0 L922.3 49.0 L923.8 49.0 L925.3 49.0 L926.8 49.1 L928.3 49.3 L929.8 49.4 L931.3 49.6 L932.8 49.8 L934.3 49.8 L935.8 49.9 L937.3 49.7 L938.8 49.5 L940.3 49.2 L941.8 48.8 L943.3 48.2 L944.8 47.1 L946.3 45.9 L947.8 44.8 L949.3 44.0 L950.8 43.3 L952.3 42.7 L953.8 42.3 L955.3 41.9 L956.8 41.8 L958.3 41.7 L959.8 41.6 L961.3 41.5 L962.8 41.4 L964.3 41.1 L965.8 40.7 L967.3 40.4 L968.8 40.3 L970.3 40.4 L971.8 40.5 L973.3 40.8 L974.8 41.9 L976.3 46.3 L977.8 66.5 L979.3 92.0 L982.0 132.6 L982.0 194.6 L979.3 180.7 L977.8 175.2 L976.3 171.3 L974.8 170.0 L973.3 169.8 L971.8 169.6 L970.3 169.5 L968.8 169.4 L967.3 169.3 L965.8 169.2 L964.3 169.2 L962.8 169.1 L961.3 169.1 L959.8 169.1 L958.3 169.1 L956.8 169.1 L955.3 169.1 L953.8 169.1 L952.3 169.1 L950.8 169.1 L949.3 169.1 L947.8 169.1 L946.3 169.1 L944.8 169.1 L943.3 169.1 L941.8 169.1 L940.3 169.1 L938.8 169.1 L937.3 169.1 L935.8 169.1 L934.3 169.1 L932.8 169.1 L931.3 169.1 L929.8 169.1 L928.3 169.1 L926.8 169.1 L925.3 169.1 L923.8 169.1 L922.3 169.1 L920.8 169.1 L919.3 169.1 L917.8 169.1 L916.3 169.1 L914.8 169.1 L913.3 169.1 L911.8 169.1 L910.3 169.1 L908.8 169.1 L907.3 169.1 L905.8 169.1 L904.3 169.1 L902.8 169.1 L901.3 169.0 L899.8 169.0 L898.3 169.0 L896.8 169.0 L895.3 169.0 L893.8 169.0 L892.3 169.0 L890.8 169.0 L889.3 169.0 L887.8 169.0 L886.3 168.9 L884.8 168.9 L883.3 168.9 L881.8 168.9 L880.3 168.9 L878.8 168.9 L877.3 168.9 L875.8 168.9 L874.3 168.9 L872.8 168.9 L871.3 168.9 L869.8 168.9 L868.3 168.9 L866.8 168.9 L865.3 168.9 L863.8 168.9 L862.3 168.9 L860.8 168.9 L859.3 168.9 L857.8 168.9 L856.3 168.9 L854.8 169.0 L853.3 169.0 L851.8 169.0 L850.3 169.1 L848.8 169.1 L847.3 169.1 L845.8 169.2 L844.3 169.2 L842.8 169.2 L841.3 169.3 L839.8 169.3 L838.3 169.3 L836.8 169.4 L835.3 169.4 L833.8 169.4 L832.3 169.4 L830.8 169.5 L829.3 169.5 L827.8 169.5 L826.3 169.5 L824.8 169.5 L823.3 169.5 L821.8 169.5 L820.3 169.5 L818.8 169.5 L817.3 169.5 L815.8 169.5 L814.3 169.5 L812.8 169.5 L811.3 169.5 L809.8 169.5 L808.3 169.5 L806.8 169.5 L805.3 169.5 L803.8 169.5 L802.3 169.5 L800.8 169.6 L799.3 169.8 L797.8 170.0 L796.3 170.2 L794.8 170.6 L793.3 171.4 L791.8 172.4 L790.3 173.4 L788.8 174.5 L787.3 175.9 L785.8 177.5 L784.3 179.1 L782.8 180.7 L781.3 182.2 L779.8 183.7 L778.3 185.2 L776.8 186.7 L775.3 188.2 L773.8 189.7 L772.3 191.2 L770.8 192.6 L769.3 193.7 L767.8 194.4 L766.3 195.1 L764.8 195.7 L763.3 196.1 L761.8 196.2 L760.3 196.2 L758.8 196.3 L757.3 196.3 L755.8 196.3 L754.3 196.3 L752.8 196.4 L751.3 196.4 L749.8 196.4 L748.3 196.4 L746.8 196.4 L745.3 196.4 L743.8 196.4 L742.3 196.4 L740.8 196.4 L739.3 196.4 L737.8 196.4 L736.3 196.4 L734.8 196.4 L733.3 196.4 L731.8 196.4 L730.3 196.4 L728.8 196.4 L727.3 196.3 L725.8 196.3 L724.3 196.3 L722.8 196.3 L721.3 196.3 L719.8 196.3 L718.3 196.3 L716.8 196.2 L715.3 196.2 L713.8 196.2 L712.3 196.2 L710.8 196.2 L709.3 196.2 L707.8 196.2 L706.3 196.2 L704.8 196.2 L703.3 196.2 L701.8 196.2 L700.3 196.2 L698.8 196.2 L697.3 196.2 L695.8 196.2 L694.3 196.2 L692.8 196.2 L691.3 196.2 L689.8 196.2 L688.3 196.2 L686.8 196.2 L685.3 196.2 L683.8 196.2 L682.3 196.2 L680.8 196.2 L679.3 196.2 L677.8 196.2 L676.3 196.2 L674.8 196.2 L673.3 196.1 L671.8 195.9 L670.3 195.6 L668.8 195.3 L667.3 194.9 L665.8 194.3 L664.3 193.6 L662.8 192.9 L661.3 192.1 L659.8 191.2 L658.3 190.2 L656.8 189.1 L655.3 188.0 L653.8 186.9 L652.3 185.8 L650.8 184.7 L649.3 183.5 L647.8 182.3 L646.3 180.6 L644.8 178.9 L643.3 177.7 L641.8 177.5 L640.3 177.5 L638.8 177.5 L637.3 177.3 L635.8 176.9 L634.3 176.4 L632.8 175.7 L631.3 175.1 L629.8 174.4 L628.3 173.6 L626.8 172.8 L625.3 172.0 L623.8 171.4 L622.3 171.0 L620.8 170.7 L619.3 170.3 L617.8 170.1 L616.3 169.9 L614.8 169.7 L613.3 169.6 L611.8 169.5 L610.3 169.4 L608.8 169.3 L607.3 169.2 L605.8 169.1 L604.3 169.1 L602.8 169.0 L601.3 169.0 L599.8 169.0 L598.3 168.9 L596.8 168.9 L595.3 168.9 L593.8 168.9 L592.3 168.9 L590.8 168.9 L589.3 168.9 L587.8 168.9 L586.3 168.9 L584.8 168.9 L583.3 168.9 L581.8 168.9 L580.3 168.9 L578.8 168.9 L577.3 168.9 L575.8 168.9 L574.3 168.9 L572.8 168.9 L571.3 168.9 L569.8 168.9 L568.3 168.9 L566.8 168.9 L565.3 168.9 L563.8 169.0 L562.3 169.0 L560.8 169.0 L559.3 169.1 L557.8 169.1 L556.3 169.2 L554.8 169.2 L553.3 169.3 L551.8 169.3 L550.3 169.3 L548.8 169.4 L547.3 169.4 L545.8 169.4 L544.3 169.3 L542.8 169.3 L541.3 169.2 L539.8 169.1 L538.3 169.1 L536.8 169.0 L535.3 169.0 L533.8 168.9 L532.3 168.9 L530.8 169.0 L529.3 169.0 L527.8 169.0 L526.3 169.0 L524.8 169.0 L523.3 169.1 L521.8 169.1 L520.3 169.1 L518.8 169.1 L517.3 169.2 L515.8 169.2 L514.3 169.2 L512.8 169.3 L511.3 169.3 L509.8 169.3 L508.3 169.3 L506.8 169.3 L505.3 169.4 L503.8 169.4 L502.3 169.4 L500.8 169.4 L499.3 169.4 L497.8 169.4 L496.3 169.4 L494.8 169.4 L493.3 169.4 L491.8 169.4 L490.3 169.4 L488.8 169.4 L487.3 169.4 L485.8 169.4 L484.3 169.4 L482.8 169.4 L481.3 169.4 L479.8 169.4 L478.3 169.4 L476.8 169.6 L475.3 169.8 L473.8 170.0 L472.3 170.3 L470.8 170.7 L469.3 171.4 L467.8 172.5 L466.3 173.8 L464.8 175.0 L463.3 176.3 L461.8 177.8 L460.3 179.4 L458.8 181.0 L457.3 182.8 L455.8 184.7 L454.3 186.5 L452.8 188.2 L451.3 189.5 L449.8 190.7 L448.3 191.7 L446.8 192.6 L445.3 193.2 L443.8 193.7 L442.3 194.1 L440.8 194.5 L439.3 194.8 L437.8 195.1 L436.3 195.3 L434.8 195.5 L433.3 195.7 L431.8 195.8 L430.3 196.0 L428.8 196.1 L427.3 196.2 L425.8 196.3 L424.3 196.3 L422.8 196.4 L421.3 196.5 L419.8 196.5 L418.3 196.6 L416.8 196.6 L415.3 196.7 L413.8 196.7 L412.3 196.8 L410.8 196.8 L409.3 196.8 L407.8 196.9 L406.3 196.9 L404.8 196.9 L403.3 196.9 L401.8 196.9 L400.3 196.8 L398.8 196.8 L397.3 196.8 L395.8 196.7 L394.3 196.7 L392.8 196.6 L391.3 196.6 L389.8 196.5 L388.3 196.4 L386.8 196.4 L385.3 196.3 L383.8 196.2 L382.3 196.2 L380.8 196.1 L379.3 196.0 L377.8 196.0 L376.3 195.9 L374.8 195.8 L373.3 195.7 L371.8 195.6 L370.3 195.5 L368.8 195.4 L367.3 195.2 L365.8 195.1 L364.3 195.0 L362.8 194.9 L361.3 194.7 L359.8 194.6 L358.3 194.4 L356.8 194.3 L355.3 194.1 L353.8 193.8 L352.3 193.5 L350.8 193.1 L349.3 192.7 L347.8 192.2 L346.3 191.7 L344.8 191.1 L343.3 190.4 L341.8 189.6 L340.3 188.8 L338.8 187.9 L337.3 187.0 L335.8 186.0 L334.3 184.9 L332.8 183.7 L331.3 182.5 L329.8 181.2 L328.3 179.9 L326.8 178.4 L325.3 176.8 L323.8 175.3 L322.3 173.6 L320.8 171.8 L319.3 170.5 L317.8 170.3 L316.3 170.1 L314.8 170.0 L313.3 170.1 L311.8 170.4 L310.3 170.7 L308.8 171.0 L307.3 171.4 L305.8 171.8 L304.3 172.2 L302.8 172.5 L301.3 172.6 L299.8 172.6 L298.3 172.6 L296.8 172.6 L295.3 172.6 L293.8 172.6 L292.3 172.7 L290.8 173.3 L289.3 174.1 L287.8 174.6 L286.3 174.7 L284.8 174.5 L283.3 174.2 L281.8 173.8 L280.3 173.5 L278.8 173.3 L277.3 173.2 L275.8 173.2 L274.3 173.2 L272.8 173.2 L271.3 173.2 L269.8 173.2 L268.3 173.2 L266.8 173.2 L265.3 173.1 L263.8 173.0 L262.3 172.9 L260.8 172.8 L259.3 172.6 L257.8 172.3 L256.3 171.5 L254.8 170.6 L253.3 169.9 L251.8 169.8 L250.3 169.8 L248.8 169.8 L247.3 169.8 L245.8 169.8 L244.3 169.8 L242.8 169.8 L241.3 169.8 L239.8 169.8 L238.3 169.8 L236.8 169.8 L235.3 169.8 L233.8 169.8 L232.3 169.8 L230.8 169.8 L229.3 169.8 L227.8 169.8 L226.3 169.8 L224.8 169.8 L223.3 169.8 L221.8 169.8 L220.3 169.8 L218.8 169.8 L217.3 169.8 L215.8 169.8 L214.3 169.8 L212.8 169.8 L211.3 169.8 L209.8 169.8 L208.3 169.7 L206.8 169.7 L205.3 169.7 L203.8 169.6 L202.3 169.6 L200.8 169.5 L199.3 169.5 L197.8 169.4 L196.3 169.4 L194.8 169.4 L193.3 169.4 L191.8 169.4 L190.3 169.4 L188.8 169.4 L187.3 169.4 L185.8 169.5 L184.3 169.5 L182.8 169.6 L181.3 169.6 L179.8 169.6 L178.3 169.7 L176.8 169.7 L175.3 169.8 L173.8 169.8 L172.3 169.8 L170.8 169.8 L169.3 169.8 L167.8 169.8 L166.3 169.8 L164.8 169.8 L163.3 169.8 L161.8 169.8 L160.3 169.8 L158.8 169.8 L157.3 169.8 L155.8 169.9 L154.3 169.9 L152.8 170.1 L151.3 170.2 L149.8 170.4 L148.3 170.8 L146.8 171.6 L145.3 172.8 L143.8 174.0 L142.3 175.3 L140.8 176.7 L139.3 178.2 L137.8 179.8 L136.3 181.4 L134.8 183.2 L133.3 185.0 L131.8 186.8 L130.3 188.5 L128.8 190.0 L127.3 191.5 L125.8 192.9 L124.3 193.9 L122.8 194.3 L121.3 194.5 L119.8 194.7 L118.3 194.8 L116.8 195.0 L115.3 195.1 L113.8 195.2 L112.3 195.4 L110.8 195.6 L109.3 195.9 L107.8 196.3 L106.3 196.8 L104.8 197.1 L103.3 197.3 L101.8 197.3 L100.3 197.1 L98.8 196.9 L97.3 196.8 L95.8 196.7 L94.3 196.6 L92.8 196.6 L91.3 196.5 L89.8 196.5 L88.3 196.4 L86.8 196.4 L85.3 196.4 L83.8 196.3 L82.3 196.3 L80.8 196.3 L79.3 196.3 L77.8 196.2 L76.3 196.2 L74.8 196.2 L73.3 196.2 L71.8 196.2 L70.3 196.2 L68.8 196.2 L67.3 196.2 L65.8 196.2 L64.3 196.2 L62.8 196.2 L61.3 196.2 L59.8 196.2 L58.3 196.2 L56.8 196.2 L55.3 196.2 L53.8 196.2 L52.3 196.2 L50.8 196.2 L49.3 196.1 L47.8 195.9 L46.3 195.7 L44.8 195.5 L43.3 195.3 L41.8 195.1 L40.3 195.0 L38.8 194.8 L37.3 194.6 L35.8 194.4 L34.3 194.1 L32.8 193.8 L31.3 193.5 L29.8 192.9 L28.3 192.1 L26.8 191.1 L25.3 190.1 L23.8 189.1 L22.3 188.0 L20.8 186.8 L19.3 185.6 L17.8 184.5 L16.3 183.4 L14.8 182.4 L13.3 181.3 L11.8 180.0 L10.3 178.0 L8.8 176.5 L7.3 177.1 L5.8 178.7 L4.3 180.5 L2.8 183.1 L1.3 186.2 Z" fill="#131313"/><path d="M1.3 185.7 L2.8 182.6 L4.3 180.0 L5.8 178.2 L7.3 176.6 L8.8 176.0 L10.3 177.5 L11.8 179.5 L13.3 180.8 L14.8 181.9 L16.3 182.9 L17.8 184.0 L19.3 185.1 L20.8 186.3 L22.3 187.5 L23.8 188.6 L25.3 189.6 L26.8 190.6 L28.3 191.6 L29.8 192.4 L31.3 193.0 L32.8 193.3 L34.3 193.6 L35.8 193.9 L37.3 194.1 L38.8 194.3 L40.3 194.5 L41.8 194.6 L43.3 194.8 L44.8 195.0 L46.3 195.2 L47.8 195.4 L49.3 195.6 L50.8 195.7 L52.3 195.7 L53.8 195.7 L55.3 195.7 L56.8 195.7 L58.3 195.7 L59.8 195.7 L61.3 195.7 L62.8 195.7 L64.3 195.7 L65.8 195.7 L67.3 195.7 L68.8 195.7 L70.3 195.7 L71.8 195.7 L73.3 195.7 L74.8 195.7 L76.3 195.7 L77.8 195.7 L79.3 195.8 L80.8 195.8 L82.3 195.8 L83.8 195.8 L85.3 195.9 L86.8 195.9 L88.3 195.9 L89.8 196.0 L91.3 196.0 L92.8 196.1 L94.3 196.1 L95.8 196.2 L97.3 196.3 L98.8 196.4 L100.3 196.6 L101.8 196.8 L103.3 196.8 L104.8 196.6 L106.3 196.3 L107.8 195.8 L109.3 195.4 L110.8 195.1 L112.3 194.9 L113.8 194.7 L115.3 194.6 L116.8 194.5 L118.3 194.3 L119.8 194.2 L121.3 194.0 L122.8 193.8 L124.3 193.4 L125.8 192.4 L127.3 191.0 L128.8 189.5 L130.3 188.0 L131.8 186.3 L133.3 184.5 L134.8 182.7 L136.3 180.9 L137.8 179.3 L139.3 177.7 L140.8 176.2 L142.3 174.8 L143.8 173.5 L145.3 172.3 L146.8 171.1 L148.3 170.3 L149.8 169.9 L151.3 169.7 L152.8 169.6 L154.3 169.4 L155.8 169.4 L157.3 169.3 L158.8 169.3 L160.3 169.3 L161.8 169.3 L163.3 169.3 L164.8 169.3 L166.3 169.3 L167.8 169.3 L169.3 169.3 L170.8 169.3 L172.3 169.3 L173.8 169.3 L175.3 169.3 L176.8 169.2 L178.3 169.2 L179.8 169.1 L181.3 169.1 L182.8 169.1 L184.3 169.0 L185.8 169.0 L187.3 168.9 L188.8 168.9 L190.3 168.9 L191.8 168.9 L193.3 168.9 L194.8 168.9 L196.3 168.9 L197.8 168.9 L199.3 169.0 L200.8 169.0 L202.3 169.1 L203.8 169.1 L205.3 169.2 L206.8 169.2 L208.3 169.2 L209.8 169.3 L211.3 169.3 L212.8 169.3 L214.3 169.3 L215.8 169.3 L217.3 169.3 L218.8 169.3 L220.3 169.3 L221.8 169.3 L223.3 169.3 L224.8 169.3 L226.3 169.3 L227.8 169.3 L229.3 169.3 L230.8 169.3 L232.3 169.3 L233.8 169.3 L235.3 169.3 L236.8 169.3 L238.3 169.3 L239.8 169.3 L241.3 169.3 L242.8 169.3 L244.3 169.3 L245.8 169.3 L247.3 169.3 L248.8 169.3 L250.3 169.3 L251.8 169.3 L253.3 169.4 L254.8 170.1 L256.3 171.0 L257.8 171.8 L259.3 172.1 L260.8 172.3 L262.3 172.4 L263.8 172.5 L265.3 172.6 L266.8 172.7 L268.3 172.7 L269.8 172.7 L271.3 172.7 L272.8 172.7 L274.3 172.7 L275.8 172.7 L277.3 172.7 L278.8 172.8 L280.3 173.0 L281.8 173.3 L283.3 173.7 L284.8 174.0 L286.3 174.2 L287.8 174.1 L289.3 173.6 L290.8 172.8 L292.3 172.2 L293.8 172.1 L295.3 172.1 L296.8 172.1 L298.3 172.1 L299.8 172.1 L301.3 172.1 L302.8 172.0 L304.3 171.7 L305.8 171.3 L307.3 170.9 L308.8 170.5 L310.3 170.2 L311.8 169.9 L313.3 169.6 L314.8 169.5 L316.3 169.6 L317.8 169.8 L319.3 170.0 L320.8 171.3 L322.3 173.1 L323.8 174.8 L325.3 176.3 L326.8 177.9 L328.3 179.4 L329.8 180.7 L331.3 182.0 L332.8 183.2 L334.3 184.4 L335.8 185.5 L337.3 186.5 L338.8 187.4 L340.3 188.3 L341.8 189.1 L343.3 189.9 L344.8 190.6 L346.3 191.2 L347.8 191.7 L349.3 192.2 L350.8 192.6 L352.3 193.0 L353.8 193.3 L355.3 193.6 L356.8 193.8 L358.3 193.9 L359.8 194.1 L361.3 194.2 L362.8 194.4 L364.3 194.5 L365.8 194.6 L367.3 194.7 L368.8 194.9 L370.3 195.0 L371.8 195.1 L373.3 195.2 L374.8 195.3 L376.3 195.4 L377.8 195.5 L379.3 195.5 L380.8 195.6 L382.3 195.7 L383.8 195.7 L385.3 195.8 L386.8 195.9 L388.3 195.9 L389.8 196.0 L391.3 196.1 L392.8 196.1 L394.3 196.2 L395.8 196.2 L397.3 196.3 L398.8 196.3 L400.3 196.3 L401.8 196.4 L403.3 196.4 L404.8 196.4 L406.3 196.4 L407.8 196.4 L409.3 196.3 L410.8 196.3 L412.3 196.3 L413.8 196.2 L415.3 196.2 L416.8 196.1 L418.3 196.1 L419.8 196.0 L421.3 196.0 L422.8 195.9 L424.3 195.8 L425.8 195.8 L427.3 195.7 L428.8 195.6 L430.3 195.5 L431.8 195.3 L433.3 195.2 L434.8 195.0 L436.3 194.8 L437.8 194.6 L439.3 194.3 L440.8 194.0 L442.3 193.6 L443.8 193.2 L445.3 192.7 L446.8 192.1 L448.3 191.2 L449.8 190.2 L451.3 189.0 L452.8 187.7 L454.3 186.0 L455.8 184.2 L457.3 182.3 L458.8 180.5 L460.3 178.9 L461.8 177.3 L463.3 175.8 L464.8 174.5 L466.3 173.3 L467.8 172.0 L469.3 170.9 L470.8 170.2 L472.3 169.8 L473.8 169.5 L475.3 169.3 L476.8 169.1 L478.3 168.9 L479.8 168.9 L481.3 168.9 L482.8 168.9 L484.3 168.9 L485.8 168.9 L487.3 168.9 L488.8 168.9 L490.3 168.9 L491.8 168.9 L493.3 168.9 L494.8 168.9 L496.3 168.9 L497.8 168.9 L499.3 168.9 L500.8 168.9 L502.3 168.9 L503.8 168.9 L505.3 168.9 L506.8 168.8 L508.3 168.8 L509.8 168.8 L511.3 168.8 L512.8 168.8 L514.3 168.7 L515.8 168.7 L517.3 168.7 L518.8 168.6 L520.3 168.6 L521.8 168.6 L523.3 168.6 L524.8 168.5 L526.3 168.5 L527.8 168.5 L529.3 168.5 L530.8 168.5 L532.3 168.4 L533.8 168.4 L535.3 168.5 L536.8 168.5 L538.3 168.6 L539.8 168.6 L541.3 168.7 L542.8 168.8 L544.3 168.8 L545.8 168.9 L547.3 168.9 L548.8 168.9 L550.3 168.8 L551.8 168.8 L553.3 168.8 L554.8 168.7 L556.3 168.7 L557.8 168.6 L559.3 168.6 L560.8 168.5 L562.3 168.5 L563.8 168.5 L565.3 168.4 L566.8 168.4 L568.3 168.4 L569.8 168.4 L571.3 168.4 L572.8 168.4 L574.3 168.4 L575.8 168.4 L577.3 168.4 L578.8 168.4 L580.3 168.4 L581.8 168.4 L583.3 168.4 L584.8 168.4 L586.3 168.4 L587.8 168.4 L589.3 168.4 L590.8 168.4 L592.3 168.4 L593.8 168.4 L595.3 168.4 L596.8 168.4 L598.3 168.4 L599.8 168.5 L601.3 168.5 L602.8 168.5 L604.3 168.6 L605.8 168.6 L607.3 168.7 L608.8 168.8 L610.3 168.9 L611.8 169.0 L613.3 169.1 L614.8 169.2 L616.3 169.4 L617.8 169.6 L619.3 169.8 L620.8 170.2 L622.3 170.5 L623.8 170.9 L625.3 171.5 L626.8 172.3 L628.3 173.1 L629.8 173.9 L631.3 174.6 L632.8 175.2 L634.3 175.9 L635.8 176.4 L637.3 176.8 L638.8 177.0 L640.3 177.0 L641.8 177.0 L643.3 177.2 L644.8 178.4 L646.3 180.1 L647.8 181.8 L649.3 183.0 L650.8 184.2 L652.3 185.3 L653.8 186.4 L655.3 187.5 L656.8 188.6 L658.3 189.7 L659.8 190.7 L661.3 191.6 L662.8 192.4 L664.3 193.1 L665.8 193.8 L667.3 194.4 L668.8 194.8 L670.3 195.1 L671.8 195.4 L673.3 195.6 L674.8 195.7 L676.3 195.7 L677.8 195.7 L679.3 195.7 L680.8 195.7 L682.3 195.7 L683.8 195.7 L685.3 195.7 L686.8 195.7 L688.3 195.7 L689.8 195.7 L691.3 195.7 L692.8 195.7 L694.3 195.7 L695.8 195.7 L697.3 195.7 L698.8 195.7 L700.3 195.7 L701.8 195.7 L703.3 195.7 L704.8 195.7 L706.3 195.7 L707.8 195.7 L709.3 195.7 L710.8 195.7 L712.3 195.7 L713.8 195.7 L715.3 195.7 L716.8 195.7 L718.3 195.8 L719.8 195.8 L721.3 195.8 L722.8 195.8 L724.3 195.8 L725.8 195.8 L727.3 195.8 L728.8 195.9 L730.3 195.9 L731.8 195.9 L733.3 195.9 L734.8 195.9 L736.3 195.9 L737.8 195.9 L739.3 195.9 L740.8 195.9 L742.3 195.9 L743.8 195.9 L745.3 195.9 L746.8 195.9 L748.3 195.9 L749.8 195.9 L751.3 195.9 L752.8 195.9 L754.3 195.8 L755.8 195.8 L757.3 195.8 L758.8 195.8 L760.3 195.7 L761.8 195.7 L763.3 195.6 L764.8 195.2 L766.3 194.6 L767.8 193.9 L769.3 193.2 L770.8 192.1 L772.3 190.7 L773.8 189.2 L775.3 187.7 L776.8 186.2 L778.3 184.7 L779.8 183.2 L781.3 181.7 L782.8 180.2 L784.3 178.6 L785.8 177.0 L787.3 175.4 L788.8 174.0 L790.3 172.9 L791.8 171.9 L793.3 170.9 L794.8 170.1 L796.3 169.7 L797.8 169.5 L799.3 169.3 L800.8 169.1 L802.3 169.0 L803.8 169.0 L805.3 169.0 L806.8 169.0 L808.3 169.0 L809.8 169.0 L811.3 169.0 L812.8 169.0 L814.3 169.0 L815.8 169.0 L817.3 169.0 L818.8 169.0 L820.3 169.0 L821.8 169.0 L823.3 169.0 L824.8 169.0 L826.3 169.0 L827.8 169.0 L829.3 169.0 L830.8 169.0 L832.3 168.9 L833.8 168.9 L835.3 168.9 L836.8 168.9 L838.3 168.8 L839.8 168.8 L841.3 168.8 L842.8 168.7 L844.3 168.7 L845.8 168.7 L847.3 168.6 L848.8 168.6 L850.3 168.6 L851.8 168.5 L853.3 168.5 L854.8 168.5 L856.3 168.4 L857.8 168.4 L859.3 168.4 L860.8 168.4 L862.3 168.4 L863.8 168.4 L865.3 168.4 L866.8 168.4 L868.3 168.4 L869.8 168.4 L871.3 168.4 L872.8 168.4 L874.3 168.4 L875.8 168.4 L877.3 168.4 L878.8 168.4 L880.3 168.4 L881.8 168.4 L883.3 168.4 L884.8 168.4 L886.3 168.4 L887.8 168.5 L889.3 168.5 L890.8 168.5 L892.3 168.5 L893.8 168.5 L895.3 168.5 L896.8 168.5 L898.3 168.5 L899.8 168.5 L901.3 168.5 L902.8 168.6 L904.3 168.6 L905.8 168.6 L907.3 168.6 L908.8 168.6 L910.3 168.6 L911.8 168.6 L913.3 168.6 L914.8 168.6 L916.3 168.6 L917.8 168.6 L919.3 168.6 L920.8 168.6 L922.3 168.6 L923.8 168.6 L925.3 168.6 L926.8 168.6 L928.3 168.6 L929.8 168.6 L931.3 168.6 L932.8 168.6 L934.3 168.6 L935.8 168.6 L937.3 168.6 L938.8 168.6 L940.3 168.6 L941.8 168.6 L943.3 168.6 L944.8 168.6 L946.3 168.6 L947.8 168.6 L949.3 168.6 L950.8 168.6 L952.3 168.6 L953.8 168.6 L955.3 168.6 L956.8 168.6 L958.3 168.6 L959.8 168.6 L961.3 168.6 L962.8 168.6 L964.3 168.7 L965.8 168.7 L967.3 168.8 L968.8 168.9 L970.3 169.0 L971.8 169.1 L973.3 169.3 L974.8 169.5 L976.3 170.8 L977.8 174.7 L979.3 180.2 L982.0 194.1 L982.0 224.0 L979.3 224.0 L977.8 224.0 L976.3 224.0 L974.8 224.0 L973.3 224.0 L971.8 224.0 L970.3 224.0 L968.8 224.0 L967.3 224.0 L965.8 224.0 L964.3 224.0 L962.8 224.0 L961.3 224.0 L959.8 224.0 L958.3 224.0 L956.8 224.0 L955.3 224.0 L953.8 224.0 L952.3 224.0 L950.8 224.0 L949.3 224.0 L947.8 224.0 L946.3 224.0 L944.8 224.0 L943.3 224.0 L941.8 224.0 L940.3 224.0 L938.8 224.0 L937.3 224.0 L935.8 224.0 L934.3 224.0 L932.8 224.0 L931.3 224.0 L929.8 224.0 L928.3 224.0 L926.8 224.0 L925.3 224.0 L923.8 224.0 L922.3 224.0 L920.8 224.0 L919.3 224.0 L917.8 224.0 L916.3 224.0 L914.8 224.0 L913.3 224.0 L911.8 224.0 L910.3 224.0 L908.8 224.0 L907.3 224.0 L905.8 224.0 L904.3 224.0 L902.8 224.0 L901.3 224.0 L899.8 224.0 L898.3 224.0 L896.8 224.0 L895.3 224.0 L893.8 224.0 L892.3 224.0 L890.8 224.0 L889.3 224.0 L887.8 224.0 L886.3 224.0 L884.8 224.0 L883.3 224.0 L881.8 224.0 L880.3 224.0 L878.8 224.0 L877.3 224.0 L875.8 224.0 L874.3 224.0 L872.8 224.0 L871.3 224.0 L869.8 224.0 L868.3 224.0 L866.8 224.0 L865.3 224.0 L863.8 224.0 L862.3 224.0 L860.8 224.0 L859.3 224.0 L857.8 224.0 L856.3 224.0 L854.8 224.0 L853.3 224.0 L851.8 224.0 L850.3 224.0 L848.8 224.0 L847.3 224.0 L845.8 224.0 L844.3 224.0 L842.8 224.0 L841.3 224.0 L839.8 224.0 L838.3 224.0 L836.8 224.0 L835.3 224.0 L833.8 224.0 L832.3 224.0 L830.8 224.0 L829.3 224.0 L827.8 224.0 L826.3 224.0 L824.8 224.0 L823.3 224.0 L821.8 224.0 L820.3 224.0 L818.8 224.0 L817.3 224.0 L815.8 224.0 L814.3 224.0 L812.8 224.0 L811.3 224.0 L809.8 224.0 L808.3 224.0 L806.8 224.0 L805.3 224.0 L803.8 224.0 L802.3 224.0 L800.8 224.0 L799.3 224.0 L797.8 224.0 L796.3 224.0 L794.8 224.0 L793.3 224.0 L791.8 224.0 L790.3 224.0 L788.8 224.0 L787.3 224.0 L785.8 224.0 L784.3 224.0 L782.8 224.0 L781.3 224.0 L779.8 224.0 L778.3 224.0 L776.8 224.0 L775.3 224.0 L773.8 224.0 L772.3 224.0 L770.8 224.0 L769.3 224.0 L767.8 224.0 L766.3 224.0 L764.8 224.0 L763.3 224.0 L761.8 224.0 L760.3 224.0 L758.8 224.0 L757.3 224.0 L755.8 224.0 L754.3 224.0 L752.8 224.0 L751.3 224.0 L749.8 224.0 L748.3 224.0 L746.8 224.0 L745.3 224.0 L743.8 224.0 L742.3 224.0 L740.8 224.0 L739.3 224.0 L737.8 224.0 L736.3 224.0 L734.8 224.0 L733.3 224.0 L731.8 224.0 L730.3 224.0 L728.8 224.0 L727.3 224.0 L725.8 224.0 L724.3 224.0 L722.8 224.0 L721.3 224.0 L719.8 224.0 L718.3 224.0 L716.8 224.0 L715.3 224.0 L713.8 224.0 L712.3 224.0 L710.8 224.0 L709.3 224.0 L707.8 224.0 L706.3 224.0 L704.8 224.0 L703.3 224.0 L701.8 224.0 L700.3 224.0 L698.8 224.0 L697.3 224.0 L695.8 224.0 L694.3 224.0 L692.8 224.0 L691.3 224.0 L689.8 224.0 L688.3 224.0 L686.8 224.0 L685.3 224.0 L683.8 224.0 L682.3 224.0 L680.8 224.0 L679.3 224.0 L677.8 224.0 L676.3 224.0 L674.8 224.0 L673.3 224.0 L671.8 224.0 L670.3 224.0 L668.8 224.0 L667.3 224.0 L665.8 224.0 L664.3 224.0 L662.8 224.0 L661.3 224.0 L659.8 224.0 L658.3 224.0 L656.8 224.0 L655.3 224.0 L653.8 224.0 L652.3 224.0 L650.8 224.0 L649.3 224.0 L647.8 224.0 L646.3 224.0 L644.8 224.0 L643.3 224.0 L641.8 224.0 L640.3 224.0 L638.8 224.0 L637.3 224.0 L635.8 224.0 L634.3 224.0 L632.8 224.0 L631.3 224.0 L629.8 224.0 L628.3 224.0 L626.8 224.0 L625.3 224.0 L623.8 224.0 L622.3 224.0 L620.8 224.0 L619.3 224.0 L617.8 224.0 L616.3 224.0 L614.8 224.0 L613.3 224.0 L611.8 224.0 L610.3 224.0 L608.8 224.0 L607.3 224.0 L605.8 224.0 L604.3 224.0 L602.8 224.0 L601.3 224.0 L599.8 224.0 L598.3 224.0 L596.8 224.0 L595.3 224.0 L593.8 224.0 L592.3 224.0 L590.8 224.0 L589.3 224.0 L587.8 224.0 L586.3 224.0 L584.8 224.0 L583.3 224.0 L581.8 224.0 L580.3 224.0 L578.8 224.0 L577.3 224.0 L575.8 224.0 L574.3 224.0 L572.8 224.0 L571.3 224.0 L569.8 224.0 L568.3 224.0 L566.8 224.0 L565.3 224.0 L563.8 224.0 L562.3 224.0 L560.8 224.0 L559.3 224.0 L557.8 224.0 L556.3 224.0 L554.8 224.0 L553.3 224.0 L551.8 224.0 L550.3 224.0 L548.8 224.0 L547.3 224.0 L545.8 224.0 L544.3 224.0 L542.8 224.0 L541.3 224.0 L539.8 224.0 L538.3 224.0 L536.8 224.0 L535.3 224.0 L533.8 224.0 L532.3 224.0 L530.8 224.0 L529.3 224.0 L527.8 224.0 L526.3 224.0 L524.8 224.0 L523.3 224.0 L521.8 224.0 L520.3 224.0 L518.8 224.0 L517.3 224.0 L515.8 224.0 L514.3 224.0 L512.8 224.0 L511.3 224.0 L509.8 224.0 L508.3 224.0 L506.8 224.0 L505.3 224.0 L503.8 224.0 L502.3 224.0 L500.8 224.0 L499.3 224.0 L497.8 224.0 L496.3 224.0 L494.8 224.0 L493.3 224.0 L491.8 224.0 L490.3 224.0 L488.8 224.0 L487.3 224.0 L485.8 224.0 L484.3 224.0 L482.8 224.0 L481.3 224.0 L479.8 224.0 L478.3 224.0 L476.8 224.0 L475.3 224.0 L473.8 224.0 L472.3 224.0 L470.8 224.0 L469.3 224.0 L467.8 224.0 L466.3 224.0 L464.8 224.0 L463.3 224.0 L461.8 224.0 L460.3 224.0 L458.8 224.0 L457.3 224.0 L455.8 224.0 L454.3 224.0 L452.8 224.0 L451.3 224.0 L449.8 224.0 L448.3 224.0 L446.8 224.0 L445.3 224.0 L443.8 224.0 L442.3 224.0 L440.8 224.0 L439.3 224.0 L437.8 224.0 L436.3 224.0 L434.8 224.0 L433.3 224.0 L431.8 224.0 L430.3 224.0 L428.8 224.0 L427.3 224.0 L425.8 224.0 L424.3 224.0 L422.8 224.0 L421.3 224.0 L419.8 224.0 L418.3 224.0 L416.8 224.0 L415.3 224.0 L413.8 224.0 L412.3 224.0 L410.8 224.0 L409.3 224.0 L407.8 224.0 L406.3 224.0 L404.8 224.0 L403.3 224.0 L401.8 224.0 L400.3 224.0 L398.8 224.0 L397.3 224.0 L395.8 224.0 L394.3 224.0 L392.8 224.0 L391.3 224.0 L389.8 224.0 L388.3 224.0 L386.8 224.0 L385.3 224.0 L383.8 224.0 L382.3 224.0 L380.8 224.0 L379.3 224.0 L377.8 224.0 L376.3 224.0 L374.8 224.0 L373.3 224.0 L371.8 224.0 L370.3 224.0 L368.8 224.0 L367.3 224.0 L365.8 224.0 L364.3 224.0 L362.8 224.0 L361.3 224.0 L359.8 224.0 L358.3 224.0 L356.8 224.0 L355.3 224.0 L353.8 224.0 L352.3 224.0 L350.8 224.0 L349.3 224.0 L347.8 224.0 L346.3 224.0 L344.8 224.0 L343.3 224.0 L341.8 224.0 L340.3 224.0 L338.8 224.0 L337.3 224.0 L335.8 224.0 L334.3 224.0 L332.8 224.0 L331.3 224.0 L329.8 224.0 L328.3 224.0 L326.8 224.0 L325.3 224.0 L323.8 224.0 L322.3 224.0 L320.8 224.0 L319.3 224.0 L317.8 224.0 L316.3 224.0 L314.8 224.0 L313.3 224.0 L311.8 224.0 L310.3 224.0 L308.8 224.0 L307.3 224.0 L305.8 224.0 L304.3 224.0 L302.8 224.0 L301.3 224.0 L299.8 224.0 L298.3 224.0 L296.8 224.0 L295.3 224.0 L293.8 224.0 L292.3 224.0 L290.8 224.0 L289.3 224.0 L287.8 224.0 L286.3 224.0 L284.8 224.0 L283.3 224.0 L281.8 224.0 L280.3 224.0 L278.8 224.0 L277.3 224.0 L275.8 224.0 L274.3 224.0 L272.8 224.0 L271.3 224.0 L269.8 224.0 L268.3 224.0 L266.8 224.0 L265.3 224.0 L263.8 224.0 L262.3 224.0 L260.8 224.0 L259.3 224.0 L257.8 224.0 L256.3 224.0 L254.8 224.0 L253.3 224.0 L251.8 224.0 L250.3 224.0 L248.8 224.0 L247.3 224.0 L245.8 224.0 L244.3 224.0 L242.8 224.0 L241.3 224.0 L239.8 224.0 L238.3 224.0 L236.8 224.0 L235.3 224.0 L233.8 224.0 L232.3 224.0 L230.8 224.0 L229.3 224.0 L227.8 224.0 L226.3 224.0 L224.8 224.0 L223.3 224.0 L221.8 224.0 L220.3 224.0 L218.8 224.0 L217.3 224.0 L215.8 224.0 L214.3 224.0 L212.8 224.0 L211.3 224.0 L209.8 224.0 L208.3 224.0 L206.8 224.0 L205.3 224.0 L203.8 224.0 L202.3 224.0 L200.8 224.0 L199.3 224.0 L197.8 224.0 L196.3 224.0 L194.8 224.0 L193.3 224.0 L191.8 224.0 L190.3 224.0 L188.8 224.0 L187.3 224.0 L185.8 224.0 L184.3 224.0 L182.8 224.0 L181.3 224.0 L179.8 224.0 L178.3 224.0 L176.8 224.0 L175.3 224.0 L173.8 224.0 L172.3 224.0 L170.8 224.0 L169.3 224.0 L167.8 224.0 L166.3 224.0 L164.8 224.0 L163.3 224.0 L161.8 224.0 L160.3 224.0 L158.8 224.0 L157.3 224.0 L155.8 224.0 L154.3 224.0 L152.8 224.0 L151.3 224.0 L149.8 224.0 L148.3 224.0 L146.8 224.0 L145.3 224.0 L143.8 224.0 L142.3 224.0 L140.8 224.0 L139.3 224.0 L137.8 224.0 L136.3 224.0 L134.8 224.0 L133.3 224.0 L131.8 224.0 L130.3 224.0 L128.8 224.0 L127.3 224.0 L125.8 224.0 L124.3 224.0 L122.8 224.0 L121.3 224.0 L119.8 224.0 L118.3 224.0 L116.8 224.0 L115.3 224.0 L113.8 224.0 L112.3 224.0 L110.8 224.0 L109.3 224.0 L107.8 224.0 L106.3 224.0 L104.8 224.0 L103.3 224.0 L101.8 224.0 L100.3 224.0 L98.8 224.0 L97.3 224.0 L95.8 224.0 L94.3 224.0 L92.8 224.0 L91.3 224.0 L89.8 224.0 L88.3 224.0 L86.8 224.0 L85.3 224.0 L83.8 224.0 L82.3 224.0 L80.8 224.0 L79.3 224.0 L77.8 224.0 L76.3 224.0 L74.8 224.0 L73.3 224.0 L71.8 224.0 L70.3 224.0 L68.8 224.0 L67.3 224.0 L65.8 224.0 L64.3 224.0 L62.8 224.0 L61.3 224.0 L59.8 224.0 L58.3 224.0 L56.8 224.0 L55.3 224.0 L53.8 224.0 L52.3 224.0 L50.8 224.0 L49.3 224.0 L47.8 224.0 L46.3 224.0 L44.8 224.0 L43.3 224.0 L41.8 224.0 L40.3 224.0 L38.8 224.0 L37.3 224.0 L35.8 224.0 L34.3 224.0 L32.8 224.0 L31.3 224.0 L29.8 224.0 L28.3 224.0 L26.8 224.0 L25.3 224.0 L23.8 224.0 L22.3 224.0 L20.8 224.0 L19.3 224.0 L17.8 224.0 L16.3 224.0 L14.8 224.0 L13.3 224.0 L11.8 224.0 L10.3 224.0 L8.8 224.0 L7.3 224.0 L5.8 224.0 L4.3 224.0 L2.8 224.0 L1.3 224.0 Z" fill="#744e2c"/><path d="M0.5 1.5 H982" stroke="#333" stroke-opacity="0.24" stroke-width="1" stroke-dasharray="6 4.75" fill="none"/><path d="M0.5 57.5 H982" stroke="#333" stroke-opacity="0.24" stroke-width="1" stroke-dasharray="6 4.75" fill="none"/><path d="M0.5 113.5 H982" stroke="#333" stroke-opacity="0.24" stroke-width="1" stroke-dasharray="6 4.75" fill="none"/><path d="M0.5 169.5 H982" stroke="#333" stroke-opacity="0.24" stroke-width="1" stroke-dasharray="6 4.75" fill="none"/><text x="6.200000000000003" y="53.3" font-size="11" fill="#222" letter-spacing="0.55" stroke="#fff" stroke-width="2.5" stroke-opacity="0.62" paint-order="stroke" stroke-linejoin="round">6,000</text><text x="6.200000000000003" y="109.4" font-size="11" fill="#222" letter-spacing="0.55" stroke="#fff" stroke-width="2.5" stroke-opacity="0.62" paint-order="stroke" stroke-linejoin="round">4,000</text><text x="6.200000000000003" y="165.6" font-size="11" fill="#222" letter-spacing="0.55" stroke="#fff" stroke-width="2.5" stroke-opacity="0.62" paint-order="stroke" stroke-linejoin="round">2,000</text><text x="6.200000000000003" y="221.3" font-size="11" fill="#222" letter-spacing="0.55" stroke="#fff" stroke-width="2.5" stroke-opacity="0.62" paint-order="stroke" stroke-linejoin="round">0</text><path d="M409.8 1 V224.0" stroke="#111" stroke-width="1.3" fill="none"/><text x="236.0" y="235.0" font-size="10.5" fill="#707070">Sat</text><text x="236.0" y="248.5" font-size="10.5" fill="#707070">12 Oct</text><text x="562.9" y="235.0" font-size="10.5" fill="#707070">Sun</text><text x="562.9" y="248.5" font-size="10.5" fill="#707070">13 Oct</text><text x="889.8" y="235.0" font-size="10.5" fill="#707070">Mon</text><text x="889.8" y="248.5" font-size="10.5" fill="#707070">14 Oct</text></svg>
<div class="ham" style="left:50px;top:833.3px"></div>
<div class="ham" style="left:50px;top:837.3px"></div>
<div class="ham" style="left:50px;top:841.3px"></div>
<div class="ct" style="left:74.5px;top:831.5px">Emission Intensity <span>kgCO<sub class="s">2</sub>e/MWh</span></div>
<div class="tag" style="left:752px;top:827px;width:138px">12 Oct 2024, 1:00 PM</div>
<div class="tot" style="left:890px;top:827px;width:121.5px"><b>294 kgCO<sub class="s">2</sub>e/MWh</b></div>
<div class="cbox" style="top:852px;height:210px;border-bottom:2px solid #d6d6d6;"></div>
<svg class="abs" style="left:29px;top:852px" width="984" height="210" viewBox="0 0 984 210" font-family="Liberation Sans, sans-serif"><rect x="205.8" y="1" width="122.4" height="165.5" fill="#f2f2f2"/><rect x="532.6" y="1" width="122.5" height="165.5" fill="#f2f2f2"/><rect x="859.5" y="1" width="122.5" height="165.5" fill="#f2f2f2"/><path d="M0.5 27.5 H982" stroke="#333" stroke-opacity="0.24" stroke-width="1" stroke-dasharray="6 4.75" fill="none"/><path d="M0.5 94.5 H982" stroke="#333" stroke-opacity="0.24" stroke-width="1" stroke-dasharray="6 4.75" fill="none"/><path d="M0.5 160.5 H982" stroke="#333" stroke-opacity="0.24" stroke-width="1" stroke-dasharray="6 4.75" fill="none"/><path d="M233.5 2 V200.0" stroke="#cbcbcb" stroke-width="1" stroke-dasharray="5.3 5.4" fill="none"/><path d="M560.5 2 V200.0" stroke="#cbcbcb" stroke-width="1" stroke-dasharray="5.3 5.4" fill="none"/><path d="M887.5 2 V200.0" stroke="#cbcbcb" stroke-width="1" stroke-dasharray="5.3 5.4" fill="none"/><path d="M1.3 96.2 L2.8 97.3 L4.3 98.5 L5.8 99.7 L7.3 100.9 L8.8 102.1 L10.3 103.3 L11.8 104.5 L13.3 105.8 L14.8 107.2 L16.3 108.8 L17.8 110.3 L19.3 111.9 L20.8 113.2 L22.3 114.5 L23.8 115.8 L25.3 116.9 L26.8 117.8 L28.3 118.4 L29.8 118.8 L31.3 119.1 L32.8 119.4 L34.3 119.7 L35.8 119.9 L37.3 120.0 L38.8 120.1 L40.3 120.2 L41.8 120.2 L43.3 120.3 L44.8 120.3 L46.3 120.4 L47.8 120.4 L49.3 120.5 L50.8 120.7 L52.3 120.9 L53.8 121.2 L55.3 121.5 L56.8 121.7 L58.3 121.9 L59.8 122.0 L61.3 122.1 L62.8 122.2 L64.3 122.3 L65.8 122.4 L67.3 122.4 L68.8 122.5 L70.3 122.5 L71.8 122.6 L73.3 122.7 L74.8 122.7 L76.3 122.8 L77.8 122.9 L79.3 122.9 L80.8 123.0 L82.3 123.0 L83.8 123.0 L85.3 123.0 L86.8 122.9 L88.3 122.6 L89.8 122.3 L91.3 122.0 L92.8 121.7 L94.3 121.3 L95.8 120.9 L97.3 120.5 L98.8 120.1 L100.3 119.7 L101.8 119.4 L103.3 119.1 L104.8 118.8 L106.3 118.5 L107.8 118.1 L109.3 117.6 L110.8 117.0 L112.3 116.3 L113.8 115.4 L115.3 114.6 L116.8 113.8 L118.3 113.0 L119.8 112.3 L121.3 111.6 L122.8 110.7 L124.3 109.6 L125.8 108.2 L127.3 106.6 L128.8 104.8 L130.3 103.0 L131.8 101.1 L133.3 99.1 L134.8 97.0 L136.3 94.9 L137.8 92.9 L139.3 90.8 L140.8 88.7 L142.3 86.8 L143.8 85.2 L145.3 83.5 L146.8 82.1 L148.3 80.9 L149.8 80.1 L151.3 79.6 L152.8 79.2 L154.3 78.9 L155.8 78.6 L157.3 78.3 L158.8 78.1 L160.3 77.9 L161.8 77.8 L163.3 77.6 L164.8 77.5 L166.3 77.3 L167.8 77.2 L169.3 77.0 L170.8 76.9 L172.3 76.9 L173.8 76.8 L175.3 76.8 L176.8 76.8 L178.3 76.8 L179.8 76.8 L181.3 76.8 L182.8 76.8 L184.3 76.7 L185.8 76.6 L187.3 76.5 L188.8 76.3 L190.3 76.1 L191.8 76.0 L193.3 75.9 L194.8 75.9 L196.3 75.8 L197.8 75.8 L199.3 75.7 L200.8 75.7 L202.3 75.6 L203.8 75.5 L205.3 75.5 L206.8 75.4 L208.3 75.3 L209.8 75.2 L211.3 75.1 L212.8 74.9 L214.3 74.4 L215.8 73.6 L217.3 72.9 L218.8 72.8 L220.3 72.9 L221.8 73.0 L223.3 73.2 L224.8 73.2 L226.3 73.2 L227.8 73.2 L229.3 73.2 L230.8 73.2 L232.3 73.2 L233.8 73.2 L235.3 73.1 L236.8 72.9 L238.3 72.7 L239.8 72.5 L241.3 72.4 L242.8 72.3 L244.3 72.3 L245.8 72.2 L247.3 72.2 L248.8 72.2 L250.3 72.1 L251.8 72.1 L253.3 72.1 L254.8 72.3 L256.3 72.6 L257.8 72.8 L259.3 73.0 L260.8 73.0 L262.3 72.9 L263.8 72.8 L265.3 72.7 L266.8 72.6 L268.3 72.5 L269.8 72.4 L271.3 72.3 L272.8 72.3 L274.3 72.4 L275.8 72.4 L277.3 72.5 L278.8 72.6 L280.3 72.6 L281.8 72.7 L283.3 72.8 L284.8 72.8 L286.3 72.7 L287.8 72.6 L289.3 72.5 L290.8 72.3 L292.3 72.2 L293.8 72.1 L295.3 72.1 L296.8 72.2 L298.3 72.2 L299.8 72.3 L301.3 72.4 L302.8 72.5 L304.3 72.6 L305.8 72.7 L307.3 72.9 L308.8 73.2 L310.3 73.6 L311.8 74.0 L313.3 74.7 L314.8 75.6 L316.3 76.8 L317.8 78.7 L319.3 81.3 L320.8 85.0 L322.3 88.3 L323.8 91.4 L325.3 94.3 L326.8 96.8 L328.3 98.7 L329.8 100.1 L331.3 101.3 L332.8 102.4 L334.3 103.5 L335.8 104.5 L337.3 105.5 L338.8 106.4 L340.3 107.3 L341.8 108.2 L343.3 109.0 L344.8 109.8 L346.3 110.6 L347.8 111.4 L349.3 112.1 L350.8 112.8 L352.3 113.4 L353.8 114.0 L355.3 114.6 L356.8 115.1 L358.3 115.5 L359.8 115.7 L361.3 115.8 L362.8 115.9 L364.3 116.0 L365.8 116.0 L367.3 116.1 L368.8 116.2 L370.3 116.4 L371.8 116.8 L373.3 117.1 L374.8 117.5 L376.3 117.8 L377.8 118.0 L379.3 118.1 L380.8 118.3 L382.3 118.4 L383.8 118.5 L385.3 118.6 L386.8 118.7 L388.3 118.8 L389.8 118.9 L391.3 119.0 L392.8 119.0 L394.3 119.1 L395.8 119.2 L397.3 119.3 L398.8 119.4 L400.3 119.6 L401.8 119.9 L403.3 120.1 L404.8 120.4 L406.3 120.7 L407.8 120.8 L409.3 120.9 L410.8 120.9 L412.3 120.9 L413.8 120.9 L415.3 120.9 L416.8 120.9 L418.3 120.9 L419.8 120.9 L421.3 120.8 L422.8 120.8 L424.3 120.7 L425.8 120.6 L427.3 120.5 L428.8 120.4 L430.3 120.3 L431.8 120.0 L433.3 119.7 L434.8 119.3 L436.3 118.9 L437.8 118.3 L439.3 117.6 L440.8 116.8 L442.3 115.9 L443.8 115.0 L445.3 113.9 L446.8 112.7 L448.3 111.4 L449.8 110.0 L451.3 108.4 L452.8 106.7 L454.3 104.9 L455.8 103.1 L457.3 101.2 L458.8 99.3 L460.3 97.3 L461.8 95.2 L463.3 93.1 L464.8 90.8 L466.3 88.5 L467.8 86.2 L469.3 84.1 L470.8 82.1 L472.3 80.1 L473.8 78.3 L475.3 76.8 L476.8 75.7 L478.3 74.8 L479.8 73.9 L481.3 73.4 L482.8 73.1 L484.3 73.0 L485.8 72.9 L487.3 72.8 L488.8 72.8 L490.3 72.8 L491.8 72.8 L493.3 72.8 L494.8 72.9 L496.3 73.1 L497.8 73.2 L499.3 73.3 L500.8 73.4 L502.3 73.4 L503.8 73.5 L505.3 73.5 L506.8 73.6 L508.3 73.6 L509.8 73.6 L511.3 73.6 L512.8 73.6 L514.3 73.6 L515.8 73.6 L517.3 73.5 L518.8 73.4 L520.3 73.4 L521.8 73.4 L523.3 73.5 L524.8 73.6 L526.3 73.8 L527.8 74.0 L529.3 74.2 L530.8 74.5 L532.3 74.8 L533.8 75.1 L535.3 75.5 L536.8 75.8 L538.3 76.0 L539.8 76.2 L541.3 76.4 L542.8 76.6 L544.3 76.7 L545.8 76.8 L547.3 76.8 L548.8 76.8 L550.3 76.8 L551.8 76.8 L553.3 76.7 L554.8 76.7 L556.3 76.7 L557.8 76.6 L559.3 76.6 L560.8 76.5 L562.3 76.5 L563.8 76.4 L565.3 76.3 L566.8 76.3 L568.3 76.2 L569.8 76.0 L571.3 75.8 L572.8 75.4 L574.3 74.8 L575.8 74.2 L577.3 73.7 L578.8 73.4 L580.3 73.3 L581.8 73.2 L583.3 73.2 L584.8 73.1 L586.3 73.1 L587.8 73.0 L589.3 72.8 L590.8 72.6 L592.3 72.4 L593.8 72.3 L595.3 72.4 L596.8 72.4 L598.3 72.5 L599.8 72.7 L601.3 72.8 L602.8 73.0 L604.3 73.1 L605.8 73.3 L607.3 73.5 L608.8 73.7 L610.3 73.9 L611.8 74.2 L613.3 74.5 L614.8 74.8 L616.3 75.1 L617.8 75.6 L619.3 76.3 L620.8 76.9 L622.3 77.6 L623.8 78.3 L625.3 78.9 L626.8 79.4 L628.3 79.8 L629.8 80.2 L631.3 80.5 L632.8 80.9 L634.3 81.2 L635.8 81.6 L637.3 81.9 L638.8 82.2 L640.3 82.8 L641.8 83.7 L643.3 85.0 L644.8 87.2 L646.3 89.8 L647.8 92.2 L649.3 93.9 L650.8 95.4 L652.3 96.8 L653.8 98.2 L655.3 99.8 L656.8 101.6 L658.3 103.5 L659.8 105.3 L661.3 106.9 L662.8 108.2 L664.3 109.3 L665.8 110.3 L667.3 111.2 L668.8 112.0 L670.3 112.8 L671.8 113.6 L673.3 114.3 L674.8 115.0 L676.3 115.5 L677.8 116.1 L679.3 116.5 L680.8 117.0 L682.3 117.4 L683.8 117.7 L685.3 118.1 L686.8 118.4 L688.3 118.6 L689.8 118.9 L691.3 119.0 L692.8 119.2 L694.3 119.4 L695.8 119.5 L697.3 119.6 L698.8 119.8 L700.3 119.9 L701.8 120.0 L703.3 120.1 L704.8 120.2 L706.3 120.3 L707.8 120.4 L709.3 120.6 L710.8 120.8 L712.3 121.2 L713.8 121.6 L715.3 121.9 L716.8 122.0 L718.3 122.0 L719.8 122.0 L721.3 122.0 L722.8 122.0 L724.3 122.0 L725.8 122.0 L727.3 122.0 L728.8 122.0 L730.3 122.0 L731.8 122.1 L733.3 122.1 L734.8 122.2 L736.3 122.2 L737.8 122.2 L739.3 122.0 L740.8 121.8 L742.3 121.5 L743.8 121.1 L745.3 120.8 L746.8 120.4 L748.3 120.1 L749.8 119.7 L751.3 119.3 L752.8 118.8 L754.3 118.2 L755.8 117.5 L757.3 117.0 L758.8 116.7 L760.3 116.5 L761.8 116.3 L763.3 116.1 L764.8 115.6 L766.3 114.6 L767.8 113.2 L769.3 111.5 L770.8 110.0 L772.3 108.1 L773.8 106.1 L775.3 104.1 L776.8 102.3 L778.3 100.7 L779.8 99.5 L781.3 98.4 L782.8 97.3 L784.3 96.1 L785.8 94.3 L787.3 91.9 L788.8 89.2 L790.3 86.6 L791.8 84.4 L793.3 82.6 L794.8 80.9 L796.3 79.4 L797.8 78.2 L799.3 77.3 L800.8 76.6 L802.3 76.0 L803.8 75.5 L805.3 75.0 L806.8 74.6 L808.3 74.1 L809.8 73.7 L811.3 73.3 L812.8 72.9 L814.3 72.5 L815.8 72.2 L817.3 72.0 L818.8 71.7 L820.3 71.4 L821.8 71.2 L823.3 71.0 L824.8 70.9 L826.3 70.9 L827.8 71.0 L829.3 71.1 L830.8 71.3 L832.3 71.4 L833.8 71.3 L835.3 71.2 L836.8 71.0 L838.3 70.8 L839.8 70.5 L841.3 70.2 L842.8 69.9 L844.3 69.8 L845.8 69.6 L847.3 69.4 L848.8 69.3 L850.3 69.2 L851.8 69.0 L853.3 68.9 L854.8 68.7 L856.3 68.5 L857.8 68.3 L859.3 68.1 L860.8 67.9 L862.3 67.6 L863.8 67.4 L865.3 67.1 L866.8 66.8 L868.3 66.5 L869.8 66.2 L871.3 66.1 L872.8 66.2 L874.3 66.3 L875.8 66.5 L877.3 66.6 L878.8 66.7 L880.3 66.8 L881.8 66.8 L883.3 66.8 L884.8 66.8 L886.3 66.8 L887.8 66.8 L889.3 66.8 L890.8 66.8 L892.3 66.7 L893.8 66.6 L895.3 66.5 L896.8 66.3 L898.3 66.2 L899.8 66.0 L901.3 65.9 L902.8 65.8 L904.3 65.7 L905.8 65.6 L907.3 65.5 L908.8 65.3 L910.3 65.2 L911.8 65.1 L913.3 64.9 L914.8 64.6 L916.3 64.3 L917.8 64.0 L919.3 63.7 L920.8 63.5 L922.3 63.3 L923.8 63.2 L925.3 63.1 L926.8 63.0 L928.3 62.9 L929.8 63.1 L931.3 63.3 L932.8 63.7 L934.3 64.0 L935.8 64.1 L937.3 64.2 L938.8 64.3 L940.3 64.3 L941.8 64.3 L943.3 64.4 L944.8 64.4 L946.3 64.5 L947.8 64.6 L949.3 64.7 L950.8 64.9 L952.3 65.0 L953.8 65.3 L955.3 65.9 L956.8 66.8 L958.3 67.8 L959.8 68.8 L961.3 69.6 L962.8 70.3 L964.3 71.0 L965.8 71.8 L967.3 72.6 L968.8 73.7 L970.3 74.9 L971.8 76.1 L973.3 77.3 L974.8 78.3 L976.3 79.3 L977.8 80.3 L979.3 81.2 L982.0 82.7" fill="none" stroke="#cb4d2e" stroke-width="1.75" stroke-linejoin="round"/><text x="6.200000000000003" y="23.2" font-size="11" fill="#222" stroke="#fff" stroke-width="2.5" stroke-opacity="0.62" paint-order="stroke" stroke-linejoin="round">1,000</text><text x="6.200000000000003" y="89.8" font-size="11" fill="#222" letter-spacing="0.55" stroke="#fff" stroke-width="2.5" stroke-opacity="0.62" paint-order="stroke" stroke-linejoin="round">500</text><text x="6.200000000000003" y="156.3" font-size="11" fill="#222" letter-spacing="0.55" stroke="#fff" stroke-width="2.5" stroke-opacity="0.62" paint-order="stroke" stroke-linejoin="round">0</text><path d="M409.8 1 V166.5" stroke="#111" stroke-width="1.3" fill="none"/><text x="236.0" y="178.0" font-size="10.5" fill="#707070">Sat</text><text x="236.0" y="191.5" font-size="10.5" fill="#707070">12 Oct</text><text x="562.9" y="178.0" font-size="10.5" fill="#707070">Sun</text><text x="562.9" y="191.5" font-size="10.5" fill="#707070">13 Oct</text><text x="889.8" y="178.0" font-size="10.5" fill="#707070">Mon</text><text x="889.8" y="191.5" font-size="10.5" fill="#707070">14 Oct</text></svg>
<div class="abs" style="left:29px;top:1064px;width:984px;height:2px;background:#d9d9d9"></div>
<div class="ham" style="left:50px;top:1075.8px"></div>
<div class="ham" style="left:50px;top:1079.8px"></div>
<div class="ham" style="left:50px;top:1083.8px"></div>
<div class="ct" style="left:74.5px;top:1074.0px">Price <span>$/MWh</span></div>
<div class="tag" style="left:801.5px;top:1069.5px;width:138px">12 Oct 2024, 1:00 PM</div>
<div class="tot" style="left:939.5px;top:1069.5px;width:72.0px"><b>-$175.70</b></div>
<div class="cbox" style="top:1094.5px;height:230px;"></div>
<svg class="abs" style="left:29px;top:1094.5px" width="984" height="230" viewBox="0 0 984 230" font-family="Liberation Sans, sans-serif"><rect x="205.8" y="1" width="122.4" height="180.0" fill="#f2f2f2"/><rect x="532.6" y="1" width="122.5" height="180.0" fill="#f2f2f2"/><rect x="859.5" y="1" width="122.5" height="180.0" fill="#f2f2f2"/><path d="M0.5 6.0 H982" stroke="#333" stroke-opacity="0.16" stroke-width="1" stroke-dasharray="6 4.75" fill="none"/><path d="M0.5 11.0 H982" stroke="#333" stroke-opacity="0.16" stroke-width="1" stroke-dasharray="6 4.75" fill="none"/><path d="M0.5 17.0 H982" stroke="#333" stroke-opacity="0.16" stroke-width="1" stroke-dasharray="6 4.75" fill="none"/><path d="M0.5 31.0 H982" stroke="#333" stroke-opacity="0.16" stroke-width="1" stroke-dasharray="6 4.75" fill="none"/><path d="M0.5 56.0 H982" stroke="#333" stroke-opacity="0.16" stroke-width="1" stroke-dasharray="6 4.75" fill="none"/><path d="M0.5 85.0 H982" stroke="#333" stroke-opacity="0.16" stroke-width="1" stroke-dasharray="6 4.75" fill="none"/><path d="M0.5 114.0 H982" stroke="#333" stroke-opacity="0.16" stroke-width="1" stroke-dasharray="6 4.75" fill="none"/><path d="M0.5 166.0 H982" stroke="#333" stroke-opacity="0.16" stroke-width="1" stroke-dasharray="6 4.75" fill="none"/><path d="M0.5 176.0 H982" stroke="#333" stroke-opacity="0.16" stroke-width="1" stroke-dasharray="6 4.75" fill="none"/><path d="M233.5 2 V215.0" stroke="#cbcbcb" stroke-width="1" stroke-dasharray="5.3 5.4" fill="none"/><path d="M560.5 2 V215.0" stroke="#cbcbcb" stroke-width="1" stroke-dasharray="5.3 5.4" fill="none"/><path d="M887.5 2 V215.0" stroke="#cbcbcb" stroke-width="1" stroke-dasharray="5.3 5.4" fill="none"/><path d="M1.3 143.3 H982" stroke="#ecc7ba" stroke-width="1" stroke-dasharray="1.5 2.5" fill="none"/><clipPath id="cpA"><rect x="0" y="0" width="984" height="143.3"/></clipPath><clipPath id="cpB"><rect x="0" y="143.3" width="984" height="80"/></clipPath><path d="M1.8 142.8 H8.7 V142.0 H15.5 V141.5 H22.3 V148.5 H29.1 V149.8 H35.9 V157.9 H42.7 V157.0 H49.5 V157.9 H56.3 V162.3 H63.1 V162.3 H69.9 V148.5 H76.8 V162.3 H83.6 V162.3 H90.4 V159.1 H97.2 V156.3 H104.0 V157.4 H110.8 V159.1 H117.6 V142.0 H124.4 V160.2 H131.2 V158.7 H138.1 V139.1 H144.9 V133.0 H151.7 V106.2 H158.5 V108.3 H165.3 V103.9 H172.1 V106.5 H178.9 V108.9 H185.7 V107.0 H192.5 V105.7 H199.3 V109.9 H206.2 V113.2 H213.0 V109.9 H219.8 V106.7 H226.6 V96.1 H233.4 V119.7 H240.2 V129.8 H247.0 V122.3 H253.8 V120.0 H260.6 V130.1 H267.5 V130.6 H274.3 V130.1 H281.1 V127.3 H287.9 V131.1 H294.7 V131.9 H301.5 V130.9 H308.3 V128.1 H315.1 V125.2 H321.9 V133.8 H328.7 V153.7 H335.6 V157.9 H342.4 V153.7 H349.2 V153.7 H356.0 V158.3 H362.8 V135.5 H369.6 V158.7 H376.4 V160.2 H383.2 V118.9 H390.0 V161.0 H396.8 V165.1 H403.7 V165.1 H410.5 V171.0 H417.3 V162.7 H424.1 V161.5 H430.9 V162.8 H437.7 V157.9 H444.5 V156.3 H451.3 V142.5 H458.1 V152.6 H465.0 V136.3 H471.8 V114.6 H478.6 V105.9 H485.4 V95.3 H492.2 V98.9 H499.0 V105.4 H505.8 V108.9 H512.6 V115.1 H519.4 V118.4 H526.2 V120.0 H533.1 V125.4 H539.9 V124.1 H546.7 V130.3 H553.5 V131.4 H560.3 V129.8 H567.1 V125.2 H573.9 V132.5 H580.7 V125.2 H587.5 V126.2 H594.4 V125.7 H601.2 V125.1 H608.0 V133.8 H614.8 V134.3 H621.6 V132.2 H628.4 V132.7 H635.2 V135.8 H642.0 V136.3 H648.8 V152.6 H655.6 V157.4 H662.5 V161.2 H669.3 V158.7 H676.1 V158.3 H682.9 V159.1 H689.7 V162.3 H696.5 V160.2 H703.3 V158.7 H710.1 V166.9 H716.9 V163.1 H723.8 V162.7 H730.6 V160.7 H737.4 V161.8 H744.2 V161.2 H751.0 V159.4 H757.8 V133.5 H764.6 V161.2 H771.4 V115.1 H778.2 V138.7 H785.0 V139.4 H791.9 V117.1 H798.7 V103.7 H805.5 V104.5 H812.3 V80.9 H819.1 V103.7 H825.9 V78.0 H832.7 V108.6 H839.5 V112.4 H846.3 V111.5 H853.1 V110.1 H860.0 V111.1 H866.8 V101.3 H873.6 V107.0 H880.4 V86.3 H887.2 V108.9 H894.0 V115.5 H900.8 V110.2 H907.6 V123.3 H914.4 V123.6 H921.3 V121.6 H928.1 V122.9 H934.9 V114.3 H941.7 V109.1 H948.5 V115.6 H955.3 V113.8 H962.1 V120.8 H968.9 V116.5 H975.7 V114.2 H982.0 V125.8" fill="none" stroke="#cb4d2e" stroke-width="1.8" clip-path="url(#cpA)"/><path d="M1.8 142.8 H8.7 V142.0 H15.5 V141.5 H22.3 V148.5 H29.1 V149.8 H35.9 V157.9 H42.7 V157.0 H49.5 V157.9 H56.3 V162.3 H63.1 V162.3 H69.9 V148.5 H76.8 V162.3 H83.6 V162.3 H90.4 V159.1 H97.2 V156.3 H104.0 V157.4 H110.8 V159.1 H117.6 V142.0 H124.4 V160.2 H131.2 V158.7 H138.1 V139.1 H144.9 V133.0 H151.7 V106.2 H158.5 V108.3 H165.3 V103.9 H172.1 V106.5 H178.9 V108.9 H185.7 V107.0 H192.5 V105.7 H199.3 V109.9 H206.2 V113.2 H213.0 V109.9 H219.8 V106.7 H226.6 V96.1 H233.4 V119.7 H240.2 V129.8 H247.0 V122.3 H253.8 V120.0 H260.6 V130.1 H267.5 V130.6 H274.3 V130.1 H281.1 V127.3 H287.9 V131.1 H294.7 V131.9 H301.5 V130.9 H308.3 V128.1 H315.1 V125.2 H321.9 V133.8 H328.7 V153.7 H335.6 V157.9 H342.4 V153.7 H349.2 V153.7 H356.0 V158.3 H362.8 V135.5 H369.6 V158.7 H376.4 V160.2 H383.2 V118.9 H390.0 V161.0 H396.8 V165.1 H403.7 V165.1 H410.5 V171.0 H417.3 V162.7 H424.1 V161.5 H430.9 V162.8 H437.7 V157.9 H444.5 V156.3 H451.3 V142.5 H458.1 V152.6 H465.0 V136.3 H471.8 V114.6 H478.6 V105.9 H485.4 V95.3 H492.2 V98.9 H499.0 V105.4 H505.8 V108.9 H512.6 V115.1 H519.4 V118.4 H526.2 V120.0 H533.1 V125.4 H539.9 V124.1 H546.7 V130.3 H553.5 V131.4 H560.3 V129.8 H567.1 V125.2 H573.9 V132.5 H580.7 V125.2 H587.5 V126.2 H594.4 V125.7 H601.2 V125.1 H608.0 V133.8 H614.8 V134.3 H621.6 V132.2 H628.4 V132.7 H635.2 V135.8 H642.0 V136.3 H648.8 V152.6 H655.6 V157.4 H662.5 V161.2 H669.3 V158.7 H676.1 V158.3 H682.9 V159.1 H689.7 V162.3 H696.5 V160.2 H703.3 V158.7 H710.1 V166.9 H716.9 V163.1 H723.8 V162.7 H730.6 V160.7 H737.4 V161.8 H744.2 V161.2 H751.0 V159.4 H757.8 V133.5 H764.6 V161.2 H771.4 V115.1 H778.2 V138.7 H785.0 V139.4 H791.9 V117.1 H798.7 V103.7 H805.5 V104.5 H812.3 V80.9 H819.1 V103.7 H825.9 V78.0 H832.7 V108.6 H839.5 V112.4 H846.3 V111.5 H853.1 V110.1 H860.0 V111.1 H866.8 V101.3 H873.6 V107.0 H880.4 V86.3 H887.2 V108.9 H894.0 V115.5 H900.8 V110.2 H907.6 V123.3 H914.4 V123.6 H921.3 V121.6 H928.1 V122.9 H934.9 V114.3 H941.7 V109.1 H948.5 V115.6 H955.3 V113.8 H962.1 V120.8 H968.9 V116.5 H975.7 V114.2 H982.0 V125.8" fill="none" stroke="#cb4d2e" stroke-width="1.8" stroke-dasharray="1.3 1.6" clip-path="url(#cpB)"/><text x="6.200000000000003" y="51.8" font-size="11" fill="#444" letter-spacing="0.55">300</text><text x="6.200000000000003" y="81.1" font-size="11" fill="#444" letter-spacing="0.55">200</text><text x="6.200000000000003" y="110.1" font-size="11" fill="#444">100</text><text x="6.200000000000003" y="139.1" font-size="11" fill="#444" letter-spacing="0.55">0</text><path d="M409.8 1 V181.0" stroke="#111" stroke-width="1.3" fill="none"/><text x="236.0" y="193.0" font-size="10.5" fill="#707070">Sat</text><text x="236.0" y="206.5" font-size="10.5" fill="#707070">12 Oct</text><text x="562.9" y="193.0" font-size="10.5" fill="#707070">Sun</text><text x="562.9" y="206.5" font-size="10.5" fill="#707070">13 Oct</text><text x="889.8" y="193.0" font-size="10.5" fill="#707070">Mon</text><text x="889.8" y="206.5" font-size="10.5" fill="#707070">14 Oct</text></svg>
<div class="abs" style="right:12px;top:83px;font-size:16px;color:#222;white-space:nowrap;line-height:22px;text-align:right;letter-spacing:-0.3px">12 Oct 2024, 1:00 PM <span style="font-size:12px;letter-spacing:0">AEST</span></div>
<div class="abs" style="left:1041px;top:106px;width:483px;height:752px;background:#fff;border:1px solid #e4e4e4;border-top:none"></div>
<div class="abs" style="left:1041px;top:104.5px;width:483.5px;height:2px;background:#333"></div>
<div class="abs" style="left:1058px;top:125px;width:165px;height:30px;border:1px solid #d6d6d6;border-radius:4px;background:#fff;font-size:12.5px;color:#444;line-height:28px;padding-left:8px">Detailed</div>
<svg class="abs" style="left:1199px;top:136px" width="13" height="8" viewBox="0 0 13 8"><path d="M1.5 1.5 L6.5 6.3 L11.5 1.5" fill="none" stroke="#333" stroke-width="1.3" stroke-linecap="round" stroke-linejoin="round"/></svg>
<div class="hd" style="right:204px;top:123px">Power</div><div class="hd2" style="right:204px;top:140px">MW</div>
<div class="hd" style="right:115px;top:123px;letter-spacing:0.2px">Contribution</div><div class="hd2" style="right:115px;top:140px">to demand</div>
<div class="hd" style="right:39px;top:123px">Av.Value</div><div class="hd2" style="right:39px;top:140px">$/MWh</div>
<div class="abs" style="left:1057.5px;top:171px;font-size:12.5px;font-weight:bold;color:#333;line-height:14px">Sources</div>
<div class="abs" style="left:1058px;top:194px;width:459px;height:1px;background:#dcdcdc"></div>
<div class="row" style="top:201.2px"><div class="sw" style="background:#fdf49b"></div><div class="lb">Solar (Rooftop)</div><div class="pw">12,349</div><div class="cn">50.3%</div><div class="av">–</div></div>
<div class="row" style="top:232.9px"><div class="sw" style="background:#f8d74b"></div><div class="lb">Solar (Utility)</div><div class="pw">2,980</div><div class="cn">12.1%</div><div class="av">–</div></div>
<div class="row" style="top:264.7px"><div class="sw" style="background:#417a36"></div><div class="lb">Wind</div><div class="pw">1,128</div><div class="cn">4.6%</div><div class="av">–</div></div>
<div class="row" style="top:296.4px"><div class="sw" style="background:#6ca1c3"></div><div class="lb">Hydro</div><div class="pw">733</div><div class="cn">3.0%</div><div class="av">–</div></div>
<div class="row" style="top:328.2px"><div class="sw" style="background:#3445c8"></div><div class="lb">Battery (Discharging)</div><div class="pw">-0.4</div><div class="cn">-0.002%</div><div class="av">–</div></div>
<div class="row" style="top:359.9px"><div class="sw" style="background:#a9682b"></div><div class="lb">Gas (Waste Coal Mine)</div><div class="pw">45</div><div class="cn">0.2%</div><div class="av">–</div></div>
<div class="row" style="top:391.7px"><div class="sw" style="background:#f6ddc4"></div><div class="lb">Gas (Reciprocating)</div><div class="pw">0</div><div class="cn">0.0%</div><div class="av">–</div></div>
<div class="row" style="top:423.4px"><div class="sw" style="background:#f9d0a0"></div><div class="lb">Gas (OCGT)</div><div class="pw">47</div><div class="cn">0.2%</div><div class="av">–</div></div>
<div class="row" style="top:455.2px"><div class="sw" style="background:#f6ba73"></div><div class="lb">Gas (CCGT)</div><div class="pw">120</div><div class="cn">0.5%</div><div class="av">–</div></div>
<div class="row" style="top:486.9px"><div class="sw" style="background:#ec943e"></div><div class="lb">Gas (Steam)</div><div class="pw">82</div><div class="cn">0.3%</div><div class="av">–</div></div>
<div class="row" style="top:518.7px"><div class="sw" style="background:#d6623f"></div><div class="lb">Distillate</div><div class="pw">0</div><div class="cn">0.0%</div><div class="av">–</div></div>
<div class="row" style="top:550.5px"><div class="sw" style="background:#367a7a"></div><div class="lb">Bioenergy (Biomass)</div><div class="pw">9.5</div><div class="cn">0.04%</div><div class="av">–</div></div>
<div class="row" style="top:582.2px"><div class="sw" style="background:#6cb8b8"></div><div class="lb">Bioenergy (Biogas)</div><div class="pw">3.7</div><div class="cn">0.02%</div><div class="av">–</div></div>
<div class="row" style="top:614.0px"><div class="sw" style="background:#131313"></div><div class="lb">Coal (Black)</div><div class="pw">5,428</div><div class="cn">22.1%</div><div class="av">–</div></div>
<div class="row" style="top:645.7px"><div class="sw" style="background:#744e2c"></div><div class="lb">Coal (Brown)</div><div class="pw">1,622</div><div class="cn">6.6%</div><div class="av">–</div></div>
<div class="abs" style="left:1057.5px;top:680.8px;font-size:12.5px;font-weight:bold;color:#333;line-height:14px">Loads</div>
<div class="abs" style="right:199px;top:680.8px;font-size:12.5px;font-weight:bold;color:#333;line-height:14px;text-align:right">-565</div>
<div class="abs" style="left:1058px;top:703px;width:459px;height:1px;background:#dcdcdc"></div>
<div class="row" style="top:710.5px"><div class="sw" style="background:#8eaed4"></div><div class="lb">Pumps</div><div class="pw">-530</div><div class="cn">-2.2%</div><div class="av">–</div></div>
<div class="row" style="top:742.2px"><div class="sw" style="background:#5f80f2"></div><div class="lb">Battery (Charging)</div><div class="pw">-35</div><div class="cn">-0.1%</div><div class="av">–</div></div>
<div class="abs" style="left:1049px;top:776.5px;width:468px;height:1.5px;background:#333"></div>
<div class="row" style="top:792.6px;font-weight:bold"><div class="abs" style="left:25px;top:9px;width:17px;height:3px;background:#e2e2e2;border-radius:1px"></div><div class="lb">Net</div><div class="pw">23,980</div><div class="cn"></div></div>
<div class="row" style="top:824.5px;font-weight:bold"><div class="abs" style="left:25px;top:9px;width:17px;height:3px;background:#e2e2e2;border-radius:1px"></div><div class="lb">Renewables</div><div class="pw">17,203</div><div class="cn">70.1%</div></div>
<div class="abs" style="left:1041px;top:894px;width:483px;height:430px;background:#fff;border:1px solid #e4e4e4"></div>
<div class="abs" style="left:1238px;top:910.3px;width:89.3px;height:30.5px;border:1px solid #e0e0e0;border-radius:4px;background:#fafafa"></div>
<div class="abs" style="left:1281.7px;top:910px;width:45.8px;height:31px;border:1.2px solid #666;border-radius:0 4px 4px 0;background:#fff"></div>
<svg class="abs" style="left:1253px;top:920px" width="14" height="12" viewBox="0 0 14 12" fill="none" stroke="#6a6a6a" stroke-width="1" stroke-linecap="butt"><path d="M4.4 2 H13 M4.4 5.8 H13 M4.4 9.6 H13"/><path d="M1.6 2 H2.9 M1.6 5.8 H2.9 M1.6 9.6 H2.9" stroke-width="1.3"/></svg>
<svg class="abs" style="left:1296px;top:918.5px" width="16" height="15" viewBox="0 0 16 15" fill="none" stroke="#333" stroke-width="1.05" stroke-linejoin="round"><path d="M6.6 2.6 A5.1 5.1 0 1 0 10.3 11.2 L6.6 7.7 Z"/><path d="M8.2 1.4 A5 5 0 0 1 12.9 6.3 H8.2 Z"/><path d="M9.2 7.9 H13.2 A4.6 4.6 0 0 1 11.9 10.7 Z"/></svg>
<svg class="abs" style="left:1041px;top:894px" width="483" height="411" viewBox="0 0 483 411"><path d="M242.36 64.00 A166.0 166.0 0 0 1 243.90 395.99 L243.44 355.49 A125.5 125.5 0 0 0 242.27 104.50 Z" fill="#fdf49b" stroke="#fff" stroke-width="0.7"/><path d="M243.18 396.00 A166.0 166.0 0 0 1 129.12 351.72 L156.66 322.02 A125.5 125.5 0 0 0 242.89 355.50 Z" fill="#f8d74b" stroke="#fff" stroke-width="0.7"/><path d="M128.59 351.22 A166.0 166.0 0 0 1 99.02 314.34 L133.91 293.77 A125.5 125.5 0 0 0 156.26 321.65 Z" fill="#417a36" stroke="#fff" stroke-width="0.7"/><path d="M98.66 313.72 A166.0 166.0 0 0 1 85.67 285.82 L123.81 272.20 A125.5 125.5 0 0 0 133.63 293.29 Z" fill="#6ca1c3" stroke="#fff" stroke-width="0.7"/><path d="M85.18 284.45 A166.0 166.0 0 0 1 84.57 282.66 L122.98 269.81 A125.5 125.5 0 0 0 123.44 271.17 Z" fill="#a9682b" stroke="#fff" stroke-width="0.7"/><path d="M84.12 281.29 A166.0 166.0 0 0 1 83.52 279.40 L122.19 267.35 A125.5 125.5 0 0 0 122.64 268.77 Z" fill="#f9d0a0" stroke="#fff" stroke-width="0.7"/><path d="M83.31 278.71 A166.0 166.0 0 0 1 81.90 273.87 L120.96 263.16 A125.5 125.5 0 0 0 122.02 266.83 Z" fill="#f6ba73" stroke="#fff" stroke-width="0.7"/><path d="M81.71 273.17 A166.0 166.0 0 0 1 80.85 269.83 L120.17 260.11 A125.5 125.5 0 0 0 120.82 262.63 Z" fill="#ec943e" stroke="#fff" stroke-width="0.7"/><path d="M80.51 268.42 A166.0 166.0 0 0 1 80.42 268.03 L119.84 258.75 A125.5 125.5 0 0 0 119.91 259.05 Z" fill="#367a7a" stroke="#fff" stroke-width="0.7"/><path d="M80.25 267.33 A166.0 166.0 0 0 1 80.22 267.17 L119.69 258.10 A125.5 125.5 0 0 0 119.71 258.22 Z" fill="#6cb8b8" stroke="#fff" stroke-width="0.7"/><path d="M80.06 266.47 A166.0 166.0 0 0 1 174.71 78.25 L191.12 115.27 A125.5 125.5 0 0 0 119.57 257.57 Z" fill="#131313" stroke="#fff" stroke-width="0.7"/><path d="M175.37 77.96 A166.0 166.0 0 0 1 241.64 64.00 L241.73 104.50 A125.5 125.5 0 0 0 191.63 115.05 Z" fill="#744e2c" stroke="#fff" stroke-width="0.7"/><text x="242" y="240.5" text-anchor="middle" font-family="Liberation Sans, sans-serif" font-weight="bold" font-size="19" letter-spacing="0.6" fill="#444">24,545 MW</text></svg>
</body></html>
